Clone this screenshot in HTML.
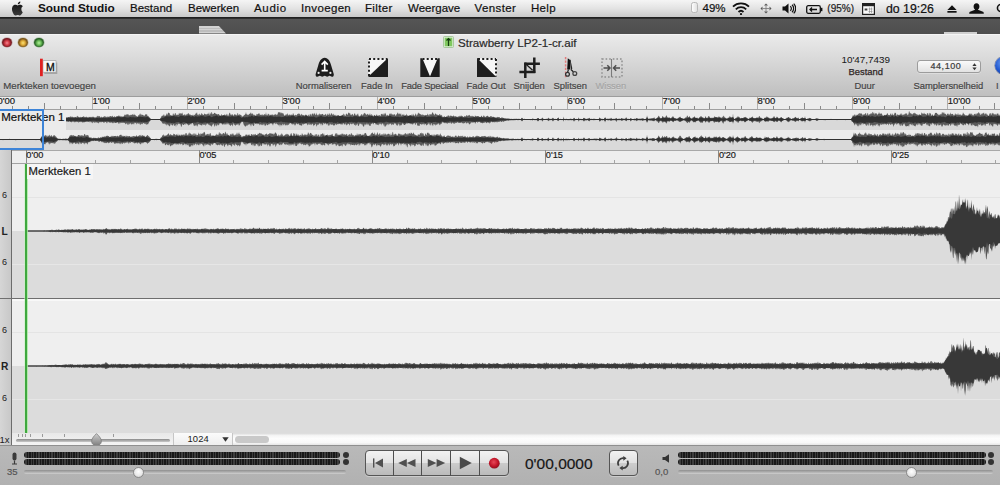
<!DOCTYPE html>
<html><head><meta charset="utf-8">
<style>
*{box-sizing:border-box}
html,body{margin:0;padding:0}
body{width:1000px;height:485px;overflow:hidden;position:relative;background:#4d4d4d;font-family:"Liberation Sans",sans-serif;color:#1a1a1a}
.a{position:absolute}
.t{position:absolute;white-space:nowrap;line-height:1}
.t,.mi,.lbl,.rl{-webkit-text-stroke:0.2px currentColor}
#menubar{left:0;top:0;width:1000px;height:17.5px;background:linear-gradient(#f5f5f5,#e3e3e3 50%,#c9c9c9);border-bottom:1px solid #202020}
.mi{position:absolute;top:2px;font-size:11.5px;line-height:12px;color:#111;white-space:nowrap}
#dark{left:0;top:17.5px;width:1000px;height:16px;background:linear-gradient(#565656,#4e4e4e)}
#toolbar{left:0;top:33.5px;width:1000px;height:62.5px;background:linear-gradient(#eaeaea,#d7d7d7 45%,#bfbfbf);border-top:1px solid #f4f4f4}
.lbl{position:absolute;top:81px;font-size:9.4px;line-height:10px;color:#444;white-space:nowrap;text-shadow:0 1px 0 rgba(255,255,255,.35)}
#tbline{left:0;top:96px;width:1000px;height:1px;background:#9c9c9c}
#ovr{left:0;top:97px;width:1000px;height:12px;background:#ececec}
.tk{position:absolute;width:1px;background:#8a8a8a}
.rl{position:absolute;font-size:9.9px;line-height:10px;color:#1a1a1a;white-space:nowrap}
#ovrl{left:0;top:109px;width:1000px;height:1px;background:#a0a0a0}
#ov{left:0;top:110px;width:1000px;height:40px}
#dr{left:0;top:150px;width:1000px;height:13px;background:#eeeeee;border-top:1px solid #a8a8a8}
#drl{left:0;top:163px;width:1000px;height:1px;background:#a2a2a2}
#gutter{left:0;top:150px;width:12px;height:295px;background:linear-gradient(90deg,#d6d6d6,#c8c8c8);border-right:1px solid #6c6c6c}
.gl{position:absolute;left:2px;font-size:9px;line-height:10px;color:#222}
#hbar{left:12px;top:433px;width:988px;height:12px;background:linear-gradient(#d8d8d8,#f4f4f4 20%,#fdfdfd 45%,#f8f8f8 80%,#e4e4e4)}
#transport{left:0;top:445px;width:1000px;height:40px;background:linear-gradient(#b9b9b9,#b1b1b1);border-top:1px solid #8f8f8f}
.meter{position:absolute;height:5.6px;border-radius:3px;background:#1c1c1c;background-image:repeating-linear-gradient(90deg,#181818 0 1.5px,#3c3c3c 1.5px 2.6px)}
.mdot{position:absolute;width:6px;height:6px;border-radius:50%;background:#333}
.track{position:absolute;height:4px;border-radius:2px;background:linear-gradient(#8e8e8e,#cfcfcf);}
.knob{position:absolute;width:11px;height:11px;border-radius:50%;background:radial-gradient(circle at 50% 40%,#ffffff,#e6e6e6 60%,#bdbdbd);border:1px solid #8a8a8a}
.seg{position:absolute;top:450px;height:25.5px;background:linear-gradient(#f2f2f2,#e3e3e3 50%,#cbcbcb 52%,#bababa);border:1px solid #555;box-shadow:0 1px 0 rgba(255,255,255,.35)}
</style></head><body>

<!-- MENUBAR -->
<div id="menubar" class="a"></div>
<svg class="a" style="left:9.6px;top:0px" width="16.5" height="16.5" viewBox="0 0 15 15"><defs><linearGradient id="ag" x1="0" y1="0" x2="0" y2="1"><stop offset="0" stop-color="#111"/><stop offset="1" stop-color="#3a3a3a"/></linearGradient></defs>
<path d="M10.3 8.1c0-1.6 1.3-2.3 1.4-2.4-.8-1.1-1.9-1.3-2.3-1.3-1-.1-1.9.6-2.4.6-.5 0-1.3-.6-2.1-.6C3.8 4.4 2.8 5 2.3 6c-1.1 2-.3 4.9.8 6.5.5.8 1.1 1.6 1.9 1.6.8 0 1-.5 2-.5s1.2.5 2 .5c.8 0 1.3-.8 1.8-1.5.6-.9.8-1.7.8-1.7s-1.3-.6-1.3-2.8zM8.8 3.2c.4-.5.7-1.2.6-1.9-.6 0-1.3.4-1.7.9-.4.4-.7 1.1-.6 1.8.6 0 1.3-.4 1.7-.8z" fill="url(#ag)"/>
</svg>
<div class="mi" style="left:38px;font-weight:bold;font-size:11.8px;-webkit-text-stroke:0">Sound Studio</div>
<div class="mi" style="left:130px">Bestand</div>
<div class="mi" style="left:188px">Bewerken</div>
<div class="mi" style="left:254px;letter-spacing:0.7px">Audio</div>
<div class="mi" style="left:301px;letter-spacing:0.35px">Invoegen</div>
<div class="mi" style="left:365px;letter-spacing:0.35px">Filter</div>
<div class="mi" style="left:408px">Weergave</div>
<div class="mi" style="left:474.5px;letter-spacing:0.4px">Venster</div>
<div class="mi" style="left:531px;letter-spacing:0.3px">Help</div>
<!-- status items -->
<div class="a" style="left:690.5px;top:2.3px;width:7px;height:11px;border-radius:2.5px;background:linear-gradient(90deg,#fdfdfd,#e2e2e2);border:1px solid #b8b8b8"></div>
<div class="mi" style="left:702.5px">49%</div>
<svg class="a" style="left:732px;top:2px" width="18" height="13" viewBox="0 0 18 13">
<path d="M1 4.6A11.5 11.5 0 0 1 17 4.6" stroke="#111" stroke-width="1.8" fill="none"/>
<path d="M3.8 7.3A7.5 7.5 0 0 1 14.2 7.3" stroke="#111" stroke-width="1.8" fill="none"/>
<path d="M6.5 10A3.6 3.6 0 0 1 11.5 10" stroke="#111" stroke-width="1.8" fill="none"/>
<circle cx="9" cy="12" r="1.1" fill="#111"/>
</svg>
<svg class="a" style="left:759.5px;top:3px" width="12" height="11" viewBox="0 0 12 11">
<path d="M6 0.5L8 2.5H4zM6 10.5L8 8.5H4zM0.5 5.5L2.5 3.5V7.5zM11.5 5.5L9.5 3.5V7.5z" fill="#555"/>
<path d="M6 2.5V8.5M2.5 5.5H9.5" stroke="#777" stroke-width="0.8"/>
</svg>
<svg class="a" style="left:781.5px;top:3px" width="14" height="11" viewBox="0 0 14 11">
<path d="M0.5 3.5H3L6.5 0.5V10.5L3 7.5H0.5z" fill="#111"/>
<path d="M8.3 3.2A3 3 0 0 1 8.3 7.8M10 1.8A5 5 0 0 1 10 9.2M11.7 0.6A7 7 0 0 1 11.7 10.4" stroke="#111" stroke-width="1.2" fill="none"/>
</svg>
<svg class="a" style="left:805.5px;top:4.5px" width="17" height="9" viewBox="0 0 17 9">
<rect x="0.7" y="0.7" width="13.6" height="7.6" rx="1.5" fill="none" stroke="#111" stroke-width="1.3"/>
<rect x="14.6" y="2.8" width="1.8" height="3.4" fill="#111"/>
<path d="M4 4.5H11M6 2.5L4 4.5L6 6.5" stroke="#111" stroke-width="1.3" fill="none"/>
</svg>
<div class="mi" style="left:827.3px;font-size:10px;top:3px;color:#222">(95%)</div>
<svg class="a" style="left:862px;top:2.5px" width="13" height="12" viewBox="0 0 13 12">
<rect x="0.6" y="0.6" width="11.8" height="10.8" fill="#fafafa" stroke="#222" stroke-width="1.2"/>
<rect x="0.6" y="0.6" width="11.8" height="2.6" fill="#222"/>
<path d="M3 5.5L5 7.5M5 5.5L3 7.5M4 5V8M2.5 6.5H5.5" stroke="#333" stroke-width="0.7"/>
<path d="M7.5 4.5V10M9.5 4.5V10M6.5 6H10.5M6.5 8.5H10.5" stroke="#888" stroke-width="0.6"/>
</svg>
<div class="mi" style="left:886px;font-size:12.3px;top:2.5px">do 19:26</div>
<svg class="a" style="left:947px;top:5px" width="10" height="8" viewBox="0 0 10 8">
<path d="M5 0.3L9.6 5H0.4z" fill="#111"/><rect x="0.4" y="6" width="9.2" height="1.7" fill="#111"/>
</svg>
<svg class="a" style="left:969px;top:3px" width="15" height="11" viewBox="0 0 15 11">
<path d="M7.5 0.3C5.6 0.3 4.6 1.8 4.6 3.6c0 1.4.7 2.6 1.5 3.1L1 8.8C.4 9.1.2 9.6.2 10.7H14.8c0-1.1-.2-1.6-.8-1.9L8.9 6.7c.8-.5 1.5-1.7 1.5-3.1C10.4 1.8 9.4.3 7.5.3z" fill="#111"/>
</svg>
<svg class="a" style="left:996px;top:3px" width="8" height="12" viewBox="0 0 8 12">
<circle cx="5" cy="5" r="3.6" stroke="#111" stroke-width="1.5" fill="none"/>
</svg>

<!-- DARK STRIP -->
<div id="dark" class="a"></div>
<div class="a" style="left:0;top:17.5px;width:1000px;height:1px;background:#2e2e2e"></div>
<div class="a" style="left:199px;top:25.5px;width:27px;height:8px;background:repeating-linear-gradient(#d2d2d2 0 1.5px,#bdbdbd 1.5px 3px);clip-path:polygon(0 0,72% 0,100% 100%,0 100%)"></div>
<div class="a" style="left:944px;top:32px;width:33px;height:1.5px;background:#cfcfcf"></div>

<!-- WINDOW TOOLBAR -->
<div id="toolbar" class="a"></div>
<div class="a" style="left:2.1px;top:37.6px;width:9.8px;height:9.8px;border-radius:50%;background:radial-gradient(circle closest-side at 50% 55%,#f08a92,#d8404c 50%,#a82a34 80%,#7a1e24);box-shadow:0 0 0 0.5px rgba(110,30,30,.4)"></div>
<div class="a" style="left:18.2px;top:37.6px;width:9.8px;height:9.8px;border-radius:50%;background:radial-gradient(circle closest-side at 50% 55%,#f8e07a,#e2b03a 50%,#b0802a 80%,#7a581e);box-shadow:0 0 0 0.5px rgba(120,90,20,.4)"></div>
<div class="a" style="left:34.3px;top:37.6px;width:9.8px;height:9.8px;border-radius:50%;background:radial-gradient(circle closest-side at 50% 55%,#b4ef9e,#72c25e 50%,#4a9440 80%,#2c6428);box-shadow:0 0 0 0.5px rgba(40,100,30,.4)"></div>

<!-- title -->
<svg class="a" style="left:443px;top:36px" width="11" height="12" viewBox="0 0 11 12">
<rect x="0.5" y="0.5" width="10" height="11" rx="1" fill="#d8ecd0" stroke="#9cbf90" stroke-width="0.8"/>
<rect x="1.8" y="1.8" width="7.4" height="8.4" fill="#7fc85e"/>
<path d="M5.5 2.5V10M3.5 4.5L5.5 2.5L7.5 4.5" stroke="#153c10" stroke-width="1.2" fill="none"/>
</svg>
<div class="t" style="left:458px;top:37px;font-size:11.6px;color:#2a2a2a">Strawberry LP2-1-cr.aif</div>

<!-- marker add icon -->
<svg class="a" style="left:39px;top:58px" width="20" height="20" viewBox="0 0 20 20">
<rect x="4.5" y="3.5" width="13" height="11.5" fill="#000" opacity="0.2" transform="translate(0.8,1)"/>
<rect x="4" y="2.7" width="13" height="11.5" fill="#f8f8f8" stroke="#9a9a9a" stroke-width="0.6"/>
<rect x="1" y="0.7" width="2.8" height="17.5" fill="#e02121"/>
<text x="11.3" y="12.6" font-family="Liberation Sans" font-size="10.5" text-anchor="middle" fill="#111" stroke="#111" stroke-width="0.35">M</text>
</svg>
<div class="lbl" style="left:3.3px;font-size:9.65px">Merkteken toevoegen</div>

<!-- Normaliseren -->
<svg class="a" style="left:315px;top:57px" width="19" height="21" viewBox="0 0 19 21">
<path d="M9.7 0.8C6.2 0.8 4.3 4.5 3.2 8.5L0.6 17.2C0.4 18.8 1.3 19.8 2.4 19.8C3.4 19.8 3.8 18.8 4.8 18.8C5.8 18.8 6.2 19.8 7.2 19.8C8.2 19.8 8.7 18.8 9.7 18.8C10.7 18.8 11.2 19.8 12.2 19.8C13.2 19.8 13.6 18.8 14.6 18.8C15.6 18.8 16 19.8 17 19.8C18.1 19.8 19 18.8 18.8 17.2L16.2 8.5C15.1 4.5 13.2 0.8 9.7 0.8Z" fill="#1c1c1c"/>
<path d="M9.7 5V13.5M6.6 7.6L9.7 4.4L12.8 7.6M6.6 13.6H12.8" stroke="#fff" stroke-width="1.6" fill="none"/>
<circle cx="3.6" cy="15.9" r="1.1" fill="#e8e8e8"/><circle cx="15.4" cy="15.9" r="1.1" fill="#e8e8e8"/>
</svg>
<div class="lbl" style="left:295.8px">Normaliseren</div>

<!-- Fade In -->
<svg class="a" style="left:368px;top:58px" width="20" height="19" viewBox="0 0 20 19">
<path d="M0.5 0.5H19.5L0.5 18.5Z" fill="#f7f7f7"/>
<path d="M0.5 18.5L19.5 0.5V18.5Z" fill="#1e1e1e"/>
<path d="M19.5 0.5V18.5H0.5" stroke="#1e1e1e" stroke-width="1.2" fill="none"/>
<path d="M1 18V1M1 1H19" stroke="#1e1e1e" stroke-width="2" stroke-dasharray="2 2.2" fill="none"/>
</svg>
<div class="lbl" style="left:361px">Fade In</div>

<!-- Fade Speciaal -->
<svg class="a" style="left:420px;top:57.5px" width="20" height="19.5" viewBox="0 0 20 19.5">
<path d="M2.3 0.3H17.7L10 18.5Z" fill="#f7f7f7"/>
<path d="M0.3 0.3H2.3L10 18.5L17.7 0.3H19.7V19.2H0.3Z" fill="#1e1e1e"/>
<path d="M2.5 1H17.5" stroke="#1e1e1e" stroke-width="2" stroke-dasharray="2 2.2" fill="none"/>
</svg>
<div class="lbl" style="left:401.3px;letter-spacing:-0.22px">Fade Speciaal</div>

<!-- Fade Out -->
<svg class="a" style="left:476.5px;top:57.5px" width="20" height="19.5" viewBox="0 0 20 19.5">
<path d="M0.3 0.3H19.5V19.2Z" fill="#f7f7f7"/>
<path d="M0.3 0.3L19.5 19.2H0.3Z" fill="#1e1e1e"/>
<path d="M0.8 0.3V19.2" stroke="#1e1e1e" stroke-width="1.6" fill="none"/>
<path d="M1 1H19M19 1V18.5" stroke="#1e1e1e" stroke-width="2" stroke-dasharray="2 2.2" fill="none"/>
</svg>
<div class="lbl" style="left:466.5px">Fade Out</div>

<!-- Snijden -->
<svg class="a" style="left:519px;top:56.5px" width="22" height="22" viewBox="0 0 22 22">
<path d="M5.6 6.7H20.9M15.3 0.6V15.9" stroke="#1e1e1e" stroke-width="2.5" fill="none"/>
<path d="M6.3 5.5V21M0.4 14.9H16.3" stroke="#1e1e1e" stroke-width="2.5" fill="none"/>
<path d="M7.6 7.8L13.6 13.3" stroke="#1e1e1e" stroke-width="1.3" fill="none"/>
</svg>
<div class="lbl" style="left:513.5px">Snijden</div>

<!-- Splitsen -->
<svg class="a" style="left:562px;top:56.5px" width="17" height="22" viewBox="0 0 17 22">
<path d="M3.6 0V21.5" stroke="#e27a7a" stroke-width="1.5" stroke-dasharray="2.2 1.4"/>
<path d="M5.8 1.3L8.8 3.5L8 12.5L5.2 12.5Z" fill="#111"/>
<path d="M8.2 1.5L10.3 11.5L8.8 13.2Z" fill="#222"/>
<path d="M6.5 12.5L5.5 15.5M9 12.5L11.5 15" stroke="#222" stroke-width="1.2"/>
<circle cx="5.5" cy="17.2" r="1.9" fill="none" stroke="#333" stroke-width="1.3"/>
<circle cx="12.8" cy="16.5" r="1.9" fill="none" stroke="#444" stroke-width="1.3"/>
</svg>
<div class="lbl" style="left:553.5px">Splitsen</div>

<!-- Wissen -->
<svg class="a" style="left:600.5px;top:57.5px" width="22" height="20" viewBox="0 0 22 20">
<path d="M1 1H21V19H1Z" stroke="#8e8e8e" stroke-width="1.5" stroke-dasharray="1.6 2" fill="none"/>
<path d="M10.5 1V19" stroke="#7a7a7a" stroke-width="1.1"/>
<path d="M2.5 10H9M6.3 7.3L9 10L6.3 12.7M19 10H12.5M15.2 7.3L12.5 10L15.2 12.7" stroke="#4e4e4e" stroke-width="1.5" fill="none"/>
</svg>
<div class="lbl" style="left:595.5px;color:#a5a5a5">Wissen</div>

<!-- right info -->
<div class="t" style="left:841.5px;top:55px;font-size:9.9px;color:#1a1a1a;-webkit-text-stroke:0.05px">10'47,7439</div>
<div class="t" style="left:848.5px;top:67px;font-size:9.4px;font-weight:normal;-webkit-text-stroke:0.25px #2e2424;color:#2e2424">Bestand</div>
<div class="lbl" style="left:854.5px">Duur</div>
<div class="a" style="left:917px;top:60px;width:64px;height:13px;border-radius:3px;background:linear-gradient(#fafafa,#e2e2e2);border:1px solid #9c9c9c;box-shadow:0 0.5px 0 rgba(255,255,255,.6)"></div>
<div class="t" style="left:930.5px;top:62.3px;font-size:9px;letter-spacing:0.55px;color:#3a3a3a">44,100</div>
<svg class="a" style="left:972px;top:63px" width="5" height="7.5" viewBox="0 0 5 7.5"><path d="M2.5 0.3L4.6 2.9H0.4zM2.5 7.2L4.6 4.6H0.4z" fill="#333"/></svg>
<div class="lbl" style="left:913.5px">Samplersnelheid</div>
<div class="a" style="left:995px;top:57px;width:17px;height:17px;border-radius:50%;background:radial-gradient(circle at 45% 35%,#6a9cf0,#2158d0 55%,#123a96);box-shadow:0 0 0 0.6px rgba(20,40,100,.5)"></div>
<div class="lbl" style="left:996px">I</div>

<!-- OVERVIEW RULER -->
<div id="tbline" class="a"></div>
<div id="ovr" class="a"></div>
<div class="tk" style="left:-3.4px;top:97px;height:12px;background:#b0b0b0"></div>
<div class="tk" style="left:12.4px;top:106px;height:3px"></div>
<div class="tk" style="left:28.3px;top:106px;height:3px"></div>
<div class="tk" style="left:44.1px;top:103px;height:6px"></div>
<div class="tk" style="left:60.0px;top:106px;height:3px"></div>
<div class="tk" style="left:75.8px;top:106px;height:3px"></div>
<div class="tk" style="left:91.6px;top:97px;height:12px;background:#b0b0b0"></div>
<div class="tk" style="left:107.5px;top:106px;height:3px"></div>
<div class="tk" style="left:123.3px;top:106px;height:3px"></div>
<div class="tk" style="left:139.1px;top:103px;height:6px"></div>
<div class="tk" style="left:155.0px;top:106px;height:3px"></div>
<div class="tk" style="left:170.8px;top:106px;height:3px"></div>
<div class="tk" style="left:186.7px;top:97px;height:12px;background:#b0b0b0"></div>
<div class="tk" style="left:202.5px;top:106px;height:3px"></div>
<div class="tk" style="left:218.3px;top:106px;height:3px"></div>
<div class="tk" style="left:234.2px;top:103px;height:6px"></div>
<div class="tk" style="left:250.0px;top:106px;height:3px"></div>
<div class="tk" style="left:265.9px;top:106px;height:3px"></div>
<div class="tk" style="left:281.7px;top:97px;height:12px;background:#b0b0b0"></div>
<div class="tk" style="left:297.5px;top:106px;height:3px"></div>
<div class="tk" style="left:313.4px;top:106px;height:3px"></div>
<div class="tk" style="left:329.2px;top:103px;height:6px"></div>
<div class="tk" style="left:345.0px;top:106px;height:3px"></div>
<div class="tk" style="left:360.9px;top:106px;height:3px"></div>
<div class="tk" style="left:376.7px;top:97px;height:12px;background:#b0b0b0"></div>
<div class="tk" style="left:392.6px;top:106px;height:3px"></div>
<div class="tk" style="left:408.4px;top:106px;height:3px"></div>
<div class="tk" style="left:424.2px;top:103px;height:6px"></div>
<div class="tk" style="left:440.1px;top:106px;height:3px"></div>
<div class="tk" style="left:455.9px;top:106px;height:3px"></div>
<div class="tk" style="left:471.8px;top:97px;height:12px;background:#b0b0b0"></div>
<div class="tk" style="left:487.6px;top:106px;height:3px"></div>
<div class="tk" style="left:503.4px;top:106px;height:3px"></div>
<div class="tk" style="left:519.3px;top:103px;height:6px"></div>
<div class="tk" style="left:535.1px;top:106px;height:3px"></div>
<div class="tk" style="left:550.9px;top:106px;height:3px"></div>
<div class="tk" style="left:566.8px;top:97px;height:12px;background:#b0b0b0"></div>
<div class="tk" style="left:582.6px;top:106px;height:3px"></div>
<div class="tk" style="left:598.5px;top:106px;height:3px"></div>
<div class="tk" style="left:614.3px;top:103px;height:6px"></div>
<div class="tk" style="left:630.1px;top:106px;height:3px"></div>
<div class="tk" style="left:646.0px;top:106px;height:3px"></div>
<div class="tk" style="left:661.8px;top:97px;height:12px;background:#b0b0b0"></div>
<div class="tk" style="left:677.6px;top:106px;height:3px"></div>
<div class="tk" style="left:693.5px;top:106px;height:3px"></div>
<div class="tk" style="left:709.3px;top:103px;height:6px"></div>
<div class="tk" style="left:725.2px;top:106px;height:3px"></div>
<div class="tk" style="left:741.0px;top:106px;height:3px"></div>
<div class="tk" style="left:756.8px;top:97px;height:12px;background:#b0b0b0"></div>
<div class="tk" style="left:772.7px;top:106px;height:3px"></div>
<div class="tk" style="left:788.5px;top:106px;height:3px"></div>
<div class="tk" style="left:804.4px;top:103px;height:6px"></div>
<div class="tk" style="left:820.2px;top:106px;height:3px"></div>
<div class="tk" style="left:836.0px;top:106px;height:3px"></div>
<div class="tk" style="left:851.9px;top:97px;height:12px;background:#b0b0b0"></div>
<div class="tk" style="left:867.7px;top:106px;height:3px"></div>
<div class="tk" style="left:883.5px;top:106px;height:3px"></div>
<div class="tk" style="left:899.4px;top:103px;height:6px"></div>
<div class="tk" style="left:915.2px;top:106px;height:3px"></div>
<div class="tk" style="left:931.1px;top:106px;height:3px"></div>
<div class="tk" style="left:946.9px;top:97px;height:12px;background:#b0b0b0"></div>
<div class="tk" style="left:962.7px;top:106px;height:3px"></div>
<div class="tk" style="left:978.6px;top:106px;height:3px"></div>
<div class="tk" style="left:994.4px;top:103px;height:6px"></div>
<div class="rl" style="left:-2.6px;top:96px;font-size:9.5px">0'00</div>
<div class="rl" style="left:92.4px;top:96px;font-size:9.5px">1'00</div>
<div class="rl" style="left:187.5px;top:96px;font-size:9.5px">2'00</div>
<div class="rl" style="left:282.5px;top:96px;font-size:9.5px">3'00</div>
<div class="rl" style="left:377.5px;top:96px;font-size:9.5px">4'00</div>
<div class="rl" style="left:472.6px;top:96px;font-size:9.5px">5'00</div>
<div class="rl" style="left:567.6px;top:96px;font-size:9.5px">6'00</div>
<div class="rl" style="left:662.6px;top:96px;font-size:9.5px">7'00</div>
<div class="rl" style="left:757.6px;top:96px;font-size:9.5px">8'00</div>
<div class="rl" style="left:852.7px;top:96px;font-size:9.5px">9'00</div>
<div class="rl" style="left:947.7px;top:96px;font-size:9.5px">10'00</div>
<div id="ovrl" class="a"></div>

<!-- OVERVIEW WAVE -->
<div class="a" style="left:0;top:110px;width:1000px;height:9.5px;background:#ececec"></div>
<div class="a" style="left:0;top:119.5px;width:1000px;height:10px;background:#d9d9d9"></div>
<div class="a" style="left:0;top:129.5px;width:1000px;height:10px;background:#ececec"></div>
<div class="a" style="left:0;top:139.5px;width:1000px;height:10px;background:#d9d9d9"></div>
<div class="a" style="left:0;top:149px;width:1000px;height:1px;background:#d9d9d9"></div>
<svg class="a" style="left:0;top:0" width="1000" height="485">
<path d="M0,119.0 0.5,119.0 1,119.0 1.5,119.0 2,119.0 2.5,119.0 3,119.0 3.5,119.0 4,119.0 4.5,119.0 5,119.0 5.5,119.0 6,119.0 6.5,119.0 7,119.0 7.5,119.0 8,119.0 8.5,119.0 9,119.0 9.5,119.0 10,119.0 10.5,119.0 11,119.0 11.5,119.0 12,119.0 12.5,119.0 13,119.0 13.5,119.0 14,118.9 14.5,119.0 15,119.0 15.5,119.0 16,119.0 16.5,119.0 17,119.0 17.5,119.0 18,119.0 18.5,119.0 19,119.0 19.5,119.0 20,119.0 20.5,119.0 21,119.0 21.5,119.0 22,119.0 22.5,119.0 23,119.0 23.5,119.0 24,119.0 24.5,119.0 25,119.0 25.5,119.0 26,119.0 26.5,119.0 27,119.0 27.5,119.0 28,119.0 28.5,118.9 29,119.0 29.5,119.0 30,119.0 30.5,119.0 31,119.0 31.5,119.0 32,119.0 32.5,119.0 33,119.0 33.5,119.0 34,119.0 34.5,119.0 35,119.0 35.5,119.0 36,119.0 36.5,119.0 37,119.0 37.5,119.0 38,119.0 38.5,119.0 39,119.0 39.5,119.0 40,119.0 40.5,119.0 41,119.0 41.5,119.0 42,119.0 42.5,119.0 43,119.0 43.5,119.0 44,119.0 44.5,119.0 45,119.0 45.5,119.0 46,119.0 46.5,119.0 47,119.0 47.5,119.0 48,119.0 48.5,119.0 49,119.0 49.5,119.0 50,119.0 50.5,119.0 51,119.0 51.5,119.0 52,119.0 52.5,119.0 53,119.0 53.5,119.0 54,119.0 54.5,119.0 55,119.0 55.5,119.0 56,119.0 56.5,119.0 57,119.0 57.5,119.0 58,119.0 58.5,119.0 59,119.0 59.5,119.0 60,119.0 60.5,119.0 61,119.0 61.5,119.0 62,119.0 62.5,118.6 63,118.6 63.5,118.1 64,118.2 64.5,118.2 65,117.2 65.5,116.9 66,117.0 66.5,117.3 67,118.0 67.5,117.3 68,117.0 68.5,117.1 69,116.9 69.5,116.7 70,117.8 70.5,116.3 71,116.3 71.5,117.3 72,116.5 72.5,116.8 73,117.3 73.5,117.1 74,117.6 74.5,117.2 75,116.7 75.5,117.2 76,117.4 76.5,117.4 77,115.7 77.5,115.9 78,117.1 78.5,116.4 79,117.4 79.5,117.1 80,117.4 80.5,116.7 81,117.0 81.5,117.8 82,116.7 82.5,117.3 83,116.5 83.5,116.1 84,117.2 84.5,116.5 85,117.6 85.5,116.8 86,117.3 86.5,116.5 87,116.9 87.5,117.2 88,117.5 88.5,117.4 89,116.4 89.5,117.3 90,117.1 90.5,117.2 91,116.6 91.5,117.2 92,117.1 92.5,116.9 93,116.3 93.5,116.9 94,117.0 94.5,117.4 95,117.3 95.5,117.5 96,117.2 96.5,117.3 97,115.9 97.5,115.8 98,116.9 98.5,115.7 99,116.5 99.5,116.1 100,116.4 100.5,117.5 101,117.5 101.5,116.5 102,117.1 102.5,117.6 103,117.3 103.5,116.7 104,116.6 104.5,116.6 105,115.8 105.5,116.8 106,117.0 106.5,117.3 107,116.2 107.5,116.8 108,116.9 108.5,116.4 109,117.1 109.5,116.5 110,116.1 110.5,116.2 111,116.0 111.5,116.4 112,116.8 112.5,115.6 113,116.5 113.5,116.9 114,117.0 114.5,115.9 115,116.8 115.5,117.1 116,116.8 116.5,116.1 117,116.6 117.5,116.1 118,116.1 118.5,115.8 119,115.2 119.5,116.4 120,115.5 120.5,116.6 121,116.8 121.5,116.1 122,117.1 122.5,116.6 123,116.2 123.5,116.8 124,116.0 124.5,115.0 125,114.2 125.5,115.1 126,115.5 126.5,114.3 127,114.3 127.5,114.6 128,114.3 128.5,114.5 129,115.8 129.5,115.1 130,115.6 130.5,115.1 131,114.4 131.5,115.2 132,114.5 132.5,114.1 133,115.2 133.5,114.9 134,113.5 134.5,114.7 135,115.2 135.5,114.8 136,116.6 136.5,115.8 137,116.6 137.5,116.7 138,116.2 138.5,114.8 139,115.7 139.5,114.6 140,113.4 140.5,113.7 141,115.8 141.5,114.4 142,114.3 142.5,115.0 143,114.9 143.5,115.2 144,115.9 144.5,115.8 145,114.7 145.5,114.6 146,114.0 146.5,114.7 147,113.9 147.5,116.2 148,115.7 148.5,116.2 149,117.0 149.5,117.3 150,118.2 150.5,118.8 151,119.0 151.5,119.0 152,119.0 152.5,119.0 153,119.0 153.5,119.0 154,119.0 154.5,119.0 155,119.0 155.5,119.0 156,119.0 156.5,119.0 157,119.0 157.5,119.0 158,119.0 158.5,119.0 159,119.0 159.5,119.0 160,119.0 160.5,118.0 161,117.5 161.5,116.3 162,115.8 162.5,115.5 163,115.9 163.5,114.9 164,114.1 164.5,115.7 165,116.4 165.5,115.4 166,115.3 166.5,113.1 167,115.3 167.5,114.2 168,113.1 168.5,112.4 169,112.9 169.5,113.0 170,115.0 170.5,114.7 171,115.8 171.5,115.3 172,115.5 172.5,115.7 173,113.3 173.5,113.7 174,115.2 174.5,114.7 175,113.0 175.5,113.1 176,115.1 176.5,115.2 177,114.0 177.5,115.2 178,114.6 178.5,115.2 179,112.6 179.5,114.1 180,113.2 180.5,112.9 181,114.5 181.5,112.8 182,113.9 182.5,112.3 183,115.6 183.5,114.7 184,114.9 184.5,114.5 185,114.0 185.5,115.8 186,114.5 186.5,114.6 187,114.6 187.5,114.3 188,113.3 188.5,113.2 189,113.8 189.5,114.2 190,115.5 190.5,114.3 191,115.1 191.5,115.2 192,115.2 192.5,115.5 193,114.2 193.5,115.8 194,115.4 194.5,114.7 195,114.8 195.5,114.0 196,112.7 196.5,113.8 197,112.0 197.5,115.3 198,114.3 198.5,114.5 199,115.8 199.5,113.5 200,114.0 200.5,114.9 201,115.1 201.5,112.9 202,113.6 202.5,114.2 203,115.1 203.5,115.1 204,114.5 204.5,113.2 205,114.0 205.5,114.1 206,115.0 206.5,113.9 207,114.4 207.5,113.9 208,113.2 208.5,114.4 209,111.9 209.5,114.7 210,114.8 210.5,112.4 211,114.5 211.5,111.7 212,112.4 212.5,114.4 213,114.0 213.5,113.9 214,113.2 214.5,112.8 215,113.1 215.5,113.4 216,114.1 216.5,113.8 217,114.5 217.5,114.5 218,113.9 218.5,113.9 219,114.4 219.5,114.9 220,115.9 220.5,116.0 221,114.8 221.5,114.0 222,115.7 222.5,114.9 223,115.4 223.5,115.1 224,115.0 224.5,113.9 225,115.8 225.5,114.4 226,115.4 226.5,114.4 227,113.5 227.5,115.3 228,116.1 228.5,115.5 229,113.7 229.5,113.0 230,112.4 230.5,115.1 231,114.3 231.5,115.4 232,113.7 232.5,114.6 233,115.0 233.5,115.9 234,114.9 234.5,114.2 235,113.9 235.5,115.1 236,114.6 236.5,115.1 237,115.7 237.5,113.0 238,113.2 238.5,115.2 239,115.0 239.5,114.3 240,114.3 240.5,115.3 241,114.8 241.5,115.5 242,116.9 242.5,116.2 243,116.6 243.5,115.8 244,115.2 244.5,115.0 245,114.5 245.5,114.0 246,111.9 246.5,114.8 247,113.7 247.5,115.3 248,114.5 248.5,115.1 249,114.3 249.5,113.5 250,114.3 250.5,112.7 251,112.6 251.5,113.7 252,114.5 252.5,113.1 253,114.0 253.5,115.5 254,113.9 254.5,115.4 255,114.7 255.5,115.7 256,116.2 256.5,114.3 257,113.7 257.5,114.5 258,114.2 258.5,113.6 259,113.2 259.5,113.5 260,115.3 260.5,114.6 261,115.1 261.5,115.3 262,113.8 262.5,114.8 263,115.4 263.5,115.1 264,114.6 264.5,114.3 265,114.3 265.5,114.9 266,112.1 266.5,115.5 267,114.2 267.5,115.8 268,113.2 268.5,114.5 269,113.7 269.5,115.7 270,114.5 270.5,115.0 271,114.7 271.5,114.4 272,115.2 272.5,114.4 273,114.2 273.5,115.6 274,115.1 274.5,114.4 275,114.4 275.5,113.7 276,115.2 276.5,114.9 277,114.1 277.5,115.0 278,112.3 278.5,112.2 279,112.5 279.5,112.4 280,111.7 280.5,113.8 281,111.8 281.5,113.4 282,112.8 282.5,113.0 283,114.1 283.5,112.9 284,115.4 284.5,115.2 285,115.9 285.5,114.6 286,114.8 286.5,114.1 287,115.5 287.5,113.1 288,114.2 288.5,115.4 289,114.9 289.5,114.3 290,114.9 290.5,114.5 291,115.8 291.5,114.1 292,115.5 292.5,115.0 293,113.0 293.5,113.8 294,115.2 294.5,115.4 295,115.3 295.5,114.4 296,115.6 296.5,115.3 297,114.7 297.5,113.9 298,113.8 298.5,113.3 299,114.6 299.5,113.3 300,114.6 300.5,115.7 301,113.9 301.5,113.7 302,115.5 302.5,114.6 303,115.2 303.5,115.3 304,114.8 304.5,115.9 305,115.1 305.5,114.8 306,114.6 306.5,115.1 307,115.6 307.5,115.8 308,115.7 308.5,114.3 309,116.0 309.5,115.7 310,113.6 310.5,115.1 311,113.6 311.5,116.2 312,113.6 312.5,113.4 313,114.1 313.5,115.1 314,112.6 314.5,114.1 315,113.3 315.5,115.2 316,115.1 316.5,112.5 317,115.1 317.5,114.6 318,116.1 318.5,113.7 319,115.6 319.5,113.2 320,113.9 320.5,114.6 321,114.4 321.5,114.5 322,113.8 322.5,114.0 323,114.1 323.5,114.9 324,115.5 324.5,114.5 325,115.3 325.5,113.7 326,114.0 326.5,116.3 327,114.3 327.5,114.7 328,113.0 328.5,115.2 329,114.6 329.5,112.8 330,115.3 330.5,115.1 331,113.3 331.5,113.4 332,113.5 332.5,115.0 333,114.4 333.5,113.5 334,115.8 334.5,114.9 335,114.6 335.5,115.9 336,114.4 336.5,115.9 337,115.7 337.5,115.0 338,115.5 338.5,115.1 339,115.3 339.5,116.2 340,116.0 340.5,116.3 341,115.1 341.5,115.9 342,115.1 342.5,115.1 343,114.6 343.5,113.2 344,115.9 344.5,113.8 345,116.3 345.5,115.7 346,113.7 346.5,113.6 347,114.6 347.5,115.0 348,113.6 348.5,112.4 349,112.8 349.5,113.8 350,112.6 350.5,115.1 351,114.5 351.5,115.4 352,113.7 352.5,113.9 353,114.8 353.5,116.0 354,114.2 354.5,113.5 355,113.3 355.5,115.0 356,115.5 356.5,115.2 357,113.9 357.5,114.8 358,113.0 358.5,115.4 359,115.9 359.5,116.4 360,115.6 360.5,115.9 361,114.6 361.5,113.7 362,115.5 362.5,115.4 363,113.8 363.5,115.0 364,112.7 364.5,113.6 365,112.8 365.5,113.9 366,114.4 366.5,115.3 367,113.7 367.5,114.4 368,113.5 368.5,115.3 369,114.7 369.5,114.7 370,113.0 370.5,115.6 371,114.5 371.5,114.1 372,115.9 372.5,114.5 373,116.5 373.5,116.5 374,114.7 374.5,114.9 375,115.4 375.5,116.3 376,115.7 376.5,114.6 377,114.6 377.5,115.8 378,115.9 378.5,115.5 379,115.0 379.5,114.9 380,116.1 380.5,115.9 381,114.1 381.5,113.8 382,114.6 382.5,113.5 383,115.6 383.5,112.9 384,115.5 384.5,112.7 385,114.4 385.5,112.4 386,114.4 386.5,115.6 387,115.9 387.5,114.5 388,115.2 388.5,115.9 389,114.9 389.5,113.7 390,113.5 390.5,113.6 391,114.8 391.5,113.0 392,115.1 392.5,113.7 393,115.6 393.5,114.4 394,114.3 394.5,114.3 395,114.5 395.5,115.7 396,115.8 396.5,114.3 397,114.1 397.5,112.7 398,112.4 398.5,113.9 399,114.5 399.5,112.9 400,114.5 400.5,114.3 401,113.1 401.5,115.7 402,115.4 402.5,114.5 403,114.3 403.5,115.4 404,113.5 404.5,116.0 405,114.9 405.5,115.2 406,115.6 406.5,113.5 407,115.3 407.5,115.6 408,115.6 408.5,116.1 409,116.3 409.5,114.7 410,116.0 410.5,115.4 411,115.4 411.5,115.8 412,113.5 412.5,115.4 413,115.8 413.5,113.4 414,115.7 414.5,115.4 415,115.5 415.5,113.5 416,113.7 416.5,115.8 417,115.6 417.5,114.6 418,113.0 418.5,112.5 419,114.1 419.5,113.2 420,114.1 420.5,114.0 421,114.9 421.5,115.3 422,113.7 422.5,114.7 423,115.5 423.5,114.5 424,115.4 424.5,115.2 425,115.2 425.5,114.8 426,115.6 426.5,114.9 427,115.1 427.5,113.2 428,115.5 428.5,114.3 429,116.2 429.5,114.2 430,114.1 430.5,114.6 431,114.4 431.5,114.6 432,113.2 432.5,112.3 433,112.6 433.5,113.9 434,114.6 434.5,115.4 435,113.4 435.5,113.4 436,113.9 436.5,114.9 437,113.8 437.5,115.3 438,115.1 438.5,114.9 439,115.6 439.5,113.9 440,113.9 440.5,115.7 441,114.4 441.5,115.4 442,115.3 442.5,116.9 443,116.8 443.5,117.1 444,116.4 444.5,116.0 445,117.3 445.5,117.2 446,116.7 446.5,116.6 447,116.1 447.5,116.7 448,114.7 448.5,115.9 449,115.3 449.5,116.7 450,116.0 450.5,115.4 451,115.7 451.5,115.7 452,116.3 452.5,116.3 453,116.1 453.5,115.3 454,116.2 454.5,116.4 455,115.9 455.5,116.5 456,116.1 456.5,116.8 457,116.9 457.5,117.1 458,116.3 458.5,116.6 459,116.5 459.5,115.5 460,117.0 460.5,115.8 461,115.8 461.5,115.6 462,116.6 462.5,116.0 463,116.5 463.5,116.9 464,117.0 464.5,115.7 465,116.6 465.5,116.3 466,116.4 466.5,115.0 467,115.2 467.5,116.6 468,115.1 468.5,115.7 469,115.3 469.5,114.7 470,115.9 470.5,116.6 471,115.4 471.5,116.2 472,116.4 472.5,115.5 473,116.8 473.5,115.8 474,117.1 474.5,117.0 475,115.3 475.5,116.1 476,116.3 476.5,116.2 477,116.2 477.5,115.9 478,115.9 478.5,116.0 479,116.8 479.5,116.8 480,117.1 480.5,116.9 481,116.4 481.5,115.5 482,116.2 482.5,117.2 483,117.0 483.5,115.4 484,115.6 484.5,116.3 485,117.3 485.5,117.4 486,116.1 486.5,116.4 487,115.7 487.5,115.8 488,115.9 488.5,116.7 489,116.7 489.5,117.2 490,116.6 490.5,116.3 491,116.1 491.5,116.5 492,116.6 492.5,117.2 493,116.5 493.5,117.0 494,116.7 494.5,117.6 495,117.4 495.5,117.4 496,117.4 496.5,117.6 497,117.3 497.5,116.8 498,117.5 498.5,116.9 499,116.9 499.5,117.1 500,117.9 500.5,117.9 501,118.0 501.5,117.5 502,117.2 502.5,117.7 503,117.8 503.5,118.1 504,118.1 504.5,118.3 505,118.4 505.5,118.2 506,118.5 506.5,118.4 507,118.7 507.5,118.3 508,118.4 508.5,118.6 509,118.6 509.5,118.7 510,118.8 510.5,118.9 511,118.8 511.5,118.8 512,119.0 512.5,119.0 513,118.8 513.5,118.9 514,118.8 514.5,118.8 515,118.9 515.5,118.7 516,118.8 516.5,118.8 517,118.7 517.5,118.9 518,118.8 518.5,118.8 519,118.9 519.5,118.7 520,119.0 520.5,118.9 521,118.9 521.5,118.6 522,117.4 522.5,118.7 523,118.9 523.5,119.0 524,118.8 524.5,118.8 525,118.9 525.5,119.0 526,119.0 526.5,118.9 527,119.0 527.5,119.0 528,119.0 528.5,119.0 529,119.0 529.5,119.0 530,118.9 530.5,119.0 531,119.0 531.5,119.0 532,119.0 532.5,118.3 533,118.7 533.5,118.8 534,119.0 534.5,118.9 535,118.9 535.5,118.9 536,118.9 536.5,118.8 537,119.0 537.5,118.3 538,118.0 538.5,118.1 539,118.9 539.5,119.0 540,118.9 540.5,118.9 541,118.8 541.5,119.0 542,118.4 542.5,117.3 543,118.7 543.5,118.9 544,118.9 544.5,118.9 545,119.0 545.5,118.9 546,118.8 546.5,118.7 547,119.0 547.5,119.0 548,118.3 548.5,117.4 549,118.6 549.5,118.8 550,118.8 550.5,119.0 551,118.8 551.5,118.8 552,119.0 552.5,118.2 553,117.4 553.5,119.0 554,118.8 554.5,118.9 555,118.9 555.5,118.8 556,118.9 556.5,118.9 557,119.0 557.5,118.7 558,117.7 558.5,117.2 559,118.9 559.5,119.0 560,118.9 560.5,118.8 561,119.0 561.5,119.0 562,119.0 562.5,118.9 563,118.9 563.5,116.6 564,119.0 564.5,118.8 565,118.9 565.5,118.9 566,118.7 566.5,118.7 567,119.0 567.5,118.9 568,119.0 568.5,118.9 569,118.9 569.5,119.0 570,118.8 570.5,118.6 571,119.0 571.5,118.7 572,118.9 572.5,119.0 573,118.9 573.5,118.9 574,117.6 574.5,118.3 575,118.9 575.5,119.0 576,119.0 576.5,118.7 577,118.9 577.5,118.9 578,119.0 578.5,117.3 579,118.5 579.5,118.9 580,118.8 580.5,119.0 581,118.8 581.5,119.0 582,118.9 582.5,118.9 583,119.0 583.5,118.4 584,117.4 584.5,118.7 585,118.7 585.5,118.6 586,118.9 586.5,118.9 587,118.6 587.5,118.7 588,118.6 588.5,118.8 589,118.1 589.5,117.8 590,118.7 590.5,119.0 591,118.8 591.5,118.8 592,119.0 592.5,118.9 593,118.7 593.5,118.7 594,118.7 594.5,118.7 595,118.8 595.5,118.9 596,119.0 596.5,118.9 597,119.0 597.5,118.9 598,118.9 598.5,118.9 599,118.8 599.5,117.3 600,117.9 600.5,118.9 601,118.7 601.5,118.7 602,118.9 602.5,118.7 603,118.9 603.5,118.9 604,118.9 604.5,118.2 605,117.2 605.5,117.5 606,118.7 606.5,118.9 607,118.6 607.5,118.7 608,118.8 608.5,118.8 609,118.8 609.5,118.6 610,118.8 610.5,119.0 611,117.6 611.5,118.5 612,118.7 612.5,118.9 613,118.7 613.5,118.7 614,118.9 614.5,118.8 615,118.8 615.5,118.6 616,118.5 616.5,117.7 617,118.7 617.5,119.0 618,118.7 618.5,118.7 619,118.8 619.5,118.6 620,119.0 620.5,118.8 621,118.8 621.5,118.0 622,118.0 622.5,118.9 623,118.7 623.5,118.8 624,118.6 624.5,118.7 625,119.0 625.5,118.7 626,117.2 626.5,117.5 627,118.9 627.5,118.8 628,118.7 628.5,118.7 629,118.9 629.5,118.9 630,118.7 630.5,118.3 631,118.3 631.5,118.9 632,119.0 632.5,119.0 633,119.0 633.5,118.9 634,118.8 634.5,118.7 635,118.6 635.5,118.9 636,118.4 636.5,117.9 637,118.3 637.5,118.6 638,118.9 638.5,118.8 639,118.6 639.5,118.7 640,118.8 640.5,118.7 641,118.6 641.5,118.6 642,118.6 642.5,118.3 643,118.4 643.5,118.5 644,119.0 644.5,118.9 645,118.9 645.5,118.7 646,119.0 646.5,118.7 647,115.2 647.5,117.6 648,118.8 648.5,118.7 649,118.5 649.5,118.4 650,118.8 650.5,118.2 651,118.6 651.5,118.0 652,118.5 652.5,117.9 653,118.3 653.5,117.9 654,117.6 654.5,117.6 655,119.0 655.5,118.8 656,118.4 656.5,118.2 657,118.0 657.5,117.6 658,116.7 658.5,115.6 659,116.5 659.5,116.4 660,117.8 660.5,118.1 661,118.5 661.5,118.2 662,117.5 662.5,115.9 663,116.0 663.5,117.7 664,117.0 664.5,117.4 665,117.8 665.5,116.9 666,115.7 666.5,115.3 667,116.5 667.5,117.3 668,117.8 668.5,118.0 669,117.1 669.5,117.8 670,118.2 670.5,118.3 671,118.3 671.5,117.4 672,117.2 672.5,116.8 673,115.8 673.5,117.1 674,117.6 674.5,118.3 675,118.5 675.5,118.2 676,118.4 676.5,119.0 677,118.9 677.5,118.4 678,118.3 678.5,117.7 679,117.2 679.5,116.9 680,116.7 680.5,116.8 681,117.9 681.5,118.0 682,118.1 682.5,118.2 683,118.4 683.5,118.7 684,118.6 684.5,118.5 685,118.1 685.5,117.4 686,117.2 686.5,117.5 687,115.6 687.5,115.8 688,116.8 688.5,117.7 689,117.1 689.5,116.1 690,116.7 690.5,118.2 691,118.3 691.5,118.7 692,118.3 692.5,118.0 693,117.1 693.5,117.6 694,117.2 694.5,115.7 695,117.7 695.5,117.6 696,118.1 696.5,118.1 697,117.3 697.5,118.0 698,118.8 698.5,118.5 699,117.8 699.5,117.0 700,117.4 700.5,116.1 701,116.6 701.5,116.0 702,117.4 702.5,117.4 703,117.0 703.5,117.9 704,118.4 704.5,118.6 705,117.5 705.5,116.1 706,117.0 706.5,118.1 707,117.9 707.5,117.7 708,117.1 708.5,116.1 709,116.0 709.5,116.7 710,117.8 710.5,117.8 711,118.3 711.5,118.5 712,116.8 712.5,118.4 713,117.8 713.5,118.0 714,117.1 714.5,116.3 715,116.8 715.5,117.1 716,116.9 716.5,116.9 717,117.4 717.5,116.9 718,117.4 718.5,117.1 719,115.8 719.5,117.6 720,117.1 720.5,117.4 721,117.7 721.5,117.6 722,117.9 722.5,116.5 723,117.1 723.5,115.5 724,116.3 724.5,117.1 725,117.7 725.5,117.8 726,118.0 726.5,118.3 727,118.7 727.5,118.5 728,117.6 728.5,117.7 729,117.5 729.5,116.5 730,116.0 730.5,117.3 731,117.1 731.5,117.7 732,117.1 732.5,118.0 733,113.6 733.5,118.2 734,118.9 734.5,118.9 735,118.6 735.5,118.0 736,118.2 736.5,117.3 737,117.8 737.5,116.7 738,116.1 738.5,117.0 739,116.8 739.5,117.3 740,117.9 740.5,118.3 741,118.7 741.5,117.8 742,117.9 742.5,118.0 743,118.4 743.5,117.6 744,117.2 744.5,117.0 745,117.5 745.5,116.7 746,117.3 746.5,117.6 747,118.2 747.5,118.3 748,118.8 748.5,118.7 749,119.0 749.5,118.3 750,117.1 750.5,118.3 751,118.2 751.5,116.9 752,116.9 752.5,116.3 753,117.6 753.5,117.9 754,118.0 754.5,118.0 755,118.2 755.5,117.9 756,118.1 756.5,117.8 757,117.5 757.5,117.7 758,117.8 758.5,117.6 759,116.3 759.5,115.9 760,116.8 760.5,117.9 761,117.6 761.5,117.9 762,118.2 762.5,118.6 763,118.9 763.5,119.0 764,118.4 764.5,117.9 765,117.3 765.5,118.1 766,117.4 766.5,116.6 767,116.6 767.5,116.9 768,117.3 768.5,117.7 769,117.4 769.5,118.5 770,118.4 770.5,118.7 771,117.9 771.5,118.7 772,118.1 772.5,117.8 773,117.7 773.5,116.9 774,115.8 774.5,116.7 775,117.8 775.5,117.9 776,118.2 776.5,117.0 777,116.6 777.5,117.3 778,117.5 778.5,118.5 779,118.7 779.5,118.1 780,118.1 780.5,117.7 781,117.1 781.5,116.9 782,117.9 782.5,118.1 783,118.6 783.5,118.6 784,118.9 784.5,119.0 785,119.0 785.5,118.8 786,118.6 786.5,118.0 787,117.6 787.5,117.9 788,116.9 788.5,117.0 789,116.9 789.5,118.0 790,117.8 790.5,118.2 791,118.8 791.5,119.0 792,119.0 792.5,118.5 793,118.3 793.5,118.4 794,118.2 794.5,117.8 795,116.7 795.5,116.9 796,117.0 796.5,118.3 797,118.1 797.5,118.7 798,117.6 798.5,117.8 799,119.0 799.5,119.0 800,118.9 800.5,118.6 801,118.1 801.5,118.0 802,117.6 802.5,117.2 803,117.9 803.5,117.9 804,118.1 804.5,118.6 805,116.0 805.5,119.0 806,119.0 806.5,119.0 807,118.9 807.5,118.6 808,118.5 808.5,118.6 809,118.2 809.5,117.7 810,118.2 810.5,118.0 811,118.7 811.5,118.9 812,119.0 812.5,119.0 813,119.0 813.5,119.0 814,119.0 814.5,119.0 815,119.0 815.5,118.7 816,118.8 816.5,118.5 817,118.5 817.5,118.7 818,118.5 818.5,118.7 819,119.0 819.5,119.0 820,119.0 820.5,119.0 821,119.0 821.5,119.0 822,119.0 822.5,119.0 823,119.0 823.5,118.9 824,119.0 824.5,119.0 825,119.0 825.5,118.9 826,119.0 826.5,119.0 827,119.0 827.5,119.0 828,119.0 828.5,119.0 829,119.0 829.5,119.0 830,119.0 830.5,118.9 831,118.8 831.5,119.0 832,119.0 832.5,119.0 833,119.0 833.5,119.0 834,119.0 834.5,119.0 835,119.0 835.5,119.0 836,119.0 836.5,118.9 837,118.9 837.5,118.9 838,118.9 838.5,119.0 839,118.9 839.5,119.0 840,119.0 840.5,119.0 841,119.0 841.5,119.0 842,119.0 842.5,119.0 843,119.0 843.5,118.9 844,119.0 844.5,119.0 845,119.0 845.5,119.0 846,119.0 846.5,119.0 847,119.0 847.5,119.0 848,119.0 848.5,119.0 849,119.0 849.5,119.0 850,119.0 850.5,119.0 851,119.0 851.5,118.4 852,117.3 852.5,116.2 853,115.0 853.5,115.9 854,115.2 854.5,113.9 855,115.9 855.5,115.4 856,114.2 856.5,115.9 857,114.5 857.5,115.0 858,114.6 858.5,113.2 859,114.8 859.5,113.0 860,113.1 860.5,114.1 861,112.9 861.5,113.8 862,113.7 862.5,115.7 863,113.9 863.5,114.8 864,114.7 864.5,114.1 865,114.4 865.5,113.0 866,113.0 866.5,115.3 867,115.1 867.5,113.0 868,113.2 868.5,115.3 869,115.2 869.5,113.8 870,114.8 870.5,113.6 871,113.5 871.5,113.0 872,114.5 872.5,111.7 873,112.3 873.5,113.9 874,111.9 874.5,115.0 875,113.0 875.5,113.2 876,113.9 876.5,112.7 877,114.6 877.5,114.8 878,114.0 878.5,113.8 879,112.0 879.5,113.3 880,114.2 880.5,113.4 881,113.5 881.5,113.2 882,114.3 882.5,114.9 883,115.9 883.5,116.1 884,115.1 884.5,114.7 885,115.6 885.5,115.8 886,114.6 886.5,115.0 887,113.4 887.5,112.9 888,114.5 888.5,114.9 889,115.0 889.5,115.3 890,114.7 890.5,113.9 891,113.1 891.5,115.2 892,115.0 892.5,113.1 893,115.4 893.5,114.7 894,114.7 894.5,113.3 895,112.6 895.5,113.0 896,113.2 896.5,115.8 897,115.3 897.5,114.1 898,115.1 898.5,115.1 899,114.6 899.5,115.3 900,114.2 900.5,113.3 901,115.7 901.5,113.5 902,113.6 902.5,115.3 903,115.0 903.5,114.4 904,114.6 904.5,114.4 905,113.6 905.5,113.2 906,114.5 906.5,113.2 907,113.2 907.5,115.2 908,114.9 908.5,114.0 909,111.0 909.5,111.8 910,113.8 910.5,113.3 911,112.7 911.5,114.5 912,113.5 912.5,114.8 913,113.6 913.5,113.2 914,113.3 914.5,112.4 915,113.9 915.5,112.9 916,114.0 916.5,113.9 917,115.0 917.5,114.3 918,114.9 918.5,114.5 919,115.4 919.5,114.1 920,114.5 920.5,114.9 921,115.3 921.5,112.6 922,112.8 922.5,113.7 923,113.8 923.5,114.0 924,112.5 924.5,113.8 925,113.7 925.5,113.9 926,114.4 926.5,115.3 927,113.3 927.5,113.5 928,112.7 928.5,114.7 929,115.5 929.5,112.9 930,112.8 930.5,113.5 931,114.0 931.5,115.9 932,115.2 932.5,113.9 933,115.3 933.5,116.1 934,116.2 934.5,114.4 935,113.2 935.5,112.8 936,113.0 936.5,112.7 937,113.3 937.5,114.5 938,113.6 938.5,115.3 939,114.7 939.5,115.1 940,114.0 940.5,114.7 941,113.6 941.5,114.8 942,111.7 942.5,112.5 943,113.8 943.5,112.8 944,111.9 944.5,113.6 945,114.2 945.5,113.4 946,114.6 946.5,115.4 947,114.2 947.5,114.0 948,113.1 948.5,115.0 949,113.6 949.5,115.0 950,114.3 950.5,112.3 951,114.8 951.5,113.7 952,114.3 952.5,113.7 953,114.0 953.5,115.8 954,114.5 954.5,115.9 955,113.3 955.5,113.7 956,115.1 956.5,114.2 957,114.3 957.5,115.1 958,112.7 958.5,114.7 959,114.9 959.5,114.2 960,115.1 960.5,114.1 961,115.6 961.5,115.2 962,114.5 962.5,114.7 963,112.2 963.5,113.4 964,113.8 964.5,114.4 965,115.0 965.5,115.5 966,115.0 966.5,114.9 967,116.5 967.5,115.4 968,115.8 968.5,115.0 969,113.5 969.5,113.6 970,114.6 970.5,114.3 971,112.8 971.5,114.7 972,113.4 972.5,115.5 973,114.8 973.5,115.7 974,113.9 974.5,114.3 975,113.6 975.5,115.0 976,112.9 976.5,115.0 977,112.9 977.5,113.7 978,112.9 978.5,111.7 979,113.7 979.5,112.6 980,114.7 980.5,115.3 981,112.9 981.5,114.2 982,114.6 982.5,113.4 983,112.7 983.5,113.5 984,112.2 984.5,114.8 985,113.9 985.5,113.1 986,114.4 986.5,113.1 987,115.5 987.5,114.0 988,115.7 988.5,115.7 989,115.4 989.5,113.4 990,113.6 990.5,112.8 991,114.9 991.5,114.8 992,112.5 992.5,113.5 993,113.4 993.5,113.3 994,114.9 994.5,114.2 995,113.8 995.5,115.0 996,113.6 996.5,115.6 997,113.3 997.5,113.9 998,112.9 998.5,114.4 999,115.4 999.5,115.5 1000,114.0 1000,124.0 999.5,124.4 999,125.0 998.5,123.6 998,125.6 997.5,126.1 997,124.9 996.5,124.6 996,124.2 995.5,124.4 995,123.4 994.5,124.4 994,123.4 993.5,124.3 993,127.1 992.5,126.3 992,125.6 991.5,124.8 991,126.2 990.5,123.7 990,124.0 989.5,126.0 989,124.6 988.5,122.8 988,123.2 987.5,123.9 987,123.9 986.5,123.9 986,123.4 985.5,125.5 985,126.2 984.5,124.4 984,124.1 983.5,124.8 983,125.6 982.5,125.4 982,125.1 981.5,125.7 981,125.8 980.5,123.6 980,125.0 979.5,124.7 979,124.5 978.5,124.0 978,127.5 977.5,126.2 977,125.3 976.5,126.3 976,126.0 975.5,126.3 975,126.1 974.5,125.7 974,124.9 973.5,125.2 973,124.2 972.5,124.5 972,126.3 971.5,124.8 971,125.7 970.5,123.5 970,123.2 969.5,122.9 969,125.3 968.5,125.3 968,123.5 967.5,124.3 967,123.0 966.5,123.4 966,123.8 965.5,125.3 965,125.0 964.5,123.8 964,124.9 963.5,125.6 963,125.1 962.5,125.3 962,123.8 961.5,124.5 961,123.7 960.5,123.3 960,123.8 959.5,125.0 959,125.0 958.5,125.3 958,124.1 957.5,125.4 957,127.2 956.5,125.0 956,125.9 955.5,125.4 955,125.4 954.5,125.7 954,125.1 953.5,124.4 953,122.9 952.5,124.1 952,124.9 951.5,123.3 951,125.6 950.5,126.0 950,124.0 949.5,123.9 949,124.7 948.5,125.6 948,126.2 947.5,124.3 947,125.7 946.5,125.2 946,124.4 945.5,126.1 945,125.3 944.5,125.5 944,124.4 943.5,124.6 943,124.8 942.5,127.1 942,125.5 941.5,127.0 941,123.9 940.5,124.8 940,125.3 939.5,125.3 939,125.0 938.5,125.8 938,123.2 937.5,124.5 937,125.5 936.5,125.9 936,124.5 935.5,124.0 935,125.5 934.5,125.0 934,123.0 933.5,123.6 933,124.4 932.5,123.1 932,123.1 931.5,125.0 931,124.3 930.5,123.5 930,126.7 929.5,125.7 929,126.0 928.5,125.7 928,123.8 927.5,125.7 927,124.1 926.5,125.5 926,123.1 925.5,123.2 925,124.1 924.5,124.0 924,123.7 923.5,124.3 923,123.5 922.5,125.0 922,126.2 921.5,125.4 921,125.3 920.5,125.2 920,123.2 919.5,125.0 919,122.8 918.5,125.2 918,123.0 917.5,124.9 917,125.5 916.5,123.9 916,124.5 915.5,126.8 915,125.7 914.5,126.3 914,125.5 913.5,124.7 913,126.3 912.5,123.5 912,125.7 911.5,124.3 911,125.0 910.5,123.9 910,124.1 909.5,124.3 909,127.1 908.5,125.3 908,126.1 907.5,126.1 907,126.2 906.5,126.2 906,126.4 905.5,126.1 905,125.3 904.5,123.1 904,125.1 903.5,123.5 903,124.9 902.5,125.8 902,125.9 901.5,125.0 901,123.4 900.5,125.7 900,126.3 899.5,124.0 899,124.8 898.5,122.8 898,123.4 897.5,123.6 897,124.7 896.5,124.6 896,123.2 895.5,123.7 895,123.5 894.5,124.6 894,125.2 893.5,127.0 893,124.5 892.5,123.7 892,125.0 891.5,123.6 891,124.8 890.5,125.1 890,124.1 889.5,123.6 889,124.3 888.5,125.5 888,123.8 887.5,123.9 887,123.8 886.5,124.9 886,124.4 885.5,124.1 885,124.3 884.5,123.4 884,124.9 883.5,123.9 883,124.2 882.5,124.0 882,125.1 881.5,125.1 881,123.6 880.5,124.4 880,125.1 879.5,127.1 879,124.4 878.5,125.5 878,126.5 877.5,123.4 877,124.5 876.5,124.8 876,123.9 875.5,125.6 875,126.2 874.5,125.0 874,124.8 873.5,125.2 873,126.9 872.5,125.3 872,125.6 871.5,124.4 871,124.9 870.5,125.4 870,126.1 869.5,123.2 869,123.1 868.5,125.6 868,125.7 867.5,124.5 867,123.9 866.5,126.0 866,125.8 865.5,124.2 865,124.2 864.5,123.6 864,124.1 863.5,123.6 863,125.2 862.5,122.8 862,123.8 861.5,123.4 861,125.8 860.5,124.6 860,124.7 859.5,124.0 859,126.6 858.5,126.0 858,123.8 857.5,126.5 857,125.6 856.5,123.6 856,125.3 855.5,123.2 855,124.2 854.5,125.7 854,123.6 853.5,123.3 853,122.0 852.5,121.6 852,121.9 851.5,120.8 851,120.0 850.5,120.0 850,120.0 849.5,120.0 849,120.0 848.5,120.0 848,120.0 847.5,120.0 847,120.0 846.5,120.1 846,120.0 845.5,120.2 845,120.0 844.5,120.0 844,120.1 843.5,120.0 843,120.1 842.5,120.0 842,120.0 841.5,120.0 841,120.1 840.5,120.0 840,120.1 839.5,120.1 839,120.1 838.5,120.0 838,120.0 837.5,120.0 837,120.2 836.5,120.0 836,120.0 835.5,120.0 835,120.0 834.5,120.0 834,120.0 833.5,120.1 833,120.1 832.5,120.0 832,120.0 831.5,120.0 831,120.0 830.5,120.0 830,120.0 829.5,120.0 829,120.0 828.5,120.1 828,120.0 827.5,120.0 827,120.0 826.5,120.1 826,120.1 825.5,120.2 825,120.2 824.5,120.0 824,120.2 823.5,120.0 823,120.0 822.5,120.0 822,120.0 821.5,120.0 821,120.0 820.5,120.0 820,120.0 819.5,120.0 819,120.0 818.5,120.3 818,120.1 817.5,120.7 817,120.9 816.5,120.7 816,120.4 815.5,120.0 815,120.0 814.5,120.0 814,120.0 813.5,120.0 813,120.0 812.5,120.0 812,120.0 811.5,120.4 811,120.5 810.5,120.9 810,121.4 809.5,121.2 809,120.8 808.5,120.8 808,120.3 807.5,120.3 807,120.1 806.5,120.0 806,120.0 805.5,120.2 805,123.1 804.5,120.8 804,120.9 803.5,120.7 803,121.4 802.5,121.3 802,121.3 801.5,121.3 801,121.0 800.5,120.4 800,120.0 799.5,120.0 799,120.2 798.5,121.4 798,121.0 797.5,120.3 797,120.8 796.5,120.7 796,121.8 795.5,122.0 795,121.5 794.5,121.6 794,120.6 793.5,120.6 793,121.2 792.5,120.6 792,120.2 791.5,120.3 791,120.4 790.5,120.2 790,121.2 789.5,121.4 789,121.6 788.5,122.3 788,122.1 787.5,121.8 787,120.6 786.5,120.4 786,120.2 785.5,120.0 785,120.0 784.5,120.0 784,120.0 783.5,120.3 783,120.5 782.5,120.7 782,121.0 781.5,122.3 781,122.3 780.5,121.8 780,120.7 779.5,121.0 779,120.5 778.5,120.5 778,121.3 777.5,122.1 777,121.7 776.5,121.9 776,121.0 775.5,121.3 775,121.5 774.5,122.2 774,121.7 773.5,121.7 773,121.3 772.5,121.1 772,120.9 771.5,120.5 771,121.1 770.5,120.0 770,120.2 769.5,120.7 769,120.7 768.5,121.6 768,122.2 767.5,121.3 767,121.3 766.5,121.4 766,121.6 765.5,121.4 765,121.6 764.5,120.9 764,120.5 763.5,120.1 763,120.3 762.5,120.6 762,120.4 761.5,121.3 761,121.2 760.5,122.0 760,121.5 759.5,123.3 759,122.8 758.5,121.8 758,121.2 757.5,121.7 757,122.0 756.5,121.7 756,120.8 755.5,121.2 755,121.7 754.5,120.6 754,121.0 753.5,121.6 753,122.3 752.5,122.8 752,122.6 751.5,121.4 751,121.3 750.5,120.6 750,121.3 749.5,120.9 749,120.3 748.5,120.0 748,120.5 747.5,120.8 747,120.6 746.5,120.8 746,121.3 745.5,121.4 745,122.7 744.5,121.7 744,121.5 743.5,120.8 743,120.9 742.5,121.0 742,121.8 741.5,121.0 741,120.6 740.5,120.4 740,121.0 739.5,121.1 739,121.4 738.5,122.5 738,123.2 737.5,121.9 737,121.2 736.5,121.7 736,121.3 735.5,121.1 735,120.3 734.5,120.3 734,120.2 733.5,121.7 733,123.9 732.5,120.7 732,121.3 731.5,121.8 731,121.7 730.5,122.0 730,122.0 729.5,122.2 729,121.4 728.5,120.7 728,121.7 727.5,120.3 727,120.3 726.5,120.3 726,121.0 725.5,121.3 725,122.0 724.5,121.3 724,121.6 723.5,123.5 723,123.5 722.5,122.4 722,121.7 721.5,120.8 721,120.6 720.5,121.3 720,121.9 719.5,122.3 719,122.2 718.5,122.8 718,121.5 717.5,122.0 717,122.1 716.5,121.8 716,122.0 715.5,121.5 715,122.3 714.5,122.5 714,122.8 713.5,121.5 713,120.8 712.5,120.4 712,121.5 711.5,120.8 711,121.3 710.5,121.1 710,122.0 709.5,122.2 709,123.3 708.5,122.2 708,121.8 707.5,121.7 707,120.7 706.5,121.2 706,122.3 705.5,122.4 705,121.8 704.5,120.7 704,120.9 703.5,120.8 703,122.2 702.5,122.7 702,122.8 701.5,122.8 701,122.1 700.5,123.2 700,121.8 699.5,121.8 699,121.0 698.5,120.4 698,120.4 697.5,120.4 697,121.3 696.5,120.8 696,121.7 695.5,122.2 695,122.5 694.5,121.8 694,122.3 693.5,122.2 693,122.0 692.5,121.1 692,120.9 691.5,120.2 691,120.5 690.5,121.2 690,121.8 689.5,123.3 689,121.8 688.5,122.1 688,122.4 687.5,123.3 687,122.4 686.5,122.2 686,121.8 685.5,121.1 685,120.9 684.5,120.5 684,120.2 683.5,120.2 683,120.4 682.5,120.7 682,120.7 681.5,121.4 681,121.2 680.5,122.0 680,122.0 679.5,121.8 679,122.1 678.5,120.9 678,121.1 677.5,120.5 677,120.2 676.5,120.1 676,121.0 675.5,120.9 675,120.6 674.5,120.8 674,121.2 673.5,122.2 673,122.0 672.5,121.8 672,121.1 671.5,120.8 671,120.7 670.5,120.8 670,120.7 669.5,122.0 669,121.5 668.5,121.4 668,121.1 667.5,121.2 667,122.4 666.5,123.4 666,123.3 665.5,122.3 665,121.8 664.5,121.9 664,121.5 663.5,122.1 663,122.7 662.5,122.6 662,121.8 661.5,121.5 661,120.6 660.5,121.2 660,121.1 659.5,121.7 659,123.1 658.5,122.9 658,122.2 657.5,121.6 657,121.2 656.5,121.2 656,120.2 655.5,120.5 655,120.0 654.5,121.3 654,120.9 653.5,121.2 653,121.1 652.5,120.7 652,121.2 651.5,120.5 651,120.5 650.5,120.7 650,120.4 649.5,120.6 649,120.5 648.5,120.3 648,120.3 647.5,121.4 647,123.1 646.5,120.1 646,120.3 645.5,120.3 645,120.0 644.5,120.4 644,120.1 643.5,120.2 643,120.6 642.5,121.0 642,120.2 641.5,120.4 641,120.0 640.5,120.4 640,120.5 639.5,120.3 639,120.0 638.5,120.3 638,120.2 637.5,120.2 637,121.1 636.5,121.3 636,120.2 635.5,120.2 635,120.4 634.5,120.2 634,120.4 633.5,120.0 633,120.1 632.5,120.0 632,120.0 631.5,120.1 631,120.9 630.5,121.4 630,120.1 629.5,120.1 629,120.0 628.5,120.2 628,120.1 627.5,120.3 627,120.1 626.5,121.2 626,121.1 625.5,120.0 625,120.3 624.5,120.0 624,120.2 623.5,120.1 623,120.3 622.5,120.4 622,120.8 621.5,120.7 621,120.4 620.5,120.1 620,120.2 619.5,120.2 619,120.1 618.5,120.2 618,120.3 617.5,120.2 617,120.3 616.5,122.3 616,120.9 615.5,120.2 615,120.3 614.5,120.2 614,120.0 613.5,120.2 613,120.4 612.5,120.2 612,120.2 611.5,120.3 611,121.2 610.5,120.2 610,120.3 609.5,120.2 609,120.1 608.5,120.4 608,120.4 607.5,120.3 607,120.1 606.5,120.1 606,120.1 605.5,121.2 605,122.4 604.5,120.5 604,120.2 603.5,120.0 603,120.2 602.5,120.4 602,120.3 601.5,120.2 601,120.1 600.5,120.4 600,121.7 599.5,121.6 599,120.1 598.5,120.1 598,120.1 597.5,120.0 597,120.0 596.5,120.1 596,120.0 595.5,120.1 595,120.3 594.5,120.1 594,120.2 593.5,120.2 593,120.1 592.5,120.0 592,120.3 591.5,120.0 591,120.1 590.5,120.2 590,120.1 589.5,121.2 589,121.3 588.5,120.4 588,120.2 587.5,120.1 587,120.2 586.5,120.4 586,120.3 585.5,120.4 585,120.2 584.5,120.1 584,122.0 583.5,120.6 583,120.1 582.5,120.2 582,120.2 581.5,120.2 581,120.1 580.5,120.1 580,120.2 579.5,120.2 579,120.4 578.5,121.7 578,120.0 577.5,120.1 577,120.1 576.5,120.0 576,120.0 575.5,120.2 575,120.2 574.5,120.4 574,121.9 573.5,120.3 573,120.4 572.5,120.0 572,120.1 571.5,120.4 571,120.1 570.5,120.3 570,120.0 569.5,120.2 569,120.2 568.5,120.2 568,120.3 567.5,120.2 567,120.1 566.5,120.1 566,120.2 565.5,120.2 565,120.1 564.5,120.1 564,120.0 563.5,121.7 563,120.1 562.5,120.0 562,120.2 561.5,120.0 561,120.0 560.5,120.0 560,120.0 559.5,120.0 559,120.3 558.5,120.8 558,121.3 557.5,120.3 557,120.0 556.5,120.0 556,120.1 555.5,120.0 555,120.0 554.5,120.0 554,120.2 553.5,120.1 553,121.8 552.5,120.5 552,120.1 551.5,120.0 551,120.2 550.5,120.1 550,120.2 549.5,120.2 549,120.5 548.5,121.3 548,120.5 547.5,120.1 547,120.0 546.5,120.1 546,120.0 545.5,120.0 545,120.0 544.5,120.1 544,120.1 543.5,120.1 543,120.6 542.5,121.7 542,120.4 541.5,120.0 541,120.0 540.5,120.2 540,120.1 539.5,120.0 539,120.2 538.5,120.4 538,121.8 537.5,120.6 537,120.1 536.5,120.2 536,120.0 535.5,120.2 535,120.1 534.5,120.2 534,120.1 533.5,120.1 533,120.1 532.5,120.6 532,120.3 531.5,120.0 531,120.1 530.5,120.2 530,120.1 529.5,120.0 529,120.1 528.5,120.0 528,120.0 527.5,120.0 527,120.0 526.5,120.0 526,120.0 525.5,120.0 525,120.0 524.5,120.1 524,120.0 523.5,120.0 523,120.0 522.5,120.8 522,121.6 521.5,120.6 521,120.2 520.5,120.0 520,120.0 519.5,120.1 519,120.1 518.5,120.2 518,120.1 517.5,120.2 517,120.1 516.5,120.1 516,120.1 515.5,120.3 515,120.1 514.5,120.2 514,120.2 513.5,120.2 513,120.3 512.5,120.3 512,120.2 511.5,120.3 511,120.2 510.5,120.4 510,120.1 509.5,120.2 509,120.5 508.5,120.6 508,120.6 507.5,120.2 507,120.7 506.5,120.4 506,120.7 505.5,121.0 505,121.1 504.5,120.9 504,121.7 503.5,121.7 503,121.6 502.5,121.0 502,121.9 501.5,122.1 501,121.4 500.5,121.4 500,121.0 499.5,122.1 499,122.0 498.5,121.7 498,122.1 497.5,122.4 497,121.4 496.5,122.2 496,122.3 495.5,121.7 495,122.5 494.5,122.3 494,122.1 493.5,122.3 493,121.9 492.5,122.6 492,121.7 491.5,121.4 491,122.0 490.5,122.6 490,123.1 489.5,123.7 489,121.9 488.5,123.3 488,122.3 487.5,122.5 487,122.6 486.5,123.3 486,123.0 485.5,121.6 485,123.1 484.5,122.2 484,122.9 483.5,122.7 483,122.7 482.5,123.4 482,122.9 481.5,122.8 481,122.9 480.5,122.4 480,122.5 479.5,121.6 479,121.5 478.5,121.9 478,122.2 477.5,123.0 477,121.8 476.5,121.9 476,122.0 475.5,123.6 475,123.6 474.5,121.9 474,122.2 473.5,122.3 473,123.0 472.5,122.0 472,123.0 471.5,122.3 471,122.3 470.5,123.4 470,123.9 469.5,124.2 469,124.5 468.5,122.4 468,123.3 467.5,122.2 467,123.5 466.5,123.6 466,122.5 465.5,122.0 465,123.4 464.5,122.8 464,123.3 463.5,123.8 463,122.4 462.5,123.4 462,123.1 461.5,122.2 461,122.8 460.5,122.9 460,122.6 459.5,123.1 459,122.9 458.5,123.0 458,122.0 457.5,122.5 457,122.3 456.5,123.0 456,123.1 455.5,123.2 455,122.2 454.5,124.0 454,123.8 453.5,123.4 453,122.7 452.5,122.5 452,123.6 451.5,123.4 451,123.7 450.5,122.0 450,123.5 449.5,122.5 449,123.2 448.5,122.8 448,123.1 447.5,124.0 447,123.0 446.5,123.3 446,123.4 445.5,122.4 445,123.4 444.5,123.0 444,122.4 443.5,122.5 443,122.8 442.5,122.0 442,122.6 441.5,124.1 441,123.7 440.5,124.0 440,125.4 439.5,124.6 439,124.6 438.5,123.3 438,123.4 437.5,124.0 437,125.0 436.5,124.8 436,124.0 435.5,126.1 435,124.0 434.5,124.9 434,123.7 433.5,123.9 433,126.6 432.5,124.6 432,125.8 431.5,123.1 431,123.6 430.5,125.2 430,125.6 429.5,124.3 429,122.9 428.5,123.6 428,124.6 427.5,124.5 427,124.7 426.5,125.8 426,124.5 425.5,123.9 425,123.5 424.5,125.4 424,122.9 423.5,124.8 423,123.7 422.5,124.1 422,125.0 421.5,124.5 421,123.9 420.5,124.2 420,123.7 419.5,126.1 419,126.0 418.5,125.7 418,125.3 417.5,125.9 417,124.3 416.5,122.9 416,122.9 415.5,125.2 415,124.4 414.5,123.0 414,123.0 413.5,123.8 413,124.4 412.5,124.4 412,124.0 411.5,123.6 411,124.7 410.5,122.7 410,124.3 409.5,122.7 409,123.4 408.5,123.1 408,123.2 407.5,123.9 407,122.8 406.5,123.5 406,124.3 405.5,123.9 405,125.1 404.5,124.9 404,124.9 403.5,124.3 403,123.3 402.5,123.2 402,124.2 401.5,125.0 401,125.4 400.5,124.5 400,126.5 399.5,125.3 399,123.7 398.5,123.5 398,125.3 397.5,125.9 397,124.0 396.5,125.7 396,124.4 395.5,122.9 395,124.2 394.5,123.1 394,123.4 393.5,125.3 393,124.4 392.5,123.9 392,124.9 391.5,125.2 391,123.3 390.5,123.9 390,123.6 389.5,124.7 389,123.2 388.5,124.5 388,125.4 387.5,123.9 387,123.4 386.5,125.4 386,125.2 385.5,126.4 385,126.7 384.5,126.2 384,123.5 383.5,125.9 383,123.5 382.5,123.8 382,123.3 381.5,125.4 381,123.6 380.5,124.6 380,122.9 379.5,124.7 379,123.2 378.5,125.4 378,124.7 377.5,124.6 377,125.2 376.5,123.7 376,124.9 375.5,123.8 375,123.1 374.5,122.1 374,123.3 373.5,124.7 373,123.0 372.5,123.6 372,123.6 371.5,124.3 371,123.5 370.5,126.0 370,126.1 369.5,125.6 369,125.4 368.5,123.4 368,125.2 367.5,123.2 367,125.6 366.5,123.1 366,125.1 365.5,123.9 365,125.7 364.5,123.6 364,126.9 363.5,126.5 363,125.9 362.5,125.1 362,123.5 361.5,125.1 361,123.5 360.5,124.2 360,122.9 359.5,123.9 359,125.0 358.5,125.9 358,125.9 357.5,123.3 357,124.6 356.5,125.4 356,123.5 355.5,126.1 355,125.3 354.5,124.8 354,124.5 353.5,123.4 353,123.3 352.5,123.7 352,124.5 351.5,124.3 351,123.5 350.5,123.6 350,124.2 349.5,125.7 349,124.0 348.5,124.0 348,123.4 347.5,124.4 347,125.0 346.5,125.6 346,124.0 345.5,123.3 345,125.2 344.5,124.1 344,124.5 343.5,123.2 343,123.1 342.5,125.0 342,124.1 341.5,124.8 341,124.1 340.5,124.5 340,123.9 339.5,123.5 339,124.0 338.5,123.7 338,124.8 337.5,124.1 337,124.0 336.5,125.3 336,124.5 335.5,123.6 335,125.3 334.5,124.9 334,125.9 333.5,125.2 333,125.0 332.5,124.5 332,124.2 331.5,125.0 331,124.4 330.5,124.5 330,123.2 329.5,126.1 329,124.3 328.5,125.8 328,125.7 327.5,123.1 327,124.5 326.5,124.5 326,123.6 325.5,123.1 325,124.2 324.5,124.1 324,123.1 323.5,122.8 323,125.3 322.5,125.3 322,123.9 321.5,123.6 321,125.9 320.5,123.5 320,124.0 319.5,123.3 319,123.6 318.5,125.1 318,124.4 317.5,124.6 317,125.7 316.5,126.8 316,123.7 315.5,123.8 315,124.8 314.5,125.5 314,124.4 313.5,126.6 313,124.6 312.5,123.6 312,124.2 311.5,124.5 311,125.6 310.5,123.8 310,125.1 309.5,124.7 309,122.9 308.5,124.5 308,124.8 307.5,125.5 307,123.6 306.5,123.6 306,123.4 305.5,123.5 305,123.4 304.5,124.0 304,123.9 303.5,124.7 303,124.1 302.5,123.8 302,125.8 301.5,125.6 301,125.6 300.5,125.1 300,125.6 299.5,124.7 299,124.8 298.5,123.4 298,123.7 297.5,124.4 297,124.0 296.5,123.3 296,123.8 295.5,125.0 295,125.8 294.5,125.0 294,123.4 293.5,124.7 293,123.6 292.5,124.6 292,124.7 291.5,123.5 291,123.7 290.5,122.7 290,122.7 289.5,123.8 289,124.3 288.5,124.9 288,124.6 287.5,125.7 287,124.2 286.5,124.9 286,125.8 285.5,125.3 285,124.4 284.5,123.6 284,125.8 283.5,124.4 283,124.5 282.5,123.6 282,126.4 281.5,124.8 281,125.3 280.5,124.3 280,126.9 279.5,124.7 279,124.3 278.5,125.8 278,124.6 277.5,124.6 277,124.0 276.5,123.4 276,123.2 275.5,124.5 275,123.1 274.5,123.2 274,123.6 273.5,123.6 273,125.7 272.5,124.3 272,124.1 271.5,123.2 271,123.4 270.5,123.4 270,123.2 269.5,124.2 269,124.6 268.5,123.9 268,125.2 267.5,125.1 267,125.3 266.5,123.4 266,125.4 265.5,125.3 265,126.3 264.5,124.9 264,123.5 263.5,124.5 263,125.5 262.5,124.3 262,125.6 261.5,124.6 261,124.4 260.5,124.1 260,125.6 259.5,124.8 259,123.8 258.5,123.6 258,124.6 257.5,123.0 257,124.7 256.5,123.2 256,123.0 255.5,124.3 255,122.6 254.5,123.5 254,125.8 253.5,125.9 253,125.6 252.5,124.8 252,123.5 251.5,124.7 251,126.7 250.5,124.9 250,124.0 249.5,124.8 249,123.8 248.5,125.3 248,124.3 247.5,126.2 247,124.4 246.5,125.7 246,126.3 245.5,126.5 245,126.5 244.5,125.4 244,125.3 243.5,123.9 243,122.0 242.5,122.1 242,122.0 241.5,121.9 241,123.1 240.5,123.3 240,124.6 239.5,125.0 239,125.9 238.5,124.6 238,123.5 237.5,124.5 237,125.3 236.5,124.5 236,124.4 235.5,125.9 235,125.2 234.5,124.7 234,124.3 233.5,123.1 233,125.3 232.5,126.4 232,123.9 231.5,125.1 231,125.1 230.5,126.3 230,125.3 229.5,124.3 229,125.6 228.5,123.0 228,124.2 227.5,123.1 227,125.0 226.5,123.1 226,125.0 225.5,123.5 225,125.2 224.5,123.3 224,125.2 223.5,123.5 223,124.6 222.5,124.6 222,124.4 221.5,123.1 221,123.6 220.5,123.2 220,123.2 219.5,123.5 219,125.2 218.5,124.6 218,126.0 217.5,123.8 217,125.6 216.5,126.5 216,124.1 215.5,124.7 215,126.6 214.5,126.5 214,124.8 213.5,124.1 213,123.3 212.5,125.3 212,125.2 211.5,126.9 211,125.7 210.5,125.8 210,125.1 209.5,125.6 209,124.0 208.5,124.7 208,124.5 207.5,123.6 207,123.4 206.5,125.2 206,123.2 205.5,126.0 205,125.1 204.5,125.0 204,123.5 203.5,125.1 203,124.9 202.5,123.7 202,126.0 201.5,125.3 201,124.7 200.5,125.3 200,124.2 199.5,125.0 199,123.8 198.5,124.4 198,124.2 197.5,126.2 197,126.4 196.5,125.2 196,124.2 195.5,126.0 195,125.2 194.5,125.7 194,126.2 193.5,124.5 193,123.7 192.5,122.8 192,123.2 191.5,123.5 191,125.0 190.5,123.8 190,124.0 189.5,124.9 189,125.1 188.5,125.7 188,124.5 187.5,124.2 187,124.5 186.5,123.8 186,122.6 185.5,124.5 185,124.7 184.5,123.7 184,124.7 183.5,124.9 183,125.0 182.5,123.7 182,125.1 181.5,126.8 181,126.8 180.5,123.9 180,124.6 179.5,123.6 179,124.3 178.5,123.7 178,123.3 177.5,125.7 177,124.3 176.5,123.9 176,127.2 175.5,124.3 175,126.1 174.5,125.9 174,124.2 173.5,124.0 173,125.8 172.5,125.2 172,125.3 171.5,124.9 171,123.2 170.5,124.4 170,126.0 169.5,126.6 169,125.5 168.5,125.5 168,124.2 167.5,124.2 167,125.6 166.5,125.3 166,123.3 165.5,124.4 165,124.4 164.5,123.0 164,124.3 163.5,123.3 163,123.9 162.5,123.2 162,122.5 161.5,121.8 161,121.1 160.5,121.0 160,120.1 159.5,120.1 159,120.0 158.5,120.0 158,120.0 157.5,120.0 157,120.0 156.5,120.0 156,120.0 155.5,120.0 155,120.0 154.5,120.0 154,120.0 153.5,120.0 153,120.0 152.5,120.0 152,120.0 151.5,120.0 151,120.0 150.5,120.3 150,120.6 149.5,121.8 149,122.3 148.5,123.2 148,124.4 147.5,124.1 147,124.6 146.5,124.9 146,123.0 145.5,124.4 145,123.6 144.5,123.7 144,123.4 143.5,123.1 143,122.9 142.5,124.5 142,123.4 141.5,124.2 141,123.3 140.5,124.7 140,124.9 139.5,123.3 139,123.4 138.5,123.8 138,123.3 137.5,122.8 137,124.4 136.5,124.0 136,122.6 135.5,123.2 135,122.8 134.5,122.8 134,124.7 133.5,123.7 133,123.2 132.5,124.6 132,123.6 131.5,125.0 131,123.4 130.5,123.1 130,124.3 129.5,124.2 129,122.7 128.5,124.6 128,125.1 127.5,124.4 127,123.1 126.5,123.8 126,123.5 125.5,124.5 125,123.3 124.5,122.7 124,122.9 123.5,122.4 123,122.9 122.5,122.4 122,123.0 121.5,122.7 121,122.5 120.5,123.5 120,122.1 119.5,123.2 119,124.0 118.5,123.5 118,122.3 117.5,122.1 117,122.0 116.5,123.0 116,122.9 115.5,122.9 115,123.0 114.5,122.8 114,121.9 113.5,123.6 113,122.5 112.5,123.6 112,122.4 111.5,122.4 111,122.5 110.5,122.9 110,122.1 109.5,123.3 109,121.8 108.5,122.6 108,121.5 107.5,122.3 107,123.5 106.5,122.8 106,122.1 105.5,121.9 105,121.9 104.5,122.5 104,122.8 103.5,122.4 103,122.3 102.5,121.5 102,121.7 101.5,122.4 101,122.1 100.5,122.1 100,122.7 99.5,121.9 99,122.3 98.5,123.5 98,123.0 97.5,122.5 97,122.6 96.5,122.5 96,121.9 95.5,122.3 95,122.9 94.5,122.3 94,122.8 93.5,121.8 93,122.2 92.5,123.5 92,121.9 91.5,122.8 91,121.7 90.5,121.6 90,122.7 89.5,121.6 89,121.6 88.5,121.9 88,122.1 87.5,121.6 87,122.3 86.5,121.5 86,122.0 85.5,121.8 85,121.9 84.5,122.6 84,121.8 83.5,122.2 83,122.8 82.5,122.4 82,121.8 81.5,122.2 81,121.6 80.5,122.1 80,122.3 79.5,122.1 79,121.9 78.5,122.8 78,121.9 77.5,121.7 77,122.3 76.5,121.7 76,121.5 75.5,122.3 75,122.0 74.5,122.5 74,121.4 73.5,122.2 73,121.1 72.5,121.9 72,121.7 71.5,122.4 71,121.9 70.5,122.0 70,121.6 69.5,121.3 69,121.1 68.5,122.1 68,122.1 67.5,121.4 67,121.5 66.5,121.6 66,121.5 65.5,121.4 65,121.1 64.5,121.5 64,121.2 63.5,120.6 63,120.7 62.5,120.1 62,120.0 61.5,120.0 61,120.0 60.5,120.0 60,120.0 59.5,120.0 59,120.0 58.5,120.0 58,120.0 57.5,120.0 57,120.0 56.5,120.0 56,120.0 55.5,120.0 55,120.0 54.5,120.0 54,120.0 53.5,120.0 53,120.0 52.5,120.0 52,120.0 51.5,120.0 51,120.0 50.5,120.0 50,120.0 49.5,120.0 49,120.0 48.5,120.0 48,120.0 47.5,120.0 47,120.0 46.5,120.0 46,120.0 45.5,120.0 45,120.0 44.5,120.0 44,120.0 43.5,120.0 43,120.0 42.5,120.0 42,120.0 41.5,120.0 41,120.0 40.5,120.0 40,120.0 39.5,120.0 39,120.0 38.5,120.0 38,120.0 37.5,120.0 37,120.0 36.5,120.0 36,120.0 35.5,120.0 35,120.0 34.5,120.0 34,120.0 33.5,120.0 33,120.0 32.5,120.0 32,120.0 31.5,120.0 31,120.0 30.5,120.0 30,120.0 29.5,120.0 29,120.0 28.5,120.0 28,120.0 27.5,120.0 27,120.0 26.5,120.0 26,120.0 25.5,120.0 25,120.0 24.5,120.0 24,120.0 23.5,120.0 23,120.0 22.5,120.0 22,120.0 21.5,120.0 21,120.0 20.5,120.0 20,120.0 19.5,120.0 19,120.0 18.5,120.0 18,120.0 17.5,120.0 17,120.0 16.5,120.0 16,120.0 15.5,120.0 15,120.0 14.5,120.0 14,120.0 13.5,120.0 13,120.0 12.5,120.0 12,120.0 11.5,120.0 11,120.0 10.5,120.0 10,120.0 9.5,120.0 9,120.0 8.5,120.0 8,120.1 7.5,120.0 7,120.0 6.5,120.0 6,120.0 5.5,120.0 5,120.0 4.5,120.0 4,120.0 3.5,120.0 3,120.0 2.5,120.0 2,120.0 1.5,120.0 1,120.0 0.5,120.0 0,120.0Z" fill="#474747" fill-opacity="0.88"/>
<path d="M0,138.9 0.5,139.0 1,139.0 1.5,139.0 2,139.0 2.5,139.0 3,139.0 3.5,139.0 4,138.9 4.5,139.0 5,139.0 5.5,139.0 6,139.0 6.5,139.0 7,139.0 7.5,139.0 8,138.9 8.5,139.0 9,138.9 9.5,138.8 10,139.0 10.5,139.0 11,139.0 11.5,139.0 12,139.0 12.5,139.0 13,139.0 13.5,139.0 14,139.0 14.5,139.0 15,139.0 15.5,138.9 16,139.0 16.5,139.0 17,139.0 17.5,138.9 18,139.0 18.5,139.0 19,139.0 19.5,139.0 20,139.0 20.5,139.0 21,139.0 21.5,139.0 22,139.0 22.5,139.0 23,139.0 23.5,139.0 24,138.9 24.5,139.0 25,139.0 25.5,139.0 26,139.0 26.5,139.0 27,139.0 27.5,139.0 28,139.0 28.5,139.0 29,139.0 29.5,139.0 30,138.9 30.5,139.0 31,138.9 31.5,139.0 32,139.0 32.5,139.0 33,139.0 33.5,139.0 34,139.0 34.5,138.9 35,139.0 35.5,139.0 36,139.0 36.5,139.0 37,139.0 37.5,139.0 38,139.0 38.5,139.0 39,139.0 39.5,138.9 40,139.0 40.5,138.2 41,137.6 41.5,136.3 42,136.4 42.5,135.8 43,136.5 43.5,135.2 44,136.2 44.5,135.9 45,134.7 45.5,135.2 46,135.7 46.5,135.3 47,136.9 47.5,136.2 48,134.9 48.5,136.1 49,136.3 49.5,134.5 50,135.5 50.5,136.4 51,135.5 51.5,134.7 52,136.4 52.5,136.5 53,136.2 53.5,135.6 54,135.1 54.5,135.5 55,135.6 55.5,136.5 56,136.6 56.5,137.3 57,138.1 57.5,138.2 58,138.9 58.5,138.5 59,138.8 59.5,138.7 60,138.8 60.5,138.7 61,139.0 61.5,138.9 62,138.9 62.5,138.8 63,139.0 63.5,138.7 64,138.5 64.5,138.9 65,138.7 65.5,138.5 66,138.6 66.5,138.8 67,138.7 67.5,138.8 68,139.0 68.5,137.9 69,137.5 69.5,136.0 70,135.5 70.5,135.2 71,135.6 71.5,134.7 72,135.8 72.5,135.2 73,135.5 73.5,135.1 74,135.7 74.5,135.8 75,136.2 75.5,135.8 76,136.5 76.5,136.3 77,136.6 77.5,136.3 78,135.0 78.5,135.1 79,134.9 79.5,135.6 80,135.2 80.5,135.9 81,135.0 81.5,135.8 82,135.0 82.5,135.6 83,136.0 83.5,136.0 84,134.8 84.5,134.1 85,134.1 85.5,135.4 86,135.7 86.5,135.2 87,134.7 87.5,135.2 88,135.3 88.5,135.6 89,137.4 89.5,137.5 90,137.1 90.5,137.8 91,137.5 91.5,137.4 92,138.4 92.5,137.9 93,138.2 93.5,137.7 94,137.6 94.5,138.0 95,138.2 95.5,137.8 96,137.9 96.5,138.3 97,137.9 97.5,138.2 98,137.6 98.5,137.5 99,137.5 99.5,137.9 100,137.9 100.5,136.8 101,137.8 101.5,137.8 102,136.5 102.5,136.7 103,137.5 103.5,136.8 104,136.5 104.5,136.5 105,136.6 105.5,136.8 106,135.9 106.5,135.9 107,135.6 107.5,135.7 108,135.9 108.5,135.9 109,136.2 109.5,137.4 110,136.5 110.5,136.4 111,137.3 111.5,135.6 112,136.5 112.5,136.2 113,135.4 113.5,136.5 114,135.9 114.5,135.9 115,136.0 115.5,135.9 116,135.7 116.5,136.4 117,136.2 117.5,135.5 118,136.2 118.5,136.4 119,136.1 119.5,135.2 120,135.0 120.5,135.0 121,134.3 121.5,135.5 122,135.5 122.5,136.4 123,135.3 123.5,136.6 124,135.7 124.5,136.0 125,135.9 125.5,137.1 126,135.0 126.5,136.8 127,135.6 127.5,136.5 128,136.1 128.5,136.6 129,135.9 129.5,135.9 130,136.3 130.5,137.1 131,136.5 131.5,136.6 132,137.1 132.5,136.2 133,136.1 133.5,136.2 134,135.7 134.5,136.3 135,136.4 135.5,136.5 136,135.8 136.5,135.0 137,136.6 137.5,136.6 138,136.3 138.5,135.7 139,135.8 139.5,135.1 140,135.4 140.5,135.8 141,134.5 141.5,135.9 142,136.1 142.5,135.0 143,135.3 143.5,136.1 144,135.7 144.5,135.8 145,136.7 145.5,137.3 146,135.9 146.5,136.2 147,135.2 147.5,135.0 148,135.4 148.5,136.2 149,136.3 149.5,137.1 150,137.6 150.5,138.3 151,139.0 151.5,139.0 152,139.0 152.5,139.0 153,139.0 153.5,139.0 154,139.0 154.5,138.9 155,139.0 155.5,138.8 156,139.0 156.5,138.8 157,138.8 157.5,139.0 158,139.0 158.5,139.0 159,139.0 159.5,139.0 160,139.0 160.5,138.3 161,137.3 161.5,137.3 162,136.4 162.5,134.8 163,136.0 163.5,134.1 164,135.5 164.5,135.5 165,136.2 165.5,134.9 166,136.3 166.5,135.0 167,134.9 167.5,134.6 168,134.0 168.5,133.1 169,134.2 169.5,134.9 170,135.5 170.5,133.8 171,134.4 171.5,135.1 172,135.3 172.5,135.1 173,135.8 173.5,133.5 174,133.9 174.5,134.0 175,134.7 175.5,135.4 176,134.2 176.5,134.2 177,135.3 177.5,135.4 178,133.3 178.5,135.9 179,135.0 179.5,135.3 180,134.0 180.5,136.0 181,135.0 181.5,134.5 182,134.8 182.5,135.3 183,133.9 183.5,135.0 184,134.3 184.5,134.6 185,135.7 185.5,132.9 186,133.6 186.5,132.7 187,135.4 187.5,134.3 188,135.5 188.5,132.6 189,135.1 189.5,132.6 190,132.7 190.5,133.8 191,134.1 191.5,134.6 192,134.7 192.5,134.7 193,133.6 193.5,133.5 194,136.0 194.5,133.8 195,132.9 195.5,135.3 196,133.2 196.5,135.2 197,135.3 197.5,135.1 198,134.8 198.5,132.3 199,134.3 199.5,133.6 200,135.9 200.5,133.3 201,133.8 201.5,134.2 202,133.1 202.5,133.5 203,134.1 203.5,132.8 204,131.7 204.5,132.0 205,132.9 205.5,135.2 206,135.2 206.5,134.0 207,134.7 207.5,133.7 208,134.0 208.5,133.7 209,135.7 209.5,133.7 210,133.6 210.5,132.8 211,135.2 211.5,135.4 212,136.0 212.5,135.2 213,135.9 213.5,135.4 214,136.4 214.5,135.2 215,136.2 215.5,134.6 216,135.4 216.5,133.5 217,134.8 217.5,134.8 218,134.4 218.5,134.9 219,132.1 219.5,132.4 220,134.6 220.5,132.9 221,133.4 221.5,134.2 222,134.8 222.5,133.9 223,133.1 223.5,133.0 224,133.4 224.5,134.4 225,132.3 225.5,131.4 226,133.7 226.5,133.3 227,135.6 227.5,132.8 228,135.1 228.5,134.8 229,135.4 229.5,136.1 230,134.5 230.5,134.5 231,133.5 231.5,135.2 232,133.2 232.5,134.7 233,132.5 233.5,135.1 234,134.2 234.5,135.4 235,135.1 235.5,134.3 236,135.0 236.5,134.1 237,132.3 237.5,135.2 238,132.2 238.5,134.8 239,132.1 239.5,133.9 240,134.4 240.5,135.1 241,135.0 241.5,136.6 242,137.6 242.5,135.9 243,136.6 243.5,135.7 244,136.1 244.5,135.8 245,136.2 245.5,134.8 246,134.6 246.5,134.4 247,135.0 247.5,135.8 248,134.1 248.5,135.0 249,134.9 249.5,134.3 250,136.3 250.5,136.1 251,134.3 251.5,134.0 252,134.4 252.5,134.5 253,135.6 253.5,134.5 254,133.8 254.5,135.1 255,134.2 255.5,133.8 256,135.4 256.5,135.7 257,135.2 257.5,134.4 258,133.2 258.5,134.2 259,133.5 259.5,132.7 260,133.1 260.5,133.5 261,133.4 261.5,133.4 262,133.8 262.5,134.5 263,134.5 263.5,134.7 264,134.5 264.5,135.7 265,133.9 265.5,134.4 266,134.0 266.5,133.3 267,134.4 267.5,135.0 268,134.1 268.5,134.1 269,134.6 269.5,133.1 270,133.3 270.5,133.6 271,133.3 271.5,133.6 272,133.9 272.5,133.9 273,133.1 273.5,134.9 274,133.3 274.5,134.5 275,132.2 275.5,132.4 276,133.3 276.5,133.5 277,134.8 277.5,136.0 278,136.0 278.5,133.9 279,136.1 279.5,135.0 280,136.1 280.5,134.8 281,134.3 281.5,133.0 282,135.8 282.5,133.4 283,135.6 283.5,136.4 284,134.9 284.5,135.8 285,134.8 285.5,134.3 286,134.8 286.5,134.2 287,133.4 287.5,134.4 288,134.3 288.5,134.5 289,135.2 289.5,135.7 290,135.9 290.5,134.2 291,133.2 291.5,133.2 292,135.4 292.5,135.4 293,135.9 293.5,132.7 294,133.4 294.5,134.4 295,132.8 295.5,135.7 296,135.5 296.5,133.8 297,133.5 297.5,134.9 298,136.3 298.5,134.3 299,134.7 299.5,135.7 300,135.6 300.5,134.6 301,135.4 301.5,135.5 302,132.8 302.5,134.4 303,134.5 303.5,135.3 304,135.6 304.5,134.3 305,134.4 305.5,134.9 306,133.9 306.5,135.6 307,134.4 307.5,134.7 308,132.3 308.5,132.7 309,134.0 309.5,135.0 310,132.8 310.5,133.0 311,133.2 311.5,133.4 312,135.1 312.5,134.4 313,135.2 313.5,135.6 314,135.6 314.5,136.1 315,134.0 315.5,134.4 316,136.2 316.5,134.1 317,134.0 317.5,136.0 318,135.7 318.5,134.6 319,134.5 319.5,136.5 320,136.5 320.5,134.6 321,133.9 321.5,134.6 322,133.7 322.5,133.4 323,133.2 323.5,135.2 324,133.1 324.5,135.7 325,135.3 325.5,135.7 326,135.1 326.5,135.1 327,134.7 327.5,134.2 328,135.7 328.5,135.3 329,135.0 329.5,135.5 330,134.6 330.5,134.9 331,135.2 331.5,134.6 332,134.1 332.5,133.7 333,135.9 333.5,136.1 334,135.7 334.5,136.5 335,134.1 335.5,133.0 336,135.1 336.5,133.2 337,133.1 337.5,135.0 338,134.5 338.5,134.8 339,135.1 339.5,135.1 340,133.9 340.5,134.7 341,134.6 341.5,134.5 342,133.0 342.5,134.6 343,133.2 343.5,135.0 344,134.0 344.5,134.6 345,134.4 345.5,134.8 346,134.7 346.5,133.9 347,133.7 347.5,135.8 348,136.1 348.5,134.4 349,135.1 349.5,134.0 350,134.3 350.5,135.5 351,133.0 351.5,133.2 352,134.8 352.5,134.5 353,135.6 353.5,135.3 354,134.8 354.5,136.0 355,136.0 355.5,134.7 356,134.9 356.5,135.6 357,132.9 357.5,134.4 358,135.5 358.5,133.5 359,135.2 359.5,134.0 360,133.8 360.5,134.5 361,133.7 361.5,135.7 362,135.3 362.5,135.1 363,133.4 363.5,134.9 364,135.1 364.5,133.6 365,132.8 365.5,133.3 366,133.0 366.5,134.7 367,135.0 367.5,136.3 368,136.1 368.5,135.9 369,135.4 369.5,135.2 370,135.9 370.5,134.3 371,134.5 371.5,133.1 372,133.0 372.5,132.2 373,133.5 373.5,134.1 374,134.0 374.5,132.1 375,135.2 375.5,135.1 376,133.1 376.5,135.3 377,133.7 377.5,131.8 378,134.0 378.5,134.7 379,134.7 379.5,133.5 380,132.7 380.5,134.9 381,135.4 381.5,134.5 382,133.7 382.5,134.2 383,135.7 383.5,134.0 384,132.9 384.5,134.3 385,135.2 385.5,133.5 386,133.7 386.5,135.4 387,133.8 387.5,134.7 388,133.4 388.5,133.8 389,134.3 389.5,133.8 390,135.8 390.5,135.0 391,133.1 391.5,135.3 392,135.0 392.5,132.3 393,131.8 393.5,135.4 394,134.0 394.5,134.5 395,134.4 395.5,133.5 396,133.9 396.5,134.5 397,135.7 397.5,135.4 398,134.2 398.5,133.1 399,134.5 399.5,133.8 400,133.6 400.5,134.8 401,134.3 401.5,134.3 402,135.4 402.5,134.6 403,134.4 403.5,135.0 404,133.8 404.5,134.8 405,132.9 405.5,133.0 406,134.5 406.5,133.4 407,135.0 407.5,132.9 408,135.0 408.5,133.4 409,133.2 409.5,133.1 410,134.1 410.5,133.7 411,132.3 411.5,133.3 412,133.1 412.5,134.3 413,133.7 413.5,132.3 414,133.8 414.5,134.2 415,135.2 415.5,134.6 416,135.2 416.5,135.2 417,135.7 417.5,135.8 418,134.0 418.5,134.5 419,135.2 419.5,134.8 420,133.4 420.5,133.2 421,133.1 421.5,132.6 422,134.8 422.5,132.8 423,133.5 423.5,133.4 424,135.7 424.5,135.9 425,134.6 425.5,133.1 426,134.8 426.5,135.3 427,133.0 427.5,132.5 428,133.0 428.5,132.5 429,134.4 429.5,132.9 430,135.3 430.5,134.9 431,134.8 431.5,135.5 432,134.1 432.5,135.4 433,135.8 433.5,135.6 434,133.7 434.5,134.9 435,135.8 435.5,134.9 436,134.4 436.5,134.7 437,134.0 437.5,133.9 438,136.2 438.5,134.1 439,135.3 439.5,135.6 440,133.8 440.5,133.4 441,135.8 441.5,135.1 442,136.3 442.5,136.7 443,135.7 443.5,136.8 444,135.3 444.5,135.7 445,136.9 445.5,137.1 446,137.0 446.5,135.7 447,136.5 447.5,135.4 448,135.3 448.5,135.5 449,136.3 449.5,136.0 450,135.6 450.5,136.1 451,137.0 451.5,136.9 452,135.9 452.5,136.4 453,137.1 453.5,136.5 454,137.0 454.5,136.9 455,135.7 455.5,135.9 456,135.1 456.5,136.6 457,136.5 457.5,136.9 458,136.2 458.5,135.3 459,135.9 459.5,136.2 460,136.6 460.5,136.3 461,135.5 461.5,136.4 462,136.0 462.5,135.6 463,137.0 463.5,137.0 464,135.4 464.5,137.0 465,136.1 465.5,136.3 466,137.4 466.5,137.0 467,137.4 467.5,136.1 468,137.1 468.5,137.6 469,137.0 469.5,136.7 470,136.3 470.5,136.9 471,137.1 471.5,137.1 472,137.1 472.5,136.4 473,136.4 473.5,136.2 474,136.6 474.5,137.2 475,137.3 475.5,136.0 476,136.8 476.5,135.7 477,135.7 477.5,135.8 478,136.8 478.5,136.1 479,136.1 479.5,137.1 480,136.4 480.5,136.9 481,136.9 481.5,136.1 482,136.5 482.5,136.2 483,136.0 483.5,136.4 484,135.9 484.5,136.2 485,135.7 485.5,136.8 486,135.8 486.5,137.3 487,137.3 487.5,136.5 488,136.7 488.5,136.0 489,137.1 489.5,136.8 490,135.5 490.5,137.0 491,135.8 491.5,136.9 492,137.3 492.5,136.3 493,137.0 493.5,136.7 494,136.6 494.5,137.6 495,137.0 495.5,137.5 496,137.6 496.5,136.9 497,136.8 497.5,136.8 498,136.8 498.5,137.9 499,137.5 499.5,137.3 500,137.5 500.5,137.9 501,137.8 501.5,138.1 502,138.5 502.5,138.4 503,137.7 503.5,138.0 504,137.9 504.5,138.3 505,138.2 505.5,138.6 506,138.6 506.5,138.6 507,138.4 507.5,138.4 508,138.6 508.5,138.6 509,138.6 509.5,138.9 510,138.7 510.5,138.8 511,138.9 511.5,138.7 512,138.6 512.5,138.8 513,138.6 513.5,138.6 514,139.0 514.5,138.9 515,138.9 515.5,138.7 516,139.0 516.5,139.0 517,138.8 517.5,138.7 518,138.9 518.5,138.7 519,139.0 519.5,139.0 520,138.8 520.5,138.9 521,138.8 521.5,138.3 522,137.1 522.5,138.4 523,139.0 523.5,138.8 524,139.0 524.5,138.7 525,138.9 525.5,138.9 526,138.9 526.5,138.9 527,139.0 527.5,138.9 528,138.8 528.5,138.9 529,139.0 529.5,138.9 530,138.9 530.5,138.9 531,138.9 531.5,138.8 532,138.9 532.5,138.1 533,138.4 533.5,138.8 534,138.9 534.5,139.0 535,139.0 535.5,139.0 536,139.0 536.5,138.9 537,139.0 537.5,138.2 538,137.2 538.5,138.3 539,138.8 539.5,139.0 540,139.0 540.5,139.0 541,139.0 541.5,139.0 542,138.3 542.5,138.0 543,138.8 543.5,139.0 544,138.9 544.5,139.0 545,138.9 545.5,138.8 546,138.9 546.5,139.0 547,138.8 547.5,139.0 548,138.2 548.5,137.3 549,138.7 549.5,138.9 550,138.9 550.5,139.0 551,138.9 551.5,138.9 552,139.0 552.5,138.2 553,137.0 553.5,139.0 554,138.9 554.5,138.7 555,138.9 555.5,139.0 556,139.0 556.5,138.9 557,138.9 557.5,138.8 558,138.0 558.5,137.6 559,138.8 559.5,138.9 560,138.8 560.5,138.9 561,138.7 561.5,138.6 562,139.0 562.5,138.9 563,138.9 563.5,137.6 564,139.0 564.5,138.9 565,138.9 565.5,138.8 566,138.7 566.5,138.7 567,138.8 567.5,138.9 568,138.7 568.5,138.7 569,138.9 569.5,138.9 570,138.9 570.5,139.0 571,138.9 571.5,139.0 572,138.9 572.5,138.9 573,138.9 573.5,138.8 574,137.6 574.5,138.4 575,139.0 575.5,138.9 576,139.0 576.5,138.8 577,139.0 577.5,139.0 578,138.9 578.5,137.7 579,138.5 579.5,139.0 580,139.0 580.5,138.8 581,138.8 581.5,138.8 582,138.8 582.5,138.8 583,139.0 583.5,138.4 584,136.8 584.5,138.8 585,138.8 585.5,139.0 586,138.8 586.5,139.0 587,138.7 587.5,138.8 588,139.0 588.5,138.8 589,137.9 589.5,138.5 590,138.9 590.5,139.0 591,138.7 591.5,138.9 592,138.8 592.5,139.0 593,138.7 593.5,138.8 594,138.8 594.5,138.5 595,138.6 595.5,138.7 596,138.5 596.5,138.8 597,138.5 597.5,138.8 598,138.9 598.5,139.0 599,138.8 599.5,137.7 600,137.5 600.5,138.8 601,138.6 601.5,138.6 602,138.7 602.5,138.9 603,138.7 603.5,139.0 604,138.8 604.5,138.8 605,136.9 605.5,137.6 606,138.8 606.5,139.0 607,138.8 607.5,138.9 608,139.0 608.5,138.6 609,138.7 609.5,138.7 610,138.8 610.5,138.9 611,138.0 611.5,138.5 612,138.9 612.5,138.8 613,138.8 613.5,138.9 614,138.7 614.5,138.7 615,138.8 615.5,138.7 616,138.0 616.5,136.8 617,138.5 617.5,138.6 618,138.8 618.5,138.8 619,139.0 619.5,139.0 620,138.8 620.5,139.0 621,139.0 621.5,138.3 622,138.6 622.5,138.9 623,138.6 623.5,138.8 624,138.9 624.5,139.0 625,139.0 625.5,138.9 626,138.0 626.5,138.3 627,138.9 627.5,139.0 628,138.9 628.5,138.5 629,138.6 629.5,138.5 630,138.5 630.5,137.7 631,138.0 631.5,138.6 632,138.6 632.5,138.8 633,138.6 633.5,138.6 634,138.7 634.5,138.6 635,138.7 635.5,138.7 636,138.9 636.5,137.5 637,138.3 637.5,138.8 638,138.9 638.5,138.6 639,138.8 639.5,138.6 640,138.9 640.5,139.0 641,138.8 641.5,138.7 642,138.8 642.5,137.8 643,138.3 643.5,138.6 644,138.7 644.5,138.4 645,138.7 645.5,138.7 646,138.7 646.5,138.6 647,134.7 647.5,138.0 648,138.9 648.5,138.7 649,138.7 649.5,138.5 650,138.6 650.5,138.3 651,138.8 651.5,138.6 652,138.6 652.5,138.2 653,138.0 653.5,138.2 654,138.5 654.5,138.3 655,139.0 655.5,138.8 656,138.9 656.5,138.5 657,138.3 657.5,137.8 658,136.9 658.5,135.6 659,135.9 659.5,137.0 660,137.5 660.5,138.4 661,138.2 661.5,137.5 662,136.8 662.5,135.4 663,136.9 663.5,137.7 664,136.8 664.5,135.9 665,137.3 665.5,136.7 666,136.8 666.5,135.9 667,136.0 667.5,137.6 668,138.3 668.5,137.7 669,137.0 669.5,137.6 670,137.6 670.5,138.6 671,138.1 671.5,138.0 672,137.3 672.5,137.3 673,136.6 673.5,136.5 674,137.5 674.5,137.6 675,138.3 675.5,138.3 676,137.8 676.5,138.8 677,138.9 677.5,138.8 678,138.1 678.5,137.4 679,137.0 679.5,136.0 680,135.5 680.5,135.9 681,136.5 681.5,137.6 682,137.9 682.5,138.2 683,138.7 683.5,138.9 684,138.8 684.5,138.4 685,138.6 685.5,137.7 686,137.5 686.5,137.0 687,137.3 687.5,137.0 688,137.8 688.5,136.6 689,136.5 689.5,136.1 690,137.7 690.5,137.9 691,138.7 691.5,138.9 692,138.7 692.5,138.3 693,137.5 693.5,137.5 694,136.8 694.5,137.1 695,136.6 695.5,136.4 696,138.2 696.5,137.9 697,136.9 697.5,138.1 698,138.5 698.5,138.4 699,137.8 699.5,137.1 700,137.1 700.5,136.2 701,135.7 701.5,135.3 702,137.1 702.5,136.6 703,137.3 703.5,137.4 704,138.1 704.5,138.3 705,137.8 705.5,136.2 706,136.5 706.5,137.9 707,138.2 707.5,137.6 708,136.8 708.5,137.3 709,136.6 709.5,136.8 710,136.8 710.5,138.0 711,138.2 711.5,138.3 712,137.0 712.5,138.2 713,138.3 713.5,137.3 714,136.5 714.5,136.8 715,137.2 715.5,137.2 716,136.3 716.5,136.8 717,137.7 717.5,137.4 718,137.2 718.5,137.2 719,136.8 719.5,136.4 720,136.6 720.5,137.5 721,138.0 721.5,137.9 722,137.6 722.5,137.0 723,137.4 723.5,137.3 724,137.7 724.5,138.1 725,137.9 725.5,138.5 726,138.4 726.5,138.7 727,138.9 727.5,138.7 728,137.5 728.5,137.6 729,136.9 729.5,136.0 730,136.9 730.5,136.5 731,136.6 731.5,137.5 732,138.0 732.5,137.9 733,134.9 733.5,137.3 734,138.6 734.5,138.6 735,138.5 735.5,137.9 736,137.5 736.5,137.2 737,136.9 737.5,136.1 738,137.4 738.5,137.6 739,137.9 739.5,138.0 740,138.5 740.5,138.7 741,138.6 741.5,137.9 742,137.3 742.5,138.1 743,137.6 743.5,137.4 744,137.9 744.5,136.6 745,136.4 745.5,136.0 746,137.2 746.5,138.0 747,138.1 747.5,138.5 748,138.4 748.5,138.8 749,138.6 749.5,138.0 750,137.1 750.5,137.2 751,137.2 751.5,136.1 752,136.6 752.5,136.5 753,137.8 753.5,137.9 754,138.1 754.5,137.9 755,138.2 755.5,137.8 756,137.7 756.5,136.7 757,137.5 757.5,137.9 758,137.6 758.5,137.9 759,137.8 759.5,137.8 760,137.2 760.5,137.7 761,138.1 761.5,138.5 762,138.3 762.5,138.9 763,138.9 763.5,138.5 764,138.4 764.5,138.1 765,136.1 765.5,138.1 766,137.3 766.5,137.2 767,137.2 767.5,137.8 768,137.2 768.5,136.7 769,137.9 769.5,138.0 770,138.6 770.5,138.9 771,137.7 771.5,138.8 772,138.5 772.5,138.1 773,138.1 773.5,137.2 774,136.9 774.5,137.7 775,137.8 775.5,137.9 776,138.2 776.5,136.7 777,136.1 777.5,137.6 778,137.9 778.5,138.7 779,138.3 779.5,138.2 780,137.5 780.5,137.3 781,137.5 781.5,136.7 782,138.0 782.5,137.6 783,138.2 783.5,138.4 784,138.7 784.5,138.8 785,138.6 785.5,138.5 786,138.5 786.5,138.3 787,138.3 787.5,138.0 788,136.6 788.5,137.5 789,137.6 789.5,137.7 790,138.5 790.5,138.2 791,138.9 791.5,139.0 792,139.0 792.5,138.6 793,138.5 793.5,138.2 794,138.5 794.5,138.3 795,137.9 795.5,138.0 796,137.4 796.5,137.7 797,137.8 797.5,138.3 798,137.4 798.5,138.3 799,138.7 799.5,139.0 800,138.8 800.5,138.4 801,138.7 801.5,138.5 802,137.6 802.5,137.0 803,137.6 803.5,138.2 804,138.7 804.5,138.5 805,137.2 805.5,138.9 806,139.0 806.5,139.0 807,139.0 807.5,139.0 808,138.7 808.5,138.6 809,138.3 809.5,138.6 810,138.4 810.5,138.5 811,138.5 811.5,138.5 812,138.8 812.5,138.9 813,139.0 813.5,139.0 814,139.0 814.5,139.0 815,139.0 815.5,138.8 816,138.4 816.5,138.2 817,138.2 817.5,138.4 818,138.2 818.5,138.9 819,138.8 819.5,139.0 820,139.0 820.5,139.0 821,139.0 821.5,139.0 822,139.0 822.5,139.0 823,139.0 823.5,139.0 824,138.7 824.5,139.0 825,138.9 825.5,139.0 826,139.0 826.5,138.9 827,139.0 827.5,139.0 828,139.0 828.5,139.0 829,139.0 829.5,138.9 830,139.0 830.5,139.0 831,139.0 831.5,138.9 832,139.0 832.5,139.0 833,139.0 833.5,139.0 834,139.0 834.5,139.0 835,139.0 835.5,139.0 836,139.0 836.5,139.0 837,139.0 837.5,139.0 838,139.0 838.5,139.0 839,138.9 839.5,139.0 840,139.0 840.5,139.0 841,139.0 841.5,139.0 842,139.0 842.5,139.0 843,139.0 843.5,139.0 844,139.0 844.5,139.0 845,139.0 845.5,139.0 846,139.0 846.5,139.0 847,139.0 847.5,139.0 848,139.0 848.5,139.0 849,139.0 849.5,139.0 850,138.9 850.5,139.0 851,139.0 851.5,138.6 852,136.7 852.5,137.0 853,136.1 853.5,134.2 854,132.3 854.5,135.2 855,133.0 855.5,133.3 856,134.4 856.5,134.3 857,135.8 857.5,135.8 858,134.0 858.5,134.1 859,133.3 859.5,132.3 860,134.8 860.5,133.8 861,133.8 861.5,134.8 862,134.9 862.5,134.8 863,134.3 863.5,135.2 864,135.0 864.5,133.1 865,134.2 865.5,132.6 866,132.5 866.5,134.0 867,135.3 867.5,134.3 868,135.0 868.5,132.8 869,135.3 869.5,133.2 870,134.1 870.5,134.0 871,135.1 871.5,133.7 872,134.8 872.5,135.2 873,135.1 873.5,134.8 874,135.5 874.5,133.8 875,133.4 875.5,135.1 876,134.7 876.5,136.3 877,134.0 877.5,134.0 878,135.7 878.5,136.6 879,134.6 879.5,135.0 880,134.2 880.5,134.1 881,134.9 881.5,134.7 882,135.1 882.5,133.6 883,133.3 883.5,134.1 884,133.0 884.5,135.3 885,133.8 885.5,133.8 886,135.1 886.5,134.1 887,135.1 887.5,133.0 888,134.7 888.5,134.3 889,132.5 889.5,134.1 890,133.1 890.5,135.0 891,135.4 891.5,135.4 892,133.8 892.5,133.4 893,135.8 893.5,135.3 894,133.5 894.5,135.3 895,133.9 895.5,133.1 896,132.5 896.5,134.7 897,134.2 897.5,133.5 898,132.9 898.5,134.2 899,134.5 899.5,134.2 900,135.0 900.5,133.1 901,131.9 901.5,133.0 902,134.5 902.5,132.8 903,132.2 903.5,131.9 904,132.7 904.5,133.6 905,135.2 905.5,133.4 906,133.7 906.5,135.4 907,135.6 907.5,135.1 908,134.9 908.5,135.4 909,133.4 909.5,135.2 910,135.3 910.5,134.4 911,135.2 911.5,136.1 912,136.0 912.5,135.4 913,135.7 913.5,135.7 914,136.2 914.5,135.1 915,134.8 915.5,134.3 916,132.6 916.5,135.1 917,132.7 917.5,133.5 918,133.2 918.5,132.9 919,134.9 919.5,133.3 920,133.6 920.5,134.1 921,134.6 921.5,134.3 922,132.4 922.5,133.5 923,135.3 923.5,135.5 924,133.4 924.5,132.9 925,132.9 925.5,135.2 926,134.3 926.5,134.1 927,135.7 927.5,135.7 928,134.4 928.5,134.2 929,133.6 929.5,134.4 930,132.4 930.5,133.3 931,132.3 931.5,133.0 932,133.8 932.5,135.1 933,135.6 933.5,134.8 934,134.6 934.5,132.9 935,134.1 935.5,135.3 936,133.2 936.5,131.8 937,134.9 937.5,133.6 938,132.8 938.5,134.9 939,132.5 939.5,133.3 940,132.8 940.5,133.8 941,135.7 941.5,135.2 942,134.5 942.5,133.6 943,134.3 943.5,133.4 944,134.4 944.5,135.4 945,134.0 945.5,134.9 946,135.5 946.5,134.3 947,135.1 947.5,134.5 948,136.4 948.5,133.7 949,133.6 949.5,135.8 950,133.4 950.5,134.4 951,134.7 951.5,134.5 952,132.7 952.5,133.4 953,133.8 953.5,133.2 954,135.6 954.5,135.8 955,133.2 955.5,133.7 956,135.0 956.5,133.7 957,133.7 957.5,135.6 958,134.5 958.5,134.2 959,132.7 959.5,135.7 960,135.2 960.5,134.1 961,133.9 961.5,134.7 962,136.0 962.5,136.2 963,134.4 963.5,133.3 964,133.8 964.5,133.2 965,135.0 965.5,133.1 966,134.9 966.5,134.7 967,131.8 967.5,132.2 968,135.4 968.5,132.7 969,133.8 969.5,135.0 970,132.9 970.5,132.0 971,132.2 971.5,132.6 972,132.7 972.5,132.0 973,134.4 973.5,134.7 974,134.8 974.5,135.4 975,135.8 975.5,135.9 976,134.5 976.5,134.6 977,135.2 977.5,134.1 978,134.0 978.5,134.0 979,132.7 979.5,132.7 980,133.0 980.5,133.6 981,134.0 981.5,133.9 982,133.6 982.5,133.9 983,135.7 983.5,136.1 984,133.9 984.5,135.4 985,132.7 985.5,133.1 986,132.3 986.5,132.5 987,134.5 987.5,134.3 988,134.9 988.5,133.0 989,134.7 989.5,135.1 990,136.3 990.5,135.1 991,133.8 991.5,135.9 992,133.1 992.5,133.9 993,133.9 993.5,134.3 994,133.0 994.5,133.4 995,134.3 995.5,135.7 996,136.3 996.5,134.9 997,133.7 997.5,135.0 998,134.2 998.5,136.0 999,135.2 999.5,132.6 1000,133.6 1000,145.9 999.5,144.4 999,146.1 998.5,144.5 998,145.1 997.5,143.2 997,145.4 996.5,142.9 996,144.7 995.5,144.9 995,144.1 994.5,146.1 994,144.3 993.5,143.5 993,146.0 992.5,143.2 992,144.6 991.5,144.0 991,144.8 990.5,144.8 990,143.7 989.5,143.5 989,144.8 988.5,145.4 988,144.2 987.5,145.6 987,146.0 986.5,144.6 986,145.9 985.5,145.9 985,143.8 984.5,144.3 984,145.2 983.5,143.2 983,145.0 982.5,144.7 982,143.3 981.5,144.8 981,143.7 980.5,145.2 980,145.2 979.5,143.8 979,145.8 978.5,146.0 978,144.2 977.5,143.0 977,145.5 976.5,145.0 976,144.1 975.5,145.6 975,144.1 974.5,144.4 974,144.3 973.5,144.6 973,146.9 972.5,145.2 972,146.0 971.5,144.6 971,145.7 970.5,144.9 970,143.9 969.5,145.0 969,145.7 968.5,145.7 968,144.3 967.5,146.9 967,146.2 966.5,147.2 966,146.7 965.5,144.9 965,144.9 964.5,145.8 964,145.6 963.5,145.7 963,144.8 962.5,145.0 962,143.3 961.5,145.6 961,143.0 960.5,144.1 960,145.1 959.5,145.8 959,144.4 958.5,143.8 958,146.3 957.5,143.4 957,144.1 956.5,145.2 956,144.4 955.5,143.9 955,145.4 954.5,145.1 954,143.4 953.5,143.7 953,146.5 952.5,144.8 952,145.4 951.5,146.1 951,146.2 950.5,145.7 950,144.1 949.5,144.3 949,144.3 948.5,143.4 948,142.9 947.5,143.0 947,144.4 946.5,143.7 946,144.5 945.5,143.2 945,144.9 944.5,145.1 944,143.7 943.5,143.6 943,145.1 942.5,143.7 942,142.8 941.5,144.6 941,143.2 940.5,143.3 940,145.6 939.5,145.6 939,143.5 938.5,146.0 938,144.0 937.5,146.4 937,145.3 936.5,147.1 936,146.7 935.5,144.8 935,144.3 934.5,145.9 934,145.5 933.5,144.6 933,145.9 932.5,143.4 932,144.5 931.5,146.8 931,144.9 930.5,145.4 930,144.3 929.5,144.8 929,144.2 928.5,144.0 928,143.8 927.5,145.0 927,144.6 926.5,143.8 926,144.0 925.5,145.9 925,144.1 924.5,145.0 924,145.1 923.5,144.3 923,144.0 922.5,146.3 922,144.7 921.5,146.1 921,144.6 920.5,143.0 920,145.3 919.5,143.5 919,144.5 918.5,144.7 918,144.7 917.5,146.2 917,146.5 916.5,145.2 916,144.0 915.5,145.7 915,143.8 914.5,144.1 914,145.3 913.5,142.9 913,144.0 912.5,143.5 912,143.9 911.5,144.3 911,143.0 910.5,144.5 910,144.7 909.5,143.8 909,144.9 908.5,143.2 908,143.5 907.5,144.3 907,144.3 906.5,145.4 906,144.7 905.5,144.9 905,144.0 904.5,145.5 904,146.8 903.5,146.0 903,146.8 902.5,147.2 902,144.8 901.5,146.0 901,146.8 900.5,144.4 900,145.8 899.5,143.3 899,145.3 898.5,146.5 898,144.9 897.5,144.1 897,146.0 896.5,145.3 896,144.0 895.5,144.3 895,144.3 894.5,144.1 894,144.8 893.5,143.8 893,143.3 892.5,145.6 892,143.8 891.5,144.4 891,145.1 890.5,145.3 890,143.9 889.5,144.1 889,146.2 888.5,145.9 888,144.2 887.5,146.2 887,146.8 886.5,146.1 886,145.6 885.5,144.8 885,144.4 884.5,145.8 884,144.1 883.5,145.6 883,146.0 882.5,146.2 882,145.1 881.5,143.8 881,144.6 880.5,145.8 880,145.8 879.5,144.1 879,144.0 878.5,143.0 878,144.2 877.5,144.2 877,144.7 876.5,144.5 876,143.4 875.5,143.2 875,144.8 874.5,144.6 874,145.3 873.5,144.3 873,145.2 872.5,143.3 872,143.5 871.5,144.5 871,145.6 870.5,144.6 870,144.3 869.5,146.3 869,144.3 868.5,146.8 868,145.9 867.5,146.6 867,144.1 866.5,145.2 866,144.5 865.5,145.5 865,143.6 864.5,145.7 864,144.7 863.5,143.1 863,144.2 862.5,143.5 862,146.4 861.5,146.3 861,145.1 860.5,144.2 860,146.4 859.5,144.7 859,145.8 858.5,143.8 858,145.1 857.5,145.5 857,144.3 856.5,144.3 856,146.4 855.5,144.4 855,144.9 854.5,144.8 854,147.3 853.5,143.8 853,143.2 852.5,143.3 852,141.1 851.5,140.8 851,140.0 850.5,140.0 850,140.0 849.5,140.0 849,140.0 848.5,140.0 848,140.0 847.5,140.0 847,140.1 846.5,140.1 846,140.0 845.5,140.0 845,140.0 844.5,140.0 844,140.0 843.5,140.0 843,140.0 842.5,140.0 842,140.0 841.5,140.0 841,140.0 840.5,140.0 840,140.0 839.5,140.0 839,140.0 838.5,140.0 838,140.1 837.5,140.0 837,140.0 836.5,140.0 836,140.0 835.5,140.0 835,140.0 834.5,140.0 834,140.0 833.5,140.0 833,140.0 832.5,140.1 832,140.0 831.5,140.0 831,140.0 830.5,140.0 830,140.0 829.5,140.0 829,140.0 828.5,140.0 828,140.0 827.5,140.0 827,140.1 826.5,140.1 826,140.1 825.5,140.0 825,140.0 824.5,140.2 824,140.2 823.5,140.1 823,140.0 822.5,140.0 822,140.0 821.5,140.0 821,140.0 820.5,140.0 820,140.0 819.5,140.1 819,140.2 818.5,140.1 818,140.3 817.5,140.5 817,140.9 816.5,140.4 816,140.4 815.5,140.2 815,140.1 814.5,140.0 814,140.0 813.5,140.0 813,140.0 812.5,140.0 812,140.1 811.5,140.6 811,140.3 810.5,140.6 810,140.9 809.5,141.1 809,140.4 808.5,140.6 808,140.3 807.5,140.1 807,140.0 806.5,140.0 806,140.0 805.5,140.0 805,142.8 804.5,140.3 804,140.6 803.5,140.9 803,140.8 802.5,141.9 802,141.3 801.5,140.7 801,140.6 800.5,140.6 800,140.2 799.5,140.2 799,140.1 798.5,141.4 798,141.2 797.5,140.4 797,141.1 796.5,141.5 796,141.6 795.5,141.4 795,141.1 794.5,141.0 794,140.9 793.5,140.3 793,141.2 792.5,140.2 792,140.1 791.5,140.0 791,140.4 790.5,140.7 790,140.8 789.5,141.2 789,141.6 788.5,141.3 788,141.2 787.5,141.8 787,141.2 786.5,140.5 786,140.7 785.5,140.2 785,140.4 784.5,140.0 784,140.3 783.5,140.4 783,140.6 782.5,141.2 782,141.9 781.5,141.4 781,142.4 780.5,141.3 780,141.2 779.5,141.2 779,141.0 778.5,140.7 778,141.6 777.5,141.4 777,142.1 776.5,141.5 776,140.9 775.5,140.6 775,141.4 774.5,141.0 774,141.6 773.5,141.4 773,141.0 772.5,140.7 772,140.5 771.5,140.2 771,141.4 770.5,140.3 770,140.1 769.5,140.9 769,141.3 768.5,141.6 768,141.1 767.5,141.9 767,141.7 766.5,142.5 766,141.3 765.5,141.2 765,142.1 764.5,140.5 764,140.4 763.5,140.1 763,140.1 762.5,140.1 762,140.2 761.5,140.4 761,141.5 760.5,141.2 760,141.2 759.5,141.6 759,142.0 758.5,141.6 758,140.8 757.5,141.9 757,141.6 756.5,142.1 756,141.0 755.5,141.2 755,141.3 754.5,141.1 754,140.7 753.5,141.3 753,141.4 752.5,141.7 752,142.8 751.5,142.1 751,141.3 750.5,141.2 750,141.0 749.5,140.4 749,140.4 748.5,140.1 748,140.4 747.5,140.7 747,141.0 746.5,141.2 746,141.4 745.5,142.4 745,142.2 744.5,142.3 744,141.1 743.5,141.1 743,141.0 742.5,140.9 742,142.0 741.5,141.5 741,140.5 740.5,140.5 740,140.5 739.5,141.1 739,141.7 738.5,141.2 738,141.9 737.5,142.7 737,142.5 736.5,141.8 736,141.4 735.5,141.0 735,140.3 734.5,140.3 734,140.2 733.5,141.5 733,145.4 732.5,140.9 732,140.8 731.5,141.3 731,141.9 730.5,143.4 730,141.8 729.5,142.9 729,141.7 728.5,141.0 728,141.4 727.5,140.5 727,140.3 726.5,140.4 726,140.6 725.5,140.9 725,141.0 724.5,141.3 724,142.3 723.5,141.7 723,142.5 722.5,141.6 722,141.0 721.5,141.3 721,140.6 720.5,141.6 720,141.8 719.5,141.2 719,143.2 718.5,142.3 718,141.4 717.5,141.8 717,142.0 716.5,142.8 716,142.3 715.5,142.1 715,142.3 714.5,141.8 714,141.9 713.5,142.1 713,141.2 712.5,141.0 712,141.8 711.5,140.7 711,140.8 710.5,141.6 710,142.1 709.5,143.3 709,142.5 708.5,141.8 708,142.2 707.5,141.0 707,140.8 706.5,140.5 706,142.2 705.5,142.3 705,141.3 704.5,140.7 704,140.6 703.5,140.9 703,141.5 702.5,142.1 702,142.2 701.5,143.2 701,141.7 700.5,141.9 700,142.9 699.5,141.7 699,141.1 698.5,140.4 698,140.5 697.5,140.8 697,141.9 696.5,141.1 696,141.3 695.5,142.0 695,142.2 694.5,142.9 694,142.4 693.5,142.1 693,140.9 692.5,141.0 692,140.7 691.5,140.5 691,140.5 690.5,141.2 690,142.1 689.5,142.3 689,142.7 688.5,141.5 688,141.8 687.5,141.7 687,141.5 686.5,142.4 686,141.8 685.5,141.3 685,140.5 684.5,140.2 684,140.2 683.5,140.1 683,140.2 682.5,140.8 682,141.2 681.5,141.0 681,141.5 680.5,143.7 680,142.2 679.5,142.0 679,142.2 678.5,141.5 678,141.0 677.5,140.7 677,140.4 676.5,140.1 676,141.3 675.5,140.5 675,140.7 674.5,141.3 674,141.4 673.5,141.6 673,142.8 672.5,142.7 672,141.4 671.5,141.5 671,141.3 670.5,140.8 670,140.7 669.5,141.9 669,142.8 668.5,141.1 668,140.7 667.5,141.0 667,142.4 666.5,143.7 666,141.7 665.5,143.1 665,142.4 664.5,141.7 664,141.5 663.5,142.1 663,143.0 662.5,142.6 662,142.3 661.5,140.7 661,140.3 660.5,141.2 660,141.1 659.5,141.8 659,142.2 658.5,143.2 658,142.0 657.5,141.4 657,140.6 656.5,140.3 656,140.3 655.5,140.0 655,140.0 654.5,141.0 654,141.0 653.5,140.5 653,141.2 652.5,141.1 652,140.4 651.5,140.3 651,140.4 650.5,140.3 650,140.3 649.5,140.3 649,140.2 648.5,140.0 648,140.3 647.5,141.0 647,144.2 646.5,140.2 646,140.4 645.5,140.2 645,140.4 644.5,140.2 644,140.1 643.5,140.2 643,140.8 642.5,141.2 642,140.2 641.5,140.3 641,140.2 640.5,140.3 640,140.3 639.5,140.1 639,140.3 638.5,140.1 638,140.3 637.5,140.3 637,140.8 636.5,141.2 636,140.4 635.5,140.5 635,140.5 634.5,140.2 634,140.1 633.5,140.2 633,140.2 632.5,140.3 632,140.6 631.5,140.3 631,141.0 630.5,140.9 630,140.4 629.5,140.6 629,140.6 628.5,140.5 628,140.3 627.5,140.3 627,140.3 626.5,141.0 626,141.4 625.5,140.3 625,140.3 624.5,140.3 624,140.2 623.5,140.0 623,140.4 622.5,140.1 622,140.9 621.5,140.6 621,140.2 620.5,140.1 620,140.0 619.5,140.1 619,140.1 618.5,140.0 618,140.0 617.5,140.1 617,140.2 616.5,141.5 616,140.4 615.5,140.2 615,140.3 614.5,140.1 614,140.1 613.5,140.3 613,140.2 612.5,140.0 612,140.3 611.5,140.5 611,141.0 610.5,140.1 610,140.1 609.5,140.1 609,140.0 608.5,140.3 608,140.4 607.5,140.3 607,140.0 606.5,140.3 606,140.1 605.5,141.4 605,142.1 604.5,140.3 604,140.0 603.5,140.3 603,140.2 602.5,140.2 602,140.5 601.5,140.2 601,140.1 600.5,140.0 600,141.0 599.5,141.0 599,140.2 598.5,140.2 598,140.1 597.5,140.1 597,140.3 596.5,140.4 596,140.5 595.5,140.3 595,140.4 594.5,140.1 594,140.1 593.5,140.3 593,140.1 592.5,140.3 592,140.0 591.5,140.2 591,140.1 590.5,140.3 590,140.1 589.5,140.6 589,141.4 588.5,140.2 588,140.1 587.5,140.1 587,140.2 586.5,140.0 586,140.0 585.5,140.0 585,140.1 584.5,140.1 584,142.2 583.5,140.4 583,140.0 582.5,140.0 582,140.1 581.5,140.4 581,140.3 580.5,140.2 580,140.1 579.5,140.0 579,140.2 578.5,141.3 578,140.3 577.5,140.1 577,140.0 576.5,140.1 576,140.1 575.5,140.1 575,140.2 574.5,140.5 574,141.4 573.5,140.1 573,140.1 572.5,140.0 572,140.1 571.5,140.0 571,140.0 570.5,140.1 570,140.0 569.5,140.2 569,140.3 568.5,140.1 568,140.2 567.5,140.3 567,140.2 566.5,140.2 566,140.2 565.5,140.2 565,140.2 564.5,140.0 564,140.3 563.5,142.1 563,140.2 562.5,140.1 562,140.2 561.5,140.4 561,140.3 560.5,140.4 560,140.3 559.5,140.3 559,140.0 558.5,141.0 558,141.8 557.5,140.3 557,140.2 556.5,140.1 556,140.1 555.5,140.0 555,140.1 554.5,140.2 554,140.3 553.5,140.0 553,141.0 552.5,140.8 552,140.1 551.5,140.0 551,140.1 550.5,140.0 550,140.0 549.5,140.0 549,140.2 548.5,141.3 548,141.1 547.5,140.0 547,140.2 546.5,140.1 546,140.3 545.5,140.3 545,140.2 544.5,140.2 544,140.2 543.5,140.0 543,140.3 542.5,140.9 542,140.6 541.5,140.0 541,140.1 540.5,140.1 540,140.1 539.5,140.2 539,140.0 538.5,140.3 538,141.4 537.5,140.6 537,140.0 536.5,140.1 536,140.0 535.5,140.0 535,140.0 534.5,140.1 534,140.1 533.5,140.1 533,140.4 532.5,140.8 532,140.3 531.5,140.3 531,140.2 530.5,140.3 530,140.2 529.5,140.1 529,140.1 528.5,140.0 528,140.0 527.5,140.1 527,140.1 526.5,140.2 526,140.3 525.5,140.1 525,140.3 524.5,140.1 524,140.1 523.5,140.0 523,140.0 522.5,140.7 522,141.2 521.5,140.9 521,140.2 520.5,140.0 520,140.0 519.5,140.2 519,140.1 518.5,140.4 518,140.1 517.5,140.2 517,140.0 516.5,140.2 516,140.3 515.5,140.3 515,140.3 514.5,140.3 514,140.0 513.5,140.2 513,140.4 512.5,140.4 512,140.5 511.5,140.5 511,140.5 510.5,140.3 510,140.1 509.5,140.5 509,140.5 508.5,140.2 508,140.5 507.5,140.4 507,140.5 506.5,140.6 506,140.4 505.5,140.4 505,140.4 504.5,141.1 504,140.6 503.5,141.3 503,140.6 502.5,140.5 502,140.5 501.5,140.6 501,141.2 500.5,141.1 500,141.4 499.5,141.1 499,141.0 498.5,141.2 498,142.2 497.5,142.1 497,142.0 496.5,142.6 496,141.6 495.5,141.9 495,142.7 494.5,142.4 494,142.4 493.5,141.5 493,141.7 492.5,142.4 492,143.5 491.5,143.8 491,143.6 490.5,142.4 490,143.2 489.5,141.7 489,143.2 488.5,141.9 488,141.9 487.5,141.6 487,142.6 486.5,141.8 486,141.9 485.5,141.9 485,143.3 484.5,142.9 484,143.0 483.5,141.9 483,143.4 482.5,143.6 482,143.1 481.5,142.9 481,142.1 480.5,142.2 480,142.6 479.5,141.7 479,142.5 478.5,141.7 478,142.6 477.5,143.2 477,143.6 476.5,142.6 476,143.8 475.5,142.1 475,141.9 474.5,142.9 474,142.4 473.5,142.2 473,142.6 472.5,142.7 472,141.6 471.5,142.3 471,142.6 470.5,142.5 470,142.5 469.5,142.3 469,141.7 468.5,142.1 468,142.1 467.5,142.9 467,142.3 466.5,141.3 466,142.0 465.5,142.6 465,142.4 464.5,143.0 464,142.2 463.5,142.3 463,143.3 462.5,142.0 462,142.8 461.5,142.9 461,142.7 460.5,142.9 460,142.1 459.5,141.7 459,143.5 458.5,142.9 458,143.5 457.5,142.3 457,143.3 456.5,143.0 456,143.0 455.5,143.6 455,142.6 454.5,142.0 454,143.2 453.5,141.9 453,142.5 452.5,141.9 452,142.5 451.5,141.9 451,142.4 450.5,142.9 450,142.2 449.5,142.0 449,142.9 448.5,142.2 448,143.3 447.5,142.1 447,143.5 446.5,142.7 446,142.1 445.5,142.7 445,142.7 444.5,143.1 444,143.2 443.5,143.8 443,143.8 442.5,143.0 442,142.1 441.5,142.6 441,143.4 440.5,144.5 440,143.8 439.5,143.0 439,143.8 438.5,143.3 438,143.4 437.5,144.2 437,143.7 436.5,145.2 436,144.9 435.5,145.4 435,146.0 434.5,145.0 434,143.2 433.5,145.1 433,143.6 432.5,144.4 432,144.8 431.5,144.1 431,145.4 430.5,145.2 430,144.7 429.5,143.8 429,144.2 428.5,146.4 428,144.4 427.5,146.2 427,146.1 426.5,143.6 426,146.3 425.5,144.3 425,143.4 424.5,143.3 424,143.7 423.5,146.0 423,145.8 422.5,143.9 422,146.2 421.5,145.4 421,145.6 420.5,145.4 420,144.6 419.5,143.8 419,145.2 418.5,143.4 418,144.7 417.5,144.7 417,144.4 416.5,144.1 416,143.7 415.5,145.9 415,145.8 414.5,146.8 414,144.5 413.5,145.2 413,144.3 412.5,145.8 412,143.7 411.5,144.5 411,146.3 410.5,146.5 410,144.2 409.5,145.5 409,143.9 408.5,144.1 408,144.1 407.5,147.2 407,147.2 406.5,144.1 406,145.9 405.5,143.8 405,144.3 404.5,143.7 404,145.4 403.5,143.0 403,143.8 402.5,143.9 402,143.4 401.5,144.0 401,145.7 400.5,144.1 400,143.5 399.5,143.1 399,144.2 398.5,145.8 398,143.7 397.5,143.3 397,143.5 396.5,144.3 396,145.3 395.5,144.1 395,145.5 394.5,146.0 394,146.3 393.5,146.4 393,144.7 392.5,144.1 392,143.7 391.5,145.6 391,143.6 390.5,144.2 390,144.2 389.5,146.0 389,144.3 388.5,143.6 388,145.6 387.5,145.5 387,144.0 386.5,145.5 386,145.6 385.5,143.3 385,144.5 384.5,145.2 384,143.7 383.5,145.6 383,144.3 382.5,144.2 382,143.8 381.5,145.1 381,146.0 380.5,146.9 380,145.5 379.5,145.4 379,144.5 378.5,145.5 378,144.8 377.5,144.2 377,146.4 376.5,145.5 376,144.8 375.5,143.5 375,144.4 374.5,145.5 374,144.3 373.5,144.3 373,144.9 372.5,145.7 372,147.5 371.5,147.1 371,144.7 370.5,143.3 370,145.2 369.5,143.0 369,143.3 368.5,143.3 368,143.3 367.5,143.6 367,145.1 366.5,143.6 366,145.9 365.5,144.6 365,145.2 364.5,145.4 364,144.0 363.5,144.2 363,143.7 362.5,143.7 362,144.7 361.5,142.7 361,143.6 360.5,143.4 360,145.4 359.5,143.9 359,146.4 358.5,143.7 358,143.8 357.5,144.8 357,144.4 356.5,145.4 356,145.1 355.5,144.2 355,145.1 354.5,145.3 354,145.4 353.5,144.4 353,145.0 352.5,145.1 352,145.0 351.5,145.1 351,143.4 350.5,146.1 350,144.2 349.5,143.8 349,145.0 348.5,143.8 348,143.4 347.5,143.2 347,145.2 346.5,143.7 346,145.9 345.5,145.4 345,145.8 344.5,144.4 344,144.3 343.5,144.5 343,143.8 342.5,146.3 342,146.5 341.5,145.1 341,145.8 340.5,145.7 340,145.8 339.5,146.2 339,146.3 338.5,145.7 338,143.8 337.5,145.1 337,144.6 336.5,145.8 336,146.2 335.5,144.2 335,143.8 334.5,143.8 334,144.5 333.5,143.8 333,145.0 332.5,144.0 332,145.2 331.5,142.9 331,143.3 330.5,144.1 330,144.3 329.5,144.3 329,143.8 328.5,145.4 328,145.3 327.5,144.0 327,144.6 326.5,143.4 326,143.0 325.5,143.1 325,145.7 324.5,145.2 324,144.9 323.5,144.7 323,144.3 322.5,145.4 322,145.3 321.5,144.4 321,145.5 320.5,143.5 320,144.1 319.5,143.8 319,143.2 318.5,143.9 318,144.0 317.5,145.0 317,144.3 316.5,144.8 316,143.6 315.5,143.0 315,145.8 314.5,143.9 314,143.0 313.5,144.1 313,143.5 312.5,144.2 312,144.5 311.5,144.7 311,143.9 310.5,145.4 310,146.3 309.5,145.7 309,147.4 308.5,144.6 308,145.5 307.5,143.5 307,145.1 306.5,144.1 306,144.4 305.5,145.5 305,144.8 304.5,144.7 304,144.5 303.5,145.6 303,144.0 302.5,143.7 302,144.5 301.5,144.5 301,143.6 300.5,143.5 300,143.8 299.5,143.2 299,143.0 298.5,144.7 298,143.2 297.5,144.4 297,145.6 296.5,146.1 296,146.1 295.5,145.9 295,143.8 294.5,143.5 294,145.9 293.5,144.5 293,143.7 292.5,145.2 292,143.9 291.5,145.7 291,143.8 290.5,146.0 290,143.8 289.5,144.7 289,146.4 288.5,144.1 288,145.0 287.5,144.6 287,144.7 286.5,144.6 286,143.4 285.5,144.8 285,145.1 284.5,144.1 284,143.9 283.5,142.5 283,142.7 282.5,143.9 282,144.7 281.5,145.2 281,143.6 280.5,144.5 280,145.5 279.5,144.6 279,145.3 278.5,143.6 278,144.1 277.5,143.4 277,143.7 276.5,144.8 276,146.2 275.5,146.9 275,144.0 274.5,144.8 274,144.2 273.5,145.0 273,145.9 272.5,144.0 272,143.8 271.5,143.9 271,144.1 270.5,146.2 270,146.4 269.5,146.3 269,144.4 268.5,144.7 268,144.3 267.5,146.5 267,144.1 266.5,143.5 266,145.3 265.5,144.1 265,144.8 264.5,144.1 264,144.7 263.5,143.9 263,143.1 262.5,143.1 262,145.6 261.5,145.9 261,145.8 260.5,144.0 260,146.8 259.5,145.4 259,146.3 258.5,146.4 258,143.6 257.5,145.9 257,144.0 256.5,144.3 256,143.4 255.5,145.4 255,146.3 254.5,146.0 254,144.2 253.5,144.6 253,146.5 252.5,143.7 252,145.2 251.5,145.0 251,144.3 250.5,143.1 250,142.8 249.5,143.2 249,143.4 248.5,143.1 248,143.4 247.5,144.4 247,143.2 246.5,143.8 246,146.0 245.5,143.3 245,144.9 244.5,143.9 244,143.7 243.5,143.8 243,142.2 242.5,142.4 242,141.7 241.5,142.1 241,143.3 240.5,145.6 240,145.6 239.5,146.7 239,144.9 238.5,145.5 238,144.8 237.5,146.6 237,144.9 236.5,144.9 236,144.3 235.5,143.2 235,145.8 234.5,145.8 234,144.2 233.5,145.2 233,144.1 232.5,144.1 232,146.2 231.5,146.8 231,145.2 230.5,145.6 230,144.8 229.5,145.1 229,144.7 228.5,144.6 228,146.4 227.5,145.4 227,144.9 226.5,144.0 226,143.8 225.5,145.1 225,145.3 224.5,147.3 224,146.5 223.5,144.0 223,144.5 222.5,145.9 222,145.7 221.5,144.8 221,144.6 220.5,144.6 220,144.3 219.5,145.2 219,145.2 218.5,144.4 218,144.7 217.5,145.5 217,144.9 216.5,144.2 216,145.1 215.5,143.2 215,142.4 214.5,143.1 214,143.1 213.5,143.4 213,144.6 212.5,144.6 212,145.0 211.5,143.9 211,143.8 210.5,145.8 210,146.3 209.5,144.8 209,145.1 208.5,144.5 208,144.6 207.5,143.9 207,144.9 206.5,144.9 206,143.3 205.5,146.1 205,143.7 204.5,144.4 204,146.9 203.5,145.5 203,145.4 202.5,144.8 202,143.8 201.5,144.0 201,143.5 200.5,143.8 200,145.4 199.5,143.3 199,145.8 198.5,144.6 198,145.2 197.5,144.3 197,143.5 196.5,145.8 196,143.5 195.5,143.8 195,144.3 194.5,144.7 194,145.4 193.5,143.6 193,146.3 192.5,144.4 192,146.8 191.5,144.7 191,145.6 190.5,146.5 190,147.2 189.5,146.4 189,146.6 188.5,145.0 188,144.0 187.5,145.6 187,144.7 186.5,143.7 186,145.8 185.5,144.2 185,143.3 184.5,143.7 184,144.7 183.5,145.2 183,144.3 182.5,145.7 182,143.2 181.5,144.2 181,143.7 180.5,144.4 180,144.5 179.5,143.7 179,143.3 178.5,145.1 178,144.0 177.5,144.0 177,145.0 176.5,143.6 176,145.2 175.5,143.5 175,143.7 174.5,143.3 174,144.8 173.5,143.8 173,145.2 172.5,144.5 172,146.0 171.5,145.1 171,145.6 170.5,146.4 170,146.1 169.5,143.8 169,145.1 168.5,145.4 168,144.3 167.5,145.2 167,144.8 166.5,143.5 166,144.9 165.5,145.3 165,144.9 164.5,142.9 164,143.2 163.5,143.6 163,143.7 162.5,143.5 162,142.5 161.5,142.1 161,141.2 160.5,140.7 160,140.0 159.5,140.1 159,140.0 158.5,140.0 158,140.0 157.5,140.0 157,140.1 156.5,140.2 156,140.1 155.5,140.1 155,140.0 154.5,140.2 154,140.1 153.5,140.0 153,140.1 152.5,140.0 152,140.0 151.5,140.0 151,140.0 150.5,140.5 150,141.5 149.5,142.1 149,142.5 148.5,143.1 148,142.8 147.5,144.2 147,143.1 146.5,142.4 146,142.6 145.5,142.0 145,142.0 144.5,142.0 144,142.2 143.5,142.2 143,143.8 142.5,142.6 142,143.4 141.5,142.5 141,144.5 140.5,144.3 140,143.6 139.5,143.6 139,143.1 138.5,142.3 138,143.5 137.5,143.8 137,142.4 136.5,142.7 136,143.6 135.5,143.1 135,143.0 134.5,143.6 134,143.2 133.5,142.8 133,142.0 132.5,142.5 132,142.1 131.5,142.1 131,142.3 130.5,143.1 130,142.6 129.5,142.3 129,143.8 128.5,143.5 128,141.9 127.5,142.5 127,142.7 126.5,142.6 126,142.6 125.5,143.3 125,142.2 124.5,143.4 124,143.4 123.5,142.4 123,143.0 122.5,144.1 122,143.8 121.5,142.6 121,144.6 120.5,143.0 120,144.6 119.5,142.7 119,144.1 118.5,143.0 118,142.7 117.5,143.8 117,142.9 116.5,143.2 116,143.4 115.5,143.6 115,143.5 114.5,143.9 114,143.1 113.5,142.3 113,142.3 112.5,142.1 112,143.3 111.5,142.6 111,142.9 110.5,141.5 110,142.6 109.5,142.7 109,142.7 108.5,143.5 108,142.4 107.5,142.3 107,143.1 106.5,143.3 106,142.4 105.5,143.0 105,143.2 104.5,142.9 104,142.3 103.5,142.6 103,142.6 102.5,141.5 102,142.4 101.5,141.7 101,141.6 100.5,141.1 100,141.3 99.5,141.8 99,141.9 98.5,141.5 98,141.1 97.5,141.1 97,140.8 96.5,140.8 96,140.7 95.5,141.1 95,141.0 94.5,140.6 94,140.7 93.5,140.9 93,141.3 92.5,140.8 92,141.0 91.5,141.0 91,141.6 90.5,141.2 90,142.4 89.5,141.8 89,142.3 88.5,142.0 88,143.2 87.5,144.7 87,142.9 86.5,143.1 86,144.0 85.5,142.7 85,143.0 84.5,144.7 84,142.7 83.5,143.7 83,142.5 82.5,143.0 82,143.1 81.5,143.9 81,143.5 80.5,143.8 80,142.2 79.5,142.6 79,144.7 78.5,143.2 78,144.3 77.5,142.7 77,143.6 76.5,143.3 76,143.9 75.5,143.8 75,143.6 74.5,142.0 74,142.4 73.5,143.2 73,143.5 72.5,143.5 72,144.6 71.5,142.8 71,142.8 70.5,142.6 70,144.4 69.5,142.9 69,141.2 68.5,141.1 68,140.1 67.5,140.4 67,140.2 66.5,140.4 66,140.3 65.5,140.4 65,140.3 64.5,140.2 64,140.2 63.5,140.2 63,140.2 62.5,140.2 62,140.2 61.5,140.0 61,140.3 60.5,140.0 60,140.3 59.5,140.3 59,140.3 58.5,140.1 58,140.4 57.5,140.5 57,141.5 56.5,141.8 56,142.0 55.5,142.7 55,143.8 54.5,144.1 54,142.2 53.5,143.5 53,143.5 52.5,142.7 52,143.2 51.5,142.7 51,143.2 50.5,143.8 50,142.5 49.5,144.2 49,144.4 48.5,142.7 48,142.2 47.5,142.3 47,142.6 46.5,142.9 46,142.3 45.5,144.1 45,144.5 44.5,144.1 44,143.7 43.5,142.7 43,144.4 42.5,142.9 42,143.4 41.5,142.8 41,141.8 40.5,140.5 40,140.0 39.5,140.0 39,140.0 38.5,140.1 38,140.0 37.5,140.1 37,140.1 36.5,140.0 36,140.2 35.5,140.1 35,140.1 34.5,140.0 34,140.0 33.5,140.0 33,140.0 32.5,140.0 32,140.0 31.5,140.0 31,140.0 30.5,140.1 30,140.0 29.5,140.0 29,140.0 28.5,140.0 28,140.0 27.5,140.0 27,140.0 26.5,140.0 26,140.0 25.5,140.0 25,140.0 24.5,140.0 24,140.0 23.5,140.0 23,140.0 22.5,140.0 22,140.0 21.5,140.0 21,140.0 20.5,140.0 20,140.0 19.5,140.0 19,140.1 18.5,140.1 18,140.0 17.5,140.1 17,140.0 16.5,140.1 16,140.2 15.5,140.2 15,140.0 14.5,140.0 14,140.0 13.5,140.0 13,140.0 12.5,140.0 12,140.0 11.5,140.0 11,140.0 10.5,140.0 10,140.0 9.5,140.0 9,140.0 8.5,140.1 8,140.0 7.5,140.0 7,140.0 6.5,140.0 6,140.0 5.5,140.0 5,140.0 4.5,140.0 4,140.1 3.5,140.0 3,140.2 2.5,140.0 2,140.0 1.5,140.1 1,140.1 0.5,140.1 0,140.1Z" fill="#474747" fill-opacity="0.88"/>
<path d="M0,119.0 1,119.0 2,119.0 3,119.0 4,119.0 5,119.0 6,119.0 7,119.0 8,119.0 9,119.0 10,119.0 11,119.0 12,119.0 13,119.0 14,119.0 15,119.0 16,119.0 17,119.0 18,119.0 19,119.0 20,119.0 21,119.0 22,119.0 23,119.0 24,119.0 25,119.0 26,119.0 27,119.0 28,119.0 29,119.0 30,119.0 31,119.0 32,119.0 33,119.0 34,119.0 35,119.0 36,119.0 37,119.0 38,119.0 39,119.0 40,119.0 41,119.0 42,119.0 43,119.0 44,119.0 45,119.0 46,119.0 47,119.0 48,119.0 49,119.0 50,119.0 51,119.0 52,119.0 53,119.0 54,119.0 55,119.0 56,119.0 57,119.0 58,119.0 59,119.0 60,119.0 61,119.0 62,119.0 63,118.9 64,118.7 65,118.7 66,118.2 67,118.1 68,117.8 69,117.9 70,117.6 71,117.8 72,118.3 73,117.8 74,118.2 75,117.6 76,117.6 77,117.9 78,117.8 79,117.8 80,118.1 81,117.9 82,117.3 83,117.6 84,117.9 85,117.7 86,118.0 87,118.1 88,117.9 89,117.7 90,117.8 91,118.1 92,118.2 93,118.1 94,118.0 95,118.4 96,118.1 97,118.0 98,117.9 99,118.2 100,117.8 101,118.2 102,118.0 103,117.8 104,117.9 105,117.9 106,117.9 107,118.2 108,118.0 109,117.5 110,117.9 111,117.5 112,117.4 113,117.8 114,117.5 115,117.7 116,117.6 117,117.1 118,117.1 119,116.9 120,117.0 121,117.5 122,117.3 123,117.3 124,116.7 125,117.1 126,117.3 127,117.4 128,117.5 129,117.4 130,117.0 131,116.9 132,117.4 133,117.1 134,117.5 135,117.2 136,117.4 137,117.3 138,117.0 139,117.1 140,116.5 141,117.1 142,117.1 143,117.0 144,117.2 145,117.3 146,117.3 147,116.8 148,116.9 149,118.1 150,118.5 151,119.0 152,119.0 153,119.0 154,119.0 155,119.0 156,119.0 157,119.0 158,119.0 159,119.0 160,119.0 161,118.6 162,118.0 163,117.6 164,117.7 165,116.6 166,116.4 167,116.1 168,116.7 169,116.0 170,116.8 171,116.1 172,116.2 173,116.1 174,115.9 175,116.6 176,116.5 177,116.6 178,117.0 179,117.0 180,115.9 181,115.6 182,116.1 183,116.1 184,116.3 185,116.4 186,116.0 187,116.2 188,115.8 189,115.3 190,116.0 191,117.0 192,116.3 193,116.1 194,116.9 195,116.4 196,116.1 197,116.8 198,116.5 199,116.2 200,116.6 201,115.8 202,115.8 203,116.3 204,116.3 205,117.0 206,116.6 207,116.6 208,116.1 209,116.0 210,116.0 211,117.1 212,117.2 213,116.6 214,116.3 215,116.3 216,115.5 217,115.6 218,116.4 219,116.5 220,115.5 221,116.3 222,116.2 223,115.5 224,115.6 225,115.7 226,116.5 227,116.3 228,116.7 229,116.4 230,116.6 231,116.8 232,116.0 233,116.4 234,116.8 235,116.6 236,116.5 237,116.4 238,115.8 239,116.1 240,116.4 241,117.6 242,117.9 243,117.1 244,117.3 245,117.4 246,116.9 247,117.3 248,117.2 249,116.3 250,116.7 251,116.3 252,115.6 253,116.5 254,116.8 255,115.8 256,116.3 257,116.1 258,116.4 259,116.3 260,116.4 261,116.7 262,116.4 263,116.5 264,116.5 265,116.2 266,116.9 267,116.1 268,116.6 269,116.4 270,115.7 271,116.2 272,116.2 273,116.4 274,117.0 275,116.6 276,116.8 277,116.9 278,116.5 279,116.7 280,116.6 281,117.2 282,117.0 283,117.0 284,116.7 285,115.9 286,116.5 287,116.5 288,116.5 289,116.0 290,116.7 291,115.9 292,115.6 293,115.8 294,115.8 295,117.1 296,117.3 297,116.7 298,116.0 299,115.9 300,115.7 301,116.8 302,116.7 303,116.0 304,116.6 305,116.5 306,115.5 307,115.9 308,116.7 309,116.7 310,117.1 311,116.5 312,116.9 313,116.6 314,116.6 315,117.2 316,117.4 317,117.4 318,116.9 319,116.5 320,116.4 321,115.6 322,116.4 323,116.8 324,116.9 325,117.0 326,116.9 327,115.9 328,116.7 329,117.0 330,116.3 331,117.1 332,117.1 333,116.1 334,116.2 335,116.0 336,116.8 337,116.0 338,116.3 339,115.9 340,115.9 341,116.0 342,115.7 343,115.9 344,117.1 345,116.4 346,117.0 347,117.0 348,116.9 349,117.1 350,116.7 351,116.6 352,117.3 353,117.1 354,116.1 355,116.6 356,116.1 357,116.4 358,116.4 359,116.9 360,116.9 361,116.3 362,116.5 363,116.6 364,116.8 365,117.3 366,116.7 367,116.9 368,116.4 369,115.6 370,116.4 371,116.1 372,115.9 373,116.5 374,116.4 375,115.4 376,116.6 377,116.0 378,116.2 379,116.8 380,116.8 381,117.1 382,116.4 383,116.8 384,116.4 385,116.7 386,117.2 387,116.3 388,116.4 389,116.0 390,115.8 391,115.9 392,117.1 393,116.6 394,117.2 395,116.7 396,116.8 397,117.1 398,116.5 399,117.2 400,116.9 401,117.3 402,116.8 403,116.9 404,116.1 405,115.9 406,116.1 407,116.9 408,115.8 409,116.1 410,115.6 411,115.3 412,116.8 413,116.3 414,116.4 415,117.4 416,117.2 417,116.7 418,117.0 419,116.7 420,116.4 421,116.7 422,116.7 423,116.9 424,116.9 425,116.0 426,116.5 427,116.9 428,117.0 429,116.8 430,117.1 431,116.7 432,116.4 433,116.6 434,116.6 435,116.9 436,117.2 437,116.7 438,115.8 439,116.2 440,115.9 441,116.5 442,117.4 443,117.5 444,117.4 445,117.3 446,117.0 447,117.2 448,117.5 449,118.0 450,117.8 451,117.7 452,117.5 453,117.1 454,117.6 455,117.8 456,117.3 457,117.4 458,117.7 459,117.5 460,117.3 461,117.1 462,117.2 463,117.6 464,117.8 465,117.4 466,117.6 467,117.6 468,117.9 469,118.0 470,117.8 471,117.8 472,117.5 473,117.4 474,117.0 475,117.6 476,117.2 477,117.2 478,117.6 479,117.2 480,117.2 481,117.5 482,117.2 483,117.6 484,117.7 485,117.6 486,117.4 487,117.7 488,117.6 489,117.5 490,117.6 491,117.9 492,117.7 493,117.6 494,117.6 495,117.8 496,118.2 497,118.3 498,118.2 499,118.7 500,118.4 501,118.5 502,118.7 503,118.5 504,118.7 505,118.9 506,118.7 507,118.9 508,118.9 509,118.9 510,119.0 511,119.0 512,119.0 513,119.0 514,119.0 515,119.0 516,119.0 517,119.0 518,119.0 519,119.0 520,119.0 521,119.0 522,117.9 523,119.0 524,119.0 525,119.0 526,119.0 527,119.0 528,119.0 529,119.0 530,119.0 531,119.0 532,119.0 533,119.0 534,119.0 535,119.0 536,119.0 537,119.0 538,118.0 539,119.0 540,119.0 541,119.0 542,118.6 543,118.8 544,119.0 545,119.0 546,119.0 547,119.0 548,118.7 549,119.0 550,119.0 551,119.0 552,119.0 553,118.2 554,119.0 555,119.0 556,119.0 557,119.0 558,118.1 559,119.0 560,119.0 561,119.0 562,119.0 563,119.0 564,119.0 565,119.0 566,119.0 567,119.0 568,119.0 569,119.0 570,119.0 571,119.0 572,119.0 573,119.0 574,118.3 575,119.0 576,119.0 577,119.0 578,119.0 579,119.0 580,119.0 581,119.0 582,119.0 583,119.0 584,117.8 585,119.0 586,119.0 587,119.0 588,119.0 589,118.4 590,119.0 591,119.0 592,119.0 593,119.0 594,119.0 595,119.0 596,119.0 597,119.0 598,119.0 599,119.0 600,118.3 601,119.0 602,119.0 603,119.0 604,119.0 605,118.0 606,119.0 607,119.0 608,119.0 609,119.0 610,119.0 611,118.6 612,119.0 613,119.0 614,119.0 615,119.0 616,118.7 617,119.0 618,119.0 619,119.0 620,119.0 621,119.0 622,118.6 623,119.0 624,119.0 625,119.0 626,118.2 627,118.9 628,119.0 629,119.0 630,119.0 631,118.5 632,118.9 633,119.0 634,119.0 635,119.0 636,119.0 637,118.6 638,119.0 639,119.0 640,119.0 641,118.9 642,118.9 643,118.7 644,119.0 645,119.0 646,119.0 647,117.1 648,119.0 649,119.0 650,119.0 651,118.9 652,119.0 653,118.7 654,118.7 655,119.0 656,119.0 657,118.6 658,117.8 659,117.8 660,118.4 661,118.7 662,118.1 663,117.4 664,117.9 665,118.1 666,117.7 667,117.7 668,118.5 669,117.5 670,118.4 671,118.6 672,118.3 673,117.8 674,118.1 675,118.7 676,118.6 677,119.0 678,118.6 679,118.5 680,117.9 681,117.9 682,118.7 683,118.9 684,119.0 685,118.8 686,118.5 687,118.3 688,118.1 689,117.2 690,118.0 691,118.8 692,118.7 693,118.7 694,117.2 695,117.7 696,118.2 697,118.1 698,119.0 699,118.6 700,117.7 701,117.8 702,117.4 703,118.2 704,118.6 705,118.2 706,117.9 707,118.6 708,118.3 709,117.7 710,118.1 711,118.5 712,118.0 713,118.4 714,117.8 715,118.0 716,117.2 717,118.0 718,118.2 719,117.4 720,117.7 721,118.6 722,118.7 723,118.2 724,118.2 725,118.2 726,118.9 727,119.0 728,118.2 729,117.9 730,117.9 731,117.8 732,118.0 733,116.8 734,119.0 735,119.0 736,118.7 737,118.0 738,117.7 739,118.3 740,118.6 741,118.8 742,118.0 743,118.5 744,118.1 745,117.7 746,118.1 747,118.6 748,118.9 749,119.0 750,118.3 751,118.1 752,117.8 753,118.1 754,118.7 755,118.4 756,118.5 757,117.5 758,118.6 759,118.2 760,118.1 761,118.4 762,118.9 763,119.0 764,119.0 765,117.8 766,117.9 767,118.0 768,118.2 769,118.3 770,118.9 771,118.4 772,118.7 773,118.3 774,117.7 775,118.3 776,118.4 777,117.7 778,118.3 779,118.8 780,118.4 781,117.6 782,118.2 783,118.7 784,119.0 785,119.0 786,118.9 787,118.5 788,118.1 789,118.6 790,118.9 791,119.0 792,119.0 793,118.5 794,118.7 795,118.1 796,118.3 797,118.6 798,118.5 799,119.0 800,119.0 801,118.7 802,118.3 803,118.2 804,118.8 805,117.7 806,119.0 807,119.0 808,119.0 809,118.7 810,118.6 811,118.8 812,119.0 813,119.0 814,119.0 815,119.0 816,118.8 817,118.6 818,119.0 819,119.0 820,119.0 821,119.0 822,119.0 823,119.0 824,119.0 825,119.0 826,119.0 827,119.0 828,119.0 829,119.0 830,119.0 831,119.0 832,119.0 833,119.0 834,119.0 835,119.0 836,119.0 837,119.0 838,119.0 839,119.0 840,119.0 841,119.0 842,119.0 843,119.0 844,119.0 845,119.0 846,119.0 847,119.0 848,119.0 849,119.0 850,119.0 851,119.0 852,118.0 853,117.0 854,116.6 855,117.0 856,116.6 857,115.6 858,116.1 859,116.1 860,116.0 861,116.5 862,116.9 863,116.6 864,115.7 865,116.0 866,115.9 867,116.7 868,116.1 869,116.0 870,116.4 871,116.8 872,115.7 873,116.5 874,116.6 875,117.0 876,116.8 877,116.1 878,116.6 879,116.4 880,116.3 881,116.1 882,116.2 883,116.3 884,115.4 885,115.8 886,115.1 887,115.5 888,116.9 889,116.2 890,116.8 891,116.7 892,115.6 893,116.1 894,116.9 895,116.0 896,116.1 897,116.9 898,116.5 899,116.3 900,115.6 901,115.4 902,116.0 903,117.0 904,116.4 905,116.5 906,116.6 907,116.5 908,117.0 909,117.1 910,117.2 911,116.8 912,117.1 913,115.8 914,115.4 915,116.7 916,115.8 917,116.3 918,116.6 919,115.7 920,115.2 921,115.7 922,116.5 923,116.8 924,116.7 925,116.4 926,116.8 927,115.8 928,115.6 929,116.4 930,116.3 931,116.7 932,115.7 933,116.4 934,115.5 935,115.8 936,115.7 937,116.7 938,116.6 939,116.4 940,115.9 941,116.6 942,116.8 943,116.5 944,116.8 945,117.2 946,117.2 947,116.0 948,116.1 949,115.7 950,116.5 951,116.4 952,115.9 953,116.6 954,116.7 955,115.3 956,116.3 957,116.9 958,116.8 959,116.5 960,117.0 961,116.3 962,116.0 963,116.5 964,115.9 965,116.4 966,116.4 967,116.1 968,115.4 969,115.7 970,115.1 971,115.9 972,116.5 973,116.5 974,116.6 975,116.2 976,115.9 977,116.5 978,116.4 979,116.6 980,117.1 981,116.4 982,116.4 983,116.6 984,116.2 985,116.1 986,116.9 987,117.1 988,116.1 989,116.0 990,116.8 991,116.0 992,116.3 993,116.8 994,116.7 995,116.2 996,116.7 997,116.1 998,115.9 999,116.2 1000,116.3 1000,123.0 999,122.8 998,123.3 997,123.2 996,122.3 995,122.8 994,122.1 993,122.4 992,122.1 991,122.6 990,122.2 989,122.2 988,122.2 987,121.9 986,122.5 985,123.5 984,122.4 983,122.5 982,122.7 981,122.2 980,122.0 979,122.3 978,121.8 977,123.0 976,122.2 975,122.5 974,122.2 973,122.9 972,122.6 971,122.9 970,123.0 969,123.4 968,123.8 967,122.8 966,123.0 965,123.2 964,123.2 963,122.5 962,122.8 961,123.2 960,121.8 959,122.8 958,122.7 957,122.2 956,123.6 955,123.2 954,122.5 953,122.9 952,122.5 951,122.7 950,123.4 949,123.6 948,123.1 947,123.1 946,122.7 945,122.0 944,121.8 943,122.5 942,122.2 941,122.9 940,122.7 939,122.5 938,122.6 937,123.2 936,122.7 935,122.8 934,123.7 933,122.5 932,122.4 931,123.2 930,122.8 929,123.1 928,122.8 927,122.2 926,122.3 925,122.9 924,122.2 923,122.6 922,122.3 921,123.4 920,122.9 919,122.9 918,122.2 917,123.2 916,122.5 915,122.4 914,122.7 913,123.4 912,122.2 911,122.7 910,122.3 909,121.6 908,122.2 907,122.5 906,122.8 905,122.1 904,122.9 903,121.8 902,122.9 901,123.3 900,123.4 899,122.6 898,123.3 897,122.5 896,122.2 895,123.0 894,122.4 893,123.4 892,122.3 891,122.1 890,122.2 889,122.5 888,122.1 887,123.2 886,122.8 885,122.9 884,122.6 883,123.1 882,122.3 881,123.0 880,122.8 879,123.0 878,122.6 877,122.6 876,122.2 875,121.9 874,121.9 873,122.8 872,122.8 871,122.8 870,122.7 869,122.3 868,122.4 867,122.6 866,122.6 865,123.4 864,122.9 863,122.6 862,122.9 861,121.9 860,122.7 859,122.6 858,123.0 857,123.1 856,122.6 855,122.4 854,122.4 853,122.2 852,120.6 851,120.0 850,120.0 849,120.0 848,120.0 847,120.0 846,120.0 845,120.0 844,120.0 843,120.0 842,120.0 841,120.0 840,120.0 839,120.0 838,120.0 837,120.0 836,120.0 835,120.0 834,120.0 833,120.0 832,120.0 831,120.0 830,120.0 829,120.0 828,120.0 827,120.0 826,120.0 825,120.0 824,120.0 823,120.0 822,120.0 821,120.0 820,120.0 819,120.0 818,120.1 817,120.5 816,120.1 815,120.0 814,120.0 813,120.0 812,120.0 811,120.1 810,120.5 809,120.5 808,120.1 807,120.0 806,120.0 805,121.5 804,120.2 803,120.7 802,120.7 801,120.1 800,120.0 799,120.0 798,120.8 797,120.2 796,120.6 795,120.9 794,120.3 793,120.5 792,120.0 791,120.0 790,120.0 789,120.7 788,121.0 787,120.6 786,120.0 785,120.0 784,120.0 783,120.2 782,121.1 781,121.4 780,120.6 779,120.3 778,120.6 777,121.5 776,120.6 775,120.4 774,121.2 773,120.9 772,120.3 771,120.9 770,120.0 769,120.5 768,120.8 767,121.1 766,121.0 765,121.4 764,120.1 763,120.0 762,120.0 761,120.5 760,120.8 759,121.1 758,120.7 757,121.5 756,120.3 755,120.8 754,120.5 753,120.7 752,121.6 751,120.7 750,120.7 749,120.0 748,120.1 747,120.5 746,121.4 745,121.8 744,121.1 743,120.2 742,120.9 741,120.2 740,120.4 739,120.9 738,121.3 737,120.8 736,120.2 735,120.1 734,120.0 733,122.5 732,120.9 731,121.6 730,121.4 729,120.8 728,120.6 727,120.0 726,120.1 725,120.5 724,121.2 723,120.8 722,120.6 721,120.4 720,121.1 719,121.9 718,121.0 717,121.0 716,121.7 715,120.8 714,121.5 713,120.6 712,121.1 711,120.7 710,121.1 709,121.5 708,120.6 707,120.5 706,121.2 705,120.7 704,120.5 703,121.0 702,121.7 701,121.2 700,121.5 699,120.4 698,120.1 697,120.9 696,120.7 695,121.3 694,121.7 693,120.6 692,120.2 691,120.1 690,120.8 689,121.5 688,120.9 687,121.0 686,120.6 685,120.2 684,120.0 683,120.2 682,120.4 681,121.1 680,121.2 679,120.5 678,120.2 677,120.0 676,120.6 675,120.3 674,120.7 673,121.3 672,120.8 671,120.2 670,120.4 669,121.2 668,120.5 667,121.2 666,121.7 665,121.0 664,121.3 663,121.1 662,121.0 661,120.2 660,120.6 659,121.3 658,121.0 657,120.2 656,120.1 655,120.0 654,120.5 653,120.3 652,120.1 651,120.1 650,120.0 649,120.0 648,120.0 647,122.4 646,120.0 645,120.0 644,120.0 643,120.4 642,120.0 641,120.0 640,120.0 639,120.0 638,120.0 637,120.3 636,120.0 635,120.0 634,120.0 633,120.1 632,120.0 631,120.4 630,120.0 629,120.1 628,120.0 627,120.0 626,120.8 625,120.0 624,120.0 623,120.0 622,120.3 621,120.0 620,120.0 619,120.0 618,120.0 617,120.0 616,120.2 615,120.0 614,120.0 613,120.0 612,120.0 611,120.6 610,120.0 609,120.0 608,120.0 607,120.0 606,120.0 605,120.9 604,120.0 603,120.0 602,120.0 601,120.0 600,120.9 599,120.0 598,120.0 597,120.0 596,120.0 595,120.0 594,120.0 593,120.0 592,120.0 591,120.0 590,120.0 589,120.7 588,120.0 587,120.0 586,120.0 585,120.0 584,121.0 583,120.0 582,120.0 581,120.0 580,120.0 579,120.0 578,120.0 577,120.0 576,120.0 575,120.0 574,120.6 573,120.0 572,120.0 571,120.0 570,120.0 569,120.0 568,120.0 567,120.0 566,120.0 565,120.0 564,120.0 563,120.0 562,120.0 561,120.0 560,120.0 559,120.0 558,120.6 557,120.0 556,120.0 555,120.0 554,120.0 553,120.7 552,120.0 551,120.0 550,120.0 549,120.1 548,120.2 547,120.0 546,120.0 545,120.0 544,120.0 543,120.1 542,120.2 541,120.0 540,120.0 539,120.0 538,121.1 537,120.0 536,120.0 535,120.0 534,120.0 533,120.0 532,120.0 531,120.0 530,120.0 529,120.0 528,120.0 527,120.0 526,120.0 525,120.0 524,120.0 523,120.0 522,120.7 521,120.0 520,120.0 519,120.0 518,120.0 517,120.0 516,120.0 515,120.0 514,120.0 513,120.0 512,120.0 511,120.0 510,120.0 509,120.2 508,120.2 507,120.1 506,120.2 505,120.2 504,120.3 503,120.3 502,120.3 501,120.4 500,120.5 499,120.5 498,120.7 497,120.8 496,121.2 495,121.0 494,121.3 493,121.2 492,121.4 491,121.1 490,121.5 489,121.7 488,121.9 487,121.4 486,121.7 485,121.2 484,121.2 483,121.7 482,121.7 481,121.8 480,121.5 479,121.6 478,121.3 477,121.2 476,121.4 475,121.9 474,121.8 473,121.4 472,121.4 471,121.3 470,121.0 469,121.2 468,121.6 467,121.1 466,121.3 465,121.2 464,121.0 463,121.3 462,121.3 461,121.8 460,121.7 459,121.7 458,121.2 457,121.4 456,121.6 455,121.6 454,121.9 453,121.5 452,121.7 451,121.6 450,121.1 449,121.7 448,121.7 447,121.8 446,121.9 445,122.0 444,122.2 443,121.4 442,121.3 441,122.3 440,122.7 439,122.8 438,122.3 437,122.7 436,121.7 435,122.1 434,122.1 433,122.0 432,122.8 431,122.4 430,122.3 429,121.9 428,122.1 427,122.6 426,123.2 425,123.2 424,122.3 423,122.3 422,122.2 421,122.0 420,122.8 419,122.6 418,122.0 417,122.5 416,122.2 415,122.3 414,122.5 413,122.9 412,122.6 411,123.6 410,123.0 409,123.2 408,122.7 407,122.6 406,122.4 405,123.1 404,123.3 403,122.3 402,122.5 401,122.4 400,121.7 399,122.0 398,122.3 397,122.5 396,122.6 395,122.5 394,121.9 393,122.2 392,122.3 391,122.6 390,122.5 389,122.5 388,122.1 387,121.9 386,121.6 385,122.2 384,122.4 383,122.5 382,122.4 381,121.9 380,122.3 379,122.2 378,122.4 377,122.7 376,123.2 375,122.7 374,122.9 373,122.1 372,122.6 371,122.8 370,122.2 369,122.5 368,122.8 367,121.9 366,122.5 365,122.3 364,122.2 363,122.1 362,122.4 361,122.1 360,122.6 359,121.7 358,121.9 357,122.5 356,122.9 355,122.3 354,122.2 353,122.5 352,121.7 351,122.1 350,122.1 349,121.9 348,122.9 347,122.5 346,121.8 345,122.4 344,122.5 343,122.8 342,122.5 341,123.0 340,123.0 339,123.4 338,122.1 337,122.4 336,123.2 335,122.5 334,123.0 333,122.7 332,121.7 331,122.4 330,122.1 329,122.0 328,122.9 327,123.3 326,122.5 325,122.5 324,122.4 323,122.5 322,122.3 321,123.1 320,122.3 319,122.6 318,122.0 317,121.9 316,121.9 315,122.5 314,122.4 313,122.3 312,122.8 311,122.5 310,122.6 309,122.0 308,122.2 307,122.4 306,123.3 305,122.7 304,122.6 303,123.1 302,122.7 301,122.6 300,123.2 299,122.9 298,122.5 297,122.5 296,122.4 295,122.2 294,122.2 293,123.2 292,122.8 291,122.9 290,122.5 289,122.4 288,122.7 287,122.3 286,122.4 285,122.3 284,122.0 283,122.3 282,121.8 281,121.5 280,121.7 279,122.2 278,122.1 277,122.1 276,122.1 275,121.9 274,122.3 273,123.1 272,122.4 271,123.3 270,122.8 269,122.0 268,123.0 267,123.1 266,122.4 265,122.4 264,122.6 263,122.3 262,122.9 261,122.1 260,122.1 259,122.5 258,123.5 257,122.7 256,123.7 255,122.9 254,122.3 253,123.0 252,123.2 251,123.2 250,122.8 249,122.5 248,122.3 247,121.7 246,122.2 245,121.7 244,122.1 243,121.3 242,121.1 241,121.7 240,122.4 239,122.9 238,123.0 237,123.2 236,123.3 235,123.0 234,122.9 233,121.8 232,122.6 231,123.3 230,123.0 229,123.3 228,122.3 227,122.2 226,122.4 225,122.6 224,122.7 223,123.3 222,123.4 221,122.8 220,122.7 219,122.8 218,122.2 217,122.9 216,122.9 215,122.9 214,122.8 213,122.3 212,122.3 211,122.1 210,122.4 209,122.9 208,122.5 207,123.0 206,122.4 205,122.3 204,122.7 203,122.6 202,123.6 201,122.6 200,123.0 199,122.2 198,121.9 197,121.8 196,122.7 195,122.4 194,122.8 193,122.4 192,123.0 191,122.9 190,123.3 189,123.3 188,123.6 187,123.3 186,123.1 185,122.4 184,122.3 183,122.2 182,122.9 181,123.2 180,123.0 179,121.9 178,121.9 177,122.2 176,122.2 175,123.1 174,123.0 173,122.7 172,122.9 171,123.0 170,122.5 169,122.7 168,122.5 167,122.7 166,122.0 165,121.6 164,121.4 163,121.2 162,121.2 161,120.5 160,120.0 159,120.0 158,120.0 157,120.0 156,120.0 155,120.0 154,120.0 153,120.0 152,120.0 151,120.0 150,120.5 149,120.9 148,121.6 147,122.1 146,122.0 145,121.8 144,122.3 143,121.5 142,122.0 141,122.0 140,121.6 139,122.1 138,121.8 137,121.8 136,121.6 135,122.1 134,121.6 133,121.6 132,121.7 131,121.7 130,121.8 129,121.5 128,121.4 127,121.4 126,121.3 125,121.4 124,121.8 123,121.6 122,121.6 121,121.4 120,122.1 119,121.6 118,122.3 117,122.2 116,121.4 115,121.8 114,121.3 113,121.3 112,121.7 111,121.3 110,121.4 109,121.6 108,121.0 107,121.2 106,121.1 105,121.3 104,121.0 103,121.7 102,121.3 101,121.1 100,121.3 99,121.2 98,121.1 97,121.4 96,121.1 95,120.7 94,120.7 93,120.8 92,120.7 91,120.9 90,121.0 89,121.3 88,121.1 87,121.1 86,121.0 85,121.4 84,121.2 83,121.6 82,121.2 81,121.1 80,121.1 79,120.8 78,120.8 77,121.1 76,121.0 75,121.0 74,120.8 73,120.8 72,120.8 71,121.0 70,121.2 69,121.3 68,121.1 67,120.9 66,120.9 65,120.6 64,120.2 63,120.0 62,120.0 61,120.0 60,120.0 59,120.0 58,120.0 57,120.0 56,120.0 55,120.0 54,120.0 53,120.0 52,120.0 51,120.0 50,120.0 49,120.0 48,120.0 47,120.0 46,120.0 45,120.0 44,120.0 43,120.0 42,120.0 41,120.0 40,120.0 39,120.0 38,120.0 37,120.0 36,120.0 35,120.0 34,120.0 33,120.0 32,120.0 31,120.0 30,120.0 29,120.0 28,120.0 27,120.0 26,120.0 25,120.0 24,120.0 23,120.0 22,120.0 21,120.0 20,120.0 19,120.0 18,120.0 17,120.0 16,120.0 15,120.0 14,120.0 13,120.0 12,120.0 11,120.0 10,120.0 9,120.0 8,120.0 7,120.0 6,120.0 5,120.0 4,120.0 3,120.0 2,120.0 1,120.0 0,120.0Z" fill="#303030"/>
<path d="M0,139.0 1,139.0 2,139.0 3,139.0 4,139.0 5,139.0 6,139.0 7,139.0 8,139.0 9,139.0 10,139.0 11,139.0 12,139.0 13,139.0 14,139.0 15,139.0 16,139.0 17,139.0 18,139.0 19,139.0 20,139.0 21,139.0 22,139.0 23,139.0 24,139.0 25,139.0 26,139.0 27,139.0 28,139.0 29,139.0 30,139.0 31,139.0 32,139.0 33,139.0 34,139.0 35,139.0 36,139.0 37,139.0 38,139.0 39,139.0 40,139.0 41,138.4 42,136.8 43,137.2 44,137.6 45,136.8 46,137.7 47,137.7 48,137.0 49,137.8 50,137.5 51,137.1 52,137.3 53,137.5 54,137.1 55,137.8 56,138.0 57,138.6 58,139.0 59,139.0 60,138.9 61,139.0 62,139.0 63,139.0 64,139.0 65,139.0 66,138.9 67,139.0 68,139.0 69,137.8 70,137.1 71,137.1 72,136.5 73,137.3 74,136.7 75,136.4 76,137.1 77,137.2 78,137.0 79,137.3 80,137.6 81,136.9 82,137.2 83,137.8 84,137.5 85,137.8 86,137.1 87,137.1 88,137.4 89,137.9 90,137.9 91,138.6 92,138.7 93,138.6 94,138.6 95,138.5 96,138.5 97,138.8 98,138.8 99,138.6 100,138.4 101,138.1 102,137.7 103,137.6 104,137.6 105,137.8 106,137.6 107,137.2 108,137.6 109,137.4 110,137.0 111,137.5 112,137.6 113,137.5 114,137.6 115,137.4 116,137.7 117,137.4 118,137.6 119,137.6 120,137.3 121,137.3 122,137.4 123,136.9 124,137.0 125,137.8 126,137.3 127,137.6 128,137.9 129,137.3 130,137.8 131,137.6 132,137.7 133,138.0 134,137.7 135,137.0 136,137.0 137,136.8 138,137.1 139,137.3 140,137.2 141,137.4 142,137.1 143,136.4 144,136.9 145,137.3 146,137.2 147,137.0 148,137.8 149,138.1 150,138.3 151,139.0 152,139.0 153,139.0 154,139.0 155,139.0 156,139.0 157,139.0 158,139.0 159,139.0 160,139.0 161,138.5 162,138.0 163,137.4 164,137.1 165,137.0 166,136.6 167,136.8 168,137.1 169,136.5 170,136.2 171,136.6 172,136.3 173,136.6 174,136.6 175,137.0 176,136.8 177,135.6 178,136.4 179,136.1 180,136.0 181,136.4 182,136.1 183,136.5 184,136.7 185,135.8 186,136.0 187,135.9 188,136.4 189,135.9 190,136.3 191,135.5 192,136.3 193,136.5 194,135.9 195,135.9 196,136.9 197,136.9 198,136.5 199,136.6 200,136.7 201,136.0 202,137.0 203,137.1 204,136.8 205,136.2 206,135.7 207,136.3 208,136.1 209,135.9 210,136.4 211,136.8 212,136.5 213,135.6 214,135.9 215,136.3 216,136.2 217,136.8 218,136.6 219,136.3 220,136.6 221,136.0 222,136.2 223,136.7 224,136.1 225,135.8 226,136.4 227,135.9 228,135.3 229,136.1 230,136.5 231,136.5 232,137.1 233,136.4 234,136.3 235,136.5 236,136.5 237,137.0 238,136.8 239,136.3 240,136.6 241,136.9 242,137.7 243,137.1 244,137.3 245,136.7 246,136.5 247,136.6 248,136.3 249,136.1 250,136.1 251,136.1 252,136.2 253,136.4 254,136.4 255,136.2 256,135.6 257,135.1 258,136.7 259,136.5 260,136.2 261,136.5 262,135.5 263,135.4 264,136.3 265,137.0 266,136.4 267,137.0 268,137.1 269,135.8 270,136.1 271,137.1 272,136.8 273,136.9 274,136.3 275,136.6 276,135.7 277,136.6 278,136.2 279,136.7 280,137.3 281,136.3 282,136.8 283,136.8 284,136.6 285,136.4 286,136.9 287,136.6 288,136.3 289,136.7 290,136.3 291,135.8 292,136.0 293,136.5 294,136.0 295,136.3 296,136.3 297,135.5 298,135.9 299,136.3 300,136.9 301,137.0 302,136.3 303,136.8 304,136.6 305,136.2 306,136.7 307,137.0 308,136.3 309,136.3 310,136.6 311,135.8 312,136.3 313,137.2 314,136.6 315,136.8 316,136.9 317,136.7 318,137.1 319,137.0 320,137.0 321,137.2 322,136.9 323,136.1 324,136.8 325,136.5 326,135.3 327,135.6 328,136.5 329,136.9 330,136.7 331,136.7 332,136.1 333,136.2 334,137.1 335,136.7 336,137.1 337,136.5 338,136.4 339,135.8 340,135.7 341,136.3 342,136.2 343,136.9 344,136.5 345,136.6 346,136.5 347,136.1 348,136.8 349,137.3 350,136.6 351,137.2 352,136.6 353,136.6 354,137.0 355,136.7 356,136.1 357,136.5 358,136.1 359,136.4 360,136.5 361,136.2 362,135.3 363,136.3 364,137.0 365,136.3 366,136.2 367,136.0 368,136.2 369,136.2 370,136.5 371,136.8 372,136.4 373,136.0 374,135.6 375,136.5 376,136.2 377,135.7 378,136.7 379,136.7 380,136.0 381,136.1 382,135.9 383,136.5 384,136.6 385,137.1 386,137.2 387,136.6 388,136.9 389,136.5 390,136.4 391,137.2 392,136.5 393,136.9 394,136.6 395,135.4 396,135.9 397,136.3 398,136.0 399,136.7 400,136.5 401,136.1 402,136.2 403,136.2 404,135.8 405,136.7 406,136.9 407,136.4 408,136.4 409,136.0 410,136.3 411,135.5 412,136.4 413,136.6 414,136.4 415,136.5 416,136.2 417,136.4 418,136.5 419,136.9 420,137.4 421,136.8 422,136.6 423,136.8 424,135.9 425,136.8 426,136.9 427,136.2 428,136.6 429,136.4 430,135.5 431,135.6 432,136.1 433,136.7 434,136.2 435,137.0 436,136.1 437,135.6 438,136.0 439,135.9 440,136.8 441,136.8 442,137.4 443,137.4 444,137.1 445,137.1 446,137.3 447,137.7 448,138.0 449,137.9 450,137.5 451,137.7 452,137.3 453,137.9 454,137.9 455,138.0 456,138.0 457,137.8 458,137.6 459,137.8 460,137.8 461,137.7 462,138.0 463,137.6 464,137.2 465,137.6 466,137.7 467,137.9 468,138.2 469,138.1 470,137.7 471,138.1 472,137.9 473,137.7 474,138.1 475,137.7 476,137.3 477,137.6 478,137.5 479,137.5 480,137.2 481,137.2 482,137.6 483,137.6 484,137.9 485,137.4 486,137.5 487,137.6 488,137.6 489,137.9 490,138.1 491,138.1 492,138.0 493,137.8 494,137.8 495,138.3 496,138.1 497,138.4 498,138.2 499,138.3 500,138.2 501,138.4 502,138.7 503,138.7 504,138.9 505,138.9 506,138.7 507,138.7 508,138.8 509,139.0 510,139.0 511,139.0 512,138.9 513,139.0 514,139.0 515,138.9 516,139.0 517,139.0 518,139.0 519,139.0 520,139.0 521,139.0 522,138.3 523,139.0 524,139.0 525,139.0 526,139.0 527,139.0 528,139.0 529,139.0 530,139.0 531,139.0 532,139.0 533,138.9 534,139.0 535,139.0 536,139.0 537,139.0 538,138.1 539,139.0 540,139.0 541,139.0 542,138.6 543,139.0 544,139.0 545,139.0 546,139.0 547,139.0 548,138.6 549,139.0 550,139.0 551,139.0 552,139.0 553,138.2 554,139.0 555,139.0 556,139.0 557,139.0 558,138.3 559,139.0 560,139.0 561,139.0 562,139.0 563,139.0 564,139.0 565,139.0 566,139.0 567,139.0 568,139.0 569,139.0 570,139.0 571,139.0 572,139.0 573,139.0 574,138.3 575,139.0 576,139.0 577,139.0 578,139.0 579,139.0 580,139.0 581,139.0 582,139.0 583,139.0 584,137.9 585,139.0 586,139.0 587,139.0 588,139.0 589,138.3 590,139.0 591,139.0 592,139.0 593,139.0 594,139.0 595,139.0 596,139.0 597,139.0 598,139.0 599,139.0 600,138.1 601,139.0 602,139.0 603,139.0 604,139.0 605,138.1 606,139.0 607,139.0 608,139.0 609,139.0 610,139.0 611,138.5 612,139.0 613,139.0 614,139.0 615,139.0 616,138.6 617,139.0 618,139.0 619,139.0 620,139.0 621,139.0 622,138.8 623,139.0 624,139.0 625,139.0 626,138.5 627,139.0 628,139.0 629,139.0 630,139.0 631,138.6 632,138.9 633,139.0 634,138.9 635,139.0 636,139.0 637,138.7 638,139.0 639,139.0 640,139.0 641,139.0 642,139.0 643,138.6 644,139.0 645,139.0 646,139.0 647,136.8 648,139.0 649,139.0 650,139.0 651,139.0 652,138.7 653,138.5 654,138.7 655,139.0 656,139.0 657,138.6 658,138.1 659,137.2 660,138.4 661,138.8 662,138.1 663,137.9 664,137.7 665,138.2 666,137.5 667,137.9 668,138.5 669,137.9 670,138.6 671,138.9 672,138.4 673,137.6 674,138.4 675,138.8 676,138.5 677,139.0 678,138.8 679,138.5 680,137.9 681,138.2 682,138.4 683,138.9 684,139.0 685,138.7 686,138.3 687,137.8 688,138.0 689,137.7 690,137.8 691,138.9 692,138.9 693,138.5 694,137.3 695,137.8 696,138.3 697,137.7 698,139.0 699,138.6 700,137.7 701,137.9 702,136.8 703,137.7 704,138.6 705,138.0 706,138.0 707,138.7 708,138.1 709,137.7 710,138.0 711,138.7 712,137.9 713,138.6 714,137.9 715,138.2 716,137.3 717,137.9 718,138.1 719,137.4 720,138.0 721,138.6 722,138.4 723,137.6 724,137.6 725,138.5 726,139.0 727,139.0 728,138.3 729,138.2 730,137.4 731,137.8 732,138.4 733,137.0 734,139.0 735,138.9 736,138.4 737,137.8 738,137.5 739,137.9 740,138.7 741,138.9 742,137.9 743,138.8 744,138.4 745,137.7 746,138.0 747,138.7 748,139.0 749,139.0 750,138.4 751,137.9 752,137.5 753,138.1 754,138.7 755,138.3 756,138.5 757,137.6 758,138.4 759,138.1 760,138.1 761,138.6 762,139.0 763,139.0 764,138.9 765,138.0 766,138.0 767,137.6 768,138.2 769,138.3 770,138.9 771,138.4 772,138.7 773,138.3 774,137.8 775,138.3 776,138.3 777,137.4 778,138.4 779,138.6 780,138.5 781,137.8 782,138.6 783,138.9 784,139.0 785,139.0 786,138.9 787,138.3 788,138.1 789,138.4 790,138.8 791,139.0 792,139.0 793,138.7 794,138.7 795,138.5 796,138.5 797,138.9 798,138.6 799,139.0 800,139.0 801,138.8 802,138.2 803,138.5 804,138.9 805,137.4 806,139.0 807,139.0 808,138.9 809,138.8 810,138.5 811,138.9 812,139.0 813,139.0 814,139.0 815,139.0 816,138.9 817,138.6 818,139.0 819,139.0 820,139.0 821,139.0 822,139.0 823,139.0 824,139.0 825,139.0 826,139.0 827,139.0 828,139.0 829,139.0 830,139.0 831,139.0 832,139.0 833,139.0 834,139.0 835,139.0 836,139.0 837,139.0 838,139.0 839,139.0 840,139.0 841,139.0 842,139.0 843,139.0 844,139.0 845,139.0 846,139.0 847,139.0 848,139.0 849,139.0 850,139.0 851,139.0 852,138.1 853,137.1 854,135.9 855,135.7 856,136.4 857,136.6 858,136.7 859,136.6 860,137.2 861,136.8 862,136.4 863,136.7 864,136.8 865,136.7 866,137.3 867,136.2 868,135.8 869,136.1 870,136.5 871,136.3 872,136.1 873,136.4 874,136.5 875,136.3 876,136.1 877,136.4 878,136.7 879,136.7 880,136.3 881,136.4 882,136.0 883,135.4 884,135.7 885,136.3 886,135.6 887,136.5 888,136.7 889,136.5 890,135.8 891,136.2 892,135.9 893,136.6 894,136.8 895,136.9 896,136.9 897,136.1 898,136.2 899,136.0 900,136.7 901,136.8 902,136.7 903,136.2 904,136.4 905,135.8 906,136.0 907,136.8 908,137.0 909,137.0 910,136.9 911,137.0 912,136.8 913,136.2 914,137.2 915,137.1 916,135.9 917,135.9 918,135.5 919,135.7 920,136.5 921,135.9 922,135.6 923,136.3 924,135.6 925,136.2 926,136.4 927,136.6 928,136.8 929,136.5 930,136.3 931,136.2 932,136.1 933,136.4 934,135.9 935,136.1 936,136.7 937,135.9 938,136.3 939,136.5 940,135.7 941,136.9 942,136.7 943,136.4 944,137.3 945,136.5 946,136.4 947,136.7 948,136.1 949,136.9 950,136.8 951,136.0 952,135.5 953,136.0 954,135.2 955,135.8 956,135.9 957,135.7 958,136.5 959,136.3 960,135.3 961,136.3 962,136.3 963,136.7 964,136.1 965,136.3 966,136.7 967,136.5 968,136.0 969,136.3 970,136.4 971,137.1 972,136.7 973,136.0 974,136.4 975,136.2 976,136.0 977,136.9 978,136.6 979,136.4 980,137.0 981,136.4 982,136.1 983,136.4 984,136.8 985,136.9 986,136.9 987,135.4 988,135.3 989,136.1 990,135.3 991,136.0 992,136.2 993,135.8 994,135.9 995,136.5 996,136.1 997,136.0 998,136.3 999,136.2 1000,135.9 1000,142.1 999,142.7 998,142.2 997,143.0 996,142.8 995,143.0 994,142.5 993,142.7 992,142.1 991,143.2 990,142.8 989,142.8 988,143.8 987,143.3 986,142.0 985,142.5 984,142.9 983,141.9 982,142.8 981,142.2 980,142.1 979,142.3 978,142.6 977,141.9 976,142.6 975,143.1 974,142.7 973,142.7 972,142.2 971,142.5 970,142.9 969,142.4 968,142.6 967,143.6 966,143.2 965,141.8 964,142.6 963,142.5 962,142.3 961,142.8 960,143.1 959,142.8 958,142.9 957,142.8 956,142.7 955,143.8 954,143.6 953,142.9 952,142.9 951,142.5 950,142.0 949,142.9 948,142.3 947,142.7 946,142.6 945,142.3 944,141.9 943,142.6 942,142.7 941,142.8 940,143.5 939,142.7 938,142.6 937,142.9 936,143.0 935,142.3 934,142.6 933,142.4 932,142.9 931,142.9 930,142.7 929,142.0 928,142.6 927,142.4 926,143.3 925,143.1 924,142.7 923,142.9 922,143.3 921,143.4 920,142.6 919,143.4 918,142.5 917,142.1 916,142.5 915,142.0 914,141.8 913,142.7 912,142.1 911,142.8 910,142.8 909,141.8 908,142.1 907,143.1 906,142.7 905,142.3 904,143.1 903,142.2 902,141.9 901,143.0 900,142.9 899,142.6 898,142.7 897,142.5 896,142.2 895,142.7 894,141.9 893,142.7 892,143.3 891,143.3 890,143.2 889,142.7 888,142.5 887,142.8 886,143.6 885,142.8 884,143.3 883,142.9 882,143.0 881,141.8 880,142.4 879,142.8 878,142.3 877,142.6 876,142.9 875,141.9 874,142.7 873,142.2 872,142.8 871,143.6 870,142.5 869,142.4 868,142.5 867,142.5 866,142.5 865,143.0 864,142.9 863,142.4 862,143.0 861,142.1 860,141.8 859,141.9 858,143.0 857,142.5 856,143.2 855,142.9 854,142.5 853,141.7 852,140.6 851,140.0 850,140.0 849,140.0 848,140.0 847,140.0 846,140.0 845,140.0 844,140.0 843,140.0 842,140.0 841,140.0 840,140.0 839,140.0 838,140.0 837,140.0 836,140.0 835,140.0 834,140.0 833,140.0 832,140.0 831,140.0 830,140.0 829,140.0 828,140.0 827,140.0 826,140.0 825,140.0 824,140.0 823,140.0 822,140.0 821,140.0 820,140.0 819,140.0 818,140.0 817,140.3 816,140.1 815,140.0 814,140.0 813,140.0 812,140.0 811,140.1 810,140.5 809,140.3 808,140.0 807,140.0 806,140.0 805,141.4 804,140.1 803,140.5 802,140.8 801,140.2 800,140.0 799,140.0 798,140.8 797,140.2 796,140.5 795,140.7 794,140.2 793,140.3 792,140.0 791,140.0 790,140.2 789,140.6 788,140.6 787,140.4 786,140.1 785,140.0 784,140.0 783,140.1 782,140.7 781,141.1 780,140.6 779,140.3 778,140.5 777,141.3 776,140.5 775,140.4 774,141.2 773,140.9 772,140.4 771,140.7 770,140.0 769,140.8 768,141.0 767,141.0 766,141.2 765,141.2 764,140.2 763,140.0 762,140.0 761,140.4 760,140.9 759,141.0 758,140.7 757,141.2 756,140.5 755,140.6 754,140.2 753,140.8 752,141.5 751,140.8 750,140.9 749,140.0 748,140.0 747,140.2 746,140.7 745,141.3 744,141.0 743,140.4 742,141.2 741,140.0 740,140.2 739,140.8 738,141.7 737,141.0 736,140.8 735,140.0 734,140.0 733,142.6 732,140.8 731,141.3 730,141.4 729,141.0 728,140.5 727,140.0 726,140.1 725,140.3 724,140.9 723,141.4 722,140.7 721,140.2 720,140.9 719,141.4 718,140.6 717,140.9 716,141.9 715,140.9 714,141.2 713,140.5 712,141.2 711,140.2 710,141.0 709,141.7 708,140.9 707,140.6 706,141.3 705,140.9 704,140.4 703,141.4 702,141.8 701,141.3 700,141.5 699,140.3 698,140.1 697,141.2 696,140.8 695,141.4 694,141.6 693,140.6 692,140.0 691,140.1 690,141.1 689,141.2 688,141.0 687,141.4 686,140.4 685,140.2 684,140.0 683,140.1 682,140.4 681,141.2 680,141.4 679,140.7 678,140.0 677,140.0 676,140.4 675,140.4 674,140.6 673,141.3 672,140.7 671,140.1 670,140.6 669,141.3 668,140.6 667,141.3 666,141.6 665,141.0 664,141.3 663,141.6 662,141.0 661,140.3 660,140.9 659,141.6 658,140.9 657,140.2 656,140.0 655,140.0 654,140.5 653,140.5 652,140.3 651,140.1 650,140.0 649,140.0 648,140.0 647,141.8 646,140.0 645,140.0 644,140.0 643,140.3 642,140.0 641,140.0 640,140.0 639,140.0 638,140.0 637,140.3 636,140.0 635,140.0 634,140.0 633,140.0 632,140.1 631,140.5 630,140.0 629,140.0 628,140.0 627,140.0 626,140.6 625,140.0 624,140.0 623,140.0 622,140.3 621,140.0 620,140.0 619,140.0 618,140.0 617,140.0 616,140.3 615,140.0 614,140.0 613,140.0 612,140.0 611,140.5 610,140.0 609,140.0 608,140.0 607,140.0 606,140.0 605,140.9 604,140.0 603,140.0 602,140.0 601,140.0 600,140.9 599,140.0 598,140.0 597,140.0 596,140.0 595,140.0 594,140.0 593,140.0 592,140.0 591,140.0 590,140.0 589,140.4 588,140.0 587,140.0 586,140.0 585,140.0 584,141.1 583,140.0 582,140.0 581,140.0 580,140.0 579,140.1 578,140.0 577,140.0 576,140.0 575,140.0 574,140.8 573,140.0 572,140.0 571,140.0 570,140.0 569,140.0 568,140.0 567,140.0 566,140.0 565,140.0 564,140.0 563,140.0 562,140.0 561,140.0 560,140.0 559,140.0 558,140.6 557,140.0 556,140.0 555,140.0 554,140.0 553,141.0 552,140.0 551,140.0 550,140.0 549,140.0 548,140.4 547,140.0 546,140.0 545,140.0 544,140.0 543,140.2 542,140.4 541,140.0 540,140.0 539,140.0 538,141.0 537,140.0 536,140.0 535,140.0 534,140.0 533,140.1 532,140.0 531,140.0 530,140.0 529,140.0 528,140.0 527,140.0 526,140.0 525,140.0 524,140.0 523,140.0 522,141.2 521,140.0 520,140.0 519,140.0 518,140.0 517,140.0 516,140.0 515,140.0 514,140.1 513,140.1 512,140.1 511,140.0 510,140.0 509,140.1 508,140.2 507,140.1 506,140.2 505,140.3 504,140.3 503,140.3 502,140.4 501,140.6 500,140.8 499,140.5 498,140.6 497,140.6 496,140.8 495,141.1 494,141.2 493,141.4 492,141.3 491,141.2 490,140.9 489,141.0 488,141.0 487,141.3 486,141.0 485,141.5 484,141.0 483,141.5 482,141.1 481,141.2 480,141.8 479,141.4 478,141.6 477,141.3 476,141.4 475,141.1 474,141.0 473,141.1 472,141.1 471,141.4 470,141.5 469,140.9 468,141.0 467,141.4 466,141.1 465,141.1 464,141.8 463,141.1 462,141.4 461,141.2 460,141.4 459,141.1 458,141.2 457,141.1 456,141.0 455,141.2 454,140.8 453,140.9 452,141.4 451,141.3 450,141.4 449,141.4 448,141.5 447,141.3 446,141.9 445,141.8 444,141.4 443,141.8 442,141.4 441,141.9 440,142.5 439,142.3 438,143.0 437,143.0 436,142.2 435,142.2 434,142.9 433,142.0 432,142.5 431,143.2 430,142.6 429,142.4 428,142.9 427,142.3 426,142.4 425,142.1 424,142.5 423,143.1 422,142.3 421,142.3 420,141.6 419,141.9 418,142.1 417,142.1 416,143.5 415,142.9 414,142.7 413,142.9 412,142.3 411,142.9 410,143.4 409,142.8 408,143.1 407,142.7 406,142.9 405,142.7 404,142.6 403,143.0 402,142.8 401,143.1 400,142.9 399,141.9 398,143.0 397,142.4 396,142.5 395,142.9 394,142.4 393,142.6 392,142.7 391,142.5 390,142.1 389,142.8 388,142.5 387,142.7 386,141.9 385,142.2 384,142.0 383,142.9 382,142.1 381,142.6 380,142.5 379,142.9 378,142.4 377,143.1 376,143.0 375,142.9 374,143.3 373,142.3 372,142.8 371,142.5 370,141.9 369,142.4 368,142.6 367,143.0 366,143.3 365,142.6 364,142.8 363,142.5 362,142.8 361,143.3 360,142.5 359,143.0 358,142.0 357,142.5 356,142.5 355,142.7 354,142.5 353,142.4 352,142.5 351,141.9 350,142.3 349,142.3 348,141.9 347,142.8 346,142.2 345,142.6 344,142.2 343,142.4 342,142.3 341,143.1 340,142.8 339,143.3 338,143.1 337,142.5 336,141.7 335,142.3 334,142.6 333,142.3 332,143.0 331,142.9 330,142.5 329,143.1 328,142.7 327,143.3 326,143.0 325,143.0 324,142.7 323,143.0 322,142.1 321,142.1 320,142.4 319,142.6 318,142.3 317,142.5 316,142.3 315,142.2 314,142.6 313,142.2 312,142.4 311,143.2 310,142.2 309,142.8 308,142.8 307,142.4 306,142.7 305,142.9 304,142.5 303,142.6 302,142.6 301,141.7 300,142.1 299,142.4 298,142.4 297,142.4 296,143.2 295,142.1 294,142.3 293,143.3 292,143.4 291,143.0 290,143.5 289,143.1 288,142.1 287,142.1 286,142.1 285,142.1 284,142.1 283,142.4 282,142.0 281,141.8 280,141.7 279,142.5 278,142.9 277,142.9 276,142.3 275,142.7 274,142.0 273,142.2 272,142.9 271,142.5 270,142.5 269,143.3 268,141.8 267,142.6 266,142.2 265,142.0 264,143.1 263,142.9 262,143.4 261,143.4 260,142.6 259,142.3 258,143.1 257,143.2 256,143.6 255,142.7 254,143.1 253,142.5 252,142.5 251,142.5 250,142.3 249,142.7 248,143.4 247,142.8 246,142.8 245,141.9 244,142.0 243,141.9 242,141.3 241,141.8 240,142.2 239,142.2 238,142.6 237,142.1 236,142.4 235,142.0 234,143.0 233,142.4 232,142.4 231,142.1 230,142.9 229,142.8 228,143.4 227,143.5 226,142.8 225,142.8 224,143.2 223,142.5 222,143.1 221,143.3 220,142.8 219,142.3 218,142.0 217,141.9 216,142.2 215,143.3 214,142.2 213,143.0 212,142.5 211,142.9 210,142.9 209,142.5 208,142.6 207,143.7 206,143.0 205,143.0 204,142.7 203,142.0 202,142.2 201,142.5 200,143.0 199,141.9 198,142.7 197,142.3 196,142.0 195,142.8 194,142.9 193,142.8 192,143.0 191,143.1 190,142.9 189,142.9 188,143.1 187,142.5 186,143.4 185,143.6 184,142.3 183,142.3 182,142.0 181,142.2 180,142.8 179,143.0 178,143.0 177,143.0 176,143.0 175,142.8 174,143.4 173,143.0 172,143.0 171,143.3 170,142.2 169,142.4 168,142.5 167,142.4 166,141.8 165,142.0 164,142.6 163,142.0 162,141.0 161,140.3 160,140.0 159,140.0 158,140.0 157,140.0 156,140.0 155,140.0 154,140.0 153,140.0 152,140.0 151,140.0 150,140.7 149,141.1 148,141.5 147,141.4 146,142.2 145,141.8 144,142.4 143,141.9 142,142.0 141,142.3 140,141.5 139,142.0 138,142.3 137,141.9 136,141.7 135,142.0 134,141.1 133,141.3 132,141.8 131,141.1 130,141.3 129,141.9 128,141.1 127,141.0 126,141.7 125,141.2 124,141.7 123,141.7 122,141.9 121,141.6 120,141.4 119,141.1 118,141.3 117,141.6 116,141.8 115,141.7 114,141.3 113,141.5 112,140.9 111,141.3 110,141.6 109,141.5 108,141.7 107,141.7 106,141.2 105,141.2 104,141.4 103,141.0 102,140.9 101,141.1 100,140.7 99,140.6 98,140.3 97,140.3 96,140.7 95,140.3 94,140.2 93,140.4 92,140.3 91,140.6 90,141.1 89,141.7 88,141.6 87,141.9 86,141.6 85,141.6 84,141.3 83,141.5 82,141.9 81,141.7 80,142.0 79,141.2 78,141.5 77,141.8 76,141.7 75,142.5 74,142.2 73,142.0 72,142.4 71,141.7 70,142.1 69,140.9 68,140.0 67,140.1 66,140.0 65,140.0 64,140.0 63,140.0 62,140.0 61,140.0 60,140.0 59,140.0 58,140.0 57,140.6 56,140.9 55,141.3 54,142.1 53,142.0 52,141.3 51,141.7 50,141.2 49,141.3 48,141.5 47,141.4 46,141.7 45,142.0 44,141.7 43,141.5 42,142.2 41,140.9 40,140.0 39,140.0 38,140.0 37,140.0 36,140.0 35,140.0 34,140.0 33,140.0 32,140.0 31,140.0 30,140.0 29,140.0 28,140.0 27,140.0 26,140.0 25,140.0 24,140.0 23,140.0 22,140.0 21,140.0 20,140.0 19,140.0 18,140.0 17,140.0 16,140.0 15,140.0 14,140.0 13,140.0 12,140.0 11,140.0 10,140.0 9,140.0 8,140.0 7,140.0 6,140.0 5,140.0 4,140.0 3,140.0 2,140.0 1,140.0 0,140.0Z" fill="#303030"/>
</svg>
<div class="a" style="left:0;top:110px;width:65.5px;height:19.5px;background:#ebebeb"></div>
<div class="t" style="left:1.2px;top:112px;font-size:11.5px;color:#111">Merkteken 1</div>
<div class="a" style="left:-2px;top:109px;width:46px;height:41px;border:2px solid #3d84d8;background:transparent"></div>

<!-- DETAIL RULER -->
<div id="dr" class="a"></div>
<div class="tk" style="left:25.6px;top:150px;height:13px"></div>
<div class="tk" style="left:60.2px;top:160px;height:3px;background:#a4a4a4"></div>
<div class="tk" style="left:94.9px;top:160px;height:3px;background:#a4a4a4"></div>
<div class="tk" style="left:129.5px;top:160px;height:3px;background:#a4a4a4"></div>
<div class="tk" style="left:164.1px;top:160px;height:3px;background:#a4a4a4"></div>
<div class="tk" style="left:198.8px;top:150px;height:13px"></div>
<div class="tk" style="left:233.4px;top:160px;height:3px;background:#a4a4a4"></div>
<div class="tk" style="left:268.0px;top:160px;height:3px;background:#a4a4a4"></div>
<div class="tk" style="left:302.6px;top:160px;height:3px;background:#a4a4a4"></div>
<div class="tk" style="left:337.3px;top:160px;height:3px;background:#a4a4a4"></div>
<div class="tk" style="left:371.9px;top:150px;height:13px"></div>
<div class="tk" style="left:406.5px;top:160px;height:3px;background:#a4a4a4"></div>
<div class="tk" style="left:441.2px;top:160px;height:3px;background:#a4a4a4"></div>
<div class="tk" style="left:475.8px;top:160px;height:3px;background:#a4a4a4"></div>
<div class="tk" style="left:510.4px;top:160px;height:3px;background:#a4a4a4"></div>
<div class="tk" style="left:545.1px;top:150px;height:13px"></div>
<div class="tk" style="left:579.7px;top:160px;height:3px;background:#a4a4a4"></div>
<div class="tk" style="left:614.3px;top:160px;height:3px;background:#a4a4a4"></div>
<div class="tk" style="left:648.9px;top:160px;height:3px;background:#a4a4a4"></div>
<div class="tk" style="left:683.6px;top:160px;height:3px;background:#a4a4a4"></div>
<div class="tk" style="left:718.2px;top:150px;height:13px"></div>
<div class="tk" style="left:752.8px;top:160px;height:3px;background:#a4a4a4"></div>
<div class="tk" style="left:787.5px;top:160px;height:3px;background:#a4a4a4"></div>
<div class="tk" style="left:822.1px;top:160px;height:3px;background:#a4a4a4"></div>
<div class="tk" style="left:856.7px;top:160px;height:3px;background:#a4a4a4"></div>
<div class="tk" style="left:891.4px;top:150px;height:13px"></div>
<div class="tk" style="left:926.0px;top:160px;height:3px;background:#a4a4a4"></div>
<div class="tk" style="left:960.6px;top:160px;height:3px;background:#a4a4a4"></div>
<div class="tk" style="left:995.2px;top:160px;height:3px;background:#a4a4a4"></div>
<div class="rl" style="left:26.3px;top:150px;font-size:9.2px">0'00</div>
<div class="rl" style="left:199.4px;top:150px;font-size:9.2px">0'05</div>
<div class="rl" style="left:372.6px;top:150px;font-size:9.2px">0'10</div>
<div class="rl" style="left:545.8px;top:150px;font-size:9.2px">0'15</div>
<div class="rl" style="left:718.9px;top:150px;font-size:9.2px">0'20</div>
<div class="rl" style="left:892.1px;top:150px;font-size:9.2px">0'25</div>
<div id="drl" class="a"></div>

<!-- TRACKS -->
<div class="a" style="left:12px;top:164px;width:988px;height:67px;background:#efefef"></div>
<div class="a" style="left:12px;top:231px;width:988px;height:67px;background:#dcdcdc"></div>
<div class="a" style="left:12px;top:197px;width:988px;height:1px;background:#e4e4e4"></div>
<div class="a" style="left:12px;top:264px;width:988px;height:1px;background:#e6e6e6"></div>
<div class="a" style="left:12px;top:298px;width:988px;height:1px;background:#6e6e6e"></div>
<div class="a" style="left:12px;top:299px;width:988px;height:67px;background:#efefef"></div>
<div class="a" style="left:12px;top:299px;width:988px;height:1.5px;background:#f8f8f8"></div>
<div class="a" style="left:12px;top:366px;width:988px;height:67px;background:#dcdcdc"></div>
<div class="a" style="left:12px;top:332px;width:988px;height:1px;background:#e4e4e4"></div>
<div class="a" style="left:12px;top:399px;width:988px;height:1px;background:#e6e6e6"></div>
<svg class="a" style="left:0;top:0" width="1000" height="485">
<path d="M26,230.5 26.5,230.5 27,230.5 27.5,230.5 28,230.5 28.5,230.5 29,230.5 29.5,230.5 30,230.5 30.5,230.5 31,230.5 31.5,230.5 32,230.5 32.5,230.5 33,230.5 33.5,230.5 34,230.5 34.5,230.4 35,230.5 35.5,230.5 36,230.4 36.5,230.4 37,230.5 37.5,230.5 38,230.5 38.5,230.5 39,230.5 39.5,230.5 40,230.5 40.5,230.5 41,230.4 41.5,230.5 42,230.5 42.5,230.5 43,230.4 43.5,230.4 44,230.2 44.5,230.3 45,230.4 45.5,230.5 46,230.4 46.5,230.3 47,230.4 47.5,230.2 48,230.2 48.5,230.4 49,230.4 49.5,230.3 50,230.0 50.5,230.0 51,229.9 51.5,229.8 52,229.7 52.5,229.8 53,230.2 53.5,229.9 54,230.2 54.5,230.3 55,230.0 55.5,229.9 56,229.8 56.5,229.6 57,230.1 57.5,230.0 58,229.5 58.5,229.5 59,229.6 59.5,229.8 60,230.2 60.5,229.9 61,230.1 61.5,229.6 62,230.2 62.5,229.7 63,229.8 63.5,230.0 64,229.4 64.5,229.4 65,229.5 65.5,229.3 66,229.8 66.5,229.7 67,229.5 67.5,229.2 68,229.5 68.5,229.2 69,229.5 69.5,229.4 70,229.5 70.5,229.6 71,229.4 71.5,229.4 72,229.0 72.5,229.1 73,229.5 73.5,229.6 74,229.9 74.5,229.6 75,229.8 75.5,229.6 76,229.4 76.5,229.1 77,229.7 77.5,230.0 78,229.2 78.5,229.6 79,229.1 79.5,229.3 80,229.5 80.5,229.7 81,229.4 81.5,229.7 82,229.7 82.5,230.0 83,229.8 83.5,229.3 84,229.9 84.5,229.5 85,229.1 85.5,229.1 86,229.5 86.5,228.9 87,229.4 87.5,229.8 88,229.9 88.5,229.9 89,229.6 89.5,229.5 90,229.7 90.5,229.9 91,229.2 91.5,229.1 92,229.2 92.5,229.1 93,229.6 93.5,229.1 94,229.2 94.5,229.1 95,229.2 95.5,229.4 96,229.6 96.5,229.2 97,229.5 97.5,229.2 98,229.3 98.5,229.4 99,229.6 99.5,229.5 100,229.3 100.5,229.5 101,229.2 101.5,229.5 102,229.3 102.5,229.4 103,229.6 103.5,228.8 104,229.2 104.5,229.6 105,228.8 105.5,229.0 106,227.9 106.5,228.1 107,229.1 107.5,228.7 108,229.5 108.5,229.2 109,228.8 109.5,229.6 110,229.5 110.5,229.5 111,229.8 111.5,228.8 112,229.3 112.5,228.7 113,229.5 113.5,229.0 114,228.7 114.5,229.0 115,229.0 115.5,228.7 116,229.4 116.5,229.0 117,229.1 117.5,229.8 118,229.7 118.5,228.8 119,229.2 119.5,228.9 120,229.4 120.5,228.6 121,228.3 121.5,229.5 122,228.7 122.5,229.5 123,229.8 123.5,229.4 124,228.9 124.5,229.1 125,229.5 125.5,229.9 126,229.3 126.5,229.1 127,229.2 127.5,228.5 128,229.0 128.5,229.8 129,229.0 129.5,229.5 130,229.7 130.5,229.5 131,229.0 131.5,229.7 132,229.9 132.5,229.8 133,229.0 133.5,229.1 134,229.2 134.5,228.5 135,229.1 135.5,228.3 136,229.2 136.5,228.4 137,228.9 137.5,229.2 138,229.7 138.5,229.3 139,229.5 139.5,228.6 140,229.0 140.5,229.4 141,228.5 141.5,229.1 142,228.5 142.5,228.5 143,229.4 143.5,229.6 144,229.4 144.5,228.8 145,228.7 145.5,228.7 146,229.6 146.5,228.8 147,229.6 147.5,228.5 148,228.8 148.5,229.0 149,228.6 149.5,229.4 150,229.2 150.5,229.6 151,229.5 151.5,229.3 152,228.9 152.5,229.7 153,229.3 153.5,229.3 154,229.0 154.5,228.4 155,229.3 155.5,229.1 156,228.8 156.5,228.4 157,229.5 157.5,228.8 158,229.5 158.5,229.2 159,229.1 159.5,228.8 160,229.4 160.5,228.9 161,229.5 161.5,229.0 162,229.4 162.5,228.9 163,228.8 163.5,229.5 164,229.7 164.5,229.7 165,229.1 165.5,229.3 166,229.1 166.5,229.0 167,229.2 167.5,229.4 168,229.2 168.5,228.8 169,228.1 169.5,228.5 170,228.6 170.5,229.3 171,229.3 171.5,228.4 172,228.7 172.5,229.2 173,229.2 173.5,229.5 174,229.4 174.5,228.5 175,228.2 175.5,228.8 176,228.7 176.5,228.4 177,229.0 177.5,229.5 178,229.6 178.5,228.7 179,228.6 179.5,229.1 180,229.7 180.5,229.2 181,229.2 181.5,228.6 182,228.3 182.5,229.2 183,228.8 183.5,228.9 184,228.8 184.5,229.0 185,228.4 185.5,229.3 186,229.6 186.5,229.4 187,228.4 187.5,228.3 188,229.3 188.5,228.3 189,229.5 189.5,228.4 190,228.4 190.5,228.9 191,228.8 191.5,229.3 192,229.5 192.5,228.8 193,229.6 193.5,228.8 194,229.3 194.5,229.1 195,229.6 195.5,228.9 196,228.7 196.5,229.5 197,228.5 197.5,228.7 198,229.0 198.5,229.6 199,229.5 199.5,229.5 200,229.2 200.5,229.8 201,229.3 201.5,228.8 202,228.7 202.5,228.9 203,228.4 203.5,229.3 204,228.3 204.5,228.9 205,227.9 205.5,228.5 206,229.1 206.5,228.8 207,228.5 207.5,229.5 208,228.7 208.5,229.6 209,229.4 209.5,229.6 210,229.5 210.5,229.0 211,228.8 211.5,229.0 212,229.1 212.5,229.6 213,228.9 213.5,228.6 214,229.7 214.5,229.1 215,229.5 215.5,229.1 216,228.7 216.5,229.1 217,228.2 217.5,228.4 218,228.3 218.5,228.5 219,229.3 219.5,229.3 220,229.3 220.5,228.8 221,228.7 221.5,229.1 222,228.4 222.5,228.5 223,229.3 223.5,228.5 224,229.4 224.5,229.2 225,229.0 225.5,228.2 226,228.5 226.5,229.0 227,229.0 227.5,228.7 228,229.3 228.5,228.6 229,229.3 229.5,229.7 230,229.5 230.5,229.3 231,229.0 231.5,229.6 232,229.0 232.5,229.5 233,229.4 233.5,229.1 234,229.0 234.5,228.8 235,229.7 235.5,229.6 236,229.7 236.5,229.1 237,228.8 237.5,229.0 238,229.4 238.5,228.8 239,229.5 239.5,229.1 240,228.6 240.5,228.3 241,228.9 241.5,228.5 242,228.8 242.5,229.1 243,228.8 243.5,229.6 244,229.0 244.5,228.3 245,228.3 245.5,228.5 246,229.4 246.5,228.5 247,229.4 247.5,229.5 248,229.1 248.5,229.4 249,228.7 249.5,228.5 250,229.0 250.5,228.3 251,229.6 251.5,229.6 252,228.1 252.5,228.9 253,228.3 253.5,227.6 254,228.0 254.5,228.5 255,229.3 255.5,228.6 256,228.5 256.5,228.5 257,229.4 257.5,228.1 258,229.0 258.5,228.9 259,227.6 259.5,228.0 260,228.1 260.5,229.2 261,228.9 261.5,228.4 262,229.5 262.5,229.3 263,228.6 263.5,228.8 264,229.0 264.5,228.7 265,228.9 265.5,228.7 266,228.7 266.5,228.9 267,229.4 267.5,228.4 268,228.3 268.5,228.3 269,229.6 269.5,229.0 270,228.8 270.5,228.5 271,228.5 271.5,228.4 272,228.5 272.5,228.2 273,229.3 273.5,227.8 274,228.2 274.5,228.0 275,228.8 275.5,229.4 276,228.8 276.5,228.4 277,229.6 277.5,229.3 278,229.4 278.5,229.3 279,229.0 279.5,228.6 280,229.0 280.5,229.0 281,229.4 281.5,229.3 282,228.4 282.5,229.3 283,228.8 283.5,228.5 284,229.4 284.5,229.8 285,228.5 285.5,228.3 286,229.2 286.5,228.5 287,229.2 287.5,229.1 288,228.8 288.5,228.4 289,228.0 289.5,227.8 290,229.4 290.5,228.2 291,229.2 291.5,228.6 292,227.8 292.5,229.3 293,229.0 293.5,228.3 294,229.0 294.5,227.7 295,228.8 295.5,227.8 296,229.4 296.5,229.2 297,228.5 297.5,228.9 298,228.3 298.5,228.5 299,229.0 299.5,229.5 300,228.5 300.5,229.0 301,228.4 301.5,228.5 302,229.6 302.5,229.5 303,228.3 303.5,229.5 304,228.6 304.5,228.3 305,228.7 305.5,229.7 306,229.4 306.5,228.9 307,228.6 307.5,229.0 308,228.4 308.5,228.7 309,227.9 309.5,228.5 310,229.4 310.5,228.7 311,228.9 311.5,229.4 312,229.3 312.5,228.6 313,229.0 313.5,228.9 314,229.6 314.5,229.1 315,229.0 315.5,228.3 316,228.2 316.5,229.5 317,229.3 317.5,228.9 318,229.0 318.5,228.8 319,229.6 319.5,229.0 320,229.2 320.5,228.5 321,228.7 321.5,228.1 322,228.1 322.5,229.1 323,228.4 323.5,228.8 324,228.9 324.5,228.2 325,228.3 325.5,228.5 326,229.1 326.5,229.1 327,229.3 327.5,227.8 328,227.7 328.5,227.7 329,229.2 329.5,228.8 330,228.1 330.5,229.0 331,228.7 331.5,228.2 332,228.7 332.5,228.9 333,228.9 333.5,228.9 334,229.3 334.5,229.2 335,228.9 335.5,228.5 336,229.3 336.5,228.2 337,229.3 337.5,229.2 338,229.2 338.5,228.9 339,229.0 339.5,228.9 340,229.1 340.5,228.4 341,229.4 341.5,228.8 342,228.5 342.5,228.5 343,228.4 343.5,229.3 344,228.8 344.5,229.5 345,229.1 345.5,228.5 346,229.4 346.5,229.5 347,228.8 347.5,229.0 348,229.0 348.5,229.3 349,228.9 349.5,228.8 350,228.5 350.5,229.5 351,229.1 351.5,229.4 352,229.3 352.5,229.3 353,229.2 353.5,228.7 354,229.6 354.5,228.4 355,228.9 355.5,229.3 356,229.4 356.5,229.1 357,229.2 357.5,228.1 358,228.0 358.5,227.7 359,229.1 359.5,228.2 360,229.1 360.5,229.2 361,228.9 361.5,229.3 362,228.9 362.5,229.4 363,228.0 363.5,227.8 364,228.0 364.5,229.3 365,228.7 365.5,229.3 366,228.1 366.5,228.9 367,229.4 367.5,229.2 368,229.6 368.5,229.2 369,228.6 369.5,228.8 370,228.3 370.5,228.1 371,228.9 371.5,228.3 372,228.2 372.5,229.3 373,229.0 373.5,229.5 374,229.2 374.5,229.6 375,228.5 375.5,229.2 376,228.3 376.5,229.2 377,228.9 377.5,228.3 378,228.3 378.5,229.1 379,227.9 379.5,228.0 380,228.6 380.5,228.6 381,229.2 381.5,228.4 382,229.2 382.5,228.9 383,228.9 383.5,229.3 384,229.4 384.5,229.0 385,228.3 385.5,228.6 386,228.8 386.5,228.7 387,228.2 387.5,229.4 388,228.7 388.5,228.6 389,229.3 389.5,229.2 390,228.8 390.5,228.4 391,229.2 391.5,228.6 392,229.1 392.5,228.3 393,229.1 393.5,228.6 394,229.2 394.5,228.7 395,228.9 395.5,229.5 396,229.4 396.5,228.1 397,229.2 397.5,229.2 398,229.2 398.5,229.1 399,228.8 399.5,228.6 400,229.1 400.5,228.4 401,229.1 401.5,229.2 402,229.2 402.5,229.5 403,228.8 403.5,228.5 404,229.0 404.5,229.5 405,229.0 405.5,228.9 406,228.9 406.5,227.6 407,228.0 407.5,229.3 408,228.2 408.5,227.6 409,228.1 409.5,228.6 410,228.4 410.5,228.7 411,228.9 411.5,228.6 412,229.3 412.5,228.4 413,228.0 413.5,229.0 414,229.2 414.5,228.0 415,228.3 415.5,229.6 416,229.1 416.5,229.5 417,229.0 417.5,229.7 418,229.1 418.5,228.7 419,228.6 419.5,229.1 420,229.0 420.5,228.3 421,228.6 421.5,229.4 422,229.5 422.5,229.1 423,228.9 423.5,229.4 424,228.5 424.5,228.5 425,228.6 425.5,228.9 426,229.3 426.5,227.8 427,227.7 427.5,228.6 428,229.2 428.5,229.0 429,228.2 429.5,228.6 430,228.5 430.5,229.0 431,228.8 431.5,228.5 432,228.2 432.5,229.3 433,228.1 433.5,229.4 434,228.2 434.5,229.4 435,229.0 435.5,228.4 436,229.1 436.5,229.1 437,229.5 437.5,229.4 438,228.2 438.5,228.3 439,229.0 439.5,229.1 440,228.1 440.5,228.3 441,228.7 441.5,227.9 442,228.7 442.5,229.0 443,228.2 443.5,229.1 444,227.7 444.5,228.5 445,229.1 445.5,229.5 446,228.9 446.5,228.8 447,228.2 447.5,229.1 448,228.3 448.5,228.5 449,229.0 449.5,228.9 450,228.6 450.5,229.0 451,228.8 451.5,228.9 452,229.2 452.5,229.5 453,229.3 453.5,229.0 454,229.4 454.5,229.2 455,229.0 455.5,228.4 456,228.9 456.5,227.9 457,229.0 457.5,228.7 458,228.7 458.5,228.7 459,228.6 459.5,228.9 460,228.9 460.5,228.5 461,228.7 461.5,229.4 462,227.7 462.5,227.5 463,229.0 463.5,228.2 464,229.4 464.5,228.9 465,229.4 465.5,228.2 466,228.7 466.5,228.4 467,229.3 467.5,229.3 468,228.9 468.5,228.7 469,228.8 469.5,229.2 470,228.1 470.5,229.0 471,228.0 471.5,228.4 472,228.8 472.5,229.1 473,229.0 473.5,228.8 474,228.6 474.5,229.2 475,228.0 475.5,228.7 476,228.4 476.5,228.1 477,228.4 477.5,227.3 478,228.5 478.5,228.6 479,227.9 479.5,228.9 480,228.0 480.5,228.4 481,228.6 481.5,228.4 482,228.4 482.5,228.8 483,228.2 483.5,228.6 484,227.9 484.5,228.3 485,228.4 485.5,228.6 486,228.5 486.5,229.5 487,229.1 487.5,229.0 488,229.1 488.5,228.7 489,228.1 489.5,228.0 490,228.6 490.5,228.7 491,228.3 491.5,228.1 492,228.5 492.5,229.1 493,228.5 493.5,228.9 494,228.6 494.5,228.9 495,228.2 495.5,229.1 496,229.1 496.5,228.9 497,228.8 497.5,228.6 498,228.6 498.5,228.5 499,229.2 499.5,228.7 500,229.4 500.5,229.0 501,229.3 501.5,229.5 502,228.9 502.5,228.7 503,229.4 503.5,228.4 504,228.2 504.5,229.0 505,229.2 505.5,228.7 506,229.0 506.5,228.3 507,228.6 507.5,229.4 508,228.8 508.5,228.5 509,228.8 509.5,228.2 510,227.9 510.5,228.0 511,228.9 511.5,228.5 512,228.0 512.5,227.5 513,228.8 513.5,228.8 514,229.3 514.5,228.2 515,228.4 515.5,228.9 516,228.8 516.5,228.4 517,229.4 517.5,228.3 518,228.1 518.5,229.0 519,228.2 519.5,229.3 520,228.7 520.5,229.5 521,229.3 521.5,229.4 522,228.9 522.5,229.5 523,228.8 523.5,229.2 524,229.3 524.5,228.6 525,228.7 525.5,227.9 526,229.1 526.5,228.2 527,228.7 527.5,229.1 528,229.4 528.5,228.6 529,229.4 529.5,229.3 530,228.8 530.5,227.9 531,228.3 531.5,228.2 532,228.2 532.5,228.7 533,228.7 533.5,228.4 534,228.4 534.5,228.2 535,229.6 535.5,229.1 536,228.7 536.5,229.2 537,228.8 537.5,228.7 538,228.8 538.5,228.6 539,228.6 539.5,228.4 540,229.2 540.5,228.6 541,228.4 541.5,228.7 542,229.1 542.5,229.3 543,228.9 543.5,229.2 544,229.2 544.5,228.0 545,228.2 545.5,228.6 546,228.5 546.5,228.3 547,228.6 547.5,229.0 548,228.4 548.5,227.8 549,228.1 549.5,229.0 550,227.9 550.5,228.5 551,228.8 551.5,228.8 552,228.5 552.5,228.0 553,227.8 553.5,228.0 554,228.3 554.5,228.2 555,227.9 555.5,229.3 556,229.3 556.5,229.6 557,228.4 557.5,229.0 558,228.0 558.5,229.2 559,229.3 559.5,229.0 560,227.6 560.5,228.5 561,227.5 561.5,227.9 562,227.7 562.5,229.3 563,228.9 563.5,229.4 564,228.3 564.5,229.2 565,229.3 565.5,228.5 566,229.0 566.5,228.5 567,228.0 567.5,228.7 568,228.2 568.5,229.3 569,228.7 569.5,228.4 570,229.5 570.5,228.8 571,229.0 571.5,228.6 572,228.9 572.5,229.3 573,228.3 573.5,228.6 574,228.7 574.5,227.9 575,228.7 575.5,228.4 576,227.7 576.5,228.8 577,229.4 577.5,228.4 578,228.1 578.5,229.1 579,227.8 579.5,229.0 580,229.0 580.5,228.2 581,227.4 581.5,227.8 582,227.9 582.5,228.0 583,229.0 583.5,229.0 584,228.2 584.5,229.3 585,228.9 585.5,227.9 586,228.3 586.5,229.3 587,228.9 587.5,228.1 588,227.4 588.5,228.6 589,228.7 589.5,228.7 590,229.2 590.5,228.5 591,228.4 591.5,229.0 592,228.9 592.5,228.2 593,228.6 593.5,227.6 594,227.5 594.5,227.6 595,228.9 595.5,229.1 596,227.8 596.5,228.2 597,228.4 597.5,228.4 598,227.9 598.5,228.5 599,229.0 599.5,228.5 600,229.0 600.5,227.8 601,229.2 601.5,228.6 602,228.8 602.5,227.8 603,228.3 603.5,228.1 604,228.9 604.5,229.7 605,229.4 605.5,228.7 606,228.9 606.5,229.1 607,228.4 607.5,228.9 608,229.4 608.5,228.6 609,227.8 609.5,229.2 610,228.5 610.5,228.4 611,228.4 611.5,229.3 612,228.1 612.5,229.1 613,229.1 613.5,229.1 614,228.8 614.5,228.9 615,227.4 615.5,228.7 616,228.5 616.5,228.9 617,228.6 617.5,229.0 618,228.5 618.5,228.1 619,229.0 619.5,228.2 620,228.5 620.5,228.2 621,228.6 621.5,227.6 622,229.1 622.5,228.7 623,228.2 623.5,228.7 624,228.3 624.5,228.5 625,227.8 625.5,228.9 626,228.1 626.5,227.7 627,227.9 627.5,227.9 628,229.1 628.5,227.8 629,227.2 629.5,228.1 630,227.6 630.5,228.9 631,227.2 631.5,227.9 632,227.6 632.5,228.7 633,228.1 633.5,228.9 634,229.0 634.5,229.1 635,228.3 635.5,229.0 636,227.9 636.5,228.9 637,229.0 637.5,229.4 638,229.0 638.5,229.1 639,229.3 639.5,229.4 640,229.3 640.5,229.4 641,229.5 641.5,228.7 642,229.1 642.5,228.0 643,228.8 643.5,229.0 644,229.2 644.5,228.7 645,228.0 645.5,228.1 646,228.9 646.5,228.9 647,228.1 647.5,228.0 648,228.5 648.5,228.5 649,228.2 649.5,228.6 650,227.9 650.5,227.8 651,227.1 651.5,227.9 652,227.6 652.5,228.2 653,229.3 653.5,228.0 654,229.0 654.5,229.4 655,228.3 655.5,228.0 656,229.1 656.5,228.6 657,227.9 657.5,227.9 658,227.5 658.5,228.6 659,228.2 659.5,228.3 660,228.6 660.5,228.8 661,228.1 661.5,228.3 662,228.6 662.5,227.7 663,227.5 663.5,227.1 664,227.1 664.5,228.1 665,228.9 665.5,226.9 666,227.6 666.5,228.3 667,227.7 667.5,228.4 668,227.8 668.5,228.2 669,228.7 669.5,228.1 670,228.6 670.5,227.8 671,227.7 671.5,228.8 672,228.6 672.5,229.0 673,229.3 673.5,228.1 674,228.5 674.5,228.6 675,229.1 675.5,228.5 676,229.2 676.5,229.3 677,228.6 677.5,228.2 678,229.0 678.5,227.2 679,228.7 679.5,228.7 680,227.7 680.5,228.7 681,227.6 681.5,228.0 682,228.5 682.5,228.1 683,229.1 683.5,228.7 684,228.2 684.5,228.1 685,228.2 685.5,227.5 686,228.5 686.5,227.5 687,228.3 687.5,227.8 688,227.9 688.5,228.8 689,228.6 689.5,229.4 690,228.2 690.5,228.4 691,228.3 691.5,228.6 692,228.5 692.5,229.0 693,227.1 693.5,227.5 694,228.1 694.5,228.9 695,229.0 695.5,228.1 696,227.8 696.5,228.1 697,227.6 697.5,228.1 698,227.8 698.5,228.6 699,228.2 699.5,228.2 700,228.3 700.5,228.4 701,228.8 701.5,228.7 702,228.9 702.5,229.1 703,229.1 703.5,228.3 704,228.2 704.5,228.7 705,228.6 705.5,228.7 706,229.1 706.5,228.1 707,228.6 707.5,228.2 708,228.4 708.5,229.0 709,229.1 709.5,229.1 710,228.7 710.5,228.9 711,228.9 711.5,229.1 712,228.2 712.5,227.6 713,228.2 713.5,227.1 714,228.3 714.5,228.5 715,227.7 715.5,228.0 716,227.5 716.5,227.8 717,227.9 717.5,229.3 718,227.9 718.5,229.1 719,229.1 719.5,228.2 720,227.9 720.5,229.1 721,228.3 721.5,228.8 722,228.3 722.5,228.1 723,229.0 723.5,229.4 724,228.4 724.5,228.4 725,229.3 725.5,228.5 726,227.7 726.5,227.6 727,228.1 727.5,227.8 728,228.7 728.5,227.2 729,226.9 729.5,227.6 730,229.1 730.5,227.7 731,227.7 731.5,228.2 732,227.2 732.5,227.7 733,227.3 733.5,227.0 734,228.4 734.5,228.6 735,227.9 735.5,228.3 736,227.5 736.5,228.2 737,228.5 737.5,228.3 738,228.3 738.5,229.0 739,227.9 739.5,229.1 740,228.2 740.5,229.0 741,227.5 741.5,228.7 742,228.8 742.5,228.4 743,227.5 743.5,228.2 744,227.9 744.5,229.3 745,228.0 745.5,229.1 746,227.8 746.5,228.6 747,228.9 747.5,228.4 748,227.7 748.5,227.6 749,227.6 749.5,228.4 750,228.6 750.5,228.8 751,228.4 751.5,228.4 752,229.2 752.5,228.9 753,228.2 753.5,228.8 754,228.5 754.5,228.3 755,227.7 755.5,228.2 756,227.8 756.5,227.5 757,228.6 757.5,229.3 758,228.4 758.5,228.6 759,229.1 759.5,228.4 760,228.0 760.5,228.5 761,227.4 761.5,227.5 762,228.2 762.5,228.5 763,228.4 763.5,228.4 764,228.5 764.5,227.5 765,228.2 765.5,228.7 766,228.6 766.5,227.8 767,228.4 767.5,227.9 768,226.9 768.5,227.8 769,227.6 769.5,227.0 770,227.6 770.5,226.6 771,228.7 771.5,228.1 772,228.9 772.5,228.6 773,228.8 773.5,227.6 774,229.0 774.5,228.2 775,228.2 775.5,227.5 776,227.6 776.5,228.7 777,227.7 777.5,227.4 778,228.5 778.5,228.0 779,227.5 779.5,228.1 780,228.2 780.5,229.0 781,228.6 781.5,229.1 782,227.4 782.5,227.7 783,227.2 783.5,228.3 784,226.9 784.5,228.0 785,227.5 785.5,227.7 786,227.7 786.5,229.1 787,229.3 787.5,228.6 788,229.1 788.5,227.8 789,228.7 789.5,228.9 790,228.6 790.5,228.7 791,228.5 791.5,228.3 792,229.1 792.5,228.8 793,228.0 793.5,228.7 794,229.0 794.5,228.7 795,227.8 795.5,227.9 796,227.9 796.5,227.6 797,228.9 797.5,226.6 798,228.1 798.5,227.5 799,227.7 799.5,228.8 800,228.6 800.5,228.8 801,227.8 801.5,229.1 802,228.0 802.5,227.2 803,228.1 803.5,228.4 804,226.7 804.5,228.5 805,228.1 805.5,227.4 806,227.3 806.5,227.0 807,228.8 807.5,228.0 808,227.8 808.5,228.2 809,228.1 809.5,227.5 810,228.4 810.5,227.8 811,227.5 811.5,227.4 812,228.1 812.5,226.8 813,228.3 813.5,228.2 814,227.9 814.5,228.1 815,227.7 815.5,228.8 816,228.5 816.5,227.5 817,227.5 817.5,228.5 818,228.2 818.5,227.8 819,226.9 819.5,228.9 820,228.9 820.5,228.9 821,228.1 821.5,228.3 822,228.7 822.5,229.4 823,228.0 823.5,229.3 824,227.6 824.5,228.4 825,228.3 825.5,227.9 826,228.9 826.5,228.6 827,227.4 827.5,227.6 828,228.2 828.5,228.7 829,228.1 829.5,228.4 830,228.2 830.5,227.5 831,228.2 831.5,228.3 832,227.0 832.5,227.6 833,227.4 833.5,228.0 834,227.2 834.5,227.1 835,228.6 835.5,228.7 836,227.1 836.5,227.9 837,227.0 837.5,228.8 838,228.5 838.5,228.1 839,226.9 839.5,227.4 840,226.8 840.5,228.3 841,227.4 841.5,228.4 842,227.7 842.5,228.6 843,228.0 843.5,228.0 844,228.8 844.5,228.4 845,228.8 845.5,228.2 846,228.3 846.5,226.7 847,228.6 847.5,227.9 848,226.8 848.5,227.4 849,227.4 849.5,228.6 850,227.5 850.5,228.9 851,228.2 851.5,227.3 852,228.6 852.5,227.0 853,228.6 853.5,228.3 854,227.5 854.5,227.9 855,227.6 855.5,228.7 856,228.5 856.5,228.9 857,228.9 857.5,228.0 858,228.4 858.5,228.7 859,228.2 859.5,227.6 860,228.2 860.5,228.1 861,228.8 861.5,228.7 862,229.0 862.5,229.2 863,228.7 863.5,228.5 864,228.8 864.5,228.6 865,228.2 865.5,227.7 866,228.6 866.5,227.2 867,228.2 867.5,228.5 868,226.6 868.5,228.5 869,227.9 869.5,228.4 870,227.4 870.5,227.1 871,229.0 871.5,227.4 872,227.5 872.5,227.8 873,226.9 873.5,228.0 874,227.2 874.5,228.7 875,227.0 875.5,227.2 876,227.0 876.5,227.3 877,228.0 877.5,228.5 878,228.1 878.5,227.3 879,227.9 879.5,228.0 880,228.0 880.5,228.2 881,228.3 881.5,227.1 882,226.2 882.5,227.1 883,227.9 883.5,227.5 884,226.4 884.5,226.7 885,226.5 885.5,227.6 886,226.4 886.5,227.3 887,225.7 887.5,227.3 888,225.8 888.5,226.6 889,228.2 889.5,227.8 890,227.2 890.5,228.0 891,226.8 891.5,227.6 892,227.6 892.5,227.7 893,226.9 893.5,228.7 894,226.6 894.5,228.7 895,228.1 895.5,226.6 896,228.3 896.5,226.6 897,228.3 897.5,227.7 898,228.1 898.5,226.8 899,228.7 899.5,226.7 900,228.1 900.5,226.8 901,228.0 901.5,227.7 902,227.0 902.5,225.9 903,226.8 903.5,227.9 904,227.0 904.5,226.7 905,227.4 905.5,228.1 906,226.8 906.5,228.1 907,227.7 907.5,227.4 908,226.8 908.5,227.5 909,226.9 909.5,227.7 910,228.4 910.5,226.5 911,227.5 911.5,227.8 912,227.5 912.5,227.7 913,227.3 913.5,227.6 914,227.0 914.5,225.8 915,225.5 915.5,226.2 916,226.9 916.5,226.1 917,225.3 917.5,225.5 918,226.6 918.5,226.2 919,227.3 919.5,227.5 920,225.6 920.5,226.2 921,225.8 921.5,227.8 922,225.3 922.5,227.8 923,224.8 923.5,226.9 924,225.4 924.5,226.6 925,226.7 925.5,228.0 926,227.8 926.5,227.0 927,228.6 927.5,227.1 928,228.2 928.5,227.6 929,227.3 929.5,226.0 930,227.8 930.5,227.0 931,227.3 931.5,226.2 932,228.0 932.5,226.8 933,227.4 933.5,227.2 934,228.4 934.5,226.7 935,227.7 935.5,226.0 936,226.4 936.5,225.8 937,226.7 937.5,226.3 938,226.8 938.5,227.3 939,227.8 939.5,226.8 940,228.7 940.5,227.9 941,227.7 941.5,226.8 942,228.6 942.5,226.7 943,227.6 943.5,227.2 944,227.8 944.5,226.2 945,224.7 945.5,223.6 946,224.9 946.5,222.4 947,220.5 947.5,223.0 948,217.1 948.5,216.9 949,219.3 949.5,214.3 950,211.2 950.5,212.2 951,208.2 951.5,208.9 952,214.6 952.5,209.2 953,208.0 953.5,209.7 954,211.6 954.5,205.7 955,216.1 955.5,202.4 956,200.7 956.5,208.0 957,211.2 957.5,203.2 958,200.0 958.5,209.1 959,194.3 959.5,200.1 960,210.0 960.5,203.2 961,210.3 961.5,214.6 962,202.5 962.5,198.9 963,204.0 963.5,205.6 964,198.8 964.5,203.7 965,203.6 965.5,197.9 966,201.9 966.5,214.0 967,205.7 967.5,200.8 968,199.3 968.5,212.5 969,206.7 969.5,209.6 970,201.7 970.5,214.5 971,206.3 971.5,199.8 972,206.4 972.5,210.9 973,207.1 973.5,203.7 974,206.7 974.5,210.4 975,209.1 975.5,217.3 976,219.2 976.5,210.4 977,207.0 977.5,212.4 978,216.5 978.5,218.5 979,208.4 979.5,212.0 980,208.4 980.5,218.2 981,209.9 981.5,220.4 982,213.1 982.5,216.9 983,209.5 983.5,211.7 984,213.5 984.5,212.0 985,211.9 985.5,208.6 986,204.3 986.5,213.2 987,205.7 987.5,207.2 988,209.3 988.5,217.7 989,212.8 989.5,210.7 990,215.1 990.5,215.0 991,213.3 991.5,213.1 992,217.5 992.5,219.2 993,215.3 993.5,216.6 994,218.5 994.5,215.7 995,214.0 995.5,214.6 996,218.5 996.5,219.4 997,222.1 997.5,220.7 998,215.7 998.5,221.2 999,215.1 999.5,215.9 1000,219.1 1000,242.6 999.5,244.1 999,241.9 998.5,240.4 998,241.6 997.5,241.2 997,243.6 996.5,244.2 996,244.1 995.5,246.4 995,249.1 994.5,243.1 994,244.8 993.5,247.1 993,245.9 992.5,248.6 992,251.8 991.5,250.3 991,248.9 990.5,248.4 990,247.7 989.5,242.5 989,244.3 988.5,252.8 988,254.4 987.5,251.1 987,255.3 986.5,259.4 986,258.9 985.5,251.5 985,246.2 984.5,254.5 984,250.7 983.5,243.6 983,243.6 982.5,252.0 982,247.4 981.5,248.3 981,251.5 980.5,254.3 980,249.2 979.5,244.0 979,246.1 978.5,245.7 978,245.8 977.5,252.3 977,243.5 976.5,248.6 976,249.9 975.5,246.5 975,244.6 974.5,245.9 974,246.8 973.5,251.4 973,254.9 972.5,253.8 972,250.8 971.5,260.3 971,250.2 970.5,254.5 970,252.3 969.5,255.2 969,250.9 968.5,256.7 968,248.4 967.5,259.9 967,253.1 966.5,253.1 966,264.5 965.5,262.4 965,259.4 964.5,264.6 964,252.9 963.5,261.1 963,254.8 962.5,250.2 962,248.6 961.5,260.3 961,257.2 960.5,258.8 960,252.3 959.5,252.8 959,257.6 958.5,264.6 958,255.3 957.5,264.4 957,250.9 956.5,262.3 956,253.6 955.5,256.0 955,248.7 954.5,254.5 954,249.8 953.5,257.8 953,258.1 952.5,252.7 952,245.7 951.5,250.5 951,253.1 950.5,251.4 950,250.1 949.5,243.7 949,244.2 948.5,239.9 948,241.7 947.5,240.5 947,239.3 946.5,237.7 946,239.3 945.5,237.1 945,235.2 944.5,237.5 944,233.7 943.5,234.7 943,233.9 942.5,234.1 942,235.3 941.5,235.3 941,235.3 940.5,235.4 940,233.6 939.5,234.6 939,235.1 938.5,234.5 938,236.4 937.5,234.9 937,234.2 936.5,234.1 936,236.2 935.5,235.6 935,235.5 934.5,234.7 934,234.8 933.5,233.5 933,235.3 932.5,234.3 932,235.7 931.5,234.0 931,235.5 930.5,234.9 930,233.7 929.5,234.2 929,234.7 928.5,235.5 928,235.1 927.5,235.0 927,235.2 926.5,233.4 926,235.7 925.5,234.9 925,234.2 924.5,234.9 924,235.1 923.5,236.3 923,236.6 922.5,235.3 922,236.1 921.5,236.2 921,236.0 920.5,235.4 920,236.4 919.5,234.9 919,236.2 918.5,235.1 918,236.0 917.5,234.1 917,234.3 916.5,234.7 916,234.4 915.5,236.1 915,236.1 914.5,236.5 914,234.5 913.5,233.6 913,234.0 912.5,234.2 912,234.9 911.5,233.6 911,234.2 910.5,235.9 910,235.7 909.5,233.9 909,233.9 908.5,236.2 908,235.4 907.5,233.8 907,233.3 906.5,234.8 906,233.7 905.5,235.6 905,234.6 904.5,234.9 904,233.7 903.5,234.4 903,234.6 902.5,234.6 902,235.5 901.5,235.2 901,234.1 900.5,234.7 900,233.4 899.5,234.1 899,234.8 898.5,234.6 898,234.8 897.5,234.0 897,234.6 896.5,235.8 896,234.2 895.5,235.0 895,235.1 894.5,235.4 894,234.3 893.5,233.7 893,235.1 892.5,234.6 892,233.9 891.5,233.5 891,235.0 890.5,234.9 890,234.0 889.5,234.8 889,235.4 888.5,233.6 888,234.3 887.5,235.3 887,234.0 886.5,235.1 886,233.7 885.5,234.0 885,235.2 884.5,235.4 884,233.9 883.5,233.6 883,234.3 882.5,234.8 882,233.9 881.5,233.8 881,235.1 880.5,234.3 880,234.5 879.5,233.9 879,234.8 878.5,234.0 878,233.2 877.5,233.9 877,234.8 876.5,234.6 876,234.1 875.5,233.8 875,234.9 874.5,235.0 874,233.7 873.5,234.8 873,233.7 872.5,233.6 872,234.3 871.5,233.7 871,234.7 870.5,234.7 870,234.7 869.5,233.5 869,235.4 868.5,233.8 868,234.2 867.5,234.4 867,233.6 866.5,235.3 866,234.3 865.5,234.0 865,234.4 864.5,234.2 864,233.8 863.5,234.2 863,233.9 862.5,234.4 862,233.6 861.5,232.8 861,233.7 860.5,233.7 860,234.0 859.5,233.6 859,233.9 858.5,234.0 858,233.1 857.5,234.2 857,234.1 856.5,233.4 856,233.3 855.5,234.0 855,234.5 854.5,234.4 854,234.7 853.5,233.3 853,233.8 852.5,234.7 852,233.7 851.5,235.2 851,234.6 850.5,233.9 850,233.0 849.5,233.9 849,233.4 848.5,234.2 848,233.6 847.5,235.0 847,235.1 846.5,234.7 846,234.4 845.5,233.7 845,233.6 844.5,234.8 844,233.4 843.5,232.8 843,233.0 842.5,233.0 842,233.2 841.5,234.5 841,233.5 840.5,234.7 840,234.0 839.5,235.3 839,233.6 838.5,234.7 838,234.7 837.5,234.0 837,234.5 836.5,234.5 836,233.4 835.5,234.6 835,234.0 834.5,233.5 834,233.6 833.5,234.3 833,234.7 832.5,234.8 832,234.7 831.5,233.3 831,234.8 830.5,234.9 830,233.4 829.5,233.0 829,233.4 828.5,233.7 828,234.3 827.5,233.3 827,233.0 826.5,233.3 826,232.8 825.5,233.5 825,232.9 824.5,233.9 824,234.4 823.5,234.3 823,233.3 822.5,233.7 822,233.3 821.5,234.2 821,233.2 820.5,234.5 820,234.2 819.5,235.0 819,233.8 818.5,233.9 818,233.4 817.5,233.6 817,235.1 816.5,234.6 816,234.5 815.5,234.5 815,234.2 814.5,233.3 814,233.1 813.5,234.1 813,233.8 812.5,234.5 812,234.2 811.5,233.5 811,234.8 810.5,233.5 810,233.0 809.5,233.8 809,234.2 808.5,233.2 808,233.1 807.5,232.9 807,234.8 806.5,234.7 806,234.4 805.5,234.5 805,234.7 804.5,234.1 804,233.5 803.5,233.3 803,233.7 802.5,233.2 802,234.1 801.5,234.6 801,233.5 800.5,234.3 800,233.1 799.5,234.7 799,234.2 798.5,233.6 798,233.2 797.5,235.3 797,235.2 796.5,234.7 796,234.5 795.5,233.5 795,233.6 794.5,234.2 794,233.1 793.5,233.9 793,233.9 792.5,233.7 792,233.6 791.5,234.0 791,234.5 790.5,233.3 790,233.5 789.5,232.8 789,233.9 788.5,234.1 788,233.9 787.5,233.3 787,233.9 786.5,234.0 786,234.1 785.5,234.9 785,235.0 784.5,233.6 784,233.5 783.5,235.1 783,234.4 782.5,233.6 782,233.5 781.5,234.7 781,233.5 780.5,233.1 780,234.7 779.5,233.5 779,234.4 778.5,234.2 778,232.8 777.5,233.4 777,233.3 776.5,234.9 776,233.9 775.5,232.9 775,233.8 774.5,234.0 774,233.3 773.5,234.2 773,233.5 772.5,233.8 772,233.2 771.5,234.0 771,235.0 770.5,235.2 770,234.6 769.5,233.6 769,233.5 768.5,234.1 768,234.4 767.5,234.1 767,234.6 766.5,233.3 766,234.4 765.5,233.8 765,235.0 764.5,234.4 764,233.5 763.5,233.1 763,235.0 762.5,234.2 762,234.4 761.5,234.4 761,233.4 760.5,234.0 760,234.0 759.5,232.7 759,232.7 758.5,233.6 758,233.1 757.5,233.6 757,233.1 756.5,233.3 756,233.5 755.5,233.6 755,234.5 754.5,233.7 754,234.3 753.5,233.6 753,234.1 752.5,234.1 752,232.8 751.5,233.0 751,233.0 750.5,234.3 750,234.8 749.5,234.2 749,233.6 748.5,233.5 748,234.7 747.5,233.8 747,233.6 746.5,234.1 746,233.2 745.5,233.9 745,232.6 744.5,234.1 744,233.1 743.5,233.5 743,234.1 742.5,234.4 742,233.3 741.5,234.8 741,233.1 740.5,234.8 740,234.4 739.5,233.8 739,233.5 738.5,233.8 738,233.2 737.5,234.5 737,234.0 736.5,233.2 736,233.2 735.5,233.8 735,235.3 734.5,235.3 734,233.6 733.5,234.9 733,233.3 732.5,234.9 732,233.1 731.5,233.1 731,233.9 730.5,233.2 730,233.4 729.5,233.6 729,235.1 728.5,234.5 728,233.3 727.5,233.2 727,234.7 726.5,234.5 726,233.3 725.5,233.0 725,232.9 724.5,233.5 724,232.7 723.5,233.8 723,233.8 722.5,232.9 722,232.9 721.5,232.7 721,233.9 720.5,234.4 720,233.0 719.5,234.3 719,233.0 718.5,233.8 718,232.8 717.5,233.2 717,233.5 716.5,233.1 716,233.2 715.5,233.0 715,233.9 714.5,233.8 714,233.8 713.5,234.4 713,233.6 712.5,233.1 712,233.9 711.5,233.2 711,232.8 710.5,233.5 710,234.0 709.5,233.7 709,234.0 708.5,233.8 708,233.3 707.5,233.7 707,233.8 706.5,233.1 706,233.2 705.5,234.6 705,233.4 704.5,233.8 704,233.2 703.5,233.5 703,233.5 702.5,233.4 702,233.2 701.5,235.0 701,233.5 700.5,234.6 700,233.5 699.5,233.7 699,233.8 698.5,233.9 698,233.5 697.5,234.0 697,233.7 696.5,233.6 696,232.9 695.5,233.5 695,234.3 694.5,233.4 694,233.0 693.5,234.7 693,234.9 692.5,233.5 692,234.2 691.5,234.2 691,233.2 690.5,233.5 690,234.2 689.5,233.5 689,233.6 688.5,232.6 688,234.0 687.5,234.5 687,233.6 686.5,233.4 686,234.0 685.5,233.4 685,233.2 684.5,232.9 684,233.7 683.5,234.1 683,233.2 682.5,234.0 682,234.1 681.5,234.3 681,233.0 680.5,233.7 680,234.1 679.5,233.8 679,234.0 678.5,233.3 678,233.6 677.5,232.9 677,233.7 676.5,233.5 676,233.1 675.5,233.4 675,233.0 674.5,232.8 674,233.2 673.5,233.0 673,233.0 672.5,233.8 672,233.4 671.5,234.6 671,233.8 670.5,234.0 670,232.9 669.5,233.4 669,233.1 668.5,233.5 668,233.3 667.5,232.8 667,233.8 666.5,234.0 666,233.1 665.5,233.9 665,234.7 664.5,233.8 664,233.4 663.5,234.9 663,233.9 662.5,234.3 662,234.4 661.5,234.2 661,234.2 660.5,233.5 660,234.7 659.5,233.2 659,234.2 658.5,233.9 658,233.0 657.5,233.8 657,234.7 656.5,233.6 656,234.1 655.5,233.2 655,233.1 654.5,233.2 654,233.5 653.5,233.9 653,233.6 652.5,234.0 652,233.0 651.5,233.9 651,234.0 650.5,233.1 650,233.9 649.5,233.7 649,233.4 648.5,233.3 648,234.1 647.5,233.1 647,232.9 646.5,232.9 646,234.1 645.5,234.1 645,233.3 644.5,233.2 644,234.2 643.5,233.9 643,234.3 642.5,233.9 642,234.0 641.5,233.1 641,232.9 640.5,232.7 640,232.4 639.5,233.5 639,232.9 638.5,233.3 638,233.0 637.5,233.6 637,232.9 636.5,234.1 636,233.9 635.5,233.7 635,233.0 634.5,233.6 634,233.3 633.5,233.1 633,233.4 632.5,234.4 632,233.2 631.5,233.8 631,234.2 630.5,234.3 630,233.9 629.5,233.7 629,233.0 628.5,233.3 628,233.1 627.5,233.9 627,233.7 626.5,234.2 626,232.6 625.5,233.7 625,233.1 624.5,234.5 624,234.5 623.5,233.8 623,233.1 622.5,234.1 622,233.5 621.5,233.1 621,233.0 620.5,233.0 620,232.6 619.5,233.0 619,232.9 618.5,233.0 618,233.2 617.5,234.0 617,233.5 616.5,234.0 616,233.9 615.5,233.4 615,234.4 614.5,234.6 614,233.9 613.5,233.2 613,233.3 612.5,233.5 612,233.4 611.5,233.9 611,232.9 610.5,232.7 610,234.1 609.5,233.8 609,233.2 608.5,233.1 608,233.2 607.5,232.4 607,232.9 606.5,233.0 606,232.6 605.5,233.3 605,233.0 604.5,232.5 604,233.3 603.5,233.2 603,233.9 602.5,234.2 602,233.7 601.5,233.1 601,232.9 600.5,232.7 600,233.0 599.5,233.2 599,233.7 598.5,233.9 598,232.6 597.5,233.2 597,232.9 596.5,233.0 596,233.6 595.5,233.8 595,234.5 594.5,233.6 594,234.7 593.5,233.6 593,234.2 592.5,233.7 592,232.6 591.5,233.4 591,233.6 590.5,234.2 590,232.7 589.5,232.9 589,233.6 588.5,233.5 588,232.9 587.5,234.0 587,233.3 586.5,233.1 586,232.8 585.5,234.2 585,233.6 584.5,233.1 584,233.0 583.5,232.7 583,234.1 582.5,234.6 582,234.6 581.5,233.8 581,233.6 580.5,233.5 580,234.1 579.5,233.9 579,233.7 578.5,233.1 578,233.8 577.5,232.5 577,233.9 576.5,233.7 576,234.1 575.5,233.6 575,234.1 574.5,233.6 574,233.8 573.5,234.3 573,233.5 572.5,233.9 572,233.1 571.5,233.5 571,233.1 570.5,233.0 570,232.6 569.5,233.2 569,232.5 568.5,233.0 568,233.5 567.5,233.7 567,233.9 566.5,234.3 566,232.9 565.5,233.7 565,234.0 564.5,232.9 564,233.3 563.5,233.0 563,232.5 562.5,233.7 562,232.9 561.5,233.1 561,234.3 560.5,233.1 560,232.8 559.5,233.9 559,234.3 558.5,233.0 558,233.6 557.5,233.2 557,232.4 556.5,233.1 556,232.8 555.5,233.3 555,234.2 554.5,233.4 554,233.3 553.5,232.9 553,233.5 552.5,233.3 552,233.1 551.5,233.0 551,233.5 550.5,233.0 550,233.9 549.5,233.2 549,233.2 548.5,233.2 548,233.1 547.5,234.3 547,233.9 546.5,233.7 546,233.9 545.5,234.2 545,234.5 544.5,234.3 544,233.9 543.5,233.6 543,233.6 542.5,233.0 542,232.7 541.5,232.9 541,233.8 540.5,232.9 540,233.3 539.5,232.9 539,233.7 538.5,233.0 538,233.9 537.5,232.6 537,232.4 536.5,233.1 536,232.3 535.5,233.0 535,232.4 534.5,233.2 534,233.7 533.5,233.6 533,232.6 532.5,233.5 532,234.1 531.5,232.8 531,234.1 530.5,234.1 530,232.8 529.5,232.9 529,232.6 528.5,232.9 528,232.9 527.5,232.8 527,233.4 526.5,233.8 526,232.9 525.5,234.4 525,232.9 524.5,233.3 524,233.5 523.5,233.8 523,233.3 522.5,233.8 522,233.1 521.5,233.5 521,233.1 520.5,233.5 520,233.1 519.5,232.9 519,233.7 518.5,233.3 518,233.3 517.5,232.6 517,232.7 516.5,234.2 516,232.9 515.5,232.8 515,232.5 514.5,233.3 514,234.2 513.5,233.2 513,234.2 512.5,233.7 512,233.1 511.5,234.1 511,234.7 510.5,233.9 510,233.3 509.5,232.9 509,233.7 508.5,233.9 508,233.4 507.5,233.5 507,232.8 506.5,233.3 506,233.9 505.5,232.7 505,232.8 504.5,234.2 504,233.3 503.5,233.0 503,233.1 502.5,233.2 502,232.7 501.5,232.5 501,232.6 500.5,232.3 500,233.3 499.5,233.6 499,232.5 498.5,233.3 498,233.2 497.5,233.3 497,232.7 496.5,233.1 496,233.2 495.5,233.3 495,233.5 494.5,232.6 494,233.5 493.5,232.7 493,233.4 492.5,233.1 492,232.9 491.5,234.0 491,233.2 490.5,232.9 490,233.4 489.5,233.0 489,233.7 488.5,232.4 488,232.6 487.5,232.3 487,232.5 486.5,233.3 486,233.1 485.5,232.5 485,233.3 484.5,233.3 484,233.5 483.5,234.2 483,233.7 482.5,233.0 482,232.7 481.5,233.7 481,233.0 480.5,233.9 480,233.8 479.5,234.0 479,233.0 478.5,233.6 478,233.3 477.5,234.1 477,234.5 476.5,234.4 476,233.3 475.5,233.7 475,234.0 474.5,234.2 474,233.3 473.5,232.5 473,233.1 472.5,233.1 472,233.8 471.5,232.8 471,233.2 470.5,232.9 470,232.5 469.5,233.4 469,233.7 468.5,234.1 468,233.1 467.5,233.4 467,232.7 466.5,232.4 466,233.4 465.5,233.5 465,233.8 464.5,233.7 464,232.8 463.5,233.5 463,232.9 462.5,233.0 462,233.7 461.5,233.8 461,233.1 460.5,234.0 460,233.0 459.5,234.0 459,233.0 458.5,232.7 458,232.5 457.5,233.7 457,233.2 456.5,232.8 456,232.9 455.5,233.5 455,232.5 454.5,233.2 454,233.0 453.5,233.6 453,232.6 452.5,232.2 452,232.3 451.5,233.3 451,233.2 450.5,232.8 450,233.1 449.5,233.6 449,233.1 448.5,233.5 448,233.5 447.5,233.8 447,233.7 446.5,233.6 446,233.0 445.5,232.7 445,234.0 444.5,233.2 444,233.9 443.5,233.0 443,233.0 442.5,233.8 442,234.5 441.5,234.4 441,233.7 440.5,232.8 440,232.6 439.5,233.6 439,233.8 438.5,233.9 438,232.7 437.5,233.2 437,232.6 436.5,233.6 436,233.4 435.5,232.7 435,232.8 434.5,233.2 434,232.8 433.5,233.2 433,232.8 432.5,232.6 432,233.9 431.5,233.4 431,232.6 430.5,233.1 430,233.6 429.5,232.9 429,233.4 428.5,233.6 428,233.7 427.5,233.5 427,233.7 426.5,234.2 426,233.0 425.5,233.9 425,233.3 424.5,232.4 424,233.6 423.5,233.7 423,232.8 422.5,233.0 422,233.5 421.5,233.0 421,233.3 420.5,232.6 420,233.8 419.5,232.7 419,233.1 418.5,233.0 418,232.5 417.5,232.6 417,232.6 416.5,233.2 416,232.5 415.5,233.6 415,232.6 414.5,233.1 414,234.0 413.5,233.3 413,233.7 412.5,233.8 412,233.7 411.5,233.6 411,232.7 410.5,233.5 410,232.6 409.5,233.5 409,233.7 408.5,233.5 408,233.1 407.5,233.3 407,233.4 406.5,234.3 406,233.3 405.5,233.0 405,232.8 404.5,233.5 404,233.3 403.5,233.3 403,233.0 402.5,232.8 402,232.5 401.5,233.5 401,233.7 400.5,234.1 400,233.0 399.5,234.3 399,233.9 398.5,233.7 398,233.1 397.5,233.3 397,234.0 396.5,233.7 396,232.5 395.5,233.8 395,233.8 394.5,233.4 394,233.3 393.5,233.1 393,234.1 392.5,234.3 392,233.2 391.5,233.5 391,233.9 390.5,233.2 390,233.7 389.5,233.2 389,232.8 388.5,232.6 388,233.7 387.5,232.9 387,233.0 386.5,233.6 386,233.4 385.5,232.5 385,233.2 384.5,233.1 384,233.1 383.5,233.3 383,232.2 382.5,233.2 382,233.2 381.5,233.2 381,233.5 380.5,233.1 380,233.6 379.5,232.7 379,232.8 378.5,233.0 378,233.0 377.5,233.2 377,233.2 376.5,232.7 376,233.2 375.5,233.0 375,233.1 374.5,233.6 374,233.0 373.5,233.6 373,233.7 372.5,233.7 372,232.9 371.5,233.3 371,233.5 370.5,232.9 370,233.7 369.5,233.2 369,232.4 368.5,233.2 368,232.7 367.5,233.4 367,232.6 366.5,232.8 366,233.5 365.5,234.0 365,233.0 364.5,233.9 364,234.4 363.5,233.2 363,233.9 362.5,232.6 362,233.7 361.5,233.3 361,232.7 360.5,232.7 360,233.9 359.5,233.9 359,234.0 358.5,233.3 358,234.0 357.5,233.0 357,234.1 356.5,232.9 356,232.7 355.5,232.9 355,233.2 354.5,233.4 354,232.6 353.5,232.6 353,233.5 352.5,233.1 352,232.8 351.5,233.7 351,233.0 350.5,233.3 350,232.5 349.5,232.6 349,233.0 348.5,233.3 348,232.3 347.5,232.4 347,232.6 346.5,232.5 346,233.6 345.5,232.9 345,233.8 344.5,233.2 344,232.8 343.5,234.0 343,232.8 342.5,233.8 342,233.8 341.5,233.6 341,232.6 340.5,232.5 340,233.6 339.5,233.9 339,233.1 338.5,233.2 338,233.0 337.5,233.4 337,233.1 336.5,233.1 336,232.7 335.5,233.1 335,233.6 334.5,233.4 334,232.7 333.5,233.0 333,232.5 332.5,232.3 332,232.9 331.5,233.4 331,232.8 330.5,233.9 330,233.8 329.5,233.9 329,233.1 328.5,234.2 328,233.5 327.5,232.8 327,233.2 326.5,232.6 326,233.5 325.5,234.1 325,233.0 324.5,234.0 324,233.9 323.5,233.1 323,233.5 322.5,233.2 322,233.8 321.5,234.2 321,233.2 320.5,232.7 320,233.4 319.5,233.6 319,233.2 318.5,233.6 318,233.4 317.5,232.4 317,233.3 316.5,232.7 316,233.1 315.5,232.8 315,232.9 314.5,233.4 314,232.3 313.5,232.8 313,233.6 312.5,233.4 312,232.8 311.5,232.8 311,232.9 310.5,233.7 310,234.0 309.5,232.8 309,233.7 308.5,233.2 308,233.1 307.5,233.9 307,232.9 306.5,233.4 306,233.1 305.5,232.7 305,233.4 304.5,233.4 304,233.3 303.5,233.3 303,232.9 302.5,233.7 302,232.8 301.5,233.8 301,233.8 300.5,233.4 300,233.1 299.5,232.5 299,232.6 298.5,233.5 298,233.7 297.5,232.5 297,233.0 296.5,232.9 296,232.9 295.5,233.5 295,233.6 294.5,234.3 294,234.2 293.5,233.0 293,233.5 292.5,233.0 292,232.8 291.5,234.1 291,233.4 290.5,232.8 290,233.6 289.5,234.1 289,233.2 288.5,233.5 288,234.0 287.5,232.6 287,233.7 286.5,232.8 286,233.3 285.5,233.5 285,232.5 284.5,232.5 284,232.3 283.5,232.8 283,232.7 282.5,233.5 282,232.6 281.5,233.6 281,233.3 280.5,233.3 280,233.9 279.5,233.4 279,233.4 278.5,232.7 278,232.7 277.5,232.8 277,233.0 276.5,232.5 276,232.5 275.5,232.9 275,232.9 274.5,234.1 274,234.0 273.5,233.2 273,233.0 272.5,233.2 272,232.4 271.5,233.6 271,232.7 270.5,232.7 270,232.4 269.5,233.4 269,232.8 268.5,233.4 268,232.7 267.5,233.2 267,233.1 266.5,232.8 266,233.1 265.5,233.5 265,233.4 264.5,232.9 264,232.4 263.5,232.6 263,232.9 262.5,233.6 262,232.8 261.5,233.9 261,233.4 260.5,233.1 260,234.0 259.5,233.3 259,233.2 258.5,232.8 258,233.3 257.5,233.4 257,232.6 256.5,233.2 256,233.6 255.5,232.8 255,233.3 254.5,233.6 254,233.9 253.5,232.9 253,232.9 252.5,233.0 252,234.0 251.5,233.1 251,233.7 250.5,232.7 250,233.0 249.5,232.6 249,233.2 248.5,232.4 248,232.8 247.5,233.4 247,233.3 246.5,233.3 246,233.4 245.5,233.1 245,233.5 244.5,233.6 244,232.5 243.5,232.5 243,233.0 242.5,233.5 242,232.8 241.5,233.3 241,233.7 240.5,232.8 240,232.9 239.5,232.9 239,232.5 238.5,233.5 238,234.1 237.5,233.3 237,233.2 236.5,232.9 236,232.3 235.5,232.9 235,232.3 234.5,232.6 234,232.2 233.5,232.7 233,232.4 232.5,233.4 232,232.4 231.5,233.7 231,232.7 230.5,232.6 230,232.8 229.5,233.3 229,232.5 228.5,233.2 228,232.5 227.5,232.9 227,233.2 226.5,232.5 226,233.0 225.5,233.6 225,233.0 224.5,233.1 224,233.8 223.5,234.0 223,232.8 222.5,232.7 222,233.0 221.5,232.4 221,232.4 220.5,232.6 220,233.1 219.5,233.3 219,233.2 218.5,233.9 218,233.3 217.5,233.3 217,233.8 216.5,232.6 216,232.6 215.5,232.8 215,233.4 214.5,232.4 214,233.0 213.5,233.3 213,232.9 212.5,232.8 212,232.6 211.5,232.8 211,234.1 210.5,233.0 210,233.3 209.5,232.5 209,233.4 208.5,233.4 208,232.6 207.5,232.4 207,233.0 206.5,233.0 206,232.5 205.5,233.6 205,232.6 204.5,233.1 204,233.7 203.5,233.0 203,232.4 202.5,233.6 202,233.2 201.5,232.8 201,232.2 200.5,233.0 200,232.2 199.5,233.3 199,233.3 198.5,233.4 198,232.7 197.5,233.2 197,233.2 196.5,232.9 196,232.5 195.5,232.3 195,232.6 194.5,232.4 194,232.1 193.5,232.8 193,232.9 192.5,232.3 192,232.3 191.5,232.8 191,232.6 190.5,234.1 190,233.8 189.5,233.3 189,232.7 188.5,233.1 188,233.1 187.5,233.5 187,233.6 186.5,232.9 186,233.3 185.5,232.9 185,232.6 184.5,233.6 184,233.0 183.5,232.7 183,232.8 182.5,232.7 182,232.8 181.5,233.3 181,233.1 180.5,232.6 180,232.8 179.5,232.4 179,232.4 178.5,233.4 178,233.1 177.5,233.2 177,233.4 176.5,232.5 176,233.6 175.5,232.6 175,233.9 174.5,233.7 174,232.7 173.5,233.4 173,232.7 172.5,233.1 172,233.2 171.5,232.9 171,233.7 170.5,233.2 170,232.5 169.5,232.6 169,232.7 168.5,233.0 168,233.3 167.5,232.4 167,232.7 166.5,232.2 166,232.4 165.5,232.3 165,232.7 164.5,232.2 164,232.6 163.5,232.4 163,233.3 162.5,232.6 162,232.9 161.5,233.2 161,233.1 160.5,232.4 160,232.9 159.5,232.2 159,232.1 158.5,232.5 158,233.1 157.5,232.9 157,232.6 156.5,233.2 156,233.2 155.5,233.2 155,232.9 154.5,233.4 154,233.7 153.5,233.1 153,232.4 152.5,232.7 152,233.3 151.5,233.2 151,232.3 150.5,232.6 150,232.4 149.5,233.2 149,233.0 148.5,232.6 148,232.4 147.5,233.4 147,232.2 146.5,232.4 146,233.0 145.5,233.0 145,233.3 144.5,232.7 144,233.1 143.5,233.3 143,233.1 142.5,232.9 142,233.3 141.5,233.2 141,233.7 140.5,233.7 140,233.4 139.5,232.5 139,233.6 138.5,232.6 138,232.9 137.5,232.9 137,233.0 136.5,232.5 136,232.9 135.5,232.4 135,233.3 134.5,232.8 134,232.4 133.5,233.2 133,233.4 132.5,233.0 132,232.8 131.5,232.0 131,232.8 130.5,232.3 130,232.6 129.5,232.4 129,232.5 128.5,232.7 128,232.4 127.5,232.9 127,232.3 126.5,232.9 126,232.4 125.5,232.1 125,232.5 124.5,233.0 124,232.7 123.5,232.8 123,232.5 122.5,233.2 122,232.7 121.5,232.9 121,233.0 120.5,233.3 120,232.4 119.5,233.0 119,232.4 118.5,232.4 118,233.0 117.5,232.4 117,232.0 116.5,233.0 116,233.0 115.5,232.9 115,232.4 114.5,233.3 114,232.9 113.5,233.2 113,232.5 112.5,233.4 112,233.1 111.5,232.3 111,232.3 110.5,232.8 110,232.4 109.5,233.2 109,233.3 108.5,232.6 108,233.1 107.5,232.6 107,233.7 106.5,234.5 106,234.6 105.5,234.2 105,232.8 104.5,233.1 104,233.4 103.5,233.4 103,232.3 102.5,232.7 102,232.4 101.5,233.1 101,232.8 100.5,232.5 100,232.8 99.5,233.3 99,232.7 98.5,232.9 98,233.2 97.5,232.5 97,232.6 96.5,232.1 96,232.7 95.5,232.1 95,232.2 94.5,232.3 94,232.2 93.5,232.8 93,232.7 92.5,232.7 92,232.9 91.5,232.2 91,232.9 90.5,232.9 90,232.1 89.5,232.8 89,232.2 88.5,232.6 88,232.3 87.5,232.3 87,232.6 86.5,232.4 86,232.3 85.5,232.2 85,232.8 84.5,232.1 84,232.9 83.5,232.8 83,232.6 82.5,232.1 82,232.2 81.5,232.2 81,232.0 80.5,232.6 80,232.4 79.5,233.0 79,232.9 78.5,232.0 78,232.6 77.5,232.1 77,232.6 76.5,232.0 76,232.2 75.5,232.0 75,232.5 74.5,232.2 74,232.6 73.5,232.5 73,232.1 72.5,232.7 72,232.5 71.5,232.8 71,232.3 70.5,233.0 70,232.7 69.5,232.0 69,232.1 68.5,232.8 68,232.4 67.5,232.4 67,232.6 66.5,231.9 66,232.3 65.5,232.6 65,232.1 64.5,232.2 64,232.6 63.5,232.3 63,232.2 62.5,231.9 62,232.3 61.5,232.0 61,231.8 60.5,231.8 60,231.9 59.5,232.1 59,232.2 58.5,232.3 58,231.9 57.5,232.1 57,231.8 56.5,231.9 56,232.4 55.5,231.9 55,231.9 54.5,232.0 54,231.9 53.5,231.9 53,232.1 52.5,232.2 52,231.9 51.5,231.7 51,232.2 50.5,232.0 50,232.2 49.5,231.6 49,231.9 48.5,231.5 48,231.5 47.5,231.8 47,231.6 46.5,231.7 46,231.5 45.5,231.6 45,231.5 44.5,231.7 44,231.5 43.5,231.8 43,231.5 42.5,231.5 42,231.6 41.5,231.5 41,231.5 40.5,231.5 40,231.5 39.5,231.5 39,231.5 38.5,231.6 38,231.5 37.5,231.5 37,231.5 36.5,231.5 36,231.5 35.5,231.6 35,231.6 34.5,231.5 34,231.5 33.5,231.5 33,231.5 32.5,231.5 32,231.5 31.5,231.5 31,231.5 30.5,231.5 30,231.5 29.5,231.5 29,231.6 28.5,231.5 28,231.5 27.5,231.5 27,231.5 26.5,231.5 26,231.5Z" fill="#484848" fill-opacity="0.9"/>
<path d="M26,365.5 26.5,365.5 27,365.5 27.5,365.5 28,365.5 28.5,365.5 29,365.5 29.5,365.5 30,365.5 30.5,365.4 31,365.5 31.5,365.5 32,365.5 32.5,365.5 33,365.5 33.5,365.4 34,365.5 34.5,365.5 35,365.5 35.5,365.5 36,365.5 36.5,365.4 37,365.5 37.5,365.5 38,365.4 38.5,365.5 39,365.5 39.5,365.5 40,365.4 40.5,365.5 41,365.5 41.5,365.5 42,365.5 42.5,365.3 43,365.5 43.5,365.5 44,365.5 44.5,365.5 45,365.3 45.5,365.2 46,365.4 46.5,365.5 47,365.5 47.5,365.3 48,365.2 48.5,365.1 49,365.2 49.5,364.9 50,365.1 50.5,365.3 51,365.3 51.5,365.3 52,364.7 52.5,365.2 53,365.3 53.5,364.9 54,365.4 54.5,364.8 55,364.9 55.5,364.6 56,364.8 56.5,364.7 57,365.2 57.5,365.2 58,365.1 58.5,365.0 59,365.1 59.5,364.9 60,365.4 60.5,364.9 61,365.0 61.5,365.3 62,364.9 62.5,364.9 63,364.5 63.5,364.9 64,364.5 64.5,364.8 65,364.4 65.5,364.5 66,364.3 66.5,364.4 67,364.5 67.5,364.9 68,364.4 68.5,364.6 69,364.2 69.5,364.7 70,364.1 70.5,364.2 71,364.6 71.5,364.4 72,364.8 72.5,364.0 73,364.8 73.5,364.7 74,365.1 74.5,364.8 75,364.7 75.5,365.0 76,364.5 76.5,364.9 77,365.0 77.5,364.2 78,364.6 78.5,364.7 79,364.5 79.5,364.6 80,364.7 80.5,364.3 81,365.0 81.5,364.7 82,364.7 82.5,364.7 83,364.6 83.5,364.4 84,364.0 84.5,364.7 85,364.6 85.5,364.2 86,363.9 86.5,365.0 87,364.1 87.5,364.4 88,365.0 88.5,364.7 89,364.7 89.5,364.3 90,364.8 90.5,364.0 91,364.8 91.5,364.0 92,364.7 92.5,364.4 93,364.1 93.5,364.7 94,364.2 94.5,364.4 95,364.9 95.5,364.8 96,364.6 96.5,364.4 97,363.9 97.5,364.2 98,364.2 98.5,363.7 99,364.7 99.5,364.0 100,364.6 100.5,364.7 101,364.8 101.5,364.1 102,364.2 102.5,363.9 103,363.6 103.5,363.9 104,363.7 104.5,363.8 105,363.2 105.5,362.5 106,362.1 106.5,362.7 107,363.1 107.5,363.5 108,363.8 108.5,364.4 109,363.9 109.5,364.8 110,364.9 110.5,364.3 111,363.9 111.5,364.0 112,363.6 112.5,364.4 113,364.3 113.5,363.7 114,364.2 114.5,364.4 115,363.7 115.5,363.7 116,363.9 116.5,364.7 117,363.7 117.5,364.4 118,364.0 118.5,364.4 119,363.4 119.5,364.0 120,364.0 120.5,363.8 121,364.0 121.5,364.5 122,364.6 122.5,364.3 123,364.1 123.5,364.3 124,364.1 124.5,364.3 125,364.0 125.5,364.8 126,364.3 126.5,364.0 127,364.3 127.5,364.0 128,364.4 128.5,364.2 129,364.6 129.5,364.7 130,364.6 130.5,364.9 131,364.2 131.5,364.1 132,364.5 132.5,363.7 133,364.2 133.5,364.5 134,364.5 134.5,364.0 135,363.8 135.5,364.1 136,363.7 136.5,364.4 137,364.7 137.5,364.2 138,364.5 138.5,363.8 139,363.7 139.5,363.6 140,363.8 140.5,363.9 141,363.5 141.5,364.4 142,364.4 142.5,363.7 143,364.8 143.5,364.6 144,364.6 144.5,364.4 145,364.1 145.5,363.9 146,364.0 146.5,363.9 147,364.1 147.5,363.7 148,364.3 148.5,363.5 149,363.7 149.5,363.8 150,363.4 150.5,363.9 151,364.6 151.5,364.1 152,364.3 152.5,364.2 153,364.3 153.5,364.2 154,364.5 154.5,364.2 155,364.6 155.5,363.8 156,363.5 156.5,364.0 157,364.3 157.5,364.4 158,364.4 158.5,364.3 159,364.4 159.5,363.9 160,364.5 160.5,363.7 161,364.2 161.5,364.3 162,364.3 162.5,364.1 163,364.7 163.5,364.0 164,364.8 164.5,364.1 165,364.5 165.5,364.3 166,364.5 166.5,364.1 167,363.9 167.5,364.2 168,363.8 168.5,363.2 169,364.3 169.5,363.5 170,364.5 170.5,364.0 171,363.6 171.5,364.4 172,364.6 172.5,363.8 173,364.0 173.5,364.0 174,364.1 174.5,364.0 175,363.4 175.5,364.2 176,364.4 176.5,364.5 177,363.6 177.5,364.0 178,364.6 178.5,363.7 179,364.5 179.5,364.5 180,364.6 180.5,363.6 181,363.4 181.5,364.3 182,363.6 182.5,363.7 183,363.0 183.5,363.1 184,363.4 184.5,363.3 185,363.7 185.5,364.3 186,364.3 186.5,364.5 187,364.1 187.5,363.2 188,363.9 188.5,363.5 189,363.8 189.5,364.2 190,363.5 190.5,363.4 191,364.0 191.5,363.6 192,363.8 192.5,363.5 193,364.4 193.5,363.9 194,364.3 194.5,364.8 195,364.3 195.5,363.8 196,364.2 196.5,363.7 197,364.5 197.5,364.5 198,364.1 198.5,364.4 199,364.1 199.5,364.5 200,364.2 200.5,364.1 201,363.6 201.5,364.3 202,363.3 202.5,364.1 203,363.5 203.5,364.3 204,364.0 204.5,363.8 205,363.6 205.5,363.8 206,364.5 206.5,363.6 207,364.5 207.5,363.6 208,363.9 208.5,364.2 209,364.4 209.5,364.0 210,363.5 210.5,363.3 211,364.4 211.5,364.3 212,364.5 212.5,364.3 213,364.2 213.5,364.2 214,364.0 214.5,364.2 215,364.2 215.5,364.4 216,363.8 216.5,363.7 217,363.6 217.5,363.7 218,363.5 218.5,363.0 219,363.8 219.5,364.3 220,363.4 220.5,364.5 221,364.6 221.5,364.3 222,363.4 222.5,363.5 223,363.5 223.5,364.0 224,363.7 224.5,363.8 225,363.4 225.5,363.5 226,363.6 226.5,363.8 227,364.4 227.5,364.5 228,363.8 228.5,363.5 229,364.5 229.5,363.6 230,363.8 230.5,364.5 231,364.5 231.5,364.4 232,364.5 232.5,363.9 233,364.2 233.5,364.7 234,364.6 234.5,364.5 235,364.7 235.5,363.8 236,363.7 236.5,364.2 237,364.4 237.5,364.3 238,363.3 238.5,363.0 239,363.6 239.5,364.4 240,363.9 240.5,364.4 241,363.9 241.5,364.5 242,364.6 242.5,364.6 243,364.1 243.5,363.7 244,363.7 244.5,363.5 245,364.4 245.5,363.2 246,363.5 246.5,363.6 247,363.5 247.5,364.3 248,364.0 248.5,364.6 249,364.0 249.5,363.4 250,363.8 250.5,363.9 251,363.7 251.5,363.9 252,364.3 252.5,363.1 253,362.8 253.5,364.2 254,364.0 254.5,362.9 255,363.3 255.5,363.2 256,364.0 256.5,363.5 257,363.1 257.5,363.9 258,362.7 258.5,362.8 259,363.9 259.5,364.0 260,364.0 260.5,363.8 261,363.9 261.5,363.8 262,364.3 262.5,364.7 263,363.9 263.5,364.4 264,363.5 264.5,364.3 265,364.0 265.5,363.7 266,364.3 266.5,363.3 267,364.4 267.5,363.8 268,364.2 268.5,364.4 269,363.6 269.5,364.5 270,364.4 270.5,363.9 271,364.0 271.5,364.0 272,364.4 272.5,363.6 273,364.1 273.5,363.7 274,364.2 274.5,363.8 275,363.8 275.5,364.4 276,363.7 276.5,363.6 277,364.0 277.5,364.2 278,364.6 278.5,363.5 279,364.0 279.5,363.2 280,363.3 280.5,363.5 281,363.7 281.5,363.7 282,364.4 282.5,363.6 283,364.0 283.5,363.7 284,364.7 284.5,363.7 285,364.0 285.5,363.0 286,363.8 286.5,363.1 287,363.6 287.5,363.7 288,363.6 288.5,363.0 289,363.6 289.5,364.4 290,363.4 290.5,364.3 291,363.9 291.5,363.3 292,363.7 292.5,363.3 293,363.0 293.5,363.0 294,363.7 294.5,363.1 295,363.9 295.5,363.8 296,364.6 296.5,364.0 297,364.1 297.5,363.4 298,363.6 298.5,364.0 299,364.7 299.5,363.3 300,364.5 300.5,364.0 301,363.9 301.5,363.4 302,364.2 302.5,363.1 303,363.7 303.5,363.1 304,364.1 304.5,363.7 305,364.5 305.5,364.2 306,364.1 306.5,363.1 307,363.6 307.5,364.4 308,363.6 308.5,363.1 309,364.4 309.5,363.7 310,364.1 310.5,364.3 311,364.4 311.5,363.8 312,363.7 312.5,364.1 313,364.0 313.5,364.7 314,363.8 314.5,364.6 315,364.3 315.5,364.3 316,363.6 316.5,364.3 317,363.6 317.5,363.6 318,363.4 318.5,364.2 319,363.4 319.5,364.0 320,363.6 320.5,363.4 321,363.8 321.5,362.6 322,364.1 322.5,363.1 323,363.5 323.5,364.2 324,362.9 324.5,363.8 325,364.1 325.5,364.1 326,364.4 326.5,363.3 327,363.5 327.5,364.1 328,363.3 328.5,363.2 329,363.4 329.5,363.8 330,364.3 330.5,362.9 331,364.3 331.5,363.3 332,364.0 332.5,364.0 333,364.4 333.5,363.2 334,364.4 334.5,364.4 335,363.6 335.5,363.7 336,363.0 336.5,363.6 337,363.2 337.5,363.2 338,363.5 338.5,364.1 339,364.1 339.5,363.6 340,364.2 340.5,364.3 341,363.2 341.5,363.3 342,363.8 342.5,363.1 343,364.2 343.5,364.3 344,364.1 344.5,363.2 345,363.1 345.5,363.6 346,364.5 346.5,363.9 347,364.4 347.5,364.3 348,363.8 348.5,364.2 349,364.0 349.5,364.6 350,364.4 350.5,363.5 351,363.7 351.5,363.6 352,364.3 352.5,364.6 353,363.9 353.5,364.2 354,363.4 354.5,363.6 355,363.7 355.5,364.4 356,364.3 356.5,364.2 357,362.6 357.5,364.1 358,364.2 358.5,363.6 359,364.1 359.5,363.6 360,363.9 360.5,363.7 361,363.5 361.5,364.5 362,363.4 362.5,363.8 363,363.5 363.5,362.8 364,363.0 364.5,363.5 365,363.2 365.5,364.3 366,364.2 366.5,364.4 367,364.2 367.5,363.9 368,363.7 368.5,363.1 369,363.8 369.5,364.3 370,363.7 370.5,363.8 371,364.0 371.5,363.4 372,362.6 372.5,363.6 373,363.8 373.5,364.1 374,363.1 374.5,363.9 375,364.4 375.5,363.7 376,364.3 376.5,363.6 377,364.3 377.5,363.0 378,363.9 378.5,363.3 379,363.8 379.5,363.6 380,364.0 380.5,364.0 381,363.8 381.5,364.6 382,364.5 382.5,364.3 383,364.5 383.5,364.2 384,364.3 384.5,363.5 385,364.4 385.5,364.6 386,364.5 386.5,363.8 387,364.3 387.5,364.2 388,364.3 388.5,363.6 389,363.7 389.5,363.5 390,362.9 390.5,364.4 391,363.8 391.5,363.7 392,364.1 392.5,363.7 393,363.4 393.5,363.3 394,364.2 394.5,363.9 395,363.6 395.5,363.6 396,364.0 396.5,364.4 397,364.3 397.5,364.0 398,364.0 398.5,363.2 399,363.5 399.5,363.2 400,364.2 400.5,363.5 401,364.5 401.5,364.4 402,363.5 402.5,363.5 403,364.6 403.5,364.0 404,364.4 404.5,363.2 405,363.8 405.5,362.9 406,362.6 406.5,363.3 407,362.8 407.5,363.6 408,363.0 408.5,364.1 409,363.0 409.5,363.1 410,363.5 410.5,363.4 411,363.4 411.5,364.2 412,363.2 412.5,364.1 413,364.3 413.5,363.0 414,363.0 414.5,363.2 415,363.5 415.5,364.2 416,364.2 416.5,364.3 417,363.9 417.5,364.4 418,364.5 418.5,364.7 419,364.3 419.5,364.1 420,363.0 420.5,363.0 421,363.2 421.5,363.9 422,364.4 422.5,364.2 423,363.8 423.5,363.9 424,364.3 424.5,363.3 425,364.4 425.5,363.5 426,363.4 426.5,364.0 427,363.2 427.5,364.0 428,364.1 428.5,364.2 429,364.4 429.5,363.4 430,364.2 430.5,363.7 431,364.3 431.5,364.5 432,363.2 432.5,364.1 433,363.2 433.5,363.8 434,364.0 434.5,363.1 435,362.9 435.5,363.9 436,363.2 436.5,363.6 437,363.8 437.5,363.6 438,363.9 438.5,363.5 439,363.2 439.5,363.5 440,364.0 440.5,362.6 441,363.6 441.5,363.8 442,362.6 442.5,363.9 443,363.6 443.5,363.9 444,362.7 444.5,363.7 445,363.5 445.5,364.1 446,363.7 446.5,363.6 447,363.9 447.5,363.4 448,364.0 448.5,364.5 449,363.3 449.5,364.3 450,364.0 450.5,364.0 451,364.5 451.5,364.6 452,363.9 452.5,363.6 453,363.2 453.5,363.4 454,364.1 454.5,363.7 455,363.4 455.5,362.9 456,363.5 456.5,364.1 457,364.2 457.5,363.5 458,363.4 458.5,364.3 459,364.4 459.5,364.3 460,364.5 460.5,363.5 461,363.6 461.5,362.8 462,363.3 462.5,364.3 463,364.1 463.5,363.8 464,364.1 464.5,364.4 465,363.4 465.5,363.9 466,364.4 466.5,364.7 467,363.4 467.5,363.8 468,364.0 468.5,364.4 469,364.2 469.5,364.1 470,363.9 470.5,364.2 471,363.6 471.5,364.0 472,364.2 472.5,364.4 473,363.7 473.5,363.2 474,363.6 474.5,363.4 475,363.4 475.5,363.5 476,362.4 476.5,363.5 477,363.6 477.5,363.8 478,363.1 478.5,364.1 479,363.9 479.5,362.9 480,363.6 480.5,363.9 481,363.7 481.5,364.1 482,363.5 482.5,362.8 483,362.9 483.5,363.7 484,363.9 484.5,363.5 485,363.8 485.5,363.5 486,364.0 486.5,364.3 487,364.5 487.5,364.0 488,363.9 488.5,363.0 489,363.2 489.5,363.4 490,363.0 490.5,364.0 491,364.0 491.5,364.0 492,363.5 492.5,364.1 493,363.5 493.5,363.5 494,363.5 494.5,364.1 495,363.1 495.5,363.9 496,364.2 496.5,363.0 497,363.0 497.5,363.1 498,363.5 498.5,363.6 499,364.4 499.5,364.4 500,363.7 500.5,364.2 501,363.7 501.5,364.4 502,364.7 502.5,364.6 503,363.6 503.5,364.2 504,364.2 504.5,363.5 505,363.2 505.5,364.1 506,363.7 506.5,363.7 507,363.8 507.5,363.1 508,363.5 508.5,363.0 509,362.6 509.5,363.9 510,363.4 510.5,362.8 511,364.0 511.5,364.2 512,362.5 512.5,362.8 513,364.0 513.5,363.0 514,363.6 514.5,363.9 515,363.7 515.5,364.0 516,363.2 516.5,363.2 517,363.1 517.5,364.1 518,363.0 518.5,362.8 519,363.9 519.5,363.7 520,364.0 520.5,363.6 521,363.3 521.5,363.2 522,364.2 522.5,363.0 523,363.5 523.5,363.0 524,363.2 524.5,363.4 525,363.5 525.5,362.9 526,363.3 526.5,363.4 527,363.2 527.5,363.7 528,364.1 528.5,363.6 529,363.5 529.5,363.2 530,363.4 530.5,363.2 531,364.1 531.5,363.7 532,363.8 532.5,364.2 533,364.2 533.5,363.3 534,364.2 534.5,364.7 535,364.5 535.5,364.7 536,364.2 536.5,364.2 537,363.7 537.5,363.6 538,363.3 538.5,363.4 539,363.0 539.5,363.4 540,363.7 540.5,363.6 541,363.7 541.5,363.7 542,363.4 542.5,363.8 543,363.4 543.5,363.2 544,363.6 544.5,362.9 545,362.7 545.5,363.9 546,362.4 546.5,362.6 547,363.1 547.5,363.5 548,363.6 548.5,363.3 549,363.0 549.5,364.4 550,364.5 550.5,363.6 551,362.8 551.5,364.0 552,363.4 552.5,363.3 553,364.0 553.5,364.3 554,363.5 554.5,363.4 555,364.0 555.5,363.4 556,363.5 556.5,363.8 557,363.0 557.5,363.9 558,363.9 558.5,363.7 559,363.7 559.5,363.6 560,363.0 560.5,364.1 561,363.5 561.5,362.8 562,363.1 562.5,363.7 563,363.4 563.5,363.3 564,363.3 564.5,363.0 565,363.9 565.5,364.0 566,363.6 566.5,362.7 567,363.7 567.5,363.3 568,364.1 568.5,364.3 569,363.5 569.5,363.9 570,363.7 570.5,364.7 571,363.8 571.5,364.4 572,363.8 572.5,363.5 573,364.2 573.5,363.4 574,363.5 574.5,362.9 575,364.1 575.5,364.3 576,364.1 576.5,363.9 577,364.0 577.5,363.9 578,362.8 578.5,362.6 579,363.1 579.5,363.5 580,363.1 580.5,362.7 581,363.7 581.5,362.6 582,363.0 582.5,363.0 583,363.6 583.5,363.8 584,363.3 584.5,364.2 585,363.1 585.5,364.1 586,364.4 586.5,363.6 587,363.3 587.5,362.6 588,363.7 588.5,363.9 589,363.8 589.5,363.8 590,363.3 590.5,363.1 591,364.0 591.5,363.3 592,362.9 592.5,362.9 593,362.6 593.5,363.9 594,363.3 594.5,362.7 595,362.9 595.5,363.6 596,363.6 596.5,363.7 597,363.0 597.5,363.8 598,363.8 598.5,364.4 599,363.6 599.5,363.8 600,363.8 600.5,363.4 601,363.7 601.5,363.5 602,362.8 602.5,363.9 603,364.2 603.5,363.4 604,363.6 604.5,364.1 605,364.7 605.5,364.5 606,364.0 606.5,364.1 607,363.6 607.5,363.1 608,363.1 608.5,363.6 609,364.2 609.5,363.3 610,363.7 610.5,364.1 611,364.0 611.5,363.0 612,364.4 612.5,363.7 613,363.7 613.5,363.1 614,363.9 614.5,362.6 615,362.9 615.5,363.3 616,363.3 616.5,364.1 617,363.5 617.5,363.6 618,363.8 618.5,363.7 619,363.9 619.5,363.4 620,363.6 620.5,364.3 621,363.7 621.5,364.4 622,363.4 622.5,363.4 623,363.0 623.5,363.6 624,364.2 624.5,364.3 625,363.6 625.5,363.5 626,363.0 626.5,362.6 627,364.0 627.5,362.9 628,363.4 628.5,362.6 629,362.9 629.5,363.2 630,362.8 630.5,362.4 631,363.5 631.5,363.5 632,363.0 632.5,362.8 633,362.9 633.5,363.5 634,364.2 634.5,363.6 635,363.8 635.5,363.8 636,362.8 636.5,363.7 637,364.0 637.5,363.9 638,363.8 638.5,364.4 639,363.9 639.5,364.0 640,364.0 640.5,363.3 641,363.9 641.5,364.2 642,362.9 642.5,364.0 643,362.8 643.5,363.9 644,362.6 644.5,362.5 645,362.6 645.5,363.5 646,363.5 646.5,364.1 647,363.9 647.5,364.3 648,364.3 648.5,363.9 649,363.0 649.5,363.2 650,362.7 650.5,363.5 651,363.5 651.5,363.1 652,363.5 652.5,363.4 653,363.6 653.5,363.1 654,364.5 654.5,364.2 655,363.3 655.5,363.5 656,362.9 656.5,363.6 657,362.9 657.5,363.1 658,363.9 658.5,363.5 659,363.8 659.5,362.8 660,363.3 660.5,364.3 661,364.2 661.5,362.6 662,363.1 662.5,363.6 663,363.4 663.5,362.8 664,363.8 664.5,362.3 665,363.4 665.5,362.8 666,364.1 666.5,363.0 667,362.9 667.5,363.2 668,364.0 668.5,362.8 669,363.7 669.5,362.9 670,364.0 670.5,363.6 671,363.1 671.5,362.5 672,362.8 672.5,364.4 673,364.2 673.5,363.8 674,363.6 674.5,364.2 675,364.0 675.5,363.6 676,363.4 676.5,363.6 677,363.0 677.5,362.7 678,362.5 678.5,364.0 679,363.1 679.5,363.6 680,363.6 680.5,362.9 681,363.5 681.5,364.4 682,364.5 682.5,363.4 683,364.1 683.5,363.3 684,363.5 684.5,363.1 685,363.7 685.5,364.1 686,363.0 686.5,363.2 687,363.0 687.5,363.3 688,364.4 688.5,363.3 689,363.8 689.5,364.2 690,363.7 690.5,363.9 691,363.2 691.5,363.0 692,362.2 692.5,362.4 693,363.9 693.5,362.7 694,362.7 694.5,363.9 695,362.5 695.5,363.7 696,363.0 696.5,362.8 697,363.2 697.5,364.0 698,363.1 698.5,363.7 699,363.1 699.5,364.0 700,362.4 700.5,363.3 701,362.8 701.5,364.1 702,363.1 702.5,363.5 703,363.4 703.5,363.8 704,364.0 704.5,363.4 705,363.9 705.5,364.1 706,363.9 706.5,362.5 707,362.4 707.5,364.0 708,363.2 708.5,363.5 709,364.3 709.5,364.1 710,363.1 710.5,363.6 711,363.4 711.5,363.3 712,362.5 712.5,362.7 713,362.7 713.5,363.4 714,363.0 714.5,363.7 715,362.9 715.5,363.1 716,363.2 716.5,363.7 717,363.8 717.5,363.5 718,363.6 718.5,363.1 719,364.1 719.5,363.7 720,364.1 720.5,363.2 721,363.4 721.5,364.1 722,364.0 722.5,364.1 723,364.1 723.5,363.8 724,363.6 724.5,363.7 725,363.2 725.5,363.4 726,364.3 726.5,363.9 727,363.6 727.5,363.8 728,363.5 728.5,362.2 729,363.2 729.5,364.0 730,362.6 730.5,364.0 731,363.3 731.5,363.7 732,364.1 732.5,363.9 733,363.2 733.5,363.5 734,363.4 734.5,363.3 735,363.8 735.5,363.9 736,363.0 736.5,362.6 737,363.9 737.5,363.5 738,363.6 738.5,363.3 739,363.4 739.5,362.6 740,363.8 740.5,362.7 741,363.1 741.5,362.9 742,364.1 742.5,364.0 743,363.5 743.5,362.7 744,362.9 744.5,364.1 745,362.7 745.5,363.1 746,363.0 746.5,362.7 747,364.0 747.5,363.7 748,363.9 748.5,363.0 749,363.3 749.5,363.6 750,362.5 750.5,362.9 751,363.4 751.5,363.9 752,363.7 752.5,363.7 753,363.7 753.5,363.4 754,363.4 754.5,363.5 755,363.9 755.5,363.4 756,364.3 756.5,363.7 757,364.2 757.5,363.2 758,363.4 758.5,363.4 759,363.8 759.5,363.4 760,363.6 760.5,364.0 761,363.2 761.5,363.8 762,362.2 762.5,363.5 763,363.4 763.5,363.8 764,362.8 764.5,363.4 765,363.8 765.5,362.9 766,363.0 766.5,363.6 767,362.6 767.5,363.3 768,363.6 768.5,362.7 769,362.5 769.5,363.7 770,363.1 770.5,363.6 771,363.2 771.5,363.8 772,363.0 772.5,363.0 773,363.9 773.5,363.4 774,363.1 774.5,363.8 775,362.6 775.5,362.2 776,363.4 776.5,363.9 777,363.3 777.5,363.7 778,364.0 778.5,364.0 779,363.8 779.5,363.5 780,363.1 780.5,363.6 781,363.9 781.5,362.7 782,362.6 782.5,362.1 783,363.9 783.5,362.2 784,362.5 784.5,363.4 785,363.4 785.5,363.2 786,363.6 786.5,364.0 787,363.7 787.5,363.1 788,363.9 788.5,363.5 789,363.3 789.5,363.5 790,363.3 790.5,363.1 791,362.8 791.5,363.9 792,363.5 792.5,363.5 793,364.0 793.5,364.4 794,363.2 794.5,363.6 795,363.8 795.5,364.1 796,364.1 796.5,362.1 797,362.5 797.5,362.2 798,362.2 798.5,363.7 799,363.5 799.5,362.4 800,363.5 800.5,362.7 801,362.6 801.5,363.0 802,362.7 802.5,362.9 803,362.3 803.5,363.7 804,362.3 804.5,363.5 805,364.1 805.5,363.5 806,363.3 806.5,363.3 807,364.2 807.5,364.0 808,363.7 808.5,362.5 809,364.0 809.5,363.9 810,363.5 810.5,363.6 811,363.2 811.5,363.8 812,363.7 812.5,363.1 813,363.6 813.5,363.5 814,362.9 814.5,362.7 815,363.8 815.5,362.4 816,363.6 816.5,362.4 817,363.8 817.5,362.7 818,361.6 818.5,363.4 819,364.0 819.5,362.4 820,363.2 820.5,362.9 821,364.0 821.5,364.2 822,363.8 822.5,364.4 823,364.3 823.5,363.2 824,362.5 824.5,363.2 825,363.8 825.5,364.3 826,362.9 826.5,363.8 827,363.0 827.5,363.2 828,363.9 828.5,363.2 829,363.6 829.5,363.9 830,363.3 830.5,362.7 831,364.0 831.5,362.4 832,362.8 832.5,362.0 833,362.0 833.5,362.3 834,362.5 834.5,364.2 835,362.7 835.5,362.6 836,362.9 836.5,362.7 837,363.6 837.5,363.4 838,363.0 838.5,363.6 839,363.6 839.5,364.0 840,362.5 840.5,363.2 841,364.0 841.5,363.0 842,363.1 842.5,363.5 843,364.0 843.5,364.2 844,363.7 844.5,363.0 845,363.0 845.5,362.2 846,362.3 846.5,363.8 847,362.8 847.5,362.5 848,363.4 848.5,362.5 849,364.0 849.5,363.8 850,363.3 850.5,363.3 851,363.5 851.5,363.0 852,362.6 852.5,363.9 853,362.1 853.5,362.1 854,361.8 854.5,362.9 855,364.2 855.5,362.9 856,363.3 856.5,363.8 857,364.3 857.5,363.2 858,363.9 858.5,364.1 859,364.0 859.5,363.9 860,363.9 860.5,363.1 861,364.0 861.5,363.9 862,364.0 862.5,363.1 863,364.1 863.5,362.6 864,363.6 864.5,364.1 865,362.9 865.5,362.8 866,362.8 866.5,362.1 867,362.4 867.5,363.5 868,363.4 868.5,363.2 869,363.2 869.5,363.2 870,362.8 870.5,364.3 871,363.9 871.5,362.5 872,363.6 872.5,363.6 873,362.7 873.5,363.5 874,362.8 874.5,363.5 875,363.6 875.5,363.5 876,363.5 876.5,363.5 877,362.9 877.5,363.8 878,363.0 878.5,363.1 879,362.0 879.5,362.4 880,362.1 880.5,362.3 881,362.8 881.5,363.1 882,361.7 882.5,363.3 883,361.9 883.5,363.1 884,362.9 884.5,362.7 885,362.9 885.5,362.4 886,362.5 886.5,362.8 887,362.3 887.5,361.8 888,363.5 888.5,362.2 889,361.8 889.5,362.5 890,363.2 890.5,363.9 891,362.5 891.5,362.6 892,362.8 892.5,363.3 893,363.1 893.5,362.6 894,362.3 894.5,363.6 895,363.1 895.5,361.9 896,362.5 896.5,363.4 897,362.0 897.5,362.4 898,362.0 898.5,363.6 899,362.0 899.5,363.6 900,361.8 900.5,362.9 901,362.5 901.5,361.6 902,361.2 902.5,363.3 903,362.6 903.5,362.7 904,362.1 904.5,361.8 905,362.9 905.5,363.7 906,363.1 906.5,362.5 907,363.5 907.5,361.9 908,362.0 908.5,362.3 909,363.1 909.5,362.1 910,362.0 910.5,363.5 911,363.2 911.5,362.8 912,364.0 912.5,362.7 913,362.4 913.5,363.1 914,362.8 914.5,361.2 915,361.8 915.5,361.8 916,362.6 916.5,362.2 917,362.6 917.5,363.0 918,362.6 918.5,363.2 919,363.1 919.5,362.8 920,363.1 920.5,363.2 921,362.9 921.5,363.1 922,361.1 922.5,362.2 923,363.0 923.5,363.1 924,361.7 924.5,362.8 925,361.5 925.5,363.0 926,362.5 926.5,363.4 927,363.0 927.5,362.7 928,362.8 928.5,361.3 929,363.3 929.5,362.6 930,363.1 930.5,361.6 931,360.9 931.5,360.9 932,363.3 932.5,361.6 933,363.2 933.5,362.9 934,362.7 934.5,361.5 935,362.8 935.5,362.7 936,361.7 936.5,363.0 937,362.6 937.5,363.0 938,362.2 938.5,362.2 939,363.2 939.5,363.5 940,363.6 940.5,362.6 941,362.4 941.5,363.8 942,363.2 942.5,363.8 943,361.6 943.5,363.7 944,361.7 944.5,361.9 945,360.9 945.5,362.0 946,357.1 946.5,358.6 947,359.1 947.5,355.7 948,358.4 948.5,353.3 949,354.4 949.5,350.4 950,353.1 950.5,351.8 951,352.6 951.5,345.2 952,343.8 952.5,348.5 953,345.5 953.5,344.9 954,346.4 954.5,346.7 955,351.5 955.5,351.0 956,349.1 956.5,348.0 957,347.3 957.5,347.6 958,343.0 958.5,349.9 959,344.8 959.5,352.8 960,343.8 960.5,345.8 961,350.4 961.5,344.9 962,349.8 962.5,351.5 963,344.2 963.5,337.3 964,348.0 964.5,345.5 965,349.1 965.5,340.8 966,347.1 966.5,345.6 967,343.9 967.5,351.6 968,348.5 968.5,346.7 969,351.7 969.5,346.7 970,346.5 970.5,339.7 971,341.3 971.5,351.8 972,345.9 972.5,349.4 973,345.9 973.5,345.9 974,350.1 974.5,353.0 975,351.0 975.5,354.9 976,354.9 976.5,352.1 977,352.6 977.5,351.4 978,348.9 978.5,354.7 979,355.0 979.5,349.9 980,355.8 980.5,356.5 981,351.2 981.5,350.7 982,353.6 982.5,353.6 983,353.4 983.5,355.1 984,352.2 984.5,353.9 985,353.3 985.5,345.1 986,346.0 986.5,351.4 987,350.2 987.5,355.7 988,348.4 988.5,347.8 989,355.9 989.5,352.6 990,350.4 990.5,356.4 991,353.4 991.5,354.1 992,354.4 992.5,354.9 993,352.0 993.5,352.7 994,354.0 994.5,353.6 995,352.4 995.5,358.3 996,355.2 996.5,353.1 997,351.8 997.5,352.4 998,357.7 998.5,358.0 999,352.6 999.5,352.3 1000,353.0 1000,377.2 999.5,379.0 999,375.9 998.5,378.5 998,379.5 997.5,381.1 997,377.8 996.5,379.4 996,372.9 995.5,376.0 995,378.2 994.5,380.9 994,376.1 993.5,377.0 993,374.6 992.5,376.6 992,378.9 991.5,383.3 991,375.5 990.5,376.9 990,377.2 989.5,381.7 989,381.3 988.5,380.6 988,378.8 987.5,384.2 987,382.1 986.5,384.5 986,382.2 985.5,383.9 985,386.2 984.5,376.9 984,383.8 983.5,378.9 983,379.2 982.5,378.4 982,383.0 981.5,380.0 981,377.1 980.5,381.3 980,377.5 979.5,382.4 979,379.3 978.5,381.8 978,380.3 977.5,378.2 977,382.1 976.5,378.0 976,376.4 975.5,375.5 975,378.6 974.5,380.0 974,382.4 973.5,383.4 973,386.2 972.5,386.7 972,378.6 971.5,385.1 971,388.7 970.5,383.2 970,391.9 969.5,387.4 969,382.8 968.5,386.9 968,391.7 967.5,386.1 967,385.5 966.5,383.2 966,384.1 965.5,395.9 965,389.7 964.5,395.0 964,382.4 963.5,383.5 963,388.9 962.5,387.9 962,383.6 961.5,382.8 961,391.6 960.5,380.6 960,380.2 959.5,381.4 959,380.2 958.5,383.9 958,394.2 957.5,384.0 957,389.5 956.5,386.6 956,384.1 955.5,385.9 955,378.5 954.5,386.3 954,384.7 953.5,387.5 953,386.7 952.5,384.9 952,383.6 951.5,387.1 951,385.6 950.5,385.3 950,377.5 949.5,379.2 949,376.7 948.5,379.7 948,374.2 947.5,373.5 947,373.7 946.5,374.7 946,372.3 945.5,373.4 945,369.2 944.5,369.1 944,369.1 943.5,368.6 943,368.8 942.5,368.4 942,368.3 941.5,369.3 941,369.0 940.5,369.3 940,369.5 939.5,368.1 939,369.6 938.5,369.7 938,370.5 937.5,369.9 937,369.9 936.5,369.4 936,369.4 935.5,370.1 935,370.0 934.5,368.7 934,369.8 933.5,369.1 933,370.1 932.5,368.7 932,369.5 931.5,369.7 931,370.9 930.5,370.4 930,370.3 929.5,369.1 929,369.5 928.5,369.5 928,369.0 927.5,368.7 927,368.9 926.5,370.1 926,368.6 925.5,370.1 925,369.2 924.5,369.6 924,370.3 923.5,369.5 923,370.5 922.5,371.5 922,368.7 921.5,369.4 921,370.8 920.5,368.9 920,369.1 919.5,370.3 919,369.7 918.5,370.5 918,370.3 917.5,369.3 917,371.2 916.5,369.2 916,369.5 915.5,371.0 915,369.3 914.5,370.4 914,369.7 913.5,368.8 913,370.2 912.5,369.6 912,369.3 911.5,369.7 911,369.6 910.5,368.6 910,370.4 909.5,368.4 909,369.1 908.5,368.6 908,369.0 907.5,369.1 907,368.2 906.5,369.8 906,369.4 905.5,368.7 905,369.2 904.5,369.8 904,368.2 903.5,368.9 903,370.1 902.5,369.2 902,369.2 901.5,371.0 901,369.8 900.5,369.6 900,368.4 899.5,370.3 899,368.8 898.5,369.6 898,369.5 897.5,368.3 897,370.1 896.5,369.1 896,369.4 895.5,370.4 895,368.4 894.5,370.4 894,370.0 893.5,370.0 893,370.0 892.5,369.8 892,369.7 891.5,368.2 891,368.2 890.5,369.3 890,368.3 889.5,369.5 889,369.8 888.5,369.7 888,369.3 887.5,370.7 887,371.1 886.5,370.0 886,370.1 885.5,369.8 885,370.1 884.5,368.5 884,370.0 883.5,368.8 883,369.0 882.5,369.3 882,369.3 881.5,369.7 881,370.7 880.5,370.0 880,369.8 879.5,369.8 879,368.2 878.5,369.3 878,368.6 877.5,369.7 877,368.7 876.5,369.2 876,367.9 875.5,367.9 875,369.0 874.5,369.7 874,369.9 873.5,368.6 873,368.7 872.5,369.8 872,369.0 871.5,369.4 871,368.7 870.5,368.8 870,368.8 869.5,369.1 869,369.4 868.5,369.1 868,368.4 867.5,368.7 867,368.2 866.5,369.9 866,370.0 865.5,369.6 865,368.1 864.5,369.5 864,368.1 863.5,369.1 863,368.0 862.5,368.8 862,369.3 861.5,368.4 861,368.6 860.5,368.4 860,368.2 859.5,369.2 859,368.3 858.5,368.2 858,368.8 857.5,367.9 857,369.0 856.5,367.9 856,369.1 855.5,368.3 855,368.9 854.5,368.8 854,368.2 853.5,368.7 853,369.1 852.5,368.5 852,368.2 851.5,369.3 851,368.9 850.5,368.8 850,368.2 849.5,368.2 849,368.9 848.5,368.6 848,368.3 847.5,369.6 847,370.2 846.5,369.8 846,368.3 845.5,369.0 845,370.1 844.5,369.8 844,369.4 843.5,368.8 843,367.8 842.5,367.9 842,367.7 841.5,369.5 841,368.6 840.5,368.3 840,368.5 839.5,368.7 839,370.0 838.5,368.3 838,368.1 837.5,369.4 837,368.2 836.5,368.5 836,368.4 835.5,368.7 835,369.4 834.5,368.5 834,369.0 833.5,368.3 833,370.2 832.5,369.6 832,368.5 831.5,369.3 831,368.2 830.5,369.3 830,368.8 829.5,367.8 829,368.3 828.5,367.7 828,368.8 827.5,367.7 827,367.8 826.5,368.2 826,367.8 825.5,369.3 825,369.1 824.5,368.9 824,368.9 823.5,369.3 823,368.1 822.5,368.6 822,368.0 821.5,368.1 821,368.0 820.5,368.3 820,369.2 819.5,368.0 819,368.0 818.5,369.0 818,369.9 817.5,369.7 817,369.8 816.5,369.2 816,368.3 815.5,369.6 815,368.5 814.5,369.4 814,369.5 813.5,368.2 813,369.0 812.5,369.9 812,370.0 811.5,369.7 811,368.9 810.5,369.1 810,368.3 809.5,369.5 809,368.4 808.5,368.0 808,368.2 807.5,368.0 807,368.6 806.5,367.9 806,368.5 805.5,368.3 805,368.6 804.5,368.8 804,369.8 803.5,369.9 803,369.5 802.5,369.9 802,368.1 801.5,368.7 801,369.1 800.5,367.9 800,368.0 799.5,368.1 799,368.0 798.5,367.9 798,369.3 797.5,369.6 797,368.5 796.5,369.7 796,368.4 795.5,368.4 795,368.8 794.5,368.4 794,367.7 793.5,367.9 793,367.5 792.5,367.5 792,367.7 791.5,368.9 791,368.3 790.5,369.5 790,369.4 789.5,368.3 789,368.5 788.5,369.1 788,367.8 787.5,368.0 787,368.2 786.5,368.4 786,368.4 785.5,369.3 785,368.3 784.5,369.8 784,369.7 783.5,369.4 783,369.8 782.5,368.2 782,369.2 781.5,368.9 781,369.1 780.5,369.5 780,367.9 779.5,369.6 779,368.5 778.5,369.0 778,368.0 777.5,368.4 777,369.7 776.5,368.5 776,368.2 775.5,369.5 775,368.6 774.5,367.8 774,368.9 773.5,368.8 773,367.9 772.5,369.3 772,368.8 771.5,368.4 771,367.9 770.5,368.7 770,368.6 769.5,368.8 769,369.8 768.5,368.5 768,368.7 767.5,368.4 767,368.9 766.5,369.7 766,368.9 765.5,368.4 765,368.9 764.5,369.6 764,368.5 763.5,368.6 763,369.4 762.5,368.4 762,368.8 761.5,369.4 761,368.6 760.5,368.6 760,368.4 759.5,368.8 759,367.8 758.5,367.9 758,368.4 757.5,368.5 757,367.5 756.5,368.9 756,369.2 755.5,368.6 755,368.3 754.5,367.8 754,368.2 753.5,368.0 753,368.5 752.5,369.0 752,368.9 751.5,368.2 751,367.7 750.5,367.9 750,367.8 749.5,368.8 749,368.8 748.5,369.0 748,368.1 747.5,368.5 747,368.2 746.5,368.9 746,368.6 745.5,369.1 745,369.2 744.5,367.9 744,367.8 743.5,368.8 743,368.8 742.5,368.7 742,369.5 741.5,368.3 741,369.1 740.5,368.1 740,368.2 739.5,368.0 739,368.1 738.5,367.5 738,369.0 737.5,368.5 737,368.1 736.5,368.0 736,369.3 735.5,368.0 735,368.4 734.5,368.9 734,369.9 733.5,369.7 733,368.8 732.5,368.7 732,368.2 731.5,368.2 731,367.9 730.5,369.0 730,369.1 729.5,368.7 729,368.7 728.5,368.9 728,369.5 727.5,369.4 727,368.8 726.5,368.6 726,368.6 725.5,369.0 725,368.0 724.5,367.9 724,368.6 723.5,368.2 723,367.6 722.5,368.2 722,368.7 721.5,367.7 721,369.0 720.5,368.5 720,369.0 719.5,368.7 719,369.3 718.5,368.3 718,368.7 717.5,368.1 717,367.9 716.5,367.9 716,368.5 715.5,368.5 715,367.9 714.5,368.2 714,369.0 713.5,369.9 713,369.7 712.5,368.8 712,369.5 711.5,367.9 711,368.4 710.5,368.8 710,369.3 709.5,369.1 709,367.9 708.5,368.7 708,368.0 707.5,369.1 707,368.3 706.5,368.7 706,368.9 705.5,368.7 705,368.8 704.5,369.4 704,369.1 703.5,368.3 703,367.7 702.5,368.4 702,367.9 701.5,369.4 701,368.6 700.5,368.8 700,368.3 699.5,369.6 699,368.9 698.5,369.1 698,368.6 697.5,369.0 697,369.5 696.5,367.9 696,368.8 695.5,368.4 695,369.0 694.5,369.0 694,368.2 693.5,369.4 693,369.7 692.5,369.5 692,369.6 691.5,368.2 691,369.1 690.5,368.7 690,368.8 689.5,368.5 689,368.4 688.5,367.9 688,368.5 687.5,368.6 687,368.0 686.5,368.8 686,369.0 685.5,369.3 685,368.3 684.5,367.9 684,368.8 683.5,369.1 683,368.5 682.5,368.9 682,367.8 681.5,368.9 681,369.2 680.5,368.7 680,369.4 679.5,368.2 679,369.1 678.5,368.6 678,368.0 677.5,368.0 677,368.8 676.5,369.3 676,368.8 675.5,367.6 675,368.9 674.5,367.9 674,368.5 673.5,368.1 673,367.9 672.5,368.3 672,367.9 671.5,369.4 671,367.8 670.5,368.1 670,368.4 669.5,367.9 669,368.6 668.5,368.3 668,367.7 667.5,368.3 667,368.7 666.5,367.9 666,368.4 665.5,369.8 665,369.5 664.5,368.7 664,369.6 663.5,369.2 663,368.8 662.5,368.5 662,368.3 661.5,368.5 661,368.8 660.5,368.4 660,368.0 659.5,368.1 659,368.5 658.5,368.6 658,369.0 657.5,368.9 657,368.1 656.5,368.1 656,368.1 655.5,367.9 655,367.6 654.5,368.0 654,368.1 653.5,368.6 653,367.8 652.5,368.9 652,368.2 651.5,368.0 651,369.3 650.5,369.0 650,369.2 649.5,368.5 649,367.7 648.5,368.1 648,368.7 647.5,369.0 647,368.5 646.5,367.5 646,368.5 645.5,367.9 645,368.2 644.5,368.5 644,368.9 643.5,369.0 643,368.9 642.5,367.8 642,369.2 641.5,369.1 641,368.0 640.5,368.4 640,367.5 639.5,368.3 639,368.3 638.5,367.8 638,367.6 637.5,368.5 637,368.9 636.5,368.1 636,368.7 635.5,367.8 635,368.0 634.5,369.1 634,368.4 633.5,368.7 633,368.7 632.5,368.4 632,369.0 631.5,369.4 631,368.4 630.5,368.7 630,369.2 629.5,368.9 629,369.4 628.5,369.6 628,368.3 627.5,368.4 627,368.8 626.5,369.0 626,368.6 625.5,367.7 625,368.9 624.5,367.9 624,368.6 623.5,368.9 623,368.1 622.5,368.2 622,368.3 621.5,368.7 621,368.6 620.5,368.2 620,367.7 619.5,368.2 619,367.4 618.5,367.7 618,368.3 617.5,369.2 617,369.2 616.5,368.1 616,367.9 615.5,369.1 615,368.0 614.5,368.0 614,369.0 613.5,367.7 613,368.5 612.5,368.3 612,368.7 611.5,368.7 611,368.1 610.5,368.0 610,368.5 609.5,368.8 609,367.9 608.5,369.0 608,368.0 607.5,367.8 607,367.6 606.5,368.6 606,368.0 605.5,368.5 605,368.2 604.5,368.0 604,367.6 603.5,367.6 603,367.7 602.5,367.7 602,368.3 601.5,367.9 601,368.3 600.5,367.6 600,368.1 599.5,368.3 599,367.8 598.5,368.4 598,368.4 597.5,369.0 597,368.3 596.5,368.4 596,369.4 595.5,369.1 595,368.5 594.5,369.8 594,369.4 593.5,368.1 593,368.4 592.5,367.9 592,368.6 591.5,368.3 591,368.6 590.5,368.5 590,368.8 589.5,369.0 589,369.2 588.5,368.7 588,368.4 587.5,368.8 587,368.9 586.5,368.4 586,367.9 585.5,368.5 585,367.9 584.5,367.8 584,367.8 583.5,368.3 583,367.9 582.5,368.1 582,368.0 581.5,368.8 581,368.8 580.5,368.4 580,367.8 579.5,369.0 579,367.8 578.5,367.9 578,368.6 577.5,368.4 577,368.9 576.5,368.4 576,369.1 575.5,369.0 575,369.3 574.5,368.6 574,368.1 573.5,368.7 573,369.0 572.5,367.8 572,368.9 571.5,367.7 571,367.4 570.5,367.2 570,368.5 569.5,367.7 569,367.8 568.5,367.6 568,368.7 567.5,368.1 567,368.5 566.5,369.1 566,368.8 565.5,368.4 565,367.6 564.5,367.5 564,368.1 563.5,367.7 563,369.0 562.5,367.8 562,367.6 561.5,369.2 561,369.2 560.5,368.0 560,369.1 559.5,369.6 559,368.9 558.5,368.9 558,368.6 557.5,368.5 557,368.3 556.5,367.6 556,368.2 555.5,368.8 555,368.5 554.5,368.6 554,367.8 553.5,368.2 553,367.8 552.5,368.6 552,368.7 551.5,368.9 551,368.0 550.5,367.9 550,368.3 549.5,367.8 549,367.7 548.5,369.0 548,368.6 547.5,368.7 547,367.7 546.5,368.5 546,369.2 545.5,369.4 545,369.7 544.5,368.9 544,368.2 543.5,369.1 543,368.4 542.5,367.8 542,367.7 541.5,368.5 541,368.7 540.5,368.8 540,369.1 539.5,367.8 539,368.8 538.5,368.7 538,367.9 537.5,368.7 537,367.5 536.5,367.6 536,367.5 535.5,367.9 535,367.7 534.5,368.1 534,367.5 533.5,368.6 533,368.8 532.5,367.7 532,368.8 531.5,367.7 531,368.4 530.5,367.9 530,368.5 529.5,368.6 529,368.5 528.5,368.2 528,367.8 527.5,367.8 527,367.8 526.5,368.7 526,367.8 525.5,367.8 525,369.6 524.5,368.0 524,369.2 523.5,368.7 523,367.6 522.5,368.1 522,368.4 521.5,367.7 521,368.4 520.5,368.2 520,367.5 519.5,368.1 519,368.0 518.5,367.9 518,368.8 517.5,369.0 517,368.8 516.5,368.4 516,368.7 515.5,368.4 515,368.3 514.5,368.2 514,368.3 513.5,367.9 513,367.9 512.5,368.3 512,368.2 511.5,369.5 511,369.4 510.5,367.9 510,368.4 509.5,369.0 509,368.2 508.5,367.6 508,368.8 507.5,368.0 507,368.9 506.5,368.4 506,367.5 505.5,368.7 505,368.4 504.5,369.1 504,367.7 503.5,368.4 503,369.0 502.5,368.5 502,367.4 501.5,368.3 501,368.6 500.5,367.5 500,367.5 499.5,367.3 499,368.2 498.5,368.7 498,368.7 497.5,368.0 497,368.8 496.5,368.3 496,367.9 495.5,368.7 495,368.2 494.5,368.6 494,368.7 493.5,367.8 493,367.6 492.5,368.7 492,369.1 491.5,368.2 491,367.7 490.5,368.9 490,367.8 489.5,368.5 489,369.3 488.5,368.7 488,367.9 487.5,368.0 487,367.3 486.5,368.1 486,368.6 485.5,368.0 485,368.2 484.5,368.0 484,368.1 483.5,369.1 483,369.1 482.5,368.0 482,367.7 481.5,367.7 481,368.4 480.5,368.0 480,367.6 479.5,367.7 479,368.7 478.5,367.5 478,369.0 477.5,367.8 477,369.2 476.5,369.3 476,368.3 475.5,369.1 475,369.0 474.5,368.1 474,368.1 473.5,368.7 473,368.2 472.5,368.7 472,367.7 471.5,368.3 471,367.7 470.5,368.5 470,368.9 469.5,368.2 469,368.9 468.5,368.3 468,368.3 467.5,367.9 467,367.4 466.5,367.8 466,367.3 465.5,368.0 465,367.7 464.5,368.1 464,367.4 463.5,368.5 463,368.8 462.5,368.3 462,368.5 461.5,368.7 461,368.8 460.5,367.7 460,368.7 459.5,368.6 459,368.2 458.5,368.2 458,368.5 457.5,368.7 457,368.8 456.5,368.2 456,369.3 455.5,369.3 455,367.7 454.5,367.6 454,368.6 453.5,368.5 453,368.6 452.5,368.6 452,368.4 451.5,368.3 451,367.5 450.5,367.4 450,368.3 449.5,368.3 449,368.9 448.5,367.8 448,368.0 447.5,369.1 447,368.6 446.5,368.9 446,369.0 445.5,367.5 445,368.5 444.5,368.6 444,367.8 443.5,369.0 443,369.1 442.5,367.9 442,369.1 441.5,368.6 441,369.7 440.5,369.5 440,367.8 439.5,368.3 439,368.3 438.5,368.3 438,368.9 437.5,367.9 437,368.4 436.5,368.2 436,367.9 435.5,368.9 435,368.6 434.5,367.7 434,368.9 433.5,368.1 433,368.6 432.5,368.3 432,367.7 431.5,367.6 431,367.7 430.5,367.5 430,367.4 429.5,368.0 429,369.0 428.5,368.5 428,368.3 427.5,368.1 427,367.7 426.5,368.0 426,368.1 425.5,368.7 425,368.1 424.5,368.7 424,368.3 423.5,367.6 423,367.5 422.5,368.5 422,368.0 421.5,367.7 421,368.8 420.5,368.5 420,368.1 419.5,368.7 419,368.7 418.5,367.6 418,367.8 417.5,368.4 417,367.3 416.5,367.9 416,368.2 415.5,368.4 415,368.4 414.5,368.1 414,368.8 413.5,368.6 413,368.9 412.5,368.2 412,368.7 411.5,367.7 411,368.6 410.5,368.4 410,368.9 409.5,367.7 409,367.8 408.5,368.7 408,368.5 407.5,368.4 407,368.6 406.5,368.1 406,368.2 405.5,368.4 405,368.3 404.5,367.8 404,369.0 403.5,368.3 403,368.1 402.5,368.3 402,368.3 401.5,367.7 401,367.9 400.5,367.9 400,368.1 399.5,367.8 399,368.0 398.5,368.2 398,368.2 397.5,368.1 397,368.7 396.5,367.4 396,367.9 395.5,368.7 395,367.9 394.5,368.4 394,367.7 393.5,368.8 393,368.0 392.5,369.1 392,368.1 391.5,367.7 391,368.1 390.5,367.6 390,368.5 389.5,367.5 389,368.4 388.5,368.1 388,367.5 387.5,367.9 387,368.5 386.5,367.5 386,368.3 385.5,367.9 385,368.1 384.5,368.7 384,368.8 383.5,368.4 383,367.9 382.5,368.2 382,367.7 381.5,368.4 381,368.2 380.5,368.1 380,367.6 379.5,367.9 379,368.7 378.5,368.8 378,369.3 377.5,369.0 377,368.4 376.5,367.9 376,367.8 375.5,368.5 375,368.9 374.5,369.1 374,368.2 373.5,367.7 373,368.1 372.5,369.1 372,369.4 371.5,368.2 371,369.0 370.5,368.8 370,368.6 369.5,368.0 369,368.9 368.5,367.5 368,367.7 367.5,368.6 367,368.3 366.5,368.7 366,367.7 365.5,368.1 365,369.0 364.5,368.5 364,368.5 363.5,368.0 363,368.7 362.5,368.2 362,368.6 361.5,367.6 361,368.5 360.5,368.3 360,368.5 359.5,367.8 359,368.2 358.5,367.7 358,368.4 357.5,368.5 357,369.4 356.5,368.3 356,368.0 355.5,368.7 355,368.7 354.5,368.5 354,368.7 353.5,367.4 353,368.0 352.5,367.7 352,367.8 351.5,368.5 351,368.2 350.5,367.5 350,367.7 349.5,367.6 349,368.2 348.5,367.4 348,368.3 347.5,367.7 347,367.2 346.5,367.5 346,368.3 345.5,367.8 345,367.6 344.5,367.6 344,368.0 343.5,367.9 343,368.4 342.5,368.4 342,368.5 341.5,367.6 341,367.7 340.5,368.2 340,367.6 339.5,368.3 339,368.2 338.5,367.6 338,368.8 337.5,368.1 337,368.3 336.5,369.1 336,367.9 335.5,367.6 335,367.8 334.5,367.8 334,367.5 333.5,368.4 333,367.9 332.5,368.5 332,367.7 331.5,367.7 331,367.7 330.5,368.9 330,368.1 329.5,369.0 329,368.6 328.5,367.7 328,368.1 327.5,368.7 327,368.9 326.5,367.9 326,367.5 325.5,367.8 325,368.7 324.5,368.1 324,368.1 323.5,369.3 323,367.8 322.5,369.3 322,367.9 321.5,369.2 321,368.9 320.5,368.4 320,367.5 319.5,367.5 319,368.4 318.5,367.7 318,368.0 317.5,368.2 317,367.5 316.5,367.5 316,367.5 315.5,368.2 315,368.5 314.5,368.7 314,368.3 313.5,367.8 313,367.8 312.5,367.3 312,367.4 311.5,368.4 311,368.0 310.5,368.3 310,368.2 309.5,368.1 309,369.1 308.5,369.0 308,367.9 307.5,368.8 307,367.8 306.5,368.0 306,368.3 305.5,368.4 305,368.3 304.5,368.0 304,368.2 303.5,369.0 303,367.6 302.5,367.9 302,368.5 301.5,368.0 301,368.1 300.5,368.2 300,368.9 299.5,367.5 299,367.8 298.5,367.8 298,368.4 297.5,368.3 297,368.6 296.5,368.2 296,368.6 295.5,368.8 295,367.8 294.5,368.4 294,368.0 293.5,367.7 293,367.8 292.5,367.9 292,368.8 291.5,369.1 291,369.1 290.5,367.7 290,368.6 289.5,368.6 289,369.1 288.5,368.4 288,369.0 287.5,368.6 287,367.9 286.5,368.8 286,368.8 285.5,368.4 285,367.7 284.5,367.6 284,367.5 283.5,367.7 283,368.1 282.5,368.6 282,368.3 281.5,367.8 281,368.0 280.5,368.6 280,367.4 279.5,368.4 279,368.2 278.5,367.9 278,367.5 277.5,368.1 277,368.4 276.5,367.7 276,368.1 275.5,367.4 275,367.6 274.5,368.9 274,368.1 273.5,369.0 273,368.6 272.5,368.5 272,367.5 271.5,368.1 271,368.7 270.5,368.5 270,367.9 269.5,367.6 269,367.8 268.5,367.4 268,368.3 267.5,368.5 267,368.9 266.5,368.7 266,368.3 265.5,367.8 265,368.3 264.5,368.8 264,367.8 263.5,368.2 263,368.0 262.5,368.1 262,367.6 261.5,367.7 261,368.9 260.5,368.8 260,368.0 259.5,369.1 259,367.9 258.5,369.0 258,368.9 257.5,369.0 257,367.5 256.5,368.4 256,368.7 255.5,368.8 255,368.4 254.5,369.1 254,368.8 253.5,368.5 253,367.7 252.5,368.4 252,367.8 251.5,368.3 251,368.5 250.5,368.5 250,368.5 249.5,367.4 249,368.2 248.5,367.6 248,367.9 247.5,368.3 247,368.4 246.5,367.5 246,367.8 245.5,367.5 245,368.5 244.5,368.5 244,368.0 243.5,368.2 243,368.1 242.5,367.7 242,368.1 241.5,368.0 241,368.7 240.5,367.8 240,368.7 239.5,368.3 239,368.1 238.5,368.9 238,368.4 237.5,368.7 237,367.9 236.5,367.6 236,368.4 235.5,367.9 235,368.4 234.5,367.8 234,367.6 233.5,367.3 233,368.2 232.5,368.3 232,367.9 231.5,368.0 231,367.9 230.5,368.0 230,368.1 229.5,367.4 229,367.5 228.5,367.3 228,367.2 227.5,367.5 227,367.9 226.5,367.6 226,368.2 225.5,369.0 225,367.6 224.5,368.1 224,368.7 223.5,368.0 223,368.4 222.5,368.9 222,367.7 221.5,368.7 221,367.7 220.5,367.6 220,368.6 219.5,368.9 219,369.2 218.5,368.5 218,368.9 217.5,368.7 217,369.1 216.5,368.5 216,368.2 215.5,368.0 215,368.0 214.5,367.9 214,368.1 213.5,368.2 213,367.4 212.5,367.7 212,368.1 211.5,368.2 211,368.6 210.5,367.6 210,368.5 209.5,367.4 209,367.5 208.5,368.3 208,367.9 207.5,368.5 207,367.8 206.5,368.2 206,368.1 205.5,368.6 205,368.6 204.5,368.6 204,368.0 203.5,368.2 203,367.6 202.5,368.3 202,368.1 201.5,368.1 201,368.5 200.5,367.7 200,367.9 199.5,368.0 199,367.4 198.5,368.0 198,367.4 197.5,368.2 197,367.7 196.5,367.5 196,368.3 195.5,367.4 195,368.3 194.5,367.6 194,367.2 193.5,367.4 193,367.3 192.5,367.8 192,367.3 191.5,368.5 191,367.5 190.5,368.7 190,368.2 189.5,369.2 189,369.0 188.5,367.9 188,368.6 187.5,367.9 187,368.7 186.5,368.5 186,367.5 185.5,368.1 185,368.3 184.5,368.4 184,368.2 183.5,368.9 183,368.1 182.5,368.7 182,367.8 181.5,368.6 181,367.9 180.5,367.4 180,367.3 179.5,367.4 179,367.8 178.5,367.8 178,368.4 177.5,367.6 177,368.6 176.5,367.8 176,367.5 175.5,368.3 175,368.7 174.5,368.8 174,367.6 173.5,367.5 173,367.8 172.5,368.0 172,367.9 171.5,367.9 171,367.8 170.5,367.3 170,368.3 169.5,367.7 169,367.9 168.5,367.8 168,368.5 167.5,367.5 167,367.3 166.5,368.1 166,368.2 165.5,367.6 165,367.7 164.5,367.5 164,367.8 163.5,367.5 163,367.5 162.5,368.1 162,368.1 161.5,367.4 161,368.2 160.5,367.2 160,368.1 159.5,367.4 159,368.1 158.5,368.1 158,368.1 157.5,367.9 157,367.6 156.5,368.2 156,367.7 155.5,367.9 155,368.1 154.5,367.9 154,367.9 153.5,367.8 153,367.4 152.5,367.4 152,367.9 151.5,368.2 151,367.4 150.5,367.9 150,368.1 149.5,368.4 149,368.4 148.5,368.2 148,368.7 147.5,367.9 147,368.3 146.5,367.6 146,368.3 145.5,367.5 145,367.7 144.5,368.2 144,367.3 143.5,367.5 143,367.8 142.5,367.5 142,368.0 141.5,367.6 141,367.4 140.5,367.6 140,367.5 139.5,367.8 139,368.7 138.5,368.6 138,368.0 137.5,367.7 137,367.6 136.5,368.5 136,368.0 135.5,368.4 135,368.1 134.5,368.2 134,367.4 133.5,367.7 133,368.7 132.5,368.1 132,367.7 131.5,367.2 131,367.7 130.5,367.1 130,367.2 129.5,367.8 129,367.1 128.5,367.3 128,367.9 127.5,367.4 127,368.1 126.5,368.2 126,367.4 125.5,367.4 125,367.5 124.5,367.6 124,367.7 123.5,368.1 123,367.8 122.5,367.9 122,368.0 121.5,368.5 121,367.7 120.5,368.1 120,368.0 119.5,368.1 119,367.8 118.5,368.1 118,367.6 117.5,368.6 117,367.6 116.5,368.1 116,367.6 115.5,367.3 115,367.5 114.5,368.3 114,367.3 113.5,367.8 113,368.5 112.5,367.7 112,367.7 111.5,367.3 111,367.8 110.5,367.8 110,367.4 109.5,367.3 109,368.3 108.5,368.0 108,368.1 107.5,368.4 107,368.6 106.5,369.1 106,368.6 105.5,369.0 105,369.1 104.5,367.4 104,368.2 103.5,367.4 103,368.4 102.5,368.0 102,367.5 101.5,368.1 101,367.4 100.5,367.5 100,367.4 99.5,367.5 99,367.6 98.5,367.6 98,367.7 97.5,368.1 97,367.9 96.5,367.9 96,367.2 95.5,367.6 95,367.5 94.5,367.6 94,367.5 93.5,367.9 93,367.8 92.5,367.9 92,367.7 91.5,367.5 91,367.8 90.5,367.3 90,367.7 89.5,367.1 89,366.9 88.5,367.5 88,367.8 87.5,367.5 87,367.9 86.5,367.4 86,368.0 85.5,367.4 85,367.6 84.5,368.3 84,367.5 83.5,367.4 83,367.6 82.5,367.9 82,367.1 81.5,367.3 81,367.6 80.5,367.2 80,367.6 79.5,368.0 79,367.4 78.5,367.4 78,367.2 77.5,367.6 77,367.6 76.5,367.2 76,367.1 75.5,367.4 75,367.7 74.5,367.3 74,367.5 73.5,367.8 73,367.4 72.5,367.1 72,367.6 71.5,367.9 71,368.1 70.5,367.1 70,367.2 69.5,367.6 69,367.4 68.5,367.3 68,367.2 67.5,367.5 67,366.9 66.5,367.0 66,367.4 65.5,367.5 65,367.5 64.5,367.4 64,367.4 63.5,367.0 63,367.5 62.5,366.9 62,367.4 61.5,366.9 61,367.2 60.5,366.8 60,367.1 59.5,366.6 59,367.2 58.5,366.7 58,367.4 57.5,366.8 57,367.1 56.5,367.3 56,367.0 55.5,366.8 55,366.8 54.5,367.0 54,366.6 53.5,367.0 53,366.9 52.5,366.8 52,366.7 51.5,367.2 51,367.2 50.5,367.0 50,366.9 49.5,366.7 49,366.6 48.5,367.0 48,366.9 47.5,366.8 47,366.5 46.5,366.7 46,366.5 45.5,366.5 45,366.8 44.5,366.7 44,366.5 43.5,366.6 43,366.7 42.5,366.6 42,366.5 41.5,366.5 41,366.5 40.5,366.5 40,366.5 39.5,366.6 39,366.5 38.5,366.6 38,366.6 37.5,366.5 37,366.5 36.5,366.7 36,366.5 35.5,366.6 35,366.6 34.5,366.5 34,366.5 33.5,366.5 33,366.5 32.5,366.5 32,366.5 31.5,366.6 31,366.6 30.5,366.6 30,366.5 29.5,366.5 29,366.5 28.5,366.5 28,366.5 27.5,366.5 27,366.5 26.5,366.5 26,366.5Z" fill="#484848" fill-opacity="0.9"/>
<path d="M26,230.5 27,230.5 28,230.5 29,230.5 30,230.5 31,230.5 32,230.5 33,230.5 34,230.5 35,230.5 36,230.5 37,230.5 38,230.5 39,230.5 40,230.5 41,230.5 42,230.5 43,230.5 44,230.5 45,230.5 46,230.5 47,230.5 48,230.5 49,230.2 50,230.4 51,230.5 52,230.5 53,230.5 54,230.5 55,230.3 56,230.4 57,230.4 58,230.2 59,230.2 60,230.3 61,230.3 62,230.2 63,230.0 64,229.9 65,230.1 66,230.3 67,230.2 68,230.1 69,230.1 70,230.1 71,230.0 72,230.0 73,230.1 74,230.1 75,230.2 76,229.9 77,229.9 78,229.7 79,229.7 80,230.1 81,229.9 82,229.7 83,229.8 84,229.9 85,229.8 86,229.9 87,229.9 88,230.1 89,230.0 90,230.0 91,229.6 92,230.1 93,229.8 94,229.8 95,230.0 96,229.7 97,229.6 98,229.9 99,229.5 100,229.7 101,230.0 102,230.0 103,230.0 104,229.9 105,229.4 106,229.3 107,229.5 108,229.9 109,229.9 110,229.7 111,229.8 112,229.4 113,229.7 114,229.7 115,229.8 116,229.6 117,229.8 118,229.2 119,229.8 120,229.8 121,229.6 122,230.0 123,229.9 124,229.8 125,229.5 126,229.6 127,229.7 128,229.7 129,229.7 130,229.8 131,229.8 132,229.6 133,229.3 134,229.7 135,229.6 136,229.6 137,229.7 138,229.8 139,229.5 140,229.7 141,229.8 142,229.7 143,230.0 144,229.6 145,229.5 146,229.5 147,229.6 148,229.5 149,229.7 150,229.8 151,229.4 152,229.7 153,229.7 154,229.5 155,229.5 156,229.9 157,229.6 158,229.8 159,229.6 160,229.7 161,229.8 162,229.5 163,229.6 164,229.7 165,229.5 166,229.4 167,229.7 168,229.4 169,229.3 170,229.7 171,230.0 172,229.7 173,229.7 174,229.6 175,229.6 176,229.9 177,229.7 178,229.6 179,229.9 180,229.4 181,229.5 182,229.5 183,229.2 184,229.3 185,229.6 186,229.4 187,229.5 188,229.5 189,229.4 190,229.8 191,229.6 192,229.8 193,229.7 194,229.6 195,229.3 196,229.6 197,229.8 198,229.7 199,229.4 200,229.6 201,229.6 202,229.1 203,229.7 204,229.6 205,229.8 206,230.0 207,229.8 208,229.5 209,229.7 210,229.8 211,229.4 212,229.7 213,229.5 214,229.7 215,229.8 216,229.5 217,229.3 218,229.4 219,229.3 220,229.7 221,229.4 222,229.4 223,229.3 224,229.4 225,229.6 226,229.8 227,229.5 228,229.7 229,229.4 230,229.7 231,229.6 232,229.5 233,229.3 234,229.8 235,229.7 236,229.5 237,229.7 238,229.5 239,229.8 240,229.8 241,229.9 242,229.7 243,229.5 244,229.7 245,229.7 246,229.4 247,229.8 248,229.6 249,229.6 250,229.6 251,229.5 252,229.0 253,229.5 254,229.5 255,229.5 256,229.3 257,229.3 258,229.3 259,229.1 260,229.4 261,229.6 262,229.6 263,229.7 264,229.0 265,229.0 266,229.2 267,229.2 268,229.6 269,229.3 270,229.6 271,229.2 272,229.6 273,229.2 274,229.5 275,229.8 276,229.9 277,229.7 278,229.8 279,229.2 280,229.5 281,229.6 282,229.6 283,229.4 284,229.5 285,229.6 286,229.4 287,229.6 288,229.4 289,229.3 290,229.6 291,229.7 292,229.4 293,229.7 294,229.2 295,229.2 296,229.8 297,229.6 298,229.2 299,229.2 300,228.8 301,229.4 302,229.4 303,229.5 304,229.4 305,229.7 306,229.5 307,229.6 308,229.4 309,229.6 310,229.5 311,229.6 312,229.7 313,229.7 314,229.6 315,229.2 316,229.5 317,229.4 318,229.7 319,229.5 320,229.3 321,229.4 322,229.3 323,229.8 324,229.8 325,229.5 326,229.8 327,229.4 328,229.3 329,229.5 330,229.4 331,229.4 332,229.6 333,229.3 334,229.1 335,229.3 336,228.9 337,229.4 338,229.6 339,229.4 340,229.7 341,229.3 342,229.0 343,229.5 344,229.8 345,229.8 346,229.5 347,229.5 348,229.6 349,229.4 350,229.1 351,229.5 352,229.3 353,229.7 354,229.4 355,229.4 356,229.7 357,229.2 358,229.6 359,229.7 360,229.5 361,229.4 362,229.4 363,229.1 364,229.3 365,229.5 366,229.5 367,229.5 368,229.4 369,229.0 370,229.1 371,229.2 372,229.4 373,229.2 374,229.4 375,229.2 376,229.3 377,229.5 378,229.2 379,229.4 380,229.5 381,229.7 382,229.4 383,229.3 384,229.2 385,229.2 386,229.3 387,229.4 388,229.7 389,229.7 390,229.1 391,229.6 392,229.6 393,229.8 394,229.8 395,229.9 396,229.5 397,229.2 398,229.2 399,229.6 400,229.6 401,229.5 402,229.4 403,229.6 404,229.4 405,229.1 406,229.1 407,229.5 408,229.2 409,229.3 410,229.7 411,229.6 412,229.2 413,229.2 414,229.2 415,229.8 416,229.5 417,229.5 418,229.4 419,229.3 420,229.4 421,229.3 422,229.5 423,229.3 424,229.5 425,229.4 426,229.2 427,229.7 428,229.8 429,229.5 430,229.6 431,229.5 432,229.4 433,229.1 434,229.5 435,229.1 436,229.3 437,229.7 438,229.3 439,229.4 440,229.5 441,229.0 442,229.4 443,229.7 444,229.6 445,229.4 446,229.3 447,229.3 448,229.5 449,229.3 450,229.6 451,229.3 452,229.5 453,229.1 454,229.2 455,229.1 456,229.1 457,229.5 458,229.6 459,229.2 460,229.3 461,229.3 462,229.5 463,229.7 464,229.6 465,229.8 466,229.4 467,229.6 468,229.1 469,229.5 470,229.6 471,229.2 472,229.7 473,229.4 474,229.2 475,229.2 476,229.5 477,229.4 478,229.6 479,229.8 480,229.1 481,229.6 482,229.2 483,229.4 484,229.4 485,229.3 486,229.1 487,229.0 488,228.9 489,229.1 490,228.9 491,229.5 492,229.5 493,229.5 494,229.6 495,229.5 496,229.6 497,229.6 498,229.5 499,229.5 500,229.6 501,229.5 502,229.3 503,229.0 504,229.5 505,229.6 506,229.5 507,229.1 508,229.4 509,229.1 510,229.0 511,229.2 512,229.5 513,229.6 514,229.5 515,229.6 516,229.1 517,229.2 518,229.0 519,229.2 520,229.6 521,229.1 522,229.1 523,229.2 524,229.3 525,229.2 526,229.6 527,229.6 528,229.4 529,229.6 530,229.3 531,229.0 532,229.7 533,229.5 534,229.7 535,229.4 536,229.4 537,229.2 538,229.0 539,229.4 540,229.6 541,229.4 542,229.6 543,229.1 544,229.5 545,229.3 546,229.3 547,229.6 548,229.6 549,229.5 550,229.1 551,229.4 552,229.3 553,229.4 554,229.3 555,229.3 556,229.3 557,229.4 558,229.1 559,228.9 560,229.2 561,229.6 562,229.7 563,229.4 564,229.2 565,229.3 566,229.3 567,229.1 568,229.5 569,229.6 570,229.4 571,229.4 572,229.2 573,229.1 574,229.0 575,229.5 576,229.6 577,229.6 578,229.6 579,229.3 580,229.1 581,229.4 582,229.3 583,229.8 584,229.6 585,229.2 586,228.9 587,228.9 588,228.9 589,229.2 590,228.9 591,228.9 592,228.9 593,228.7 594,229.0 595,229.2 596,229.2 597,229.6 598,229.5 599,229.0 600,229.4 601,229.4 602,229.4 603,229.5 604,229.5 605,229.3 606,229.3 607,229.0 608,228.8 609,229.0 610,229.3 611,229.4 612,229.2 613,229.3 614,229.1 615,229.3 616,229.6 617,229.3 618,229.3 619,229.6 620,228.9 621,229.1 622,229.2 623,228.9 624,229.4 625,229.3 626,229.1 627,229.2 628,229.4 629,228.7 630,229.0 631,229.3 632,229.5 633,229.0 634,229.0 635,228.7 636,228.6 637,229.1 638,228.9 639,228.8 640,229.5 641,228.9 642,228.9 643,229.3 644,229.3 645,229.1 646,229.6 647,229.3 648,229.4 649,229.4 650,229.5 651,229.5 652,229.4 653,229.4 654,229.0 655,229.3 656,229.2 657,229.1 658,229.1 659,228.8 660,228.9 661,229.3 662,228.9 663,228.8 664,229.4 665,228.9 666,229.5 667,229.5 668,229.4 669,229.2 670,228.8 671,228.7 672,229.1 673,229.5 674,229.1 675,228.8 676,228.8 677,229.1 678,229.0 679,229.4 680,229.5 681,229.7 682,229.2 683,229.0 684,229.0 685,229.2 686,229.5 687,229.6 688,229.5 689,229.3 690,228.8 691,229.0 692,229.0 693,229.2 694,229.3 695,229.1 696,228.9 697,229.3 698,229.0 699,229.2 700,229.1 701,229.0 702,229.4 703,229.3 704,228.7 705,228.4 706,229.0 707,229.2 708,228.9 709,229.3 710,229.0 711,228.5 712,229.0 713,229.2 714,229.0 715,229.6 716,229.4 717,229.5 718,229.2 719,229.1 720,228.9 721,229.6 722,229.4 723,229.5 724,229.3 725,228.8 726,229.0 727,228.8 728,228.8 729,229.4 730,229.5 731,228.9 732,229.0 733,229.2 734,229.1 735,229.2 736,229.1 737,229.5 738,229.1 739,229.1 740,228.8 741,228.4 742,228.9 743,228.5 744,229.1 745,229.0 746,229.0 747,228.5 748,228.7 749,228.8 750,229.4 751,229.2 752,229.0 753,229.2 754,229.4 755,229.1 756,228.8 757,229.5 758,228.9 759,229.3 760,229.0 761,228.5 762,229.1 763,229.3 764,228.9 765,229.3 766,229.5 767,228.8 768,228.8 769,229.1 770,229.2 771,229.4 772,229.5 773,228.7 774,228.4 775,228.5 776,228.4 777,228.9 778,228.7 779,228.8 780,229.1 781,228.6 782,228.5 783,228.5 784,229.3 785,229.2 786,229.1 787,229.3 788,229.2 789,229.1 790,228.7 791,229.1 792,229.3 793,228.9 794,229.2 795,228.7 796,228.8 797,229.0 798,229.0 799,229.6 800,229.4 801,229.4 802,229.3 803,228.7 804,229.1 805,229.1 806,228.8 807,229.2 808,229.3 809,228.6 810,228.2 811,228.5 812,228.9 813,228.6 814,229.0 815,229.1 816,229.0 817,229.1 818,229.0 819,229.0 820,229.5 821,228.7 822,228.7 823,229.2 824,228.6 825,228.8 826,229.1 827,229.2 828,229.2 829,229.2 830,229.0 831,228.6 832,228.7 833,228.8 834,229.4 835,229.4 836,228.8 837,229.4 838,229.1 839,228.6 840,229.1 841,229.3 842,229.1 843,228.7 844,229.0 845,228.1 846,228.7 847,228.9 848,228.6 849,228.7 850,228.6 851,228.6 852,228.7 853,229.2 854,229.2 855,228.9 856,228.7 857,228.4 858,229.0 859,228.8 860,228.8 861,228.5 862,228.8 863,228.6 864,229.1 865,228.6 866,228.9 867,228.6 868,229.1 869,229.0 870,229.5 871,229.2 872,228.3 873,228.8 874,229.1 875,228.4 876,229.0 877,229.2 878,228.2 879,228.3 880,228.3 881,228.0 882,228.9 883,229.0 884,228.6 885,228.6 886,228.6 887,227.8 888,228.9 889,228.2 890,228.6 891,228.8 892,228.5 893,227.9 894,228.2 895,228.1 896,227.9 897,228.9 898,228.0 899,227.8 900,228.7 901,228.0 902,228.2 903,228.8 904,229.0 905,228.7 906,229.0 907,228.4 908,228.6 909,228.3 910,228.8 911,228.1 912,228.4 913,228.1 914,228.3 915,227.7 916,228.0 917,228.7 918,228.8 919,228.6 920,228.2 921,228.0 922,228.3 923,227.6 924,228.2 925,228.7 926,228.4 927,228.3 928,227.6 929,227.4 930,227.9 931,228.2 932,228.3 933,228.5 934,228.4 935,228.0 936,227.8 937,227.9 938,228.1 939,229.2 940,228.5 941,228.4 942,228.7 943,227.8 944,228.7 945,226.3 946,224.4 947,222.4 948,220.5 949,219.5 950,216.7 951,218.4 952,218.4 953,214.0 954,214.0 955,214.3 956,210.3 957,211.6 958,207.8 959,209.5 960,209.1 961,204.8 962,204.8 963,202.8 964,202.0 965,203.0 966,209.3 967,205.8 968,206.2 969,212.6 970,207.3 971,208.5 972,210.3 973,211.7 974,214.5 975,212.9 976,214.8 977,211.2 978,210.3 979,214.3 980,215.3 981,217.6 982,212.9 983,214.5 984,213.5 985,213.7 986,213.7 987,218.6 988,217.4 989,219.0 990,218.3 991,213.8 992,217.9 993,216.6 994,218.7 995,219.3 996,217.7 997,218.5 998,214.3 999,216.1 1000,219.3 1000,242.9 999,242.8 998,244.2 997,246.0 996,245.4 995,246.3 994,242.0 993,242.8 992,245.9 991,244.5 990,243.9 989,244.0 988,245.9 987,242.0 986,246.9 985,247.5 984,246.4 983,246.6 982,247.6 981,247.9 980,247.8 979,246.4 978,251.5 977,252.1 976,252.4 975,250.1 974,250.7 973,246.8 972,249.2 971,253.4 970,250.9 969,255.8 968,255.9 967,254.4 966,257.3 965,257.7 964,261.6 963,256.9 962,261.7 961,254.3 960,253.5 959,252.0 958,255.2 957,252.6 956,253.7 955,247.8 954,248.1 953,248.4 952,245.7 951,246.0 950,244.9 949,242.3 948,240.1 947,241.3 946,236.6 945,235.1 944,233.3 943,233.7 942,233.4 941,233.6 940,233.0 939,232.8 938,233.1 937,233.5 936,233.4 935,234.0 934,233.5 933,233.8 932,233.8 931,233.6 930,234.0 929,234.8 928,233.8 927,234.3 926,233.5 925,233.4 924,233.2 923,233.7 922,234.3 921,234.0 920,233.6 919,233.2 918,233.2 917,234.1 916,234.2 915,233.6 914,234.0 913,233.9 912,233.6 911,233.6 910,233.3 909,233.8 908,233.8 907,233.1 906,233.3 905,233.3 904,233.3 903,233.0 902,234.1 901,234.1 900,234.1 899,234.2 898,233.6 897,233.1 896,233.4 895,233.8 894,233.8 893,234.6 892,233.4 891,233.4 890,233.1 889,233.5 888,233.7 887,233.5 886,233.2 885,233.5 884,233.5 883,233.1 882,233.6 881,233.3 880,234.0 879,233.8 878,233.4 877,233.5 876,233.0 875,233.5 874,233.5 873,232.8 872,233.4 871,232.6 870,232.4 869,233.0 868,233.0 867,233.4 866,233.5 865,233.7 864,233.3 863,233.1 862,233.4 861,232.9 860,233.1 859,233.2 858,232.9 857,233.3 856,232.9 855,233.2 854,233.2 853,232.9 852,232.9 851,233.6 850,233.1 849,232.7 848,233.2 847,233.4 846,233.6 845,233.2 844,233.0 843,233.3 842,233.2 841,232.7 840,232.6 839,233.2 838,232.8 837,233.1 836,233.0 835,232.6 834,232.4 833,232.7 832,233.1 831,233.3 830,233.2 829,232.9 828,233.2 827,233.0 826,233.2 825,233.0 824,233.1 823,233.3 822,233.2 821,232.8 820,232.5 819,232.7 818,233.2 817,233.1 816,233.5 815,233.5 814,232.8 813,233.0 812,233.3 811,233.6 810,233.7 809,233.2 808,233.3 807,232.9 806,232.9 805,232.7 804,232.9 803,233.1 802,233.1 801,232.5 800,232.9 799,232.7 798,233.0 797,233.5 796,233.5 795,233.3 794,233.1 793,233.0 792,232.8 791,233.2 790,233.1 789,232.9 788,233.0 787,233.0 786,232.8 785,233.2 784,232.6 783,232.8 782,233.2 781,233.4 780,232.9 779,233.5 778,233.2 777,233.6 776,233.1 775,233.6 774,233.2 773,233.0 772,232.7 771,232.9 770,233.2 769,232.9 768,233.0 767,232.8 766,232.6 765,232.7 764,232.7 763,232.7 762,233.1 761,233.3 760,233.0 759,232.6 758,232.6 757,232.9 756,232.9 755,232.9 754,233.0 753,232.7 752,232.7 751,232.7 750,232.5 749,233.3 748,233.4 747,233.5 746,233.4 745,233.2 744,232.7 743,233.1 742,233.0 741,233.4 740,233.6 739,233.0 738,232.8 737,232.7 736,232.5 735,232.7 734,233.3 733,233.0 732,232.8 731,232.7 730,232.7 729,232.7 728,232.9 727,232.8 726,232.9 725,232.9 724,232.5 723,232.7 722,232.8 721,232.6 720,233.2 719,233.3 718,232.5 717,233.0 716,232.9 715,232.5 714,233.0 713,233.2 712,233.3 711,233.1 710,233.3 709,233.1 708,233.0 707,233.3 706,233.0 705,233.0 704,233.5 703,233.0 702,232.8 701,232.8 700,232.9 699,232.8 698,233.0 697,232.6 696,232.8 695,233.1 694,232.5 693,232.7 692,232.8 691,232.9 690,232.8 689,232.6 688,232.6 687,232.8 686,232.4 685,232.9 684,233.0 683,232.6 682,232.3 681,232.7 680,232.8 679,233.1 678,233.0 677,233.3 676,233.2 675,233.3 674,232.8 673,232.6 672,232.9 671,233.5 670,232.9 669,233.3 668,232.7 667,232.7 666,232.5 665,232.5 664,233.0 663,232.9 662,232.8 661,232.7 660,232.7 659,233.1 658,232.5 657,233.3 656,233.4 655,233.0 654,232.7 653,232.8 652,232.2 651,232.5 650,232.9 649,232.9 648,232.9 647,232.5 646,232.7 645,233.0 644,232.7 643,233.0 642,232.8 641,232.7 640,232.6 639,232.5 638,233.2 637,232.6 636,232.8 635,232.8 634,233.0 633,232.5 632,232.8 631,232.4 630,233.1 629,233.1 628,232.9 627,232.8 626,232.9 625,232.6 624,232.7 623,233.1 622,232.7 621,233.3 620,233.0 619,232.4 618,232.6 617,232.6 616,232.7 615,232.7 614,232.5 613,232.6 612,232.7 611,232.3 610,232.4 609,232.7 608,233.3 607,233.1 606,233.2 605,232.7 604,232.8 603,233.0 602,232.6 601,232.9 600,233.0 599,232.9 598,232.7 597,232.6 596,232.5 595,232.9 594,233.3 593,233.3 592,232.8 591,232.8 590,232.8 589,233.0 588,233.0 587,233.2 586,232.6 585,232.9 584,232.5 583,232.4 582,232.5 581,232.7 580,232.4 579,232.6 578,232.8 577,232.5 576,232.5 575,232.8 574,232.8 573,232.6 572,232.8 571,232.6 570,232.8 569,232.3 568,232.3 567,232.8 566,232.5 565,232.5 564,232.7 563,232.4 562,232.7 561,232.6 560,233.0 559,233.1 558,233.4 557,233.0 556,233.0 555,232.8 554,233.0 553,232.8 552,232.9 551,233.0 550,232.5 549,232.8 548,232.2 547,232.2 546,232.6 545,232.4 544,232.8 543,232.6 542,232.7 541,232.6 540,232.9 539,232.6 538,232.7 537,233.1 536,232.8 535,232.5 534,232.5 533,232.6 532,232.6 531,232.5 530,232.8 529,232.4 528,232.7 527,232.8 526,232.8 525,232.6 524,232.8 523,233.0 522,232.8 521,232.7 520,232.4 519,232.7 518,233.0 517,233.1 516,233.0 515,232.7 514,232.4 513,232.3 512,232.2 511,232.7 510,232.6 509,232.8 508,232.5 507,232.5 506,232.2 505,232.5 504,232.7 503,232.4 502,232.9 501,232.7 500,232.4 499,232.2 498,232.7 497,232.5 496,232.6 495,232.4 494,232.6 493,232.4 492,232.6 491,232.6 490,233.0 489,233.3 488,232.6 487,232.7 486,232.8 485,232.4 484,232.5 483,232.9 482,233.0 481,232.4 480,232.7 479,232.3 478,232.4 477,232.3 476,232.5 475,232.7 474,233.1 473,232.9 472,232.7 471,232.7 470,232.7 469,232.7 468,232.9 467,232.4 466,232.2 465,232.4 464,232.4 463,232.3 462,232.5 461,232.3 460,232.4 459,232.5 458,232.3 457,232.6 456,233.0 455,232.9 454,232.9 453,233.2 452,232.7 451,232.3 450,232.7 449,232.5 448,232.7 447,232.5 446,232.8 445,232.3 444,232.4 443,232.5 442,232.9 441,233.1 440,232.8 439,232.9 438,232.6 437,232.4 436,232.3 435,232.6 434,232.4 433,232.8 432,232.5 431,232.4 430,232.3 429,232.5 428,232.4 427,232.6 426,232.6 425,232.6 424,232.3 423,232.6 422,232.3 421,232.8 420,233.1 419,233.0 418,232.5 417,232.8 416,232.3 415,232.4 414,232.5 413,232.6 412,232.7 411,232.6 410,232.8 409,232.7 408,232.4 407,232.4 406,232.7 405,233.3 404,232.8 403,232.5 402,232.9 401,232.5 400,232.6 399,232.9 398,232.8 397,232.6 396,232.7 395,232.4 394,232.1 393,232.4 392,232.2 391,232.3 390,232.6 389,232.6 388,232.6 387,232.5 386,232.7 385,232.9 384,233.0 383,232.6 382,232.8 381,232.4 380,232.6 379,232.3 378,232.7 377,232.3 376,232.8 375,232.6 374,232.5 373,232.6 372,233.0 371,232.7 370,232.6 369,233.0 368,232.6 367,232.3 366,232.3 365,232.6 364,232.6 363,232.7 362,232.4 361,232.6 360,232.6 359,232.2 358,232.6 357,232.4 356,232.8 355,232.9 354,232.7 353,232.3 352,232.5 351,232.5 350,232.7 349,232.7 348,232.4 347,232.4 346,232.3 345,232.5 344,232.5 343,232.6 342,232.9 341,232.3 340,232.7 339,232.6 338,232.6 337,233.0 336,232.9 335,232.7 334,233.0 333,232.5 332,232.6 331,232.8 330,232.8 329,232.5 328,232.9 327,232.5 326,232.5 325,232.3 324,232.6 323,232.3 322,232.5 321,232.9 320,232.6 319,232.3 318,232.5 317,232.5 316,232.6 315,232.6 314,232.7 313,232.3 312,232.5 311,232.4 310,232.3 309,232.5 308,232.5 307,232.7 306,232.5 305,232.5 304,232.3 303,232.6 302,232.7 301,233.2 300,233.1 299,232.7 298,232.9 297,232.5 296,232.4 295,232.8 294,232.7 293,232.3 292,232.4 291,232.3 290,232.5 289,232.6 288,232.6 287,232.8 286,232.6 285,232.9 284,232.5 283,232.2 282,232.7 281,232.6 280,232.4 279,232.5 278,232.4 277,232.4 276,232.1 275,232.3 274,232.5 273,232.5 272,232.8 271,232.4 270,232.6 269,232.4 268,232.8 267,232.8 266,232.9 265,232.9 264,232.5 263,232.7 262,232.3 261,232.2 260,232.4 259,232.5 258,232.9 257,232.5 256,232.5 255,232.5 254,232.5 253,232.9 252,233.0 251,232.9 250,232.5 249,232.7 248,232.1 247,232.3 246,232.5 245,232.2 244,232.3 243,232.1 242,232.1 241,232.1 240,232.3 239,232.3 238,232.8 237,232.9 236,232.5 235,232.3 234,232.6 233,232.5 232,232.8 231,232.6 230,232.8 229,232.4 228,232.7 227,232.3 226,232.2 225,232.6 224,232.6 223,232.4 222,232.7 221,232.6 220,232.6 219,232.5 218,232.6 217,232.9 216,232.4 215,232.4 214,232.4 213,232.5 212,232.3 211,232.5 210,232.2 209,232.1 208,232.5 207,232.0 206,232.1 205,232.3 204,232.4 203,232.3 202,232.5 201,232.6 200,232.3 199,232.3 198,232.5 197,232.5 196,232.4 195,232.3 194,232.5 193,232.1 192,232.3 191,232.4 190,232.7 189,232.3 188,232.4 187,232.7 186,232.6 185,232.3 184,232.7 183,232.5 182,232.6 181,232.7 180,232.4 179,232.4 178,232.5 177,232.1 176,232.1 175,232.4 174,232.2 173,232.1 172,232.2 171,232.0 170,232.1 169,232.5 168,232.5 167,232.2 166,232.6 165,232.4 164,232.1 163,232.3 162,232.4 161,232.3 160,232.3 159,232.1 158,232.0 157,232.4 156,232.0 155,232.5 154,232.6 153,232.3 152,232.5 151,232.3 150,232.5 149,232.4 148,232.7 147,232.4 146,232.4 145,232.6 144,232.3 143,232.1 142,232.1 141,232.1 140,232.4 139,232.1 138,232.2 137,232.1 136,232.2 135,232.3 134,232.2 133,232.5 132,232.4 131,232.2 130,232.5 129,232.2 128,232.3 127,232.2 126,232.5 125,232.1 124,232.5 123,232.0 122,232.2 121,232.4 120,232.4 119,232.5 118,232.8 117,232.4 116,232.2 115,232.2 114,232.4 113,232.4 112,232.5 111,232.6 110,232.5 109,232.1 108,232.2 107,232.3 106,232.6 105,232.3 104,232.1 103,232.2 102,232.0 101,232.2 100,232.1 99,232.2 98,232.2 97,232.2 96,232.0 95,231.9 94,232.1 93,231.8 92,232.0 91,232.3 90,232.1 89,232.1 88,232.1 87,232.0 86,232.0 85,232.1 84,232.2 83,232.1 82,232.3 81,231.9 80,232.0 79,232.1 78,232.0 77,232.2 76,232.1 75,232.1 74,231.9 73,231.8 72,231.8 71,231.8 70,232.2 69,232.0 68,232.0 67,232.0 66,231.8 65,231.8 64,232.0 63,231.8 62,231.9 61,231.9 60,231.7 59,231.6 58,231.7 57,231.6 56,231.6 55,231.7 54,231.6 53,231.5 52,231.5 51,231.5 50,231.7 49,231.7 48,231.6 47,231.6 46,231.6 45,231.5 44,231.5 43,231.5 42,231.5 41,231.5 40,231.5 39,231.5 38,231.5 37,231.5 36,231.5 35,231.5 34,231.5 33,231.5 32,231.5 31,231.5 30,231.5 29,231.5 28,231.5 27,231.5 26,231.5Z" fill="#383838"/>
<path d="M26,365.5 27,365.5 28,365.5 29,365.5 30,365.5 31,365.5 32,365.5 33,365.5 34,365.5 35,365.5 36,365.5 37,365.5 38,365.5 39,365.5 40,365.5 41,365.5 42,365.5 43,365.5 44,365.5 45,365.5 46,365.5 47,365.5 48,365.5 49,365.4 50,365.3 51,365.3 52,365.2 53,365.3 54,365.3 55,365.3 56,365.2 57,365.2 58,365.1 59,365.0 60,365.1 61,365.4 62,365.1 63,365.2 64,365.2 65,365.1 66,365.0 67,365.1 68,365.2 69,365.2 70,365.0 71,364.8 72,364.8 73,364.9 74,365.2 75,365.1 76,365.1 77,365.0 78,365.0 79,364.9 80,364.9 81,365.2 82,365.2 83,365.0 84,365.0 85,364.9 86,364.8 87,365.0 88,364.8 89,364.6 90,365.0 91,364.6 92,364.5 93,364.9 94,364.7 95,364.8 96,365.0 97,364.8 98,364.9 99,364.6 100,364.8 101,364.9 102,365.0 103,364.7 104,364.8 105,364.4 106,364.4 107,364.1 108,364.7 109,365.1 110,364.7 111,364.9 112,365.0 113,364.7 114,364.8 115,365.0 116,364.9 117,365.1 118,364.8 119,364.6 120,364.6 121,364.7 122,364.4 123,364.7 124,364.6 125,364.7 126,364.9 127,364.6 128,364.5 129,364.9 130,364.8 131,364.6 132,364.8 133,364.6 134,364.6 135,364.4 136,364.5 137,364.3 138,364.6 139,364.7 140,364.8 141,364.6 142,364.8 143,364.7 144,364.9 145,364.9 146,364.8 147,365.0 148,364.7 149,364.5 150,364.9 151,364.8 152,364.6 153,364.9 154,364.7 155,364.2 156,364.6 157,364.6 158,364.5 159,364.9 160,364.5 161,364.8 162,364.5 163,364.8 164,364.4 165,364.9 166,364.8 167,364.5 168,364.6 169,364.5 170,364.2 171,364.4 172,364.5 173,364.8 174,364.4 175,364.5 176,364.1 177,364.3 178,364.5 179,364.8 180,364.8 181,364.7 182,364.7 183,364.8 184,364.8 185,364.8 186,364.9 187,364.7 188,364.7 189,364.8 190,364.5 191,364.6 192,364.7 193,364.8 194,364.5 195,364.6 196,364.5 197,364.6 198,364.5 199,364.4 200,364.7 201,364.8 202,364.6 203,364.1 204,364.4 205,364.1 206,364.6 207,364.8 208,364.7 209,364.5 210,364.7 211,364.3 212,364.3 213,364.6 214,364.6 215,364.6 216,364.7 217,364.7 218,364.5 219,364.8 220,364.6 221,364.9 222,364.7 223,364.7 224,364.2 225,364.4 226,364.2 227,364.7 228,364.6 229,364.8 230,364.6 231,364.8 232,364.4 233,364.2 234,364.5 235,364.7 236,364.8 237,364.4 238,364.2 239,364.3 240,364.5 241,364.1 242,364.1 243,364.8 244,364.7 245,364.4 246,364.6 247,364.5 248,364.5 249,364.8 250,364.8 251,364.4 252,364.7 253,364.2 254,364.7 255,364.6 256,364.5 257,364.5 258,364.8 259,364.4 260,364.6 261,364.3 262,364.3 263,364.8 264,364.9 265,364.7 266,364.3 267,364.3 268,364.4 269,364.4 270,364.9 271,364.6 272,364.6 273,364.6 274,363.8 275,364.1 276,364.6 277,364.6 278,364.4 279,364.6 280,364.3 281,364.5 282,364.7 283,364.4 284,364.7 285,364.7 286,364.5 287,364.5 288,364.1 289,364.4 290,364.3 291,364.8 292,364.3 293,364.5 294,364.4 295,364.1 296,364.3 297,364.6 298,364.5 299,364.7 300,364.6 301,364.4 302,364.3 303,364.5 304,364.3 305,364.7 306,364.6 307,364.3 308,364.4 309,364.4 310,364.3 311,364.2 312,364.5 313,364.5 314,364.2 315,364.6 316,364.5 317,364.1 318,364.5 319,364.3 320,364.8 321,364.8 322,364.2 323,364.3 324,364.6 325,364.2 326,364.5 327,364.5 328,364.4 329,364.4 330,364.2 331,364.3 332,364.7 333,365.0 334,364.7 335,364.5 336,364.7 337,364.2 338,364.5 339,364.7 340,364.6 341,364.6 342,364.3 343,364.0 344,363.9 345,364.2 346,364.5 347,364.3 348,364.7 349,364.6 350,364.6 351,364.4 352,364.2 353,364.3 354,364.8 355,364.5 356,364.2 357,364.1 358,364.4 359,364.5 360,364.5 361,364.4 362,364.6 363,364.7 364,364.5 365,364.4 366,364.4 367,364.7 368,364.7 369,364.7 370,364.7 371,364.7 372,364.3 373,364.3 374,364.3 375,364.8 376,364.6 377,364.5 378,364.3 379,364.3 380,364.0 381,364.7 382,364.2 383,364.7 384,364.7 385,364.5 386,364.5 387,364.6 388,364.3 389,364.3 390,364.3 391,364.5 392,364.3 393,364.3 394,363.9 395,364.1 396,364.4 397,364.1 398,364.7 399,364.4 400,364.3 401,364.3 402,364.8 403,364.6 404,364.6 405,364.8 406,364.6 407,364.1 408,364.4 409,364.6 410,364.7 411,364.7 412,364.6 413,364.1 414,364.5 415,364.2 416,364.8 417,364.7 418,364.5 419,364.7 420,364.4 421,364.0 422,364.3 423,364.3 424,364.2 425,364.2 426,364.5 427,363.7 428,364.1 429,364.1 430,364.1 431,364.3 432,364.3 433,364.1 434,364.3 435,364.4 436,364.4 437,364.5 438,364.7 439,364.6 440,364.8 441,364.6 442,364.2 443,364.6 444,364.2 445,364.4 446,364.3 447,364.5 448,364.4 449,364.4 450,364.7 451,364.8 452,364.8 453,364.6 454,364.3 455,364.6 456,364.5 457,364.5 458,364.7 459,364.4 460,364.1 461,364.1 462,364.3 463,363.8 464,364.5 465,364.3 466,364.4 467,364.6 468,364.7 469,364.5 470,364.6 471,364.4 472,364.7 473,364.6 474,364.5 475,364.1 476,364.6 477,364.4 478,363.9 479,364.2 480,364.6 481,364.3 482,364.2 483,364.4 484,364.1 485,364.5 486,364.8 487,364.8 488,364.7 489,364.5 490,364.0 491,364.0 492,364.3 493,364.4 494,364.3 495,364.1 496,364.2 497,364.0 498,364.1 499,363.9 500,364.3 501,364.7 502,364.4 503,364.6 504,364.5 505,363.9 506,364.2 507,364.6 508,364.4 509,364.6 510,364.4 511,364.0 512,364.3 513,364.2 514,364.1 515,364.5 516,364.8 517,364.5 518,364.3 519,364.4 520,364.7 521,364.5 522,364.8 523,364.6 524,364.5 525,364.4 526,364.2 527,364.6 528,364.3 529,364.4 530,364.5 531,364.1 532,364.3 533,363.9 534,364.1 535,364.1 536,364.7 537,364.4 538,364.4 539,364.0 540,364.1 541,364.0 542,364.6 543,364.5 544,364.5 545,364.0 546,364.2 547,363.9 548,364.3 549,364.5 550,364.3 551,364.8 552,364.2 553,364.4 554,364.6 555,364.7 556,364.6 557,364.8 558,364.4 559,364.5 560,364.2 561,364.1 562,364.2 563,364.6 564,364.4 565,364.0 566,364.3 567,364.2 568,364.4 569,364.1 570,364.3 571,364.7 572,364.2 573,364.3 574,364.4 575,364.0 576,364.0 577,364.2 578,364.5 579,364.0 580,364.3 581,363.9 582,364.2 583,364.4 584,364.5 585,364.6 586,364.6 587,364.5 588,364.4 589,364.2 590,364.6 591,364.6 592,364.4 593,364.3 594,364.4 595,364.1 596,364.3 597,364.3 598,364.0 599,364.3 600,364.2 601,364.0 602,364.0 603,364.3 604,364.1 605,364.6 606,364.2 607,364.6 608,364.2 609,364.4 610,364.0 611,364.4 612,364.0 613,363.9 614,364.1 615,364.2 616,363.9 617,364.0 618,364.2 619,364.6 620,364.8 621,364.5 622,364.1 623,364.5 624,364.2 625,364.4 626,364.6 627,364.4 628,364.6 629,364.2 630,363.8 631,363.8 632,364.1 633,364.6 634,364.6 635,364.7 636,364.4 637,364.2 638,364.2 639,364.5 640,364.6 641,364.5 642,364.6 643,364.0 644,363.8 645,364.0 646,363.9 647,364.0 648,364.4 649,364.3 650,364.1 651,363.8 652,363.9 653,364.1 654,364.3 655,364.2 656,364.8 657,364.4 658,363.9 659,364.3 660,364.5 661,364.4 662,364.7 663,364.2 664,364.2 665,364.0 666,364.1 667,364.5 668,364.3 669,364.5 670,364.2 671,364.5 672,364.1 673,364.2 674,364.6 675,364.5 676,364.6 677,364.2 678,364.2 679,363.8 680,364.1 681,363.8 682,363.8 683,364.3 684,364.1 685,363.7 686,364.0 687,363.7 688,364.1 689,364.2 690,364.4 691,364.0 692,364.2 693,364.3 694,363.9 695,364.5 696,364.4 697,364.6 698,364.4 699,364.0 700,363.7 701,364.3 702,364.5 703,364.4 704,364.8 705,364.5 706,364.2 707,364.4 708,364.3 709,364.4 710,364.5 711,364.2 712,364.2 713,364.4 714,364.1 715,363.6 716,363.9 717,363.8 718,363.9 719,364.2 720,364.0 721,363.9 722,363.9 723,364.5 724,364.1 725,364.5 726,364.1 727,364.2 728,364.2 729,363.7 730,364.2 731,364.4 732,364.4 733,364.1 734,363.8 735,363.8 736,364.1 737,364.2 738,364.2 739,364.3 740,364.4 741,364.2 742,364.1 743,364.4 744,364.0 745,364.2 746,364.2 747,363.8 748,364.2 749,363.7 750,364.1 751,363.7 752,364.5 753,363.9 754,364.3 755,364.3 756,363.7 757,363.7 758,364.3 759,364.5 760,364.3 761,364.3 762,364.1 763,363.7 764,364.3 765,364.3 766,364.1 767,364.4 768,364.1 769,364.0 770,364.3 771,363.7 772,364.0 773,364.4 774,364.6 775,364.2 776,364.1 777,364.3 778,364.1 779,364.4 780,364.3 781,364.2 782,364.3 783,363.5 784,364.0 785,363.8 786,364.1 787,363.8 788,364.3 789,363.6 790,363.7 791,364.0 792,364.1 793,364.1 794,364.5 795,364.4 796,364.3 797,363.8 798,363.8 799,363.6 800,364.1 801,363.9 802,364.0 803,363.9 804,363.9 805,363.9 806,364.3 807,363.9 808,364.4 809,364.6 810,363.9 811,364.0 812,364.2 813,364.1 814,364.3 815,364.2 816,363.8 817,363.9 818,364.0 819,363.5 820,364.0 821,364.2 822,364.1 823,363.9 824,364.3 825,363.9 826,364.0 827,364.1 828,364.2 829,364.1 830,364.2 831,363.7 832,363.4 833,363.5 834,363.8 835,363.7 836,363.9 837,364.1 838,363.7 839,363.5 840,364.1 841,364.1 842,364.6 843,364.1 844,364.4 845,364.5 846,363.8 847,364.4 848,364.0 849,363.8 850,364.4 851,364.2 852,363.9 853,363.8 854,364.0 855,363.7 856,364.1 857,364.5 858,364.4 859,364.4 860,363.9 861,364.1 862,364.3 863,364.0 864,364.1 865,364.1 866,363.9 867,363.4 868,363.5 869,363.9 870,363.9 871,364.1 872,363.8 873,363.6 874,363.8 875,363.8 876,363.7 877,364.0 878,364.3 879,363.6 880,363.8 881,363.6 882,363.9 883,363.4 884,363.6 885,363.8 886,363.9 887,363.3 888,363.2 889,363.7 890,364.0 891,363.7 892,364.4 893,364.2 894,363.8 895,363.9 896,363.9 897,363.2 898,363.7 899,363.5 900,363.6 901,363.3 902,362.9 903,363.2 904,363.4 905,363.8 906,363.4 907,363.6 908,363.6 909,362.8 910,363.2 911,363.2 912,363.8 913,363.8 914,364.1 915,363.6 916,363.2 917,363.3 918,362.9 919,363.9 920,363.5 921,363.1 922,363.5 923,363.0 924,363.6 925,363.4 926,363.9 927,363.8 928,363.7 929,363.6 930,363.2 931,363.8 932,363.4 933,363.6 934,363.6 935,363.5 936,363.4 937,363.0 938,362.7 939,362.8 940,363.7 941,364.0 942,363.8 943,363.3 944,363.3 945,360.5 946,359.4 947,358.1 948,355.9 949,356.4 950,354.5 951,351.6 952,351.4 953,351.5 954,347.8 955,353.3 956,349.3 957,343.9 958,348.7 959,350.1 960,348.0 961,350.5 962,352.7 963,349.3 964,350.9 965,348.0 966,343.5 967,350.0 968,346.4 969,350.7 970,349.2 971,349.2 972,349.9 973,348.4 974,352.9 975,352.7 976,354.9 977,354.2 978,350.1 979,349.8 980,350.5 981,351.7 982,356.0 983,354.1 984,354.4 985,353.6 986,348.1 987,348.3 988,353.8 989,354.7 990,355.4 991,353.6 992,353.0 993,355.5 994,357.0 995,357.1 996,357.6 997,359.3 998,358.8 999,356.4 1000,356.1 1000,376.6 999,377.0 998,374.8 997,374.7 996,375.0 995,374.9 994,375.3 993,379.3 992,376.3 991,375.8 990,377.3 989,379.9 988,379.5 987,383.3 986,382.4 985,379.3 984,381.3 983,380.7 982,377.8 981,381.1 980,377.8 979,382.2 978,378.6 977,378.0 976,380.2 975,379.1 974,379.4 973,383.9 972,382.5 971,382.8 970,382.5 969,382.9 968,380.4 967,382.5 966,382.5 965,382.3 964,381.3 963,385.0 962,382.4 961,381.7 960,386.8 959,385.7 958,382.3 957,386.7 956,381.2 955,382.8 954,382.4 953,380.9 952,382.3 951,382.6 950,377.3 949,375.0 948,374.7 947,375.0 946,372.1 945,371.6 944,368.5 943,368.5 942,368.1 941,368.7 940,368.1 939,369.1 938,368.7 937,368.7 936,368.9 935,368.9 934,368.2 933,368.1 932,368.0 931,368.1 930,368.3 929,368.3 928,367.7 927,368.0 926,367.9 925,368.0 924,368.8 923,368.4 922,368.3 921,368.7 920,368.4 919,368.6 918,368.7 917,368.3 916,368.5 915,368.6 914,368.5 913,368.2 912,367.9 911,368.3 910,368.2 909,368.9 908,368.3 907,368.5 906,368.5 905,368.4 904,368.4 903,368.6 902,369.2 901,368.5 900,368.9 899,368.3 898,368.5 897,368.3 896,368.5 895,368.5 894,368.3 893,368.2 892,367.9 891,367.9 890,367.9 889,368.2 888,368.9 887,368.4 886,368.4 885,367.8 884,368.0 883,368.3 882,368.5 881,368.5 880,368.3 879,367.9 878,367.7 877,367.6 876,368.2 875,368.2 874,368.5 873,368.6 872,368.1 871,368.5 870,368.5 869,368.5 868,368.9 867,368.3 866,367.8 865,368.0 864,367.8 863,367.5 862,367.8 861,368.0 860,368.3 859,367.8 858,367.7 857,367.5 856,367.9 855,367.9 854,368.1 853,368.5 852,368.1 851,368.0 850,367.5 849,367.8 848,367.6 847,368.2 846,368.1 845,368.0 844,367.6 843,367.8 842,367.9 841,368.0 840,368.3 839,368.0 838,368.1 837,367.8 836,368.1 835,368.3 834,368.4 833,368.2 832,368.5 831,367.8 830,367.7 829,367.9 828,368.0 827,367.9 826,367.9 825,368.3 824,367.7 823,367.8 822,368.0 821,368.0 820,367.7 819,368.5 818,368.1 817,367.9 816,367.6 815,367.9 814,367.5 813,367.8 812,367.8 811,367.7 810,367.7 809,367.3 808,367.5 807,368.1 806,367.9 805,367.9 804,368.1 803,368.0 802,367.8 801,368.1 800,367.9 799,368.2 798,368.5 797,368.0 796,367.7 795,368.2 794,367.8 793,367.5 792,368.2 791,367.9 790,368.4 789,368.2 788,367.8 787,367.8 786,368.4 785,367.8 784,367.9 783,368.5 782,368.1 781,367.5 780,367.8 779,367.8 778,367.5 777,368.2 776,367.6 775,367.8 774,367.5 773,367.6 772,367.8 771,368.1 770,367.9 769,368.3 768,367.8 767,367.6 766,367.9 765,368.3 764,367.7 763,367.9 762,367.8 761,367.9 760,367.9 759,367.9 758,367.7 757,368.0 756,367.9 755,368.3 754,367.9 753,367.9 752,367.5 751,367.7 750,368.5 749,368.2 748,367.9 747,367.9 746,367.6 745,367.4 744,367.6 743,367.6 742,367.9 741,368.0 740,367.6 739,367.5 738,367.4 737,367.5 736,367.9 735,368.1 734,368.0 733,368.2 732,367.8 731,367.6 730,367.7 729,368.4 728,367.8 727,368.1 726,367.7 725,367.6 724,367.9 723,367.8 722,367.8 721,368.1 720,368.3 719,368.1 718,368.0 717,367.6 716,368.2 715,368.0 714,368.5 713,367.6 712,367.9 711,367.8 710,367.5 709,367.6 708,367.7 707,367.7 706,367.8 705,367.7 704,367.2 703,367.7 702,367.8 701,367.7 700,368.2 699,368.1 698,367.5 697,367.6 696,367.7 695,367.8 694,367.8 693,368.1 692,367.5 691,367.7 690,367.5 689,367.7 688,367.6 687,368.1 686,367.8 685,368.4 684,367.9 683,367.7 682,367.9 681,368.1 680,367.7 679,367.9 678,367.6 677,367.5 676,367.7 675,367.3 674,367.3 673,367.7 672,367.7 671,367.9 670,367.9 669,367.8 668,367.6 667,367.8 666,367.9 665,368.2 664,368.2 663,367.5 662,367.5 661,367.7 660,367.7 659,367.7 658,367.7 657,367.6 656,367.4 655,367.9 654,367.8 653,367.5 652,367.7 651,368.4 650,367.8 649,368.2 648,368.1 647,368.0 646,368.3 645,368.1 644,368.1 643,367.6 642,367.9 641,367.3 640,367.8 639,367.6 638,367.4 637,367.9 636,367.8 635,367.4 634,367.9 633,367.9 632,368.0 631,367.7 630,367.8 629,367.4 628,367.7 627,367.4 626,367.5 625,367.6 624,367.7 623,367.8 622,367.9 621,367.7 620,367.5 619,367.4 618,367.7 617,368.0 616,368.5 615,368.3 614,367.6 613,367.9 612,367.5 611,367.9 610,368.0 609,367.8 608,367.9 607,367.8 606,367.7 605,367.3 604,367.8 603,368.0 602,367.6 601,367.6 600,367.5 599,367.4 598,367.9 597,367.7 596,367.8 595,367.6 594,367.6 593,367.7 592,367.2 591,367.3 590,367.6 589,367.5 588,367.5 587,367.8 586,367.4 585,367.5 584,367.6 583,368.1 582,368.1 581,367.9 580,367.8 579,367.8 578,367.9 577,367.5 576,368.0 575,368.0 574,368.1 573,367.5 572,367.7 571,367.4 570,367.8 569,367.6 568,367.7 567,367.8 566,367.7 565,367.5 564,367.4 563,367.8 562,367.6 561,367.7 560,367.7 559,367.9 558,367.5 557,367.2 556,367.3 555,367.3 554,367.6 553,367.9 552,367.7 551,367.2 550,367.6 549,367.7 548,367.6 547,368.3 546,367.8 545,367.5 544,368.0 543,367.7 542,367.7 541,367.7 540,367.5 539,367.7 538,367.8 537,367.7 536,367.3 535,367.7 534,367.7 533,367.8 532,368.0 531,368.1 530,367.8 529,367.9 528,367.4 527,367.9 526,367.7 525,367.5 524,367.7 523,367.3 522,367.3 521,367.4 520,367.3 519,367.3 518,367.3 517,367.9 516,367.5 515,367.2 514,367.5 513,367.9 512,367.8 511,367.9 510,368.0 509,367.4 508,367.5 507,367.5 506,367.4 505,368.0 504,367.8 503,367.8 502,367.8 501,367.6 500,367.7 499,367.7 498,367.6 497,367.6 496,368.0 495,367.7 494,367.5 493,367.4 492,367.6 491,367.7 490,368.0 489,367.5 488,367.3 487,367.4 486,367.5 485,367.5 484,367.4 483,367.4 482,367.3 481,367.5 480,367.2 479,367.5 478,367.5 477,368.0 476,367.4 475,367.6 474,367.5 473,367.5 472,367.7 471,367.7 470,367.4 469,367.8 468,367.6 467,367.8 466,367.4 465,367.7 464,368.0 463,368.3 462,368.2 461,368.0 460,367.9 459,367.8 458,367.8 457,367.6 456,367.7 455,367.4 454,367.8 453,367.2 452,367.5 451,367.6 450,367.3 449,367.5 448,367.7 447,367.8 446,367.3 445,367.8 444,367.4 443,367.6 442,367.8 441,367.7 440,367.6 439,367.7 438,367.2 437,367.4 436,367.6 435,367.7 434,367.5 433,367.8 432,367.7 431,367.8 430,367.8 429,367.9 428,368.2 427,368.0 426,367.8 425,367.4 424,367.9 423,367.6 422,367.8 421,367.8 420,367.7 419,367.4 418,367.5 417,367.5 416,367.6 415,367.9 414,367.9 413,368.0 412,367.7 411,367.7 410,367.2 409,367.7 408,367.3 407,367.9 406,367.7 405,367.5 404,367.1 403,367.2 402,367.4 401,367.7 400,367.5 399,367.3 398,367.5 397,367.7 396,367.4 395,367.4 394,368.1 393,367.6 392,368.2 391,367.5 390,367.4 389,367.8 388,367.5 387,367.3 386,367.5 385,367.9 384,367.4 383,367.6 382,367.3 381,367.6 380,367.8 379,367.9 378,367.6 377,367.9 376,367.4 375,367.3 374,367.5 373,367.6 372,367.4 371,367.3 370,367.3 369,367.0 368,367.2 367,367.2 366,367.3 365,367.9 364,367.5 363,367.3 362,367.5 361,367.5 360,367.3 359,367.7 358,368.2 357,367.4 356,367.5 355,367.4 354,367.2 353,367.4 352,367.5 351,367.5 350,367.7 349,367.7 348,367.5 347,367.5 346,367.4 345,367.7 344,367.9 343,367.9 342,367.6 341,367.7 340,367.3 339,367.4 338,367.6 337,367.7 336,367.6 335,367.4 334,367.2 333,367.3 332,367.3 331,367.6 330,367.3 329,367.4 328,367.7 327,367.4 326,367.4 325,367.6 324,367.7 323,368.0 322,367.8 321,367.6 320,367.3 319,367.3 318,367.3 317,367.6 316,367.5 315,367.6 314,367.6 313,367.5 312,367.4 311,367.9 310,368.0 309,368.1 308,368.0 307,367.8 306,367.5 305,367.6 304,367.5 303,367.5 302,367.5 301,367.5 300,367.2 299,367.1 298,367.5 297,367.4 296,367.7 295,367.5 294,367.3 293,367.6 292,367.7 291,367.5 290,367.7 289,367.6 288,367.8 287,367.6 286,367.4 285,367.1 284,367.2 283,367.4 282,367.5 281,367.5 280,367.9 279,367.7 278,367.4 277,367.6 276,367.6 275,367.8 274,368.1 273,367.6 272,367.7 271,367.5 270,367.5 269,367.4 268,367.5 267,367.4 266,367.3 265,367.5 264,367.3 263,367.2 262,367.3 261,367.4 260,367.7 259,367.4 258,367.6 257,367.2 256,367.5 255,367.6 254,367.4 253,367.4 252,367.6 251,367.3 250,367.5 249,367.1 248,367.6 247,367.6 246,367.8 245,367.6 244,367.5 243,367.5 242,367.4 241,367.9 240,367.7 239,367.9 238,367.8 237,367.4 236,367.3 235,367.3 234,367.4 233,367.5 232,367.5 231,367.4 230,367.5 229,367.2 228,367.3 227,367.2 226,367.6 225,367.7 224,367.6 223,367.3 222,367.3 221,367.5 220,367.5 219,367.6 218,367.4 217,367.2 216,367.2 215,367.4 214,367.3 213,367.3 212,367.4 211,367.7 210,367.5 209,367.3 208,367.6 207,367.2 206,367.7 205,367.5 204,367.6 203,367.8 202,367.2 201,367.4 200,367.4 199,367.3 198,367.5 197,367.8 196,367.2 195,367.2 194,367.4 193,367.2 192,367.6 191,367.8 190,367.7 189,367.4 188,367.2 187,367.2 186,367.0 185,367.5 184,367.1 183,367.4 182,367.1 181,367.2 180,367.1 179,367.3 178,367.2 177,367.6 176,367.9 175,367.4 174,367.3 173,367.3 172,367.3 171,367.5 170,367.5 169,367.6 168,367.5 167,367.6 166,367.4 165,367.2 164,367.4 163,367.6 162,367.3 161,367.4 160,367.2 159,367.5 158,367.3 157,367.6 156,367.7 155,367.5 154,367.3 153,367.1 152,367.3 151,367.0 150,367.2 149,367.2 148,367.2 147,367.0 146,367.1 145,366.9 144,367.3 143,367.6 142,367.2 141,367.2 140,367.3 139,367.4 138,367.3 137,367.6 136,367.2 135,367.2 134,367.7 133,367.4 132,367.4 131,367.1 130,367.2 129,367.3 128,367.3 127,367.5 126,367.4 125,367.5 124,367.1 123,367.2 122,367.4 121,367.4 120,367.2 119,367.2 118,367.1 117,367.1 116,367.3 115,367.0 114,367.0 113,367.1 112,367.3 111,367.0 110,367.2 109,367.2 108,367.4 107,367.6 106,368.1 105,367.3 104,367.4 103,367.1 102,367.3 101,367.1 100,367.3 99,367.2 98,367.1 97,367.0 96,366.9 95,367.3 94,367.3 93,367.4 92,367.4 91,367.1 90,367.1 89,367.1 88,367.0 87,367.4 86,367.3 85,367.3 84,366.9 83,367.0 82,366.8 81,367.0 80,367.1 79,366.9 78,367.1 77,367.1 76,366.7 75,366.8 74,366.9 73,366.9 72,366.9 71,367.0 70,367.0 69,366.7 68,367.0 67,366.8 66,366.9 65,366.9 64,366.8 63,366.9 62,366.9 61,366.7 60,366.7 59,366.8 58,366.8 57,366.8 56,366.8 55,366.8 54,366.6 53,366.7 52,366.6 51,366.6 50,366.7 49,366.5 48,366.5 47,366.5 46,366.5 45,366.5 44,366.5 43,366.5 42,366.5 41,366.5 40,366.5 39,366.5 38,366.5 37,366.5 36,366.5 35,366.5 34,366.5 33,366.5 32,366.5 31,366.5 30,366.5 29,366.5 28,366.5 27,366.5 26,366.5Z" fill="#383838"/>
</svg>
<div class="a" style="left:25px;top:164px;width:2px;height:269px;background:#3fa83f;box-shadow:0.8px 0 0 #a8eca0,-0.5px 0 0 #c8f0c0"></div>
<div class="a" style="left:27px;top:164px;width:66px;height:15px;background:rgba(245,245,245,0.9)"></div>
<div class="t" style="left:28.5px;top:166px;font-size:11.3px;color:#1a1a1a">Merkteken 1</div>

<!-- GUTTER -->
<div id="gutter" class="a"></div>
<div class="a" style="left:0;top:298px;width:12px;height:1px;background:#707070"></div>
<div class="gl" style="top:190px">6</div>
<div class="gl" style="top:226.5px;font-weight:bold;left:1.5px;font-size:10.2px">L</div>
<div class="gl" style="top:257px">6</div>
<div class="gl" style="top:325px">6</div>
<div class="gl" style="top:361.8px;font-weight:bold;left:1px;font-size:10.2px">R</div>
<div class="gl" style="top:393px">6</div>

<!-- HBAR -->
<div id="hbar" class="a"></div>
<div class="a" style="left:12px;top:433px;width:161px;height:12px;background:linear-gradient(#e8e8e8,#f4f4f4)"></div>
<div class="t" style="left:-0.5px;top:434.5px;font-size:9.5px;color:#222;-webkit-text-stroke:0">1x</div>
<div class="a" style="left:16px;top:438.5px;width:154px;height:3px;border-radius:1.5px;background:linear-gradient(#8a8a8a,#c8c8c8)"></div>
<div class="tk" style="left:18px;top:434px;height:3px;background:#9a9a9a"></div>
<div class="tk" style="left:21.5px;top:434px;height:3px;background:#9a9a9a"></div>
<div class="tk" style="left:24.5px;top:434px;height:3px;background:#9a9a9a"></div>
<div class="tk" style="left:29.5px;top:434px;height:3px;background:#9a9a9a"></div>
<div class="tk" style="left:41.5px;top:434px;height:3px;background:#9a9a9a"></div>
<div class="tk" style="left:64px;top:434px;height:3px;background:#9a9a9a"></div>
<div class="tk" style="left:112.5px;top:434px;height:3px;background:#9a9a9a"></div>
<svg class="a" style="left:90.5px;top:433px" width="11" height="13" viewBox="0 0 11 13">
<path d="M5.5 0.6C7.8 3 10.4 5.2 10.4 8.3C10.4 11 8.2 12.6 5.5 12.6C2.8 12.6 0.6 11 0.6 8.3C0.6 5.2 3.2 3 5.5 0.6Z" fill="url(#kg)" stroke="#777" stroke-width="0.7"/>
<defs><linearGradient id="kg" x1="0" y1="0" x2="0" y2="1"><stop offset="0" stop-color="#cfcfcf"/><stop offset="1" stop-color="#7e7e7e"/></linearGradient></defs>
</svg>
<div class="a" style="left:173px;top:433px;width:60px;height:13px;background:linear-gradient(#fbfbfb,#ededed);border-left:1px solid #c6c6c6;border-right:1px solid #c6c6c6"></div>
<div class="t" style="left:187.5px;top:434px;font-size:9.4px;letter-spacing:0.15px;color:#1a1a1a;-webkit-text-stroke:0">1024</div>
<svg class="a" style="left:222px;top:437px" width="7" height="5" viewBox="0 0 7 5"><path d="M0.3 0.3H6.7L3.5 4.7z" fill="#333"/></svg>
<div class="a" style="left:235px;top:436px;width:34px;height:7px;border-radius:3.5px;background:#c9c9c9"></div>

<!-- TRANSPORT -->
<div id="transport" class="a"></div>
<svg class="a" style="left:10.5px;top:452px" width="7" height="13" viewBox="0 0 7 13">
<rect x="1.5" y="0.5" width="4" height="8" rx="2" fill="#3a3a3a"/>
<path d="M3.5 8.5V11.5M1 12H6" stroke="#3a3a3a" stroke-width="1.2"/>
</svg>
<div class="t" style="left:7px;top:466.5px;font-size:9.5px;color:#555">35</div>
<div class="meter" style="left:24px;top:452px;width:316px"></div>
<div class="meter" style="left:24px;top:459px;width:316px"></div>
<div class="mdot" style="left:342.5px;top:452px"></div>
<div class="mdot" style="left:342.5px;top:459px"></div>
<div class="track" style="left:24px;top:470px;width:322px"></div>
<div class="knob" style="left:133px;top:466.5px"></div>

<div class="seg" style="left:364.5px;width:144.5px;border-radius:4px"></div>
<div class="a" style="left:392.5px;top:450.5px;width:1px;height:25px;background:#4e4e4e"></div>
<div class="a" style="left:421px;top:450.5px;width:1px;height:25px;background:#4e4e4e"></div>
<div class="a" style="left:450px;top:450.5px;width:1px;height:25px;background:#4e4e4e"></div>
<div class="a" style="left:479px;top:450.5px;width:1px;height:25px;background:#4e4e4e"></div>
<svg class="a" style="left:364px;top:450px" width="146" height="26" viewBox="0 0 146 26">
<rect x="9" y="8.4" width="1.4" height="9.2" fill="#505050"/>
<path d="M11 13L19 8.4V17.6Z" fill="#505050"/>
<path d="M42.8 8.9L34.2 12.9L42.8 16.9ZM51.5 8.9L42.9 12.9L51.5 16.9Z" fill="#505050"/>
<path d="M63.8 8.9L72.4 12.9L63.8 16.9ZM72.6 8.9L81.2 12.9L72.6 16.9Z" fill="#505050"/>
<path d="M95.8 6.8L107.8 13L95.8 19.2Z" fill="#4a4a4a"/>
<circle cx="130.3" cy="13.2" r="5.4" fill="url(#rg)"/>
<defs><radialGradient id="rg" cx="0.45" cy="0.4" r="0.65"><stop offset="0" stop-color="#e84858"/><stop offset="0.6" stop-color="#c01428"/><stop offset="1" stop-color="#80101c"/></radialGradient></defs>
</svg>
<div class="t" style="left:525px;top:455.5px;font-size:15.5px;color:#161616">0'00,0000</div>
<div class="seg" style="left:608.5px;width:29.5px;border-radius:4px;background:linear-gradient(#f2f2f2,#e2e2e2 48%,#cdcdcd 52%,#bdbdbd)"></div>
<svg class="a" style="left:614px;top:455px" width="18" height="16" viewBox="0 0 18 16">
<path d="M9.87 3.28A5 5 0 0 0 4.67 10.7M8.13 13.12A5 5 0 0 0 13.33 5.7" stroke="#3e3e3e" stroke-width="1.7" fill="none"/>
<path d="M12.6 3.3L9.3 0.9V5.7ZM5.4 13.1L8.7 10.7V15.5Z" fill="#3e3e3e"/>
</svg>

<svg class="a" style="left:661.5px;top:453.5px" width="8" height="9" viewBox="0 0 8 9">
<path d="M0.5 3H3L7 0.3V8.7L3 6H0.5Z" fill="#333"/>
</svg>
<div class="t" style="left:655px;top:466.5px;font-size:9.5px;color:#555">0,0</div>
<div class="meter" style="left:678px;top:452px;width:308px"></div>
<div class="meter" style="left:678px;top:459px;width:308px"></div>
<div class="mdot" style="left:987.5px;top:452px"></div>
<div class="mdot" style="left:987.5px;top:459px"></div>
<div class="track" style="left:678px;top:470px;width:315px"></div>
<div class="knob" style="left:905.5px;top:466.5px"></div>

</body></html>
